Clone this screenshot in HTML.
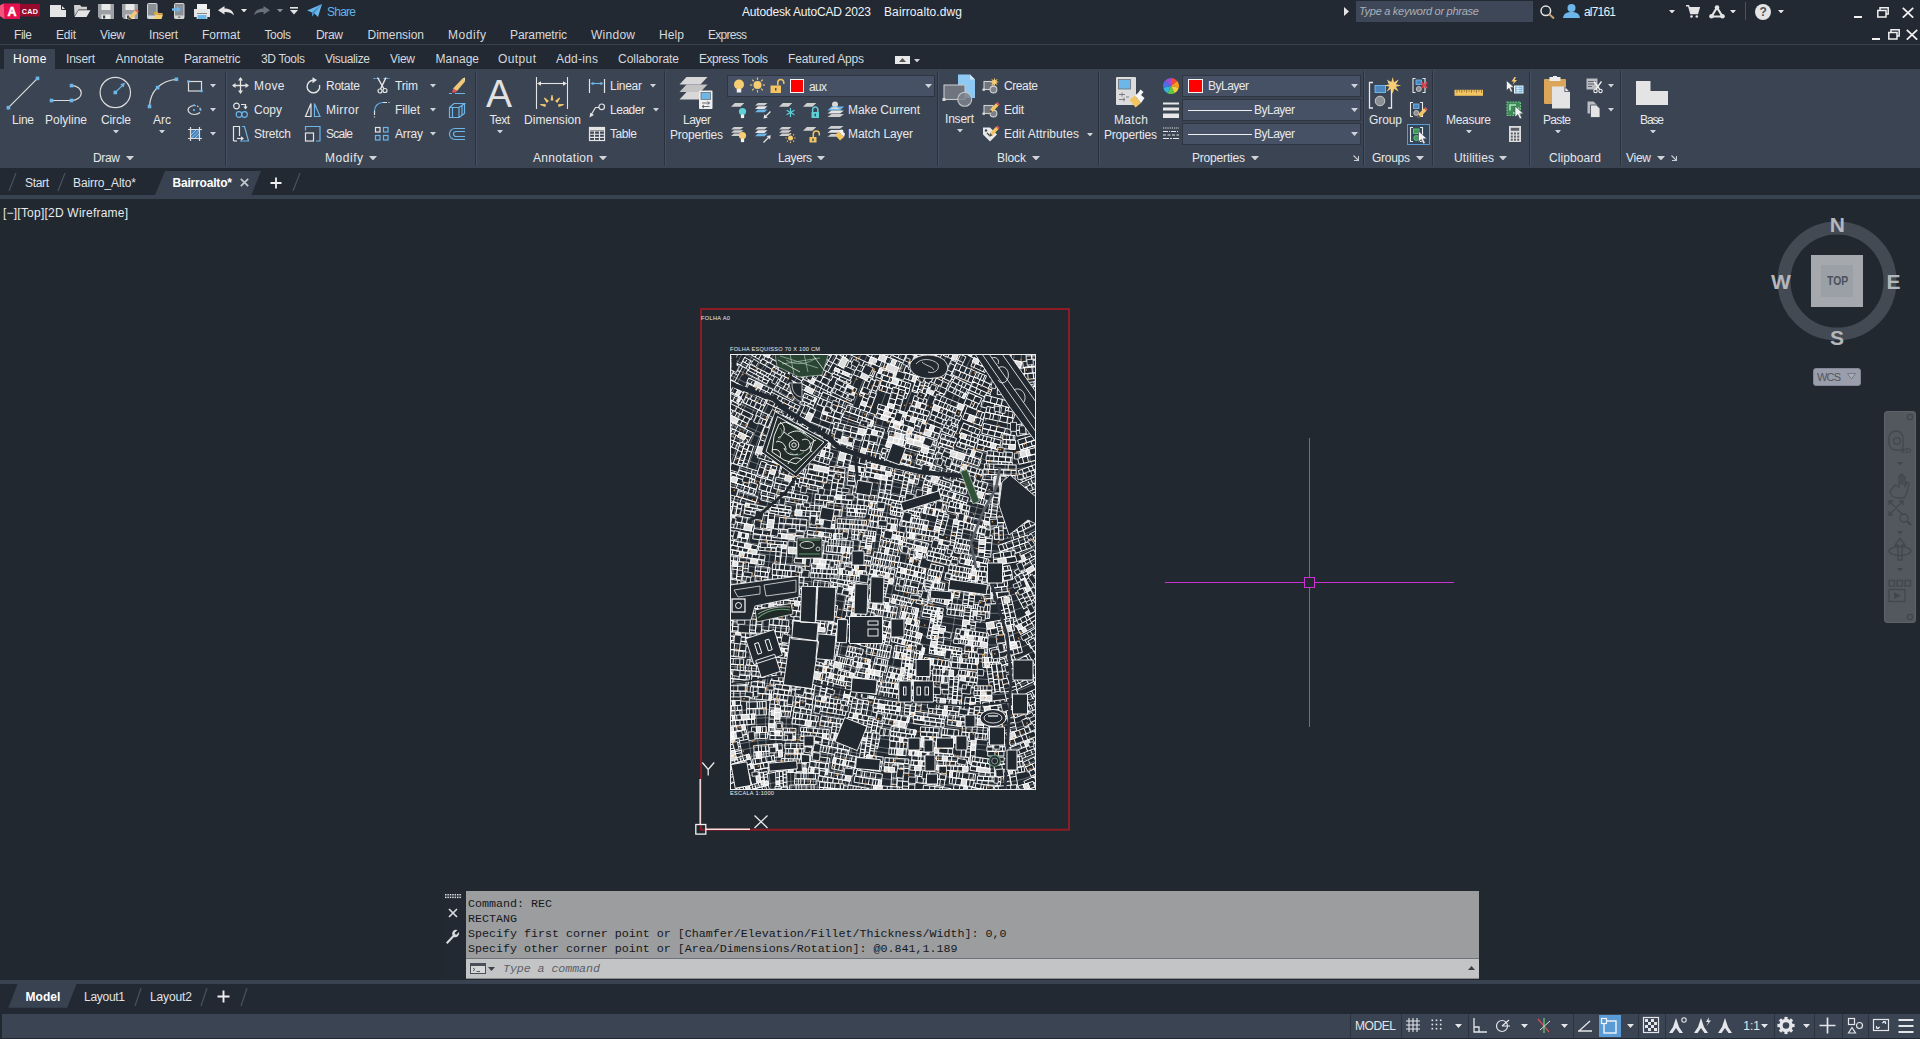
<!DOCTYPE html>
<html><head><meta charset="utf-8"><title>Autodesk AutoCAD 2023 - Bairroalto.dwg</title>
<style>
html,body{margin:0;padding:0;}
body{width:1920px;height:1039px;overflow:hidden;background:#212830;position:relative;font-family:"Liberation Sans",sans-serif;}
.a{position:absolute;display:block;}
.t{position:absolute;white-space:nowrap;display:block;}
</style></head><body>
<div class="a" style="left:0px;top:0px;width:1920px;height:69px;background:#222933;"></div>
<div class="a" style="left:0px;top:44px;width:1920px;height:1px;background:#3a414c;"></div>
<div class="a" style="left:0px;top:69px;width:1920px;height:99px;background:#3b4453;"></div>
<div class="a" style="left:4px;top:49px;width:51px;height:21px;background:#3b4453;"></div>
<div class="a" style="left:0px;top:168px;width:1920px;height:27px;background:#222933;"></div>
<div class="a" style="left:0px;top:195px;width:1920px;height:4px;background:#394250;"></div>
<span class="t" style="left:327.00px;top:4.84px;font:normal 400 12px/14px 'Liberation Sans',sans-serif;color:#5fb4e8;letter-spacing:-0.755px;">Share</span>
<span class="t" style="left:742.00px;top:5.34px;font:normal 400 12px/14px 'Liberation Sans',sans-serif;color:#f0f1f2;letter-spacing:-0.188px;">Autodesk AutoCAD 2023</span>
<span class="t" style="left:884.00px;top:5.34px;font:normal 400 12px/14px 'Liberation Sans',sans-serif;color:#f0f1f2;letter-spacing:0.100px;">Bairroalto.dwg</span>
<div class="a" style="left:1356px;top:1px;width:177px;height:21px;background:#3e4758;"></div>
<span class="t" style="left:1359.00px;top:4.69px;font:italic 400 11px/13px 'Liberation Sans',sans-serif;color:#aab0b8;letter-spacing:-0.285px;">Type a keyword or phrase</span>
<span class="t" style="left:1584.00px;top:4.84px;font:normal 400 12px/14px 'Liberation Sans',sans-serif;color:#f0f1f2;letter-spacing:-0.807px;">al7161</span>
<span class="t" style="left:14.00px;top:27.64px;font:normal 400 12px/14px 'Liberation Sans',sans-serif;color:#d6d9dd;letter-spacing:-0.445px;">File</span>
<span class="t" style="left:56.00px;top:27.64px;font:normal 400 12px/14px 'Liberation Sans',sans-serif;color:#d6d9dd;letter-spacing:-0.226px;">Edit</span>
<span class="t" style="left:100.00px;top:27.64px;font:normal 400 12px/14px 'Liberation Sans',sans-serif;color:#d6d9dd;letter-spacing:-0.264px;">View</span>
<span class="t" style="left:149.00px;top:27.64px;font:normal 400 12px/14px 'Liberation Sans',sans-serif;color:#d6d9dd;letter-spacing:-0.202px;">Insert</span>
<span class="t" style="left:202.00px;top:27.64px;font:normal 400 12px/14px 'Liberation Sans',sans-serif;color:#d6d9dd;letter-spacing:-0.001px;">Format</span>
<span class="t" style="left:264.50px;top:27.64px;font:normal 400 12px/14px 'Liberation Sans',sans-serif;color:#d6d9dd;letter-spacing:-0.378px;">Tools</span>
<span class="t" style="left:316.00px;top:27.64px;font:normal 400 12px/14px 'Liberation Sans',sans-serif;color:#d6d9dd;letter-spacing:-0.334px;">Draw</span>
<span class="t" style="left:367.50px;top:27.64px;font:normal 400 12px/14px 'Liberation Sans',sans-serif;color:#d6d9dd;letter-spacing:-0.024px;">Dimension</span>
<span class="t" style="left:448.00px;top:27.64px;font:normal 400 12px/14px 'Liberation Sans',sans-serif;color:#d6d9dd;letter-spacing:0.531px;">Modify</span>
<span class="t" style="left:510.00px;top:27.64px;font:normal 400 12px/14px 'Liberation Sans',sans-serif;color:#d6d9dd;letter-spacing:-0.113px;">Parametric</span>
<span class="t" style="left:591.00px;top:27.64px;font:normal 400 12px/14px 'Liberation Sans',sans-serif;color:#d6d9dd;letter-spacing:0.264px;">Window</span>
<span class="t" style="left:659.00px;top:27.64px;font:normal 400 12px/14px 'Liberation Sans',sans-serif;color:#d6d9dd;letter-spacing:0.107px;">Help</span>
<span class="t" style="left:708.00px;top:27.64px;font:normal 400 12px/14px 'Liberation Sans',sans-serif;color:#d6d9dd;letter-spacing:-0.725px;">Express</span>
<span class="t" style="left:13.00px;top:52.04px;font:normal 400 12px/14px 'Liberation Sans',sans-serif;color:#ffffff;letter-spacing:0.497px;">Home</span>
<span class="t" style="left:66.00px;top:52.04px;font:normal 400 12px/14px 'Liberation Sans',sans-serif;color:#d6d9dd;letter-spacing:-0.202px;">Insert</span>
<span class="t" style="left:115.50px;top:52.04px;font:normal 400 12px/14px 'Liberation Sans',sans-serif;color:#d6d9dd;letter-spacing:0.066px;">Annotate</span>
<span class="t" style="left:184.00px;top:52.04px;font:normal 400 12px/14px 'Liberation Sans',sans-serif;color:#d6d9dd;letter-spacing:-0.168px;">Parametric</span>
<span class="t" style="left:261.00px;top:52.04px;font:normal 400 12px/14px 'Liberation Sans',sans-serif;color:#d6d9dd;letter-spacing:-0.353px;">3D Tools</span>
<span class="t" style="left:325.00px;top:52.04px;font:normal 400 12px/14px 'Liberation Sans',sans-serif;color:#d6d9dd;letter-spacing:-0.351px;">Visualize</span>
<span class="t" style="left:390.00px;top:52.04px;font:normal 400 12px/14px 'Liberation Sans',sans-serif;color:#d6d9dd;letter-spacing:-0.264px;">View</span>
<span class="t" style="left:435.50px;top:52.04px;font:normal 400 12px/14px 'Liberation Sans',sans-serif;color:#d6d9dd;letter-spacing:0.027px;">Manage</span>
<span class="t" style="left:498.00px;top:52.04px;font:normal 400 12px/14px 'Liberation Sans',sans-serif;color:#d6d9dd;letter-spacing:0.395px;">Output</span>
<span class="t" style="left:556.00px;top:52.04px;font:normal 400 12px/14px 'Liberation Sans',sans-serif;color:#d6d9dd;letter-spacing:0.219px;">Add-ins</span>
<span class="t" style="left:618.00px;top:52.04px;font:normal 400 12px/14px 'Liberation Sans',sans-serif;color:#d6d9dd;letter-spacing:-0.037px;">Collaborate</span>
<span class="t" style="left:699.00px;top:52.04px;font:normal 400 12px/14px 'Liberation Sans',sans-serif;color:#d6d9dd;letter-spacing:-0.457px;">Express Tools</span>
<span class="t" style="left:788.00px;top:52.04px;font:normal 400 12px/14px 'Liberation Sans',sans-serif;color:#d6d9dd;letter-spacing:-0.171px;">Featured Apps</span>
<div class="a" style="left:895px;top:56px;width:15px;height:8px;background:#e8e8e8;"></div>
<svg class="a" style="left:899px;top:58px;" width="7" height="4" viewBox="0 0 7 4"><path d="M0 4H7L3.5 0Z" fill="#555"/></svg>
<svg class="a" style="left:913.5px;top:58.75px;" width="6" height="3.5" viewBox="0 0 6 3.5"><path d="M0 0H6 L3 3.5 Z" fill="#d0d3d7"/></svg>
<div class="a" style="left:225px;top:71px;width:1px;height:95px;background:#2a313c;"></div>
<div class="a" style="left:226px;top:71px;width:1px;height:95px;background:#465062;"></div>
<div class="a" style="left:475px;top:71px;width:1px;height:95px;background:#2a313c;"></div>
<div class="a" style="left:476px;top:71px;width:1px;height:95px;background:#465062;"></div>
<div class="a" style="left:664px;top:71px;width:1px;height:95px;background:#2a313c;"></div>
<div class="a" style="left:665px;top:71px;width:1px;height:95px;background:#465062;"></div>
<div class="a" style="left:937px;top:71px;width:1px;height:95px;background:#2a313c;"></div>
<div class="a" style="left:938px;top:71px;width:1px;height:95px;background:#465062;"></div>
<div class="a" style="left:1098px;top:71px;width:1px;height:95px;background:#2a313c;"></div>
<div class="a" style="left:1099px;top:71px;width:1px;height:95px;background:#465062;"></div>
<div class="a" style="left:1363px;top:71px;width:1px;height:95px;background:#2a313c;"></div>
<div class="a" style="left:1364px;top:71px;width:1px;height:95px;background:#465062;"></div>
<div class="a" style="left:1432px;top:71px;width:1px;height:95px;background:#2a313c;"></div>
<div class="a" style="left:1433px;top:71px;width:1px;height:95px;background:#465062;"></div>
<div class="a" style="left:1529px;top:71px;width:1px;height:95px;background:#2a313c;"></div>
<div class="a" style="left:1530px;top:71px;width:1px;height:95px;background:#465062;"></div>
<div class="a" style="left:1620px;top:71px;width:1px;height:95px;background:#2a313c;"></div>
<div class="a" style="left:1621px;top:71px;width:1px;height:95px;background:#465062;"></div>
<span class="t" style="left:12.00px;top:112.64px;font:normal 400 12px/14px 'Liberation Sans',sans-serif;color:#e6e8ea;letter-spacing:-0.229px;">Line</span>
<span class="t" style="left:45.00px;top:112.64px;font:normal 400 12px/14px 'Liberation Sans',sans-serif;color:#e6e8ea;letter-spacing:-0.003px;">Polyline</span>
<span class="t" style="left:101.00px;top:112.64px;font:normal 400 12px/14px 'Liberation Sans',sans-serif;color:#e6e8ea;letter-spacing:-0.134px;">Circle</span>
<span class="t" style="left:153.00px;top:112.64px;font:normal 400 12px/14px 'Liberation Sans',sans-serif;color:#e6e8ea;letter-spacing:0.000px;">Arc</span>
<svg class="a" style="left:112.5px;top:129.75px;" width="6" height="3.5" viewBox="0 0 6 3.5"><path d="M0 0H6 L3 3.5 Z" fill="#d0d3d7"/></svg>
<svg class="a" style="left:158.5px;top:129.75px;" width="6" height="3.5" viewBox="0 0 6 3.5"><path d="M0 0H6 L3 3.5 Z" fill="#d0d3d7"/></svg>
<span class="t" style="left:93.00px;top:150.84px;font:normal 400 12px/14px 'Liberation Sans',sans-serif;color:#e6e8ea;letter-spacing:-0.334px;">Draw</span>
<svg class="a" style="left:126px;top:155.75px;" width="8" height="4.5" viewBox="0 0 8 4.5"><path d="M0 0H8 L4 4.5 Z" fill="#d0d3d7"/></svg>
<svg class="a" style="left:209.5px;top:84.25px;" width="6" height="3.5" viewBox="0 0 6 3.5"><path d="M0 0H6 L3 3.5 Z" fill="#d0d3d7"/></svg>
<svg class="a" style="left:209.5px;top:108.25px;" width="6" height="3.5" viewBox="0 0 6 3.5"><path d="M0 0H6 L3 3.5 Z" fill="#d0d3d7"/></svg>
<svg class="a" style="left:209.5px;top:132.25px;" width="6" height="3.5" viewBox="0 0 6 3.5"><path d="M0 0H6 L3 3.5 Z" fill="#d0d3d7"/></svg>
<span class="t" style="left:254.00px;top:78.84px;font:normal 400 12px/14px 'Liberation Sans',sans-serif;color:#e6e8ea;letter-spacing:0.385px;">Move</span>
<span class="t" style="left:254.00px;top:102.84px;font:normal 400 12px/14px 'Liberation Sans',sans-serif;color:#e6e8ea;letter-spacing:-0.005px;">Copy</span>
<span class="t" style="left:254.00px;top:126.84px;font:normal 400 12px/14px 'Liberation Sans',sans-serif;color:#e6e8ea;letter-spacing:-0.169px;">Stretch</span>
<span class="t" style="left:326.00px;top:78.84px;font:normal 400 12px/14px 'Liberation Sans',sans-serif;color:#e6e8ea;letter-spacing:-0.271px;">Rotate</span>
<span class="t" style="left:326.00px;top:102.84px;font:normal 400 12px/14px 'Liberation Sans',sans-serif;color:#e6e8ea;letter-spacing:0.335px;">Mirror</span>
<span class="t" style="left:326.00px;top:126.84px;font:normal 400 12px/14px 'Liberation Sans',sans-serif;color:#e6e8ea;letter-spacing:-0.754px;">Scale</span>
<span class="t" style="left:395.00px;top:78.84px;font:normal 400 12px/14px 'Liberation Sans',sans-serif;color:#e6e8ea;letter-spacing:-0.181px;">Trim</span>
<span class="t" style="left:395.00px;top:102.84px;font:normal 400 12px/14px 'Liberation Sans',sans-serif;color:#e6e8ea;letter-spacing:-0.067px;">Fillet</span>
<span class="t" style="left:395.00px;top:126.84px;font:normal 400 12px/14px 'Liberation Sans',sans-serif;color:#e6e8ea;letter-spacing:-0.167px;">Array</span>
<svg class="a" style="left:429.5px;top:84.25px;" width="6" height="3.5" viewBox="0 0 6 3.5"><path d="M0 0H6 L3 3.5 Z" fill="#d0d3d7"/></svg>
<svg class="a" style="left:429.5px;top:108.25px;" width="6" height="3.5" viewBox="0 0 6 3.5"><path d="M0 0H6 L3 3.5 Z" fill="#d0d3d7"/></svg>
<svg class="a" style="left:429.5px;top:132.25px;" width="6" height="3.5" viewBox="0 0 6 3.5"><path d="M0 0H6 L3 3.5 Z" fill="#d0d3d7"/></svg>
<span class="t" style="left:325.00px;top:150.84px;font:normal 400 12px/14px 'Liberation Sans',sans-serif;color:#e6e8ea;letter-spacing:0.531px;">Modify</span>
<svg class="a" style="left:369px;top:155.75px;" width="8" height="4.5" viewBox="0 0 8 4.5"><path d="M0 0H8 L4 4.5 Z" fill="#d0d3d7"/></svg>
<span class="t" style="left:489.50px;top:112.64px;font:normal 400 12px/14px 'Liberation Sans',sans-serif;color:#e6e8ea;letter-spacing:-0.503px;">Text</span>
<svg class="a" style="left:496.5px;top:129.75px;" width="6" height="3.5" viewBox="0 0 6 3.5"><path d="M0 0H6 L3 3.5 Z" fill="#d0d3d7"/></svg>
<span class="t" style="left:524.00px;top:112.64px;font:normal 400 12px/14px 'Liberation Sans',sans-serif;color:#e6e8ea;letter-spacing:0.039px;">Dimension</span>
<span class="t" style="left:610.00px;top:78.84px;font:normal 400 12px/14px 'Liberation Sans',sans-serif;color:#e6e8ea;letter-spacing:-0.271px;">Linear</span>
<svg class="a" style="left:649.5px;top:84.25px;" width="6" height="3.5" viewBox="0 0 6 3.5"><path d="M0 0H6 L3 3.5 Z" fill="#d0d3d7"/></svg>
<span class="t" style="left:610.00px;top:102.84px;font:normal 400 12px/14px 'Liberation Sans',sans-serif;color:#e6e8ea;letter-spacing:-0.473px;">Leader</span>
<svg class="a" style="left:652.5px;top:108.25px;" width="6" height="3.5" viewBox="0 0 6 3.5"><path d="M0 0H6 L3 3.5 Z" fill="#d0d3d7"/></svg>
<span class="t" style="left:610.00px;top:126.84px;font:normal 400 12px/14px 'Liberation Sans',sans-serif;color:#e6e8ea;letter-spacing:-0.422px;">Table</span>
<span class="t" style="left:533.00px;top:150.84px;font:normal 400 12px/14px 'Liberation Sans',sans-serif;color:#e6e8ea;letter-spacing:0.291px;">Annotation</span>
<svg class="a" style="left:599px;top:155.75px;" width="8" height="4.5" viewBox="0 0 8 4.5"><path d="M0 0H8 L4 4.5 Z" fill="#d0d3d7"/></svg>
<span class="t" style="left:683.00px;top:112.64px;font:normal 400 12px/14px 'Liberation Sans',sans-serif;color:#e6e8ea;letter-spacing:-0.504px;">Layer</span>
<span class="t" style="left:670.00px;top:127.64px;font:normal 400 12px/14px 'Liberation Sans',sans-serif;color:#e6e8ea;letter-spacing:-0.188px;">Properties</span>
<span class="t" style="left:848.00px;top:102.84px;font:normal 400 12px/14px 'Liberation Sans',sans-serif;color:#e6e8ea;letter-spacing:-0.063px;">Make Current</span>
<span class="t" style="left:848.00px;top:126.84px;font:normal 400 12px/14px 'Liberation Sans',sans-serif;color:#e6e8ea;letter-spacing:-0.103px;">Match Layer</span>
<span class="t" style="left:778.00px;top:150.84px;font:normal 400 12px/14px 'Liberation Sans',sans-serif;color:#e6e8ea;letter-spacing:-0.404px;">Layers</span>
<svg class="a" style="left:817px;top:155.75px;" width="8" height="4.5" viewBox="0 0 8 4.5"><path d="M0 0H8 L4 4.5 Z" fill="#d0d3d7"/></svg>
<span class="t" style="left:945.00px;top:111.84px;font:normal 400 12px/14px 'Liberation Sans',sans-serif;color:#e6e8ea;letter-spacing:-0.202px;">Insert</span>
<svg class="a" style="left:956.5px;top:129.25px;" width="6" height="3.5" viewBox="0 0 6 3.5"><path d="M0 0H6 L3 3.5 Z" fill="#d0d3d7"/></svg>
<span class="t" style="left:1004.00px;top:78.84px;font:normal 400 12px/14px 'Liberation Sans',sans-serif;color:#e6e8ea;letter-spacing:-0.404px;">Create</span>
<span class="t" style="left:1004.00px;top:102.84px;font:normal 400 12px/14px 'Liberation Sans',sans-serif;color:#e6e8ea;letter-spacing:-0.226px;">Edit</span>
<span class="t" style="left:1004.00px;top:126.84px;font:normal 400 12px/14px 'Liberation Sans',sans-serif;color:#e6e8ea;letter-spacing:0.069px;">Edit Attributes</span>
<svg class="a" style="left:1086.5px;top:132.75px;" width="6" height="3.5" viewBox="0 0 6 3.5"><path d="M0 0H6 L3 3.5 Z" fill="#d0d3d7"/></svg>
<span class="t" style="left:997.00px;top:150.84px;font:normal 400 12px/14px 'Liberation Sans',sans-serif;color:#e6e8ea;letter-spacing:-0.086px;">Block</span>
<svg class="a" style="left:1032px;top:155.75px;" width="8" height="4.5" viewBox="0 0 8 4.5"><path d="M0 0H8 L4 4.5 Z" fill="#d0d3d7"/></svg>
<span class="t" style="left:1114.00px;top:112.64px;font:normal 400 12px/14px 'Liberation Sans',sans-serif;color:#e6e8ea;letter-spacing:0.331px;">Match</span>
<span class="t" style="left:1104.00px;top:127.64px;font:normal 400 12px/14px 'Liberation Sans',sans-serif;color:#e6e8ea;letter-spacing:-0.188px;">Properties</span>
<span class="t" style="left:1192.00px;top:150.84px;font:normal 400 12px/14px 'Liberation Sans',sans-serif;color:#e6e8ea;letter-spacing:-0.188px;">Properties</span>
<svg class="a" style="left:1251px;top:155.75px;" width="8" height="4.5" viewBox="0 0 8 4.5"><path d="M0 0H8 L4 4.5 Z" fill="#d0d3d7"/></svg>
<span class="t" style="left:1369.00px;top:112.64px;font:normal 400 12px/14px 'Liberation Sans',sans-serif;color:#e6e8ea;letter-spacing:-0.088px;">Group</span>
<span class="t" style="left:1372.00px;top:150.84px;font:normal 400 12px/14px 'Liberation Sans',sans-serif;color:#e6e8ea;letter-spacing:-0.270px;">Groups</span>
<svg class="a" style="left:1416px;top:155.75px;" width="8" height="4.5" viewBox="0 0 8 4.5"><path d="M0 0H8 L4 4.5 Z" fill="#d0d3d7"/></svg>
<span class="t" style="left:1446.00px;top:112.64px;font:normal 400 12px/14px 'Liberation Sans',sans-serif;color:#e6e8ea;letter-spacing:-0.281px;">Measure</span>
<svg class="a" style="left:1465.5px;top:129.75px;" width="6" height="3.5" viewBox="0 0 6 3.5"><path d="M0 0H6 L3 3.5 Z" fill="#d0d3d7"/></svg>
<span class="t" style="left:1454.00px;top:150.84px;font:normal 400 12px/14px 'Liberation Sans',sans-serif;color:#e6e8ea;letter-spacing:0.166px;">Utilities</span>
<svg class="a" style="left:1499px;top:155.75px;" width="8" height="4.5" viewBox="0 0 8 4.5"><path d="M0 0H8 L4 4.5 Z" fill="#d0d3d7"/></svg>
<span class="t" style="left:1543.00px;top:112.64px;font:normal 400 12px/14px 'Liberation Sans',sans-serif;color:#e6e8ea;letter-spacing:-0.671px;">Paste</span>
<svg class="a" style="left:1554.5px;top:129.75px;" width="6" height="3.5" viewBox="0 0 6 3.5"><path d="M0 0H6 L3 3.5 Z" fill="#d0d3d7"/></svg>
<span class="t" style="left:1549.00px;top:150.84px;font:normal 400 12px/14px 'Liberation Sans',sans-serif;color:#e6e8ea;letter-spacing:0.080px;">Clipboard</span>
<span class="t" style="left:1640.00px;top:112.64px;font:normal 400 12px/14px 'Liberation Sans',sans-serif;color:#e6e8ea;letter-spacing:-1.117px;">Base</span>
<svg class="a" style="left:1649.5px;top:129.75px;" width="6" height="3.5" viewBox="0 0 6 3.5"><path d="M0 0H6 L3 3.5 Z" fill="#d0d3d7"/></svg>
<span class="t" style="left:1626.00px;top:150.84px;font:normal 400 12px/14px 'Liberation Sans',sans-serif;color:#e6e8ea;letter-spacing:-0.264px;">View</span>
<svg class="a" style="left:1657px;top:155.75px;" width="8" height="4.5" viewBox="0 0 8 4.5"><path d="M0 0H8 L4 4.5 Z" fill="#d0d3d7"/></svg>
<svg class="a" style="left:1353px;top:155px;" width="6" height="6" viewBox="0 0 6 6"><path d="M5.5 1V5.5H1M0.5 0.5L5.5 5.5" stroke="#c8ccd2" stroke-width="1.1" fill="none"/></svg>
<svg class="a" style="left:1671px;top:155px;" width="6" height="6" viewBox="0 0 6 6"><path d="M5.5 1V5.5H1M0.5 0.5L5.5 5.5" stroke="#c8ccd2" stroke-width="1.1" fill="none"/></svg>
<div class="a" style="left:727px;top:75px;width:208px;height:22px;background:#475166;box-sizing:border-box;border:1px solid #2e3541;"></div>
<span class="t" style="left:809.00px;top:79.84px;font:normal 400 12px/14px 'Liberation Sans',sans-serif;color:#e6e8ea;letter-spacing:-0.674px;">aux</span>
<svg class="a" style="left:925px;top:84px;" width="7" height="4" viewBox="0 0 7 4"><path d="M0 0H7 L3.5 4 Z" fill="#d0d3d7"/></svg>
<div class="a" style="left:790px;top:79px;width:14px;height:14px;background:#ff0000;box-sizing:border-box;border:1px solid #f6f6f6;"></div>
<div class="a" style="left:1182px;top:75px;width:179px;height:22px;background:#475166;box-sizing:border-box;border:1px solid #2e3541;"></div>
<svg class="a" style="left:1351px;top:84px;" width="7" height="4" viewBox="0 0 7 4"><path d="M0 0H7 L3.5 4 Z" fill="#d0d3d7"/></svg>
<div class="a" style="left:1182px;top:99px;width:179px;height:22px;background:#475166;box-sizing:border-box;border:1px solid #2e3541;"></div>
<svg class="a" style="left:1351px;top:108px;" width="7" height="4" viewBox="0 0 7 4"><path d="M0 0H7 L3.5 4 Z" fill="#d0d3d7"/></svg>
<div class="a" style="left:1182px;top:123px;width:179px;height:22px;background:#475166;box-sizing:border-box;border:1px solid #2e3541;"></div>
<svg class="a" style="left:1351px;top:132px;" width="7" height="4" viewBox="0 0 7 4"><path d="M0 0H7 L3.5 4 Z" fill="#d0d3d7"/></svg>
<div class="a" style="left:1188px;top:79px;width:15px;height:14px;background:#ff0000;box-sizing:border-box;border:1px solid #f6f6f6;"></div>
<span class="t" style="left:1208.00px;top:78.84px;font:normal 400 12px/14px 'Liberation Sans',sans-serif;color:#e6e8ea;letter-spacing:-0.504px;">ByLayer</span>
<div class="a" style="left:1188px;top:109.5px;width:64px;height:1px;background:#f0f0f0;"></div>
<span class="t" style="left:1254.00px;top:102.84px;font:normal 400 12px/14px 'Liberation Sans',sans-serif;color:#e6e8ea;letter-spacing:-0.504px;">ByLayer</span>
<div class="a" style="left:1188px;top:133.5px;width:64px;height:1px;background:#f0f0f0;"></div>
<span class="t" style="left:1254.00px;top:126.84px;font:normal 400 12px/14px 'Liberation Sans',sans-serif;color:#e6e8ea;letter-spacing:-0.504px;">ByLayer</span>
<svg class="a" style="left:8px;top:173px;" width="9" height="18" viewBox="0 0 9 18"><path d="M8 0L1 18" stroke="#4a5260" stroke-width="1.2"/></svg>
<svg class="a" style="left:57px;top:173px;" width="9" height="18" viewBox="0 0 9 18"><path d="M8 0L1 18" stroke="#4a5260" stroke-width="1.2"/></svg>
<svg class="a" style="left:154px;top:171px;" width="108" height="24" viewBox="0 0 108 24"><path d="M11 0H107L97.500 24H1Z" fill="#394250"/></svg>
<svg class="a" style="left:292px;top:173px;" width="9" height="18" viewBox="0 0 9 18"><path d="M8 0L1 18" stroke="#4a5260" stroke-width="1.2"/></svg>
<span class="t" style="left:25.00px;top:175.84px;font:normal 400 12px/14px 'Liberation Sans',sans-serif;color:#e0e2e5;letter-spacing:-0.335px;">Start</span>
<span class="t" style="left:73.00px;top:175.84px;font:normal 400 12px/14px 'Liberation Sans',sans-serif;color:#e0e2e5;letter-spacing:-0.094px;">Bairro_Alto*</span>
<span class="t" style="left:172.50px;top:175.64px;font:normal 700 12px/14px 'Liberation Sans',sans-serif;color:#ffffff;letter-spacing:-0.185px;">Bairroalto*</span>
<svg class="a" style="left:240px;top:178px;" width="9" height="9" viewBox="0 0 9 9"><path d="M0.8 0.8L8.2 8.2M8.2 0.8L0.8 8.2" stroke="#c4c8ce" stroke-width="1.7"/></svg>
<svg class="a" style="left:270px;top:177px;" width="12" height="12" viewBox="0 0 12 12"><path d="M6 0.5V11.5M0.5 6H11.5" stroke="#f0f0f0" stroke-width="1.8"/></svg>
<svg class="a" style="left:0px;top:2px;" width="42" height="19" viewBox="0 0 42 19"><path d="M0 3.500L3.600 1.500H20V17H4.500L0 14Z" fill="#e51050"/><path d="M0 3.500L3.600 1.500L4.500 17L0 14Z" fill="#f0557c"/><path d="M20 2H40V14.500H20Z" fill="#960a2c"/><text x="7.400" y="13.700" font-family="Liberation Sans" font-weight="700" font-size="12.500" fill="#fff" stroke="#fff" stroke-width=".5">A</text><text x="21.800" y="11.800" font-family="Liberation Sans" font-weight="700" font-size="7.200" fill="#fff" letter-spacing="0.300">CAD</text></svg>
<svg class="a" style="left:50px;top:5px;" width="16" height="12" viewBox="0 0 16 12"><path d="M0 0H11L16 5V12H0Z" fill="#e4e4e4"/><path d="M11.500 0V4.500H16" fill="none" stroke="#222933" stroke-width="1"/></svg>
<svg class="a" style="left:74px;top:5px;" width="17" height="12" viewBox="0 0 17 12"><path d="M0 0H6L7.500 1.800H13V4.500H4.500L0.500 11Z" fill="#cfcfcf"/><path d="M4.500 5.300H16.500L12.500 12H0.500Z" fill="#e4e4e4"/></svg>
<svg class="a" style="left:98px;top:3.5px;" width="16" height="15.5" viewBox="0 0 16 15.5"><path d="M0 0H16V15.500H2.500L0 13Z" fill="#9da0a5"/><rect x="3.500" y="0" width="9" height="6" fill="#e9e9e9"/><rect x="3.500" y="10.500" width="9" height="5" fill="#e9e9e9"/><rect x="5" y="11.500" width="2.200" height="3" fill="#3a3f48"/></svg>
<svg class="a" style="left:122px;top:3.5px;" width="16" height="15.5" viewBox="0 0 16 15.5"><path d="M0 0H16V15.500H2.500L0 13Z" fill="#9da0a5"/><rect x="3.500" y="0" width="9" height="6" fill="#e9e9e9"/><rect x="3.500" y="10.500" width="9" height="5" fill="#e9e9e9"/><rect x="5" y="11.500" width="2.200" height="3" fill="#3a3f48"/></svg>
<svg class="a" style="left:127px;top:9px;" width="12" height="11" viewBox="0 0 13 12"><path d="M2 8.500L8.500 1.500L11.500 4.200L5 11L1 12Z" fill="#f0c878"/><path d="M8.500 1.500L10 0L13 2.700L11.500 4.200Z" fill="#e8636b"/><path d="M2 8.500L1 12L5 11Z" fill="#444"/></svg>
<svg class="a" style="left:147px;top:3px;" width="16" height="17" viewBox="0 0 16 17"><rect x="0.500" y="0.500" width="9.500" height="15" rx="1" fill="#8a8f96" stroke="#d6d6d6" stroke-width="1"/><rect x="0.500" y="12.500" width="9.500" height="3" fill="#d6d6d6"/><path d="M7 9H10.500L11.500 10H15.500V11.500H7Z" fill="#e0a93f"/><path d="M8.500 11.500H16L14.500 16H7Z" fill="#f6cf73"/></svg>
<svg class="a" style="left:172px;top:3px;" width="13" height="17" viewBox="0 0 13 17"><rect x="2.500" y="0.500" width="9.500" height="15" rx="1" fill="#8a8f96" stroke="#d6d6d6" stroke-width="1"/><rect x="2.500" y="12.500" width="9.500" height="3" fill="#d6d6d6"/><rect x="6" y="13.600" width="2.500" height="1" fill="#555"/><path d="M0 5.200H5V3L9 6.500L5 10V7.800H0Z" fill="#6cb6ea"/></svg>
<svg class="a" style="left:194px;top:3.5px;" width="16" height="15.5" viewBox="0 0 16 15.5"><rect x="3" y="0" width="10" height="5" fill="#f1f1f1"/><path d="M0 5H16V13H13V9.500H3V13H0Z" fill="#e6e6e6"/><rect x="3.200" y="10.500" width="9.600" height="5" fill="#6cb6ea" stroke="#e6e6e6" stroke-width="1"/></svg>
<svg class="a" style="left:218px;top:5.5px;" width="16" height="10" viewBox="0 0 16 10"><path d="M0 4.200L6.500 0V2.600C12 2.600 15.500 5 15.800 9.500C13.500 6.800 10.500 6 6.500 6.100V8.600Z" fill="#e4e4e4"/></svg>
<svg class="a" style="left:240.5px;top:8.75px;" width="6" height="3.5" viewBox="0 0 6 3.5"><path d="M0 0H6 L3 3.5 Z" fill="#e4e4e4"/></svg>
<svg class="a" style="left:254px;top:5.5px;" width="16" height="10" viewBox="0 0 16 10"><path d="M16 4.200L9.500 0V2.600C4 2.600 0.500 5 0.200 9.500C2.500 6.800 5.500 6 9.500 6.100V8.600Z" fill="#69707b"/></svg>
<svg class="a" style="left:276.5px;top:8.75px;" width="6" height="3.5" viewBox="0 0 6 3.5"><path d="M0 0H6 L3 3.5 Z" fill="#8a9099"/></svg>
<svg class="a" style="left:290px;top:7px;" width="8" height="7.5" viewBox="0 0 8 7.5"><rect x="0" y="0" width="8" height="1.600" fill="#e4e4e4"/><path d="M0 3H8L4 7.500Z" fill="#e4e4e4"/></svg>
<svg class="a" style="left:307px;top:4px;" width="15" height="14" viewBox="0 0 15 14"><path d="M0 6.500L15 0L11 13L7.200 9.300L5.300 12.500L4.800 8.200Z" fill="#6cb6ea"/><path d="M15 0L4.800 8.200L5.300 12.500L7.200 9.300Z" fill="#3d8fca"/></svg>
<svg class="a" style="left:1344px;top:7px;" width="5" height="9" viewBox="0 0 5 9"><path d="M0 0L5 4.500L0 9Z" fill="#e4e4e4"/></svg>
<svg class="a" style="left:1540px;top:5px;" width="15" height="14" viewBox="0 0 15 14"><circle cx="5.800" cy="5.800" r="4.800" fill="none" stroke="#e4e4e4" stroke-width="1.500"/><path d="M9.300 9.300L14 13.500" stroke="#c9a36b" stroke-width="2"/></svg>
<svg class="a" style="left:1562.5px;top:4px;" width="17" height="14" viewBox="0 0 17 14"><circle cx="8.500" cy="4" r="4" fill="#6cb6ea"/><path d="M0 14C0.500 9.500 4 8 8.500 8C13 8 16.500 9.500 17 14Z" fill="#6cb6ea"/></svg>
<svg class="a" style="left:1668.5px;top:9.75px;" width="6" height="3.5" viewBox="0 0 6 3.5"><path d="M0 0H6 L3 3.5 Z" fill="#e4e4e4"/></svg>
<svg class="a" style="left:1686px;top:5px;" width="14" height="13" viewBox="0 0 14 13"><path d="M0 0.800H2.600L4.800 8.500H11.500L13.200 2.800H3.300" fill="none" stroke="#e4e4e4" stroke-width="1.400"/><path d="M3.600 3H13L11.500 8H5Z" fill="#e4e4e4"/><circle cx="5.500" cy="11.500" r="1.300" fill="#e4e4e4"/><circle cx="10.800" cy="11.500" r="1.300" fill="#e4e4e4"/></svg>
<svg class="a" style="left:1708.5px;top:4.5px;" width="16" height="14" viewBox="0 0 16 14"><path d="M8 2.500L2.500 11.500H13.500Z" fill="none" stroke="#e4e4e4" stroke-width="2.200" stroke-linejoin="round"/><circle cx="8" cy="2.600" r="2.300" fill="#e4e4e4"/><circle cx="2.500" cy="11.300" r="2.300" fill="#e4e4e4"/><circle cx="13.500" cy="11.300" r="2.300" fill="#e4e4e4"/></svg>
<svg class="a" style="left:1729.5px;top:9.75px;" width="6" height="3.5" viewBox="0 0 6 3.5"><path d="M0 0H6 L3 3.5 Z" fill="#e4e4e4"/></svg>
<div class="a" style="left:1745px;top:2px;width:1px;height:18px;background:#4a5260;"></div>
<svg class="a" style="left:1755px;top:3.5px;" width="16" height="16" viewBox="0 0 16 16"><circle cx="8" cy="8" r="8" fill="#e4e4e4"/><text x="4.600" y="12.300" font-family="Liberation Sans, sans-serif" font-weight="700" font-size="12" fill="#4a4f58">?</text></svg>
<svg class="a" style="left:1778px;top:9.75px;" width="6" height="3.5" viewBox="0 0 6 3.5"><path d="M0 0H6 L3 3.5 Z" fill="#e4e4e4"/></svg>
<div class="a" style="left:1854px;top:16px;width:8px;height:1.6px;background:#f0f0f0;"></div>
<svg class="a" style="left:1877px;top:7px;" width="12" height="11" viewBox="0 0 12 11"><path d="M3 3V0.800H11.200V7H9" fill="none" stroke="#f0f0f0" stroke-width="1.500"/><rect x="0.800" y="3.500" width="8.200" height="6.500" fill="none" stroke="#f0f0f0" stroke-width="1.500"/></svg>
<svg class="a" style="left:1902px;top:6.5px;" width="12" height="11.5" viewBox="0 0 12 11.5"><path d="M0.800 0.800L11.200 10.700M11.200 0.800L0.800 10.700" stroke="#f0f0f0" stroke-width="1.700"/></svg>
<div class="a" style="left:1872px;top:38px;width:8px;height:1.6px;background:#f0f0f0;"></div>
<svg class="a" style="left:1888px;top:29px;" width="12" height="11" viewBox="0 0 12 11"><path d="M3 3V0.800H11.200V7H9" fill="none" stroke="#f0f0f0" stroke-width="1.500"/><rect x="0.800" y="3.500" width="8.200" height="6.500" fill="none" stroke="#f0f0f0" stroke-width="1.500"/></svg>
<svg class="a" style="left:1906px;top:28.5px;" width="12" height="11.5" viewBox="0 0 12 11.5"><path d="M0.800 0.800L11.200 10.700M11.200 0.800L0.800 10.700" stroke="#f0f0f0" stroke-width="1.700"/></svg>
<svg class="a" style="left:0px;top:70px;" width="48" height="48" viewBox="0 0 48 48"><path d="M8.400 37.700L37.500 8.400" stroke="#dcdcdc" stroke-width="1.200"/><rect x="6.6" y="35.9" width="3.6" height="3.6" fill="#6cb6ea"/><rect x="35.7" y="6.6" width="3.6" height="3.6" fill="#6cb6ea"/></svg>
<svg class="a" style="left:44px;top:70px;" width="48" height="48" viewBox="0 0 48 48"><path d="M7.500 30.500H27.500M27.500 30.500A9.800 7.450 0 0 0 27.500 15.600" fill="none" stroke="#dcdcdc" stroke-width="1.200"/><rect x="5.7" y="28.7" width="3.6" height="3.6" fill="#6cb6ea"/><rect x="25.7" y="28.7" width="3.6" height="3.6" fill="#6cb6ea"/><rect x="25.7" y="13.8" width="3.6" height="3.6" fill="#6cb6ea"/></svg>
<svg class="a" style="left:92px;top:70px;" width="48" height="48" viewBox="0 0 48 48"><circle cx="23.300" cy="22.500" r="15.200" fill="none" stroke="#dcdcdc" stroke-width="1.200"/><path d="M23.300 22.500L31 14.800" stroke="#6cb6ea" stroke-width="1.200"/><path d="M33 12.800L28.300 14.300L31.500 17.500Z" fill="#6cb6ea"/><rect x="21.5" y="20.7" width="3.6" height="3.6" fill="#6cb6ea"/></svg>
<svg class="a" style="left:140px;top:70px;" width="48" height="48" viewBox="0 0 48 48"><path d="M9.500 36.500C10 22 20 10.500 36.400 9.300" fill="none" stroke="#dcdcdc" stroke-width="1.200"/><rect x="7.7" y="34.7" width="3.6" height="3.6" fill="#6cb6ea"/><rect x="15.8" y="15.8" width="3.6" height="3.6" fill="#6cb6ea"/><rect x="34.6" y="7.5" width="3.6" height="3.6" fill="#6cb6ea"/></svg>
<svg class="a" style="left:186px;top:78px;" width="18" height="16" viewBox="0 0 18 16"><rect x="2.500" y="3.500" width="13" height="9.500" fill="none" stroke="#dcdcdc" stroke-width="1.200"/><rect x="1.3" y="2.3" width="2.4" height="2.4" fill="#6cb6ea"/><rect x="14.3" y="11.8" width="2.4" height="2.4" fill="#6cb6ea"/></svg>
<svg class="a" style="left:186px;top:102px;" width="18" height="16" viewBox="0 0 18 16"><path d="M8 3.500A6.500 4.500 0 1 0 14 10.500" fill="none" stroke="#dcdcdc" stroke-width="1.200"/><path d="M8 3.500A6.500 4.500 0 0 1 14.500 8" fill="none" stroke="#dcdcdc" stroke-width="1.200" stroke-dasharray="1.500 1.500"/><rect x="7.1" y="7.1" width="1.8" height="1.8" fill="#6cb6ea"/><rect x="7.1" y="2.3" width="1.8" height="1.8" fill="#6cb6ea"/><rect x="13.6" y="7.1" width="1.8" height="1.8" fill="#6cb6ea"/></svg>
<svg class="a" style="left:186px;top:126px;" width="18" height="16" viewBox="0 0 18 16"><rect x="4.500" y="3.500" width="9" height="9" fill="#4a80b4"/><path d="M5 9L10 4M5 12.500L13.500 4M8.500 12.500L13.500 7.500" stroke="#8cc4f0" stroke-width="1"/><path d="M4.500 1V15M13.500 1V15M2 3.500H16M2 12.500H16" stroke="#dcdcdc" stroke-width="1.200"/></svg>
<svg class="a" style="left:232px;top:77px;" width="17" height="17" viewBox="0 0 17 17"><path d="M8.500 1.500V15.500M1.500 8.500H15.500" stroke="#e4e4e4" stroke-width="1.300"/><path d="M8.500 0L11 3.500H6ZM8.500 17L11 13.500H6ZM0 8.500L3.500 6V11ZM17 8.500L13.500 6V11Z" fill="#e4e4e4"/></svg>
<svg class="a" style="left:232px;top:101px;" width="18" height="18" viewBox="0 0 18 18"><circle cx="4.500" cy="5" r="2.800" fill="none" stroke="#e4e4e4" stroke-width="1.200"/><path d="M9 3.500H13.500V6" fill="none" stroke="#e4e4e4" stroke-width="1.200"/><path d="M13.500 8.500L11.300 5.500H15.700Z" fill="#e4e4e4"/><circle cx="7" cy="13.500" r="2.800" fill="none" stroke="#6cb6ea" stroke-width="1.200"/><circle cx="12.500" cy="13.500" r="2.800" fill="none" stroke="#6cb6ea" stroke-width="1.200"/></svg>
<svg class="a" style="left:232px;top:125px;" width="18" height="18" viewBox="0 0 18 18"><path d="M1.500 16V1.500H7.500V11" fill="none" stroke="#e4e4e4" stroke-width="1.200"/><path d="M1.500 16H5" stroke="#e4e4e4" stroke-width="1.200"/><path d="M10 1.500H12.500L16.500 16H8" fill="none" stroke="#6cb6ea" stroke-width="1.200"/><path d="M5 13.500H10" stroke="#e4e4e4" stroke-width="1.200"/><path d="M12 13.500L9 11.300V15.700Z" fill="#e4e4e4"/></svg>
<svg class="a" style="left:304px;top:77px;" width="18" height="18" viewBox="0 0 18 18"><path d="M9.500 3.200A6.300 6.300 0 1 0 15.500 8" fill="none" stroke="#e4e4e4" stroke-width="1.400"/><path d="M8.500 0.200L13 3L8.500 6.200Z" fill="#e4e4e4"/></svg>
<svg class="a" style="left:304px;top:101px;" width="18" height="18" viewBox="0 0 18 18"><path d="M7 2.500V15.500H1.500Z" fill="none" stroke="#e4e4e4" stroke-width="1.200"/><path d="M10.500 2.500V15.500H16Z" fill="none" stroke="#6cb6ea" stroke-width="1.200"/></svg>
<svg class="a" style="left:304px;top:125px;" width="18" height="18" viewBox="0 0 18 18"><rect x="1.500" y="8" width="8" height="8" fill="none" stroke="#e4e4e4" stroke-width="1.200"/><path d="M1.500 5.500V1.500H16V16H12" fill="none" stroke="#6cb6ea" stroke-width="1.200"/></svg>
<svg class="a" style="left:373px;top:77px;" width="18" height="18" viewBox="0 0 18 18"><path d="M0.500 1.500H7M10.500 1.500H17" stroke="#6cb6ea" stroke-width="1.100" stroke-dasharray="2 1"/><path d="M4.500 0.500L11 12M13 0.500L7.500 12" stroke="#e4e4e4" stroke-width="1.500"/><circle cx="7" cy="14" r="2" fill="none" stroke="#e4e4e4" stroke-width="1.200"/><circle cx="12" cy="13.500" r="2" fill="none" stroke="#e4e4e4" stroke-width="1.200"/></svg>
<svg class="a" style="left:373px;top:101px;" width="18" height="18" viewBox="0 0 18 18"><path d="M1.500 10C1.500 5 5 1.500 10 1.500" fill="none" stroke="#6cb6ea" stroke-width="1.200"/><path d="M10 1.500H16.500M1.500 10V16.500" stroke="#e4e4e4" stroke-width="1.200" stroke-dasharray="4 1.500"/></svg>
<svg class="a" style="left:374px;top:126px;" width="16" height="16" viewBox="0 0 16 16"><rect x="1.500" y="1.500" width="4.500" height="4.500" fill="none" stroke="#e4e4e4" stroke-width="1.200"/><rect x="9.5" y="1.5" width="4.500" height="4.500" fill="none" stroke="#6cb6ea" stroke-width="1.200"/><rect x="1.5" y="9.5" width="4.500" height="4.500" fill="none" stroke="#6cb6ea" stroke-width="1.200"/><rect x="9.5" y="9.5" width="4.500" height="4.500" fill="none" stroke="#6cb6ea" stroke-width="1.200"/></svg>
<svg class="a" style="left:448px;top:77px;" width="18" height="18" viewBox="0 0 18 18"><path d="M5 11.500L14.500 1.500L17 4.500L9 14Z" fill="#f2c878"/><path d="M5 11.500L9 14L7.500 15.500H4Z" fill="#e8525a"/><path d="M14.500 1.500L17 0.500V4.500Z" fill="#f7e2b0"/><path d="M1 16.500H4M7 16.500H17" stroke="#6cb6ea" stroke-width="1.100"/></svg>
<svg class="a" style="left:448px;top:101px;" width="18" height="18" viewBox="0 0 18 18"><path d="M1.500 6.500H11V16.500H1.500ZM1.500 6.500L6 2.500H16.500L11 6.500M16.500 2.500V12.500L11 16.500M4.500 6.500V16.500M14 4.500V14.500" fill="none" stroke="#6cb6ea" stroke-width="1.200"/></svg>
<svg class="a" style="left:448px;top:126px;" width="18" height="16" viewBox="0 0 18 16"><path d="M17 2.500H7A5.500 5.500 0 0 0 7 13.500H17" fill="none" stroke="#6cb6ea" stroke-width="1.200"/><path d="M17 5.500H8A2.500 2.500 0 0 0 8 10.500H17" fill="none" stroke="#6cb6ea" stroke-width="1.200"/></svg>
<span class="t" style="left:486.00px;top:69.99px;font:normal 400 39px/47px 'Liberation Sans',sans-serif;color:#e2e2e2;">A</span>
<svg class="a" style="left:530px;top:74px;" width="44" height="38" viewBox="0 0 44 38"><path d="M6.500 3V35M37.500 3V35" stroke="#e4e4e4" stroke-width="1.100"/><path d="M9 9.500H35" stroke="#e4e4e4" stroke-width="1.100"/><path d="M7 9.500L11 7.300V11.700ZM37 9.500L33 7.300V11.700Z" fill="#e4e4e4"/><path d="M-1.400 -6.500L1.400 -6.500L0.500 -12L-0.500 -12Z" fill="#f6cd72" transform="translate(22,33) rotate(-78)"/><path d="M-1.400 -6.500L1.400 -6.500L0.500 -12L-0.500 -12Z" fill="#f6cd72" transform="translate(22,33) rotate(-40)"/><path d="M-1.400 -6.500L1.400 -6.500L0.500 -12L-0.500 -12Z" fill="#f6cd72" transform="translate(22,33) rotate(0)"/><path d="M-1.400 -6.500L1.400 -6.500L0.500 -12L-0.500 -12Z" fill="#f6cd72" transform="translate(22,33) rotate(40)"/><path d="M-1.400 -6.500L1.400 -6.500L0.500 -12L-0.500 -12Z" fill="#f6cd72" transform="translate(22,33) rotate(78)"/></svg>
<svg class="a" style="left:588px;top:78px;" width="18" height="16" viewBox="0 0 18 16"><path d="M1.500 1V15M16.500 1V15" stroke="#e4e4e4" stroke-width="1.200"/><path d="M3.500 5.500H14.500" stroke="#6cb6ea" stroke-width="1.200"/><path d="M2.500 5.500L5.500 3.800V7.200ZM15.500 5.500L12.500 3.800V7.200Z" fill="#6cb6ea"/></svg>
<svg class="a" style="left:588px;top:102px;" width="18" height="16" viewBox="0 0 18 16"><circle cx="13.700" cy="4.800" r="2.800" fill="none" stroke="#e4e4e4" stroke-width="1.200"/><path d="M11 5.500H7.500L3 13" fill="none" stroke="#e4e4e4" stroke-width="1.200"/><path d="M1.500 15.500L2.300 10.800L6 13Z" fill="#e4e4e4"/></svg>
<svg class="a" style="left:588px;top:126px;" width="18" height="16" viewBox="0 0 18 16"><rect x="1.500" y="1.500" width="15" height="13" fill="none" stroke="#e4e4e4" stroke-width="1.200"/><path d="M1.500 5H16.500M1.500 8.200H16.500M1.500 11.400H16.500M6.500 5V14.500M11.500 5V14.500" stroke="#e4e4e4" stroke-width="1.100"/><rect x="1.500" y="1.500" width="15" height="2.500" fill="#e4e4e4"/></svg>
<svg class="a" style="left:679px;top:76px;" width="35" height="34" viewBox="0 0 35 34"><path d="M7.5 1H28.5L21.5 8.5H0.5Z" fill="#d8d8d8"/><path d="M7.5 8.5H28.5L21.5 16H0.5Z" fill="#c4c4c4"/><path d="M7.5 16H28.5L21.5 23.5H0.5Z" fill="#d8d8d8"/><rect x="20" y="14.500" width="13.500" height="18.500" rx="1" fill="#eeeeee"/><rect x="22" y="16.500" width="9.500" height="7" fill="#6cb6ea" stroke="#6a7078" stroke-width="0.800"/><path d="M23 27H30.500M28.500 25.500L30.500 27L28.500 28.500M30.500 30.500H23M25 29L23 30.500L25 32" fill="none" stroke="#555b64" stroke-width="0.900"/></svg>
<svg class="a" style="left:730px;top:76px;" width="60" height="20" viewBox="0 0 60 20"><circle cx="9" cy="8.5" r="5" fill="#f6cd72"/><rect x="6.75" y="12.9" width="4.5" height="3.600" fill="#f0f0f0"/><circle cx="27.5" cy="9" r="4" fill="#f6cd72"/><path d="M32.7 9L35 9" stroke="#f6cd72" stroke-width="1.100"/><path d="M31.177 12.677L32.8033 14.3033" stroke="#f6cd72" stroke-width="1.100"/><path d="M27.5 14.2L27.5 16.5" stroke="#f6cd72" stroke-width="1.100"/><path d="M23.823 12.677L22.1967 14.3033" stroke="#f6cd72" stroke-width="1.100"/><path d="M22.3 9L20 9" stroke="#f6cd72" stroke-width="1.100"/><path d="M23.823 5.32304L22.1967 3.6967" stroke="#f6cd72" stroke-width="1.100"/><path d="M27.5 3.8L27.5 1.5" stroke="#f6cd72" stroke-width="1.100"/><path d="M31.177 5.32304L32.8033 3.6967" stroke="#f6cd72" stroke-width="1.100"/><path d="M47.8 9.5V6.5A3 3 0 0 1 53.8 6.5V8" fill="none" stroke="#f2c462" stroke-width="1.500"/><rect x="40.5" y="9.5" width="10.5" height="7.5" fill="#f2c462"/><rect x="45.05" y="11.95" width="1.400" height="2.600" fill="#3b4453"/></svg>
<svg class="a" style="left:730px;top:102px;" width="19" height="18" viewBox="0 0 19 18"><path d="M4.8 1H14.3L10.5 4.8H1Z" fill="#cfcfcf"/><circle cx="12.5" cy="9.5" r="3.6" fill="#5fd0d8"/><rect x="10.88" y="12.5" width="3.24" height="3.600" fill="#f0f0f0"/></svg>
<svg class="a" style="left:754px;top:102px;" width="19" height="18" viewBox="0 0 19 18"><path d="M4 1H13.5L10.5 3.6H1Z" fill="#cfcfcf"/><path d="M4 4.3H13.5L10.5 6.9H1Z" fill="#e4e4e4"/><path d="M4 7.6H13.5L10.5 10.2H1Z" fill="#6cb6ea"/><path d="M16.500 9.500L10.500 15.500" stroke="#e4e4e4" stroke-width="1.300"/><path d="M9.500 16.500L10.300 12.300L13.700 15.700Z" fill="#e4e4e4"/></svg>
<svg class="a" style="left:778px;top:102px;" width="19" height="18" viewBox="0 0 19 18"><path d="M4.8 1H14.3L10.5 4.8H1Z" fill="#cfcfcf"/><g stroke="#5fd0d8" stroke-width="1.200"><path d="M12.500 6V15M8.600 8.250L16.400 12.750M8.600 12.750L16.400 8.250"/></g></svg>
<svg class="a" style="left:802px;top:102px;" width="19" height="18" viewBox="0 0 19 18"><path d="M4.8 1H14.3L10.5 4.8H1Z" fill="#cfcfcf"/><path d="M10.65 10V7.5A2.600 2.600 0 0 1 15.85 7.5V10" fill="none" stroke="#5fd0d8" stroke-width="1.500"/><rect x="9.5" y="10" width="7.5" height="6" fill="#5fd0d8"/><rect x="12.55" y="11.7" width="1.400" height="2.600" fill="#3b4453"/></svg>
<svg class="a" style="left:827px;top:101px;" width="18" height="18" viewBox="0 0 18 18"><circle cx="8" cy="3.500" r="3" fill="#d8d8d8"/><path d="M4.5 5.5H17L13 9.5H0.5Z" fill="#6cb6ea"/><path d="M4.5 9.5H17L13 12.5H0.5Z" fill="#e4e4e4"/><path d="M4.5 13H17L13 16H0.5Z" fill="#cfcfcf"/><path d="M3.500 8C4.500 5.800 11.500 5.800 12.500 8Z" fill="#d8d8d8"/></svg>
<svg class="a" style="left:730px;top:126px;" width="19" height="18" viewBox="0 0 19 18"><path d="M4 1H13.5L10.5 3.4H1Z" fill="#cfcfcf"/><path d="M4 4.3H13.5L10.5 6.7H1Z" fill="#cfcfcf"/><path d="M4 7.6H13.5L10.5 10H1Z" fill="#cfcfcf"/><circle cx="12.5" cy="9.5" r="3.6" fill="#f6cd72"/><rect x="10.88" y="12.5" width="3.24" height="3.600" fill="#f0f0f0"/></svg>
<svg class="a" style="left:754px;top:126px;" width="19" height="18" viewBox="0 0 19 18"><path d="M4 1H13.5L10.5 3.6H1Z" fill="#cfcfcf"/><path d="M4 4.3H13.5L10.5 6.9H1Z" fill="#e4e4e4"/><path d="M4 7.6H13.5L10.5 10.2H1Z" fill="#6cb6ea"/><path d="M9.500 16.500L15.500 10.500" stroke="#e4e4e4" stroke-width="1.300"/><path d="M16.800 9.200L16 13.400L12.600 10Z" fill="#e4e4e4"/></svg>
<svg class="a" style="left:778px;top:126px;" width="19" height="18" viewBox="0 0 19 18"><path d="M4 1H13.5L10.5 3.4H1Z" fill="#cfcfcf"/><path d="M4 4.3H13.5L10.5 6.7H1Z" fill="#cfcfcf"/><path d="M4 7.6H13.5L10.5 10H1Z" fill="#cfcfcf"/><circle cx="12.5" cy="12" r="2.5" fill="#f6cd72"/><path d="M16.2 12L17.5 12" stroke="#f6cd72" stroke-width="1.100"/><path d="M15.1163 14.6163L16.0355 15.5355" stroke="#f6cd72" stroke-width="1.100"/><path d="M12.5 15.7L12.5 17" stroke="#f6cd72" stroke-width="1.100"/><path d="M9.8837 14.6163L8.96447 15.5355" stroke="#f6cd72" stroke-width="1.100"/><path d="M8.8 12L7.5 12" stroke="#f6cd72" stroke-width="1.100"/><path d="M9.8837 9.3837L8.96447 8.46447" stroke="#f6cd72" stroke-width="1.100"/><path d="M12.5 8.3L12.5 7" stroke="#f6cd72" stroke-width="1.100"/><path d="M15.1163 9.3837L16.0355 8.46447" stroke="#f6cd72" stroke-width="1.100"/></svg>
<svg class="a" style="left:802px;top:126px;" width="19" height="18" viewBox="0 0 19 18"><path d="M4.8 1H14.3L10.5 4.8H1Z" fill="#cfcfcf"/><path d="M11.3 11V8A3 3 0 0 1 17.3 8V9.5" fill="none" stroke="#f2c462" stroke-width="1.500"/><rect x="7.5" y="11" width="7" height="5.5" fill="#f2c462"/><rect x="10.3" y="12.45" width="1.400" height="2.600" fill="#3b4453"/></svg>
<svg class="a" style="left:827px;top:125px;" width="18" height="18" viewBox="0 0 18 18"><path d="M4 1H16.5L13 3.8H0.5Z" fill="#cfcfcf"/><path d="M4 5H16.5L13 7.8H0.5Z" fill="#e4e4e4"/><path d="M4 9H16.5L13 11.8H0.5Z" fill="#cfcfcf"/><path d="M8 10L12 6.500L17 12L13 15.500Z" fill="#f2c462"/><path d="M12 6.500L14 4.500L16 5L16.500 7.500L18 8.500L17 12Z" fill="#f4f4f4"/></svg>
<svg class="a" style="left:942px;top:73px;" width="36" height="36" viewBox="0 0 36 36"><path d="M16 1.500H28L33 6.500V25H16Z" fill="#8ec8f4"/><path d="M28 1.500V6.500H33Z" fill="#cfe7fa"/><rect x="2" y="12" width="21" height="14.500" fill="#6f757f" stroke="#c6c8cc" stroke-width="1.100"/><circle cx="22.700" cy="26.300" r="7" fill="#7c828c" fill-opacity="0.850" stroke="#c6c8cc" stroke-width="1.100"/><rect x="0.500" y="25" width="3" height="3" fill="#d8d8d8"/></svg>
<svg class="a" style="left:982px;top:77px;" width="18" height="18" viewBox="0 0 18 18"><rect x="2" y="4.500" width="9" height="8" fill="#6f757f" stroke="#d0d0d0" stroke-width="1.100"/><rect x="0.500" y="11.500" width="2.400" height="2.400" fill="#d8d8d8"/><circle cx="11.500" cy="12.500" r="3.400" fill="#7c828c" stroke="#d0d0d0" stroke-width="1.100"/><path d="M12.50 0.40L13.27 3.15L15.75 1.75L14.35 4.23L17.10 5.00L14.35 5.77L15.75 8.25L13.27 6.85L12.50 9.60L11.73 6.85L9.25 8.25L10.65 5.77L7.90 5.00L10.65 4.23L9.25 1.75L11.73 3.15Z" fill="#f6cd72"/></svg>
<svg class="a" style="left:982px;top:101px;" width="18" height="18" viewBox="0 0 18 18"><rect x="2" y="4.500" width="9" height="8" fill="#6f757f" stroke="#d0d0d0" stroke-width="1.100"/><rect x="0.500" y="11.500" width="2.400" height="2.400" fill="#d8d8d8"/><circle cx="11.500" cy="12.500" r="3.400" fill="#7c828c" stroke="#d0d0d0" stroke-width="1.100"/><g transform="translate(8,1.500)"><path d="M0 7L6 0.800L8.500 3.200L2.500 9.500L-0.500 10.200Z" fill="#f2c462"/><path d="M6 0.800L7.300 -0.500L9.800 1.900L8.500 3.200Z" fill="#e8525a"/><path d="M0 7L-0.500 10.200L2.500 9.500Z" fill="#4a4a4a"/></g></svg>
<svg class="a" style="left:982px;top:125px;" width="18" height="18" viewBox="0 0 18 18"><path d="M1 2.500H8L15 9.500L8 16.500L1 9.500Z" fill="#e8e8e8"/><circle cx="4" cy="5.500" r="1.200" fill="#3b4453"/><path d="M5 8L8 11L11 8" fill="none" stroke="#3b4453" stroke-width="1.200"/><g transform="translate(8,1)"><path d="M0 7L6 0.800L8.500 3.200L2.500 9.500L-0.500 10.200Z" fill="#f2c462"/><path d="M6 0.800L7.300 -0.500L9.800 1.900L8.500 3.200Z" fill="#e8525a"/><path d="M0 7L-0.500 10.200L2.500 9.500Z" fill="#4a4a4a"/></g></svg>
<svg class="a" style="left:1115px;top:76px;" width="33" height="34" viewBox="0 0 33 34"><rect x="1" y="1" width="20" height="28" rx="1" fill="#dcdcdc"/><rect x="3.500" y="3.500" width="12" height="9.500" fill="#6cb6ea" stroke="#6a7078" stroke-width="0.800"/><path d="M4 18.500H10M4 23.500H10M7 16.500V20.500M9 21.500V25.500M11 21H14" stroke="#7a7f87" stroke-width="1"/><path d="M14.500 22L20 17.500L26 25L20.500 29.500Z" fill="#f2c462" transform="translate(0,2)"/><path d="M20 19.500L23 17L25.500 13.500L28.500 16L26 19L29.500 22L26 27Z" fill="#f6f6f6"/></svg>
<svg class="a" style="left:1163px;top:78px;" width="16" height="16" viewBox="0 0 16 16"><path d="M8 8L8.00 0.00A8 8 0 0 1 14.25 3.01Z" fill="#f4483c"/><path d="M8 8L14.25 3.01A8 8 0 0 1 15.80 9.78Z" fill="#f59a23"/><path d="M8 8L15.80 9.78A8 8 0 0 1 11.47 15.21Z" fill="#f7d038"/><path d="M8 8L11.47 15.21A8 8 0 0 1 4.53 15.21Z" fill="#5bc94c"/><path d="M8 8L4.53 15.21A8 8 0 0 1 0.20 9.78Z" fill="#34b6d8"/><path d="M8 8L0.20 9.78A8 8 0 0 1 1.75 3.01Z" fill="#4a6fe8"/><path d="M8 8L1.75 3.01A8 8 0 0 1 8.00 0.00Z" fill="#9a4fd8"/></svg>
<svg class="a" style="left:1163px;top:102px;" width="16" height="16" viewBox="0 0 16 16"><rect x="0" y="0.500" width="16" height="2" fill="#e8e8e8"/><rect x="0" y="5.500" width="16" height="3" fill="#e8e8e8"/><rect x="0" y="11.500" width="16" height="4.500" fill="#e8e8e8"/></svg>
<svg class="a" style="left:1163px;top:127px;" width="16" height="14" viewBox="0 0 16 14"><path d="M0 1H16" stroke="#e8e8e8" stroke-width="1.200" stroke-dasharray="1.200 1"/><path d="M0 4.500H16" stroke="#e8e8e8" stroke-width="1.200" stroke-dasharray="5 1 1 1"/><path d="M0 8H16" stroke="#e8e8e8" stroke-width="1.200" stroke-dasharray="3 1.500"/><path d="M0 11.500H16" stroke="#e8e8e8" stroke-width="1.200" stroke-dasharray="6 1 2 1"/></svg>
<svg class="a" style="left:1368px;top:76px;" width="36" height="34" viewBox="0 0 36 34"><path d="M5 6.500H1.500V32H5M20 6.500H23.500V32H20" fill="none" stroke="#e8e8e8" stroke-width="1.300" transform="translate(0,0)"/><rect x="7" y="9.500" width="10.500" height="7" fill="#4d86bd" stroke="#6cb6ea" stroke-width="1"/><circle cx="12" cy="25" r="4.800" fill="#8a8f96" stroke="#c8c8c8" stroke-width="1"/><path d="M24.70 1.00L26.04 6.27L30.71 3.49L27.93 8.16L33.20 9.50L27.93 10.84L30.71 15.51L26.04 12.73L24.70 18.00L23.36 12.73L18.69 15.51L21.47 10.84L16.20 9.50L21.47 8.16L18.69 3.49L23.36 6.27Z" fill="#f6cd72"/></svg>
<svg class="a" style="left:1410px;top:77px;" width="19" height="18" viewBox="0 0 19 18"><g transform="translate(1.500,0)"><path d="M4 1.500H1.500V15.500H4M11 1.500H13.500V15.500H11" fill="none" stroke="#e8e8e8" stroke-width="1.100"/><rect x="4.500" y="3" width="5.500" height="4.500" fill="#4d86bd" stroke="#6cb6ea" stroke-width="0.900"/><circle cx="7.300" cy="12" r="2.500" fill="#8a8f96" stroke="#c8c8c8" stroke-width="0.900"/></g><path d="M11.500 5.500L17 11M17 5.500L11.500 11" stroke="#e8404c" stroke-width="1.800"/></svg>
<svg class="a" style="left:1409px;top:101px;" width="20" height="18" viewBox="0 0 20 18"><path d="M4 1.500H1.500V15.500H4M11 1.500H13.500V15.500H11" fill="none" stroke="#e8e8e8" stroke-width="1.100"/><rect x="4.500" y="3" width="5.500" height="4.500" fill="#4d86bd" stroke="#6cb6ea" stroke-width="0.900"/><circle cx="7.300" cy="12" r="2.500" fill="#8a8f96" stroke="#c8c8c8" stroke-width="0.900"/><g transform="translate(9,6.500)"><path d="M0 7L6 0.800L8.500 3.200L2.500 9.500L-0.500 10.200Z" fill="#f2c462"/><path d="M6 0.800L7.300 -0.500L9.800 1.900L8.500 3.200Z" fill="#e8525a"/><path d="M0 7L-0.500 10.200L2.500 9.500Z" fill="#4a4a4a"/></g></svg>
<div class="a" style="left:1406.5px;top:123.5px;width:23px;height:21.5px;background:#33475c;box-sizing:border-box;border:1px solid #5b9bd5;"></div>
<svg class="a" style="left:1409px;top:126px;" width="20" height="18" viewBox="0 0 20 18"><path d="M4 1.500H1.500V15.500H4M11 1.500H13.500V15.500H11" fill="none" stroke="#e8e8e8" stroke-width="1.100"/><rect x="4.500" y="3" width="5.500" height="4.500" fill="#3f9a58" stroke="#5fc878" stroke-width="0.900"/><circle cx="7.300" cy="12" r="2.500" fill="#3f9a58" stroke="#5fc878" stroke-width="0.900"/><g transform="translate(9.500,5)"><path d="M0 0V11L2.800 8.500L4.800 13L6.800 12L4.800 7.800H8.500Z" fill="#f4f4f4" stroke="#3b4453" stroke-width="0.600"/></g></svg>
<svg class="a" style="left:1454px;top:89px;" width="30" height="8" viewBox="0 0 30 8"><rect x="0.500" y="0.800" width="28.500" height="6" fill="#f2c462"/><rect x="2.5" y="0.800" width="0.800" height="3" fill="#8a6a2a"/><rect x="4.95" y="0.800" width="0.800" height="2" fill="#8a6a2a"/><rect x="7.4" y="0.800" width="0.800" height="3" fill="#8a6a2a"/><rect x="9.85" y="0.800" width="0.800" height="2" fill="#8a6a2a"/><rect x="12.3" y="0.800" width="0.800" height="3" fill="#8a6a2a"/><rect x="14.75" y="0.800" width="0.800" height="2" fill="#8a6a2a"/><rect x="17.2" y="0.800" width="0.800" height="3" fill="#8a6a2a"/><rect x="19.65" y="0.800" width="0.800" height="2" fill="#8a6a2a"/><rect x="22.1" y="0.800" width="0.800" height="3" fill="#8a6a2a"/><rect x="24.55" y="0.800" width="0.800" height="2" fill="#8a6a2a"/><rect x="27" y="0.800" width="0.800" height="3" fill="#8a6a2a"/></svg>
<svg class="a" style="left:1506px;top:77px;" width="18" height="18" viewBox="0 0 18 18"><path d="M0.500 3.500v10l2.500 -2.300l1.800 4l1.800 -1l-1.800 -3.800h3.400Z" fill="#f4f4f4" stroke="#3b4453" stroke-width="0.600"/><path d="M8.500 0L5.500 4.500H8L6.500 8L11 3H8.500L10 0Z" fill="#f6cd72"/><rect x="8.500" y="9" width="8.500" height="7" fill="#6cb6ea" stroke="#f4f4f4" stroke-width="1"/><path d="M10 11.300H15.500M10 13.600H15.500M12 9V16" stroke="#f4f4f4" stroke-width="0.800"/></svg>
<svg class="a" style="left:1506px;top:101px;" width="18" height="18" viewBox="0 0 18 18"><rect x="1" y="1" width="13.500" height="13.500" fill="#3f8a58" stroke="#6fd488" stroke-width="1.100" stroke-dasharray="1.600 1.200"/><path d="M4 9.500V4H10M7 12H12.500V6.500" fill="none" stroke="#a8e8b8" stroke-width="1.600"/><g transform="translate(9,5)"><path d="M0 0V11L2.800 8.500L4.800 13L6.800 12L4.800 7.800H8.500Z" fill="#f4f4f4" stroke="#3b4453" stroke-width="0.600"/></g></svg>
<svg class="a" style="left:1509px;top:126px;" width="12" height="16" viewBox="0 0 12 16"><rect x="0" y="0" width="12" height="16" fill="#dcdcdc"/><rect x="1.800" y="1.800" width="8.400" height="3" fill="#5a5f68"/><rect x="1.8" y="6.5" width="2" height="2" fill="#5a5f68"/><rect x="1.8" y="9.6" width="2" height="2" fill="#5a5f68"/><rect x="1.8" y="12.7" width="2" height="2" fill="#5a5f68"/><rect x="5" y="6.5" width="2" height="2" fill="#5a5f68"/><rect x="5" y="9.6" width="2" height="2" fill="#5a5f68"/><rect x="5" y="12.7" width="2" height="2" fill="#5a5f68"/><rect x="8.2" y="6.5" width="2" height="2" fill="#5a5f68"/><rect x="8.2" y="9.6" width="2" height="2" fill="#5a5f68"/><rect x="8.2" y="12.7" width="2" height="2" fill="#5a5f68"/></svg>
<svg class="a" style="left:1543px;top:76px;" width="28" height="34" viewBox="0 0 28 34"><rect x="1" y="3" width="22" height="25" rx="1" fill="#dca65a"/><rect x="6.500" y="1" width="11" height="4" fill="#ececec"/><rect x="10" y="0" width="4" height="2.500" fill="#ececec"/><path d="M9 10.500H21.500L27 16V32.500H9Z" fill="#e4e4e4"/><path d="M21.500 10.500V16H27Z" fill="#3b4453"/><path d="M22.300 11.800V15.200H25.700Z" fill="#f8f8f8"/></svg>
<svg class="a" style="left:1586px;top:78px;" width="18" height="16" viewBox="0 0 18 16"><rect x="0.500" y="0.500" width="11" height="11" fill="#b9bcc0"/><path d="M2 3.500H10M2 6H8M2 8.500H6" stroke="#5a5f68" stroke-width="0.900"/><path d="M8 3.500L13.500 11M15.500 3.500L10 11" stroke="#f0f0f0" stroke-width="1.300"/><circle cx="9.500" cy="13" r="1.700" fill="none" stroke="#f0f0f0" stroke-width="1.100"/><circle cx="14.500" cy="13" r="1.700" fill="none" stroke="#f0f0f0" stroke-width="1.100"/></svg>
<svg class="a" style="left:1607.5px;top:84.25px;" width="6" height="3.5" viewBox="0 0 6 3.5"><path d="M0 0H6 L3 3.5 Z" fill="#d0d3d7"/></svg>
<svg class="a" style="left:1587px;top:101px;" width="14" height="17" viewBox="0 0 14 17"><path d="M0.500 0.500H6.500L9.500 3.500V12.500H0.500Z" fill="#b9bcc0"/><path d="M3.500 4H9.500L13 7.500V16.500H3.500Z" fill="#e4e4e4" stroke="#3b4453" stroke-width="0.800"/></svg>
<svg class="a" style="left:1607.5px;top:108.25px;" width="6" height="3.5" viewBox="0 0 6 3.5"><path d="M0 0H6 L3 3.5 Z" fill="#d0d3d7"/></svg>
<svg class="a" style="left:1636px;top:81px;" width="32" height="24" viewBox="0 0 32 24"><path d="M0 0H14.500V10H32V24H0Z" fill="#e4e4e4"/></svg>
<span class="t" style="left:3.00px;top:205.84px;font:normal 400 12px/14px 'Liberation Sans',sans-serif;color:#e8eaec;letter-spacing:0.221px;">[−][Top][2D Wireframe]</span>
<svg class="a" style="left:698px;top:306px;" width="374" height="527" viewBox="0 0 374 527"><rect x="3" y="3" width="368" height="520.700" fill="none" stroke="#8e1c26" stroke-width="2"/></svg>
<span class="t" style="left:701.00px;top:315.36px;font:normal 400 5.6px/7px 'Liberation Sans',sans-serif;color:#ececec;letter-spacing:0.363px;">FOLHA A0</span>
<span class="t" style="left:730.00px;top:346.36px;font:normal 400 5.6px/7px 'Liberation Sans',sans-serif;color:#ececec;letter-spacing:0.264px;">FOLHA ESQUISSO 70 X 100 CM</span>
<span class="t" style="left:730.00px;top:790.46px;font:normal 400 5.6px/7px 'Liberation Sans',sans-serif;color:#ececec;letter-spacing:0.294px;">ESCALA 1:1000</span>
<svg class="a" style="left:730px;top:354px;" width="306" height="436" viewBox="0 0 306 436"><defs><clipPath id="mc"><rect x="0" y="0" width="306" height="436"/></clipPath></defs><g clip-path="url(#mc)"><rect width="306" height="436" fill="#212830"/><g fill="#212830" stroke="#ffffff" stroke-width=".9"><path transform="translate(2.1 -.9)rotate(117.3)" d="M-12.9-5.5 h26.3v3.6h-26.3zm3.7 0v3.6m3.9-3.6v3.6m8.4-3.6v3.6M-13.1-1.8 h26.4v3.6h-26.4zm3.8 0v3.6m4.2-3.6v3.6m5.2-3.6v3.6m3.5-3.6v3.6m5.5-3.6v3.6M-12.5 1.8 h25.6v3.6h-25.6zm6.4 0v3.6m7.2-3.6v3.6m3.8-3.6v3.6m4-3.6v3.6"/><path transform="translate(30.4 -.7)rotate(31.1)" d="M-9.4-6.1 h18.6v6.1h-18.6zm3.5 0v6.1m8.7-6.1v6.1M-9.4 0 h19.3v6.1h-19.3zm6.9 0v6.1m3.9-6.1v6.1"/><path transform="translate(58.8 .4)rotate(30.6)" d="M-14.4-5.2 h30v5.2h-30zm4.2 0v5.2m5.9-5.2v5.2m3.2-5.2v5.2m6.3-5.2v5.2m6-5.2v5.2M-14.5 0 h29.2v5.2h-29.2zm5.4 0v5.2m12-5.2v5.2m4.3-5.2v5.2"/><path transform="translate(84.1 .4)rotate(122.2)" d="M-10.1-5 h20.5v5h-20.5zm7.9 0v5m10.5-5v5M-10.4 0 h21v5h-21zm8.4 0v5"/><path transform="translate(115.4 -2)rotate(118.6)" d="M-14.5-6 h29.6v6h-29.6zm4.4 0v6m7.9-6v6m7.3-6v6M-15.2 0 h30.5v6h-30.5zm7 0v6m8.4-6v6m5.2-6v6m4.3-6v6"/><path transform="translate(146.5 -.4)rotate(28.8)" d="M-14.7-6 h28.5v6h-28.5zm5 0v6m5.4-6v6m7.2-6v6m4-6v6m4-6v6M-14.8 0 h29.8v6h-29.8zm8.5 0v6m8.3-6v6m7.7-6v6"/><path transform="translate(174.3 .6)rotate(23.5)" d="M-10.6-5.6 h20.4v5.6h-20.4zm5.1 0v5.6m2.8-5.6v5.6m2.8-5.6v5.6m5-5.6v5.6M-10 0 h21v5.6h-21zm5.4 0v5.6m6.4-5.6v5.6m6.4-5.6v5.6"/><path transform="translate(200.6 -1.1)rotate(26.7)" d="M-11.1-6.2 h21.8v6.2h-21.8zm7.2 0v6.2m3.3-6.2v6.2m7-6.2v6.2M-10.4 0 h21v6.2h-21zm3.4 0v6.2m3.8-6.2v6.2m5.1-6.2v6.2m3.5-6.2v6.2"/><path transform="translate(221.8 -1.3)rotate(22)" d="M-7.1-5.7 h12.8v5.7h-12.8zm6.5 0v5.7M-6.8 0 h13.8v5.7h-13.8zm4.8 0v5.7m4-5.7v5.7"/><path transform="translate(243.6 -2.8)rotate(29.1)" d="M-12.6-6.1 h26.4v4h-26.4zm6.8 0v4m5.4-4v4m3.4-4v4m3.3-4v4m3.7-4v4M-13.6-2 h27v4h-27zm2.8 0v4m6.2-4v4m5-4v4m6.6-4v4M-12.9 2 h25.3v4h-25.3zm4.4 0v4m5.8-4v4m3-4v4m6.3-4v4m3.2-4v4"/><path transform="translate(269.9 -1.3)rotate(13.4)" d="M-11.2-6.4 h21.4v6.4h-21.4zm4.6 0v6.4m4.9-6.4v6.4m4-6.4v6.4M-11.5 0 h23.1v6.4h-23.1zm4.5 0v6.4m5.7-6.4v6.4m6.6-6.4v6.4m4.6-6.4v6.4"/><path transform="translate(301.5 -.1)rotate(87.4)" d="M-14.7-5.5 h29.4v5.5h-29.4zm7.2 0v5.5m6.5-5.5v5.5m3.1-5.5v5.5m3.5-5.5v5.5m6.2-5.5v5.5M-14.8 0 h30v5.5h-30zm5.7 0v5.5m6.7-5.5v5.5m4.3-5.5v5.5m6.8-5.5v5.5"/><path transform="translate(1.4 11.5)rotate(26.4)" d="M-8.1-4.3 h15.5v2.8h-15.5zm7 0v2.8m6-2.8v2.8M-7-1.4 h14.1v2.8h-14.1zm3.3 0v2.8m8.5-2.8v2.8M-7.6 1.4 h15.9v2.8h-15.9zm6.1 0v2.8m7.7-2.8v2.8"/><path transform="translate(18.4 10.5)rotate(28.8)" d="M-6.8-4.5 h12.8v4.5h-12.8zm3.2 0v4.5m3.9-4.5v4.5M-6.7 0 h12.4v4.5h-12.4zm6.4 0v4.5"/><path transform="translate(41 9.6)rotate(29.2)" d="M-8.4-4.6 h17v4.6h-17zm7.7 0v4.6M-9.8 0 h18.5v4.6h-18.5zm5.7 0v4.6m8.6-4.6v4.6"/><path transform="translate(66.9 9.6)rotate(31.8)" d="M-14.1-5.3 h28.3v5.3h-28.3zm4.3 0v5.3m4.4-5.3v5.3m5.7-5.3v5.3m3.7-5.3v5.3m4.5-5.3v5.3M-13.8 0 h27.4v5.3h-27.4zm5.3 0v5.3m4.7-5.3v5.3m6-5.3v5.3m4.4-5.3v5.3m5.4-5.3v5.3"/><path transform="translate(96.2 10.5)rotate(119.7)" d="M-12.9-5 h25.7v5h-25.7zm8.5 0v5m4-5v5m8.4-5v5M-14 0 h27v5h-27zm4.5 0v5m4.9-5v5m6.7-5v5m3.6-5v5m5.3-5v5"/><path transform="translate(126.7 10.5)rotate(24.8)" d="M-13-6.2 h26.4v6.2h-26.4zm5.9 0v6.2m4.6-6.2v6.2m8-6.2v6.2m5.5-6.2v6.2M-13.1 0 h25.1v6.2h-25.1zm4.9 0v6.2m4.4-6.2v6.2m8.4-6.2v6.2m4.4-6.2v6.2"/><path transform="translate(156 8.8)rotate(21.5)" d="M-15.6-6 h30.9v6h-30.9zm7.2 0v6m7.2-6v6m5.9-6v6m4.3-6v6m4.1-6v6M-16.2 0 h31.7v6h-31.7zm6.7 0v6m5-6v6m3.7-6v6m2.9-6v6m11.5-6v6"/><path transform="translate(191.9 9.7)rotate(25.7)" d="M-15.5-4.8 h31.1v4.8h-31.1zm2.8 0v4.8m5.8-4.8v4.8m3.9-4.8v4.8m7.3-4.8v4.8m4.8-4.8v4.8m3.6-4.8v4.8M-15.5 0 h31v4.8h-31zm4.5 0v4.8m3.7-4.8v4.8m5.5-4.8v4.8m4.3-4.8v4.8m7.4-4.8v4.8m3.2-4.8v4.8"/><path transform="translate(225.1 12)rotate(115.3)" d="M-12.9-5.9 h26.1v5.9h-26.1zm6.3 0v5.9m3.9-5.9v5.9m5.5-5.9v5.9m7.5-5.9v5.9M-13.6 0 h26.6v5.9h-26.6zm6.6 0v5.9m2.9-5.9v5.9m3.7-5.9v5.9m7.2-5.9v5.9"/><path transform="translate(249.3 11)rotate(24.9)" d="M-7.7-4.5 h14.8v4.5h-14.8zm5.8 0v4.5m4.3-4.5v4.5M-7.2 0 h15.2v4.5h-15.2zm3.2 0v4.5m10.4-4.5v4.5"/><path transform="translate(274.6 10.8)rotate(10.4)" d="M-16-6 h32.2v6h-32.2zm6.7 0v6m7.6-6v6m5.1-6v6m6.8-6v6M-15.6 0 h31.6v6h-31.6zm5.6 0v6m5.6-6v6m5.5-6v6m4-6v6m8-6v6"/><path transform="translate(308.2 11.7)rotate(-7)" d="M-15-5.9 h29.9v5.9h-29.9zm5 0v5.9m3.6-5.9v5.9m13.6-5.9v5.9M-15.1 0 h29.4v5.9h-29.4zm5.8 0v5.9m5.1-5.9v5.9m6.3-5.9v5.9m3.1-5.9v5.9m4.2-5.9v5.9"/><path transform="translate(2.6 19.4)rotate(118)" d="M-10.7-5.7 h22v5.7h-22zm6 0v5.7m3.9-5.7v5.7m7.2-5.7v5.7M-10 0 h21.2v5.7h-21.2zm7.5 0v5.7m5.1-5.7v5.7"/><path transform="translate(28.6 20.1)rotate(27.7)" d="M-11.7-4.9 h23.5v3.3h-23.5zm8.3 0v3.3m4.1-3.3v3.3m6.1-3.3v3.3M-10.7-1.6 h22.6v3.3h-22.6zm8.7 0v3.3m7.6-3.3v3.3M-11.4 1.6 h23.1v3.3h-23.1zm13.1 0v3.3m4.6-3.3v3.3"/><path transform="translate(46.6 21.7)rotate(29.1)" d="M-7-6.1 h13.4v4h-13.4zm6 0v4m3.8-4v4M-6.4-2 h13v4h-13zm3.9 0v4m7.2-4v4M-6.9 2 h14.3v4h-14.3zm6.7 0v4"/><path transform="translate(68.2 19.4)rotate(29.7)" d="M-8.3-4.8 h17.8v3.2h-17.8zm6.2 0v3.2m4.3-3.2v3.2M-9-1.6 h18.1v3.2h-18.1zm3.5 0v3.2m12.8-3.2v3.2M-8.8 1.6 h18v3.2h-18zm3.8 0v3.2m5-3.2v3.2"/><path transform="translate(90.8 21.4)rotate(26.5)" d="M-10-6.2 h21.4v6.2h-21.4zm4.6 0v6.2m8.4-6.2v6.2M-10 0 h20.4v6.2h-20.4zm7 0v6.2m5.8-6.2v6.2"/><path transform="translate(112.6 21.8)rotate(23.3)" d="M-9.9-4.6 h18.6v3h-18.6zm5.1 0v3m3.4-3v3m7-3v3M-8.8-1.5 h17.6v3h-17.6zm3.6 0v3M-9.9 1.5 h19.9v3h-19.9zm7.9 0v3m7.7-3v3"/><path transform="translate(135 19.3)rotate(22.7)" d="M-9.7-5.7 h18.5v5.7h-18.5zm6 0v5.7m3.4-5.7v5.7m7.4-5.7v5.7M-10.1 0 h19v5.7h-19zm7.4 0v5.7m7.4-5.7v5.7"/><path transform="translate(158.2 22.6)rotate(20.6)" d="M-10.9-4.8 h22.1v4.8h-22.1zm3.3 0v4.8m6.5-4.8v4.8m5.7-4.8v4.8m4.6-4.8v4.8M-11.6 0 h22.1v4.8h-22.1zm5.1 0v4.8m3.9-4.8v4.8m6.3-4.8v4.8m4.4-4.8v4.8"/><path transform="translate(184.2 21.6)rotate(19.4)" d="M-11.1-6 h22v6h-22zm6.1 0v6m3.5-6v6m5.2-6v6m3.6-6v6M-10.8 0 h20.7v6h-20.7zm6.5 0v6m3.7-6v6m3.7-6v6m4.6-6v6"/><path transform="translate(208.8 22.2)rotate(24.9)" d="M-12.4-5.4 h25.1v5.4h-25.1zm6.2 0v5.4m6.1-5.4v5.4m5.8-5.4v5.4M-11.9 0 h23.8v5.4h-23.8zm5.7 0v5.4m4.9-5.4v5.4m6-5.4v5.4"/><path transform="translate(239.4 21.4)rotate(23.1)" d="M-16.6-6.2 h32.5v6.2h-32.5zm5.3 0v6.2m5.8-6.2v6.2m4.7-6.2v6.2m6-6.2v6.2m3.3-6.2v6.2m3-6.2v6.2m2.8-6.2v6.2M-16.4 0 h32v6.2h-32zm7.2 0v6.2m6.6-6.2v6.2m3.4-6.2v6.2m5.8-6.2v6.2m3.8-6.2v6.2"/><path transform="translate(269.6 19.8)rotate(15.9)" d="M-9.4-6 h18.9v6h-18.9zm5.2 0v6m6.7-6v6m4.5-6v6M-8.6 0 h17.2v6h-17.2zm3.3 0v6m7-6v6"/><path transform="translate(295.1 19.7)rotate(-5.1)" d="M-13.3-5.8 h25.5v5.8h-25.5zm7 0v5.8m6.1-5.8v5.8m7.6-5.8v5.8M-12.4 0 h25.3v5.8h-25.3zm7.5 0v5.8m4.2-5.8v5.8m3.3-5.8v5.8m5.5-5.8v5.8"/><path transform="translate(324.5 22.6)rotate(-7.6)" d="M-11.7-6.2 h23.3v4.1h-23.3zm3.1 0v4.1m7.7-4.1v4.1m5.6-4.1v4.1m3.1-4.1v4.1M-11.9-2.1 h23.8v4.1h-23.8zm6.9 0v4.1m5.1-4.1v4.1m4.5-4.1v4.1m5.6-4.1v4.1M-12.1 2.1 h24.3v4.1h-24.3zm4.5 0v4.1m12.6-4.1v4.1"/><path transform="translate(1.8 35.5)rotate(28.7)" d="M-12.1-8 h24.2v5.3h-24.2zm6.5 0v5.3m6.9-5.3v5.3m3.7-5.3v5.3M-12.5-2.7 h24.4v5.3h-24.4zm7.5 0v5.3m4.9-5.3v5.3m5.6-5.3v5.3m3.5-5.3v5.3M-11.7 2.7 h24.1v5.3h-24.1zm3.3 0v5.3m8.4-5.3v5.3m9.8-5.3v5.3"/><path transform="translate(28.2 36.2)rotate(25.3)" d="M-13.8-7 h26.6v4.7h-26.6zm4.5 0v4.7m3.5-4.7v4.7m7.9-4.7v4.7m6.7-4.7v4.7M-12.8-2.3 h26.6v4.7h-26.6zm3.3 0v4.7m3.6-4.7v4.7m4.1-4.7v4.7m3.5-4.7v4.7m5.6-4.7v4.7M-12.9 2.3 h26.1v4.7h-26.1zm5.3 0v4.7m7.5-4.7v4.7m3.5-4.7v4.7m7.7-4.7v4.7"/><path transform="translate(57.2 33.8)rotate(29.1)" d="M-10.1-8.6 h20.9v5.7h-20.9zm3.2 0v5.7m6.4-5.7v5.7m3.4-5.7v5.7M-10-2.9 h20.1v5.7h-20.1zm7 0v5.7m3.7-5.7v5.7m4.3-5.7v5.7M-10.6 2.9 h21.6v5.7h-21.6zm4.6 0v5.7m10.3-5.7v5.7"/><path transform="translate(86 34.2)rotate(26.7)" d="M-15.6-7.1 h30.4v4.8h-30.4zm5.2 0v4.8m6-4.8v4.8m8.7-4.8v4.8m6.7-4.8v4.8M-15.8-2.4 h31.6v4.8h-31.6zm8.6 0v4.8m6.3-4.8v4.8m5.5-4.8v4.8m7.7-4.8v4.8M-15.7 2.4 h31.5v4.8h-31.5zm6.3 0v4.8m8.4-4.8v4.8m6.5-4.8v4.8m8.5-4.8v4.8"/><path transform="translate(114.1 36.2)rotate(26.2)" d="M-11.1-6.8 h22.1v4.6h-22.1zm8.2 0v4.6m3.4-4.6v4.6m6.8-4.6v4.6M-10.5-2.3 h21.5v4.6h-21.5zm6.4 0v4.6m5-4.6v4.6m5.8-4.6v4.6M-10.4 2.3 h21.6v4.6h-21.6zm3.4 0v4.6m8.3-4.6v4.6m4-4.6v4.6"/><path transform="translate(139.8 34.2)rotate(112.1)" d="M-10.3-7.2 h19.6v4.8h-19.6zm6.2 0v4.8m4.7-4.8v4.8m4.7-4.8v4.8M-9-2.4 h19.3v4.8h-19.3zm15.4 0v4.8M-10 2.4 h20v4.8h-20zm4.3 0v4.8m8.7-4.8v4.8m4.8-4.8v4.8"/><path transform="translate(164.9 32.9)rotate(17.4)" d="M-14.8-7.8 h29.2v5.2h-29.2zm7.1 0v5.2m3.4-5.2v5.2m6.1-5.2v5.2m3.2-5.2v5.2m4.1-5.2v5.2M-14.8-2.6 h29.7v5.2h-29.7zm6.2 0v5.2m3-5.2v5.2m6.7-5.2v5.2m2.8-5.2v5.2m6.9-5.2v5.2M-14.5 2.6 h28.7v5.2h-28.7zm2.8 0v5.2m5.2-5.2v5.2m6.6-5.2v5.2m6.1-5.2v5.2m3-5.2v5.2"/><path transform="translate(191.1 33.2)rotate(108.8)" d="M-6-7.3 h13.1v4.8h-13.1zm3.2 0v4.8m2.8-4.8v4.8m5.2-4.8v4.8M-7-2.4 h13.5v4.8h-13.5zm5.1 0v4.8m4.7-4.8v4.8M-6.1 2.4 h13v4.8h-13zm6.7 0v4.8m4.7-4.8v4.8"/><path transform="translate(207.5 34.1)rotate(24.5)" d="M-8.2-8.6 h16.3v5.7h-16.3zm3 0v5.7m7.2-5.7v5.7M-9.3-2.9 h18.1v5.7h-18.1zm9.3 0v5.7M-8.5 2.9 h16.6v5.7h-16.6zm7 0v5.7m5.8-5.7v5.7"/><path transform="translate(229.2 34)rotate(26.2)" d="M-8.5-7.4 h17.9v4.9h-17.9zm5.6 0v4.9m4-4.9v4.9m3.5-4.9v4.9M-9.1-2.5 h18.5v4.9h-18.5zm5.3 0v4.9m5.5-4.9v4.9m6.1-4.9v4.9M-9.1 2.5 h18.3v4.9h-18.3zm5.2 0v4.9m2.8-4.9v4.9m3.9-4.9v4.9m4.1-4.9v4.9"/><path transform="translate(251.5 33.9)rotate(24.2)" d="M-11.1-7 h21v4.7h-21zm6.3 0v4.7m4.4-4.7v4.7m6.8-4.7v4.7M-10.7-2.3 h20.9v4.7h-20.9zm6.1 0v4.7m12.4-4.7v4.7M-10.5 2.3 h21.3v4.7h-21.3zm6.5 0v4.7m4.6-4.7v4.7m6.2-4.7v4.7"/><path transform="translate(282.3 34.1)rotate(2.6)" d="M-14.6-7.1 h29.3v4.7h-29.3zm3.4 0v4.7m7.3-4.7v4.7m4-4.7v4.7m5.4-4.7v4.7m5.5-4.7v4.7M-14.7-2.4 h29.2v4.7h-29.2zm5 0v4.7m4.8-4.7v4.7m10.2-4.7v4.7m5-4.7v4.7M-14.8 2.4 h29.4v4.7h-29.4zm8.1 0v4.7m7.2-4.7v4.7m8-4.7v4.7m3.5-4.7v4.7"/><path transform="translate(307.6 34.4)rotate(-7.9)" d="M-7.6-7.1 h15.3v4.8h-15.3zm4.8 0v4.8m3.2-4.8v4.8m4.5-4.8v4.8M-7.6-2.4 h15.8v4.8h-15.8zm5.5 0v4.8m6.3-4.8v4.8M-8.3 2.4 h15.8v4.8h-15.8zm6.3 0v4.8m5.7-4.8v4.8"/><path transform="translate(2.6 47)rotate(27.9)" d="M-8.1-5.8 h16.7v5.8h-16.7zm8.1 0v5.8m5.6-5.8v5.8M-8.2 0 h15.6v5.8h-15.6zm7.7 0v5.8"/><path transform="translate(25 47.5)rotate(25.4)" d="M-10.5-6 h21.2v6h-21.2zm5.2 0v6m4.8-6v6m6.1-6v6m3.6-6v6M-10.5 0 h21v6h-21zm3.4 0v6m4-6v6m4.7-6v6m5.6-6v6"/><path transform="translate(52.7 50.4)rotate(26)" d="M-15.5-6 h31.7v4h-31.7zm8.1 0v4m4.5-4v4m8-4v4m6.2-4v4M-16.1-2 h32.1v4h-32.1zm3.7 0v4m5-4v4m6.3-4v4m8.7-4v4m4.4-4v4M-15.4 2 h30.7v4h-30.7zm7.9 0v4m3.4-4v4m5.1-4v4m7-4v4m5.1-4v4"/><path transform="translate(78.6 47.3)rotate(22.9)" d="M-6.9-5.8 h13.4v3.9h-13.4zm4.2 0v3.9m7.1-3.9v3.9M-6.2-1.9 h12.4v3.9h-12.4zm8.6 0v3.9M-7.2 1.9 h13.5v3.9h-13.5zm4.3 0v3.9m3.7-3.9v3.9"/><path transform="translate(104.8 50.3)rotate(22.9)" d="M-15.8-6.7 h32.2v6.7h-32.2zm7 0v6.7m8.3-6.7v6.7m3.4-6.7v6.7m4.6-6.7v6.7m6.7-6.7v6.7M-16.2 0 h32.2v6.7h-32.2zm3.9 0v6.7m4.5-6.7v6.7m5.6-6.7v6.7m4.8-6.7v6.7m6.3-6.7v6.7"/><path transform="translate(136.7 49.7)rotate(111.2)" d="M-12.7-5.6 h25.6v5.6h-25.6zm4.7 0v5.6m10.2-5.6v5.6m5.8-5.6v5.6M-11.9 0 h24.7v5.6h-24.7zm7.1 0v5.6m3.8-5.6v5.6m4.2-5.6v5.6"/><path transform="translate(165.5 47.6)rotate(106.5)" d="M-13.1-6.6 h26.3v6.6h-26.3zm5.8 0v6.6m3.6-6.6v6.6m6.3-6.6v6.6m6.7-6.6v6.6M-13.2 0 h26.6v6.6h-26.6zm5.4 0v6.6m6.1-6.6v6.6m5.1-6.6v6.6m4.2-6.6v6.6"/><path transform="translate(189.2 48.4)rotate(17.5)" d="M-6.6-5.1 h13.3v5.1h-13.3zm4.8 0v5.1m5.2-5.1v5.1M-6.5 0 h14.2v5.1h-14.2zm4.2 0v5.1m4.4-5.1v5.1"/><path transform="translate(218.4 50.5)rotate(22.3)" d="M-14.7-5.2 h29.9v5.2h-29.9zm5.5 0v5.2m5.8-5.2v5.2m12.5-5.2v5.2M-14.7 0 h29.8v5.2h-29.8zm5.5 0v5.2m5.4-5.2v5.2m3.6-5.2v5.2m3.3-5.2v5.2m3.2-5.2v5.2m5.1-5.2v5.2"/><path transform="translate(242.3 46.9)rotate(23.7)" d="M-6.7-6.2 h14.3v6.2h-14.3zm7.5 0v6.2M-6.4 0 h13.3v6.2h-13.3zm6.4 0v6.2m3-6.2v6.2"/><path transform="translate(265.8 50.2)rotate(15)" d="M-12.8-6.2 h26.6v6.2h-26.6zm6.8 0v6.2m6.5-6.2v6.2m4.9-6.2v6.2M-13.9 0 h27.2v6.2h-27.2zm12.8 0v6.2m6.4-6.2v6.2m5.3-6.2v6.2"/><path transform="translate(291.8 47.8)rotate(-2.3)" d="M-8-5.4 h15.9v5.4h-15.9zm7.1 0v5.4m4.7-5.4v5.4M-8.6 0 h16.2v5.4h-16.2zm6.5 0v5.4m3.8-5.4v5.4"/><path transform="translate(312.4 49)rotate(77.3)" d="M-8.3-5.8 h16.9v5.8h-16.9zm8.6 0v5.8M-7.7 0 h16.8v5.8h-16.8zm3.7 0v5.8m4.4-5.8v5.8m5.9-5.8v5.8"/><path transform="translate(8.2 62)rotate(26.5)" d="M-12.3-7.8 h25.2v5.2h-25.2zm7.4 0v5.2m6.7-5.2v5.2M-12.9-2.6 h24.7v5.2h-24.7zm5.8 0v5.2m4.5-5.2v5.2m3.2-5.2v5.2m5.6-5.2v5.2M-12.9 2.6 h25.1v5.2h-25.1zm6.2 0v5.2m8.3-5.2v5.2m4.2-5.2v5.2"/><path transform="translate(32.4 64.5)rotate(23.4)" d="M-7.3-5.9 h13.9v5.9h-13.9zm4.4 0v5.9m6.5-5.9v5.9M-6.8 0 h14.3v5.9h-14.3zm7.7 0v5.9m3.9-5.9v5.9"/><path transform="translate(52.5 63.5)rotate(23.5)" d="M-9.6-6.6 h19.8v4.4h-19.8zm6.6 0v4.4m6.5-4.4v4.4m3.3-4.4v4.4M-9.2-2.2 h19v4.4h-19zm3.7 0v4.4m13.4-4.4v4.4M-9.4 2.2 h18.7v4.4h-18.7zm6.5 0v4.4m4.6-4.4v4.4"/><path transform="translate(75.9 63)rotate(115)" d="M-10.5-5.9 h20.9v5.9h-20.9zm5.2 0v5.9m13.2-5.9v5.9M-10.7 0 h22v5.9h-22zm8.4 0v5.9m4.2-5.9v5.9m7.3-5.9v5.9"/><path transform="translate(101.7 62.7)rotate(18.8)" d="M-10.3-6.1 h19.8v6.1h-19.8zm5.4 0v6.1m6.3-6.1v6.1M-10.1 0 h20.1v6.1h-20.1zm5.6 0v6.1m7.4-6.1v6.1"/><path transform="translate(129.3 62)rotate(19.4)" d="M-14.9-6.5 h29.2v6.5h-29.2zm4.1 0v6.5m5.7-6.5v6.5m4.3-6.5v6.5m7.5-6.5v6.5M-15.6 0 h31.1v6.5h-31.1zm15.4 0v6.5m4-6.5v6.5m4.1-6.5v6.5m5.1-6.5v6.5"/><path transform="translate(160.7 61)rotate(17.2)" d="M-14.8-6.8 h29.7v4.5h-29.7zm7.5 0v4.5m3.3-4.5v4.5m4.8-4.5v4.5m3.5-4.5v4.5m3.3-4.5v4.5M-13.5-2.3 h27.1v4.5h-27.1zm6.2 0v4.5m7.2-4.5v4.5m5.2-4.5v4.5M-13.9 2.3 h28v4.5h-28zm5.4 0v4.5m6.9-4.5v4.5m4.3-4.5v4.5m4.6-4.5v4.5m3.4-4.5v4.5"/><path transform="translate(187.3 61.7)rotate(16)" d="M-9.4-7.5 h20.1v5h-20.1zm6 0v5m5.4-5v5m2.8-5v5M-10.4-2.5 h20.2v5h-20.2zm6.3 0v5m4.6-5v5m6-5v5M-10.4 2.5 h19.8v5h-19.8zm5 0v5m5-5v5m7.2-5v5"/><path transform="translate(215.3 63.5)rotate(22.5)" d="M-15.2-7.6 h29.8v5.1h-29.8zm6.7 0v5.1m3.5-5.1v5.1m4.4-5.1v5.1m8.8-5.1v5.1M-14.5-2.5 h28.5v5.1h-28.5zm6.4 0v5.1m4.5-5.1v5.1m4.5-5.1v5.1m2.8-5.1v5.1m3-5.1v5.1m4.1-5.1v5.1M-13.9 2.5 h28.8v5.1h-28.8zm4.8 0v5.1m8.1-5.1v5.1m4.5-5.1v5.1m4.7-5.1v5.1m4.4-5.1v5.1"/><path transform="translate(244.3 62.2)rotate(20.7)" d="M-10-6.7 h19.4v6.7h-19.4zm11.4 0v6.7m4.9-6.7v6.7M-10.1 0 h20.1v6.7h-20.1zm5.2 0v6.7m6.3-6.7v6.7m6-6.7v6.7"/><path transform="translate(269.6 61.2)rotate(12.3)" d="M-14.1-6 h28.6v6h-28.6zm3.3 0v6m6-6v6m7.4-6v6m10.1-6v6M-14.8 0 h28.7v6h-28.7zm5.8 0v6m3.2-6v6m7.1-6v6m7.2-6v6"/><path transform="translate(299.7 61.7)rotate(-8.5)" d="M-9.9-6 h19.9v6h-19.9zm5.9 0v6m7.1-6v6M-9.3 0 h19.2v6h-19.2zm13.5 0v6"/><path transform="translate(322.6 64.6)rotate(-12.6)" d="M-12-6.9 h23.9v4.6h-23.9zm4.5 0v4.6m3.7-4.6v4.6m6.3-4.6v4.6m7.8-4.6v4.6M-12.7-2.3 h25.6v4.6h-25.6zm11.8 0v4.6m4.5-4.6v4.6m4.6-4.6v4.6M-12.7 2.3 h24.5v4.6h-24.5zm8 0v4.6m4.9-4.6v4.6"/><path transform="translate(8.3 77.5)rotate(26.2)" d="M-14.8-5.4 h28.9v5.4h-28.9zm5.9 0v5.4m5.9-5.4v5.4m11.1-5.4v5.4M-14.9 0 h28.8v5.4h-28.8zm3.4 0v5.4m5.1-5.4v5.4m3.5-5.4v5.4m4.6-5.4v5.4m7.5-5.4v5.4"/><path transform="translate(40.1 73.9)rotate(113.3)" d="M-12.1-5.6 h24.5v3.8h-24.5zm5.3 0v3.8m4.1-3.8v3.8m7.8-3.8v3.8M-12.8-1.9 h25v3.8h-25zm11.1 0v3.8m4.1-3.8v3.8m5.2-3.8v3.8M-11.6 1.9 h23.9v3.8h-23.9zm14.6 0v3.8m5.9-3.8v3.8"/><path transform="translate(62.7 75.4)rotate(21.6)" d="M-8.8-6.1 h18.1v4.1h-18.1zm6.5 0v4.1m3.5-4.1v4.1M-8.6-2 h17v4.1h-17zm5.1 0v4.1M-9 2 h18.1v4.1h-18.1zm3.7 0v4.1m6.9-4.1v4.1m4-4.1v4.1"/><path transform="translate(88.2 76.9)rotate(21.2)" d="M-10.9-5.6 h21.4v5.6h-21.4zm13.5 0v5.6m5.1-5.6v5.6M-10.6 0 h20.9v5.6h-20.9zm8.2 0v5.6m7.6-5.6v5.6"/><path transform="translate(118.3 77.6)rotate(13.9)" d="M-15.4-5.9 h31.6v5.9h-31.6zm4.3 0v5.9m5.9-5.9v5.9m7.1-5.9v5.9m7.6-5.9v5.9M-15.6 0 h31v5.9h-31zm5.1 0v5.9m13.6-5.9v5.9m5.9-5.9v5.9"/><path transform="translate(145.2 77.2)rotate(16.1)" d="M-8.1-4.5 h16.6v4.5h-16.6zm6.8 0v4.5M-8.9 0 h17.6v4.5h-17.6zm8.5 0v4.5"/><path transform="translate(169.9 75.8)rotate(19.1)" d="M-11.2-6 h23.2v6h-23.2zm3.6 0v6m6.6-6v6m3.2-6v6m5.2-6v6M-11.1 0 h22.4v6h-22.4zm7.3 0v6m5.8-6v6m6-6v6"/><path transform="translate(197.2 75.6)rotate(19.7)" d="M-13.8-5.8 h27.1v5.8h-27.1zm3.4 0v5.8m3.4-5.8v5.8m3-5.8v5.8m5.8-5.8v5.8m4.1-5.8v5.8M-12.8 0 h26.1v5.8h-26.1zm7.3 0v5.8m4.1-5.8v5.8m6.7-5.8v5.8m3.4-5.8v5.8"/><path transform="translate(219.4 75.3)rotate(23.1)" d="M-6.1-4.7 h13.4v4.7h-13.4zm4.3 0v4.7m4-4.7v4.7M-6.2 0 h13v4.7h-13zm6.7 0v4.7m4.2-4.7v4.7"/><path transform="translate(239.4 77.4)rotate(22.1)" d="M-8.6-5.6 h18.3v5.6h-18.3zm6.7 0v5.6m7.2-5.6v5.6M-8.7 0 h17.9v5.6h-17.9zm11.9 0v5.6"/><path transform="translate(266.4 77.5)rotate(12.9)" d="M-14.2-5.1 h28.7v5.1h-28.7zm7.4 0v5.1m6.4-5.1v5.1m8.5-5.1v5.1M-13.9 0 h28v5.1h-28zm5.9 0v5.1m7-5.1v5.1m6.4-5.1v5.1"/><path transform="translate(298.7 74.3)rotate(-10.7)" d="M-13.4-5.6 h26v5.6h-26zm7.2 0v5.6m7.4-5.6v5.6m8-5.6v5.6M-13 0 h26.5v5.6h-26.5zm6.2 0v5.6m3.3-5.6v5.6m12.8-5.6v5.6"/><path transform="translate(323.3 74.7)rotate(-12.9)" d="M-9.5-6 h19.8v6h-19.8zm12.5 0v6M-9.2 0 h18.7v6h-18.7zm5 0v6m4.1-6v6m7.1-6v6"/><path transform="translate(5.3 87.7)rotate(21.6)" d="M-10.8-6.5 h21.7v6.5h-21.7zm4.3 0v6.5m4.7-6.5v6.5m8.6-6.5v6.5M-11.5 0 h22.7v6.5h-22.7zm3.3 0v6.5m6.7-6.5v6.5m4.1-6.5v6.5"/><path transform="translate(35.9 88.7)rotate(108.9)" d="M-15.3-6.4 h29.8v6.4h-29.8zm8.2 0v6.4m7.7-6.4v6.4m6.3-6.4v6.4M-14.9 0 h29.5v6.4h-29.5zm8.6 0v6.4m5.3-6.4v6.4m7.1-6.4v6.4m6.4-6.4v6.4"/><path transform="translate(68.1 87.2)rotate(17.9)" d="M-15.2-7.9 h30.1v5.3h-30.1zm4.3 0v5.3m9.5-5.3v5.3m3.9-5.3v5.3m6.4-5.3v5.3M-15.8-2.6 h31v5.3h-31zm5.4 0v5.3m4.5-5.3v5.3m5.8-5.3v5.3m11.7-5.3v5.3M-14.7 2.6 h29.4v5.3h-29.4zm6.7 0v5.3m3.7-5.3v5.3m6.1-5.3v5.3m8.3-5.3v5.3"/><path transform="translate(92.5 90)rotate(13.8)" d="M-8.3-7.5 h15.6v5h-15.6zm4.1 0v5m7.5-5v5M-7.3-2.5 h15.1v5h-15.1zm6.6 0v5m6.5-5v5M-7.4 2.5 h15.9v5h-15.9zm7.8 0v5m3.9-5v5"/><path transform="translate(113.8 89.8)rotate(16.7)" d="M-10.1-6.3 h19.5v6.3h-19.5zm4 0v6.3m13.4-6.3v6.3M-9.7 0 h19.6v6.3h-19.6zm5.4 0v6.3m8.2-6.3v6.3"/><path transform="translate(141.5 88.7)rotate(106.4)" d="M-13.1-8 h25.9v5.3h-25.9zm4.6 0v5.3m9-5.3v5.3m8.6-5.3v5.3M-12.7-2.7 h26.1v5.3h-26.1zm4.6 0v5.3m4.5-5.3v5.3m5-5.3v5.3m8.1-5.3v5.3M-12.9 2.7 h26.1v5.3h-26.1zm6.2 0v5.3m6.1-5.3v5.3m8.4-5.3v5.3"/><path transform="translate(166.8 87)rotate(13.7)" d="M-9.6-8.1 h18.8v5.4h-18.8zm6 0v5.4m6.3-5.4v5.4m2.9-5.4v5.4M-9-2.7 h17.9v5.4h-17.9zm5.6 0v5.4m5.5-5.4v5.4m4.5-5.4v5.4M-9.5 2.7 h18.2v5.4h-18.2zm6.5 0v5.4m4.7-5.4v5.4"/><path transform="translate(191 90.2)rotate(15.2)" d="M-14.3-7.7 h29.2v5.2h-29.2zm2.8 0v5.2m3.5-5.2v5.2m5.9-5.2v5.2m3.2-5.2v5.2m5.8-5.2v5.2m5.5-5.2v5.2M-14.2-2.6 h29.4v5.2h-29.4zm6.5 0v5.2m9.4-5.2v5.2m6.5-5.2v5.2M-15 2.6 h29.7v5.2h-29.7zm4.5 0v5.2m12.4-5.2v5.2m6.7-5.2v5.2"/><path transform="translate(217 88.8)rotate(17.4)" d="M-7.8-7 h15.6v4.7h-15.6zm4.5 0v4.7M-6.8-2.3 h13.9v4.7h-13.9zm6.9 0v4.7m3.3-4.7v4.7M-7.6 2.3 h15.4v4.7h-15.4zm4 0v4.7"/><path transform="translate(237.2 88.4)rotate(18.8)" d="M-8.8-7.1 h17.8v4.7h-17.8zm5.9 0v4.7m5-4.7v4.7m3.9-4.7v4.7M-7.6-2.4 h15.6v4.7h-15.6zm6.8 0v4.7m3.6-4.7v4.7M-9 2.4 h17.4v4.7h-17.4zm3.4 0v4.7m5.5-4.7v4.7"/><path transform="translate(259.1 90.7)rotate(15.2)" d="M-11.4-7.4 h22v4.9h-22zm3.7 0v4.9m3.8-4.9v4.9m4.7-4.9v4.9m2.9-4.9v4.9M-11.4-2.5 h22.5v4.9h-22.5zm5.4 0v4.9m3.9-4.9v4.9m3.5-4.9v4.9m5.5-4.9v4.9M-11.1 2.5 h22.2v4.9h-22.2zm7 0v4.9m7.3-4.9v4.9"/><path transform="translate(278.6 88.1)rotate(4.3)" d="M-6.4-7 h12.3v4.6h-12.3zm7.1 0v4.6m3.6-4.6v4.6M-5.7-2.3 h12.6v4.6h-12.6zm3.4 0v4.6m3.9-4.6v4.6M-6.2 2.3 h13.2v4.6h-13.2zm6.8 0v4.6"/><path transform="translate(302.7 89.5)rotate(-17.3)" d="M-13.4-7.7 h26.6v5.1h-26.6zm7.9 0v5.1m7.9-5.1v5.1m6.7-5.1v5.1M-13.5-2.6 h26.8v5.1h-26.8zm3.2 0v5.1m9.2-5.1v5.1m7.8-5.1v5.1M-13.1 2.6 h26.8v5.1h-26.8zm6.4 0v5.1m7.9-5.1v5.1m6.3-5.1v5.1"/><path transform="translate(12.5 103.6)rotate(108.5)" d="M-14.4-6.9 h29.5v4.6h-29.5zm6.4 0v4.6m12.6-4.6v4.6m4.7-4.6v4.6M-14-2.3 h29.3v4.6h-29.3zm5 0v4.6m5.5-4.6v4.6m6.3-4.6v4.6m3.7-4.6v4.6m4.6-4.6v4.6M-14.1 2.3 h28.8v4.6h-28.8zm3.5 0v4.6m5.3-4.6v4.6m7.6-4.6v4.6m6.4-4.6v4.6"/><path transform="translate(41.9 101.8)rotate(17)" d="M-13.3-6 h26.5v6h-26.5zm5.5 0v6m3.4-6v6m4.8-6v6m6.6-6v6M-13.4 0 h26.7v6h-26.7zm7.4 0v6m8.5-6v6m4.9-6v6"/><path transform="translate(67.1 104.7)rotate(15.8)" d="M-7.7-6 h15.7v6h-15.7zm7.1 0v6m6.8-6v6M-8.2 0 h16.2v6h-16.2zm5.8 0v6m5.2-6v6"/><path transform="translate(89 101.4)rotate(17.5)" d="M-12.4-6.1 h25.4v6.1h-25.4zm3.6 0v6.1m10.1-6.1v6.1m3.7-6.1v6.1m4.8-6.1v6.1M-12.6 0 h24.7v6.1h-24.7zm4.1 0v6.1m5.5-6.1v6.1m4.5-6.1v6.1m4.6-6.1v6.1"/><path transform="translate(115 104.1)rotate(104)" d="M-9.7-6.2 h18.4v6.2h-18.4zm5.1 0v6.2m5.8-6.2v6.2M-8.8 0 h18.1v6.2h-18.1zm4.2 0v6.2m7.9-6.2v6.2"/><path transform="translate(139.2 104.5)rotate(11)" d="M-9.7-6.6 h19.8v6.6h-19.8zm4.4 0v6.6m6.7-6.6v6.6m4.5-6.6v6.6M-9.1 0 h18.9v6.6h-18.9zm6.8 0v6.6m3.9-6.6v6.6"/><path transform="translate(165.8 105)rotate(15.2)" d="M-15.7-7.1 h30.2v4.7h-30.2zm5.4 0v4.7m6.5-4.7v4.7m3.8-4.7v4.7m3.2-4.7v4.7m6.5-4.7v4.7m3.1-4.7v4.7M-14.4-2.4 h29.7v4.7h-29.7zm5.8 0v4.7m7-4.7v4.7m6.9-4.7v4.7m5.5-4.7v4.7M-14.8 2.4 h30.3v4.7h-30.3zm4.5 0v4.7m6.1-4.7v4.7m2.9-4.7v4.7m6.2-4.7v4.7m5.2-4.7v4.7"/><path transform="translate(195.7 105.2)rotate(16.1)" d="M-7.8-7.2 h16.7v4.8h-16.7zm4.2 0v4.8m3.6-4.8v4.8m5.9-4.8v4.8M-8.9-2.4 h16.7v4.8h-16.7zm5.4 0v4.8m4.5-4.8v4.8m2.9-4.8v4.8M-7.8 2.4 h16.1v4.8h-16.1zm3.4 0v4.8m4.8-4.8v4.8m4.1-4.8v4.8"/><path transform="translate(220.3 102.2)rotate(17.4)" d="M-12.8-6.2 h26.7v6.2h-26.7zm5.5 0v6.2m6.1-6.2v6.2m6.7-6.2v6.2M-14.1 0 h27v6.2h-27zm6 0v6.2m5.8-6.2v6.2m6.4-6.2v6.2m3.5-6.2v6.2"/><path transform="translate(243.3 103.3)rotate(18.3)" d="M-8.2-6.7 h15.7v6.7h-15.7zm5 0v6.7m3.4-6.7v6.7M-8.4 0 h16.7v6.7h-16.7zm4.4 0v6.7m3.5-6.7v6.7m2.8-6.7v6.7m4.4-6.7v6.7"/><path transform="translate(269.2 105)rotate(4.2)" d="M-12.4-7.5 h25.2v5h-25.2zm6.4 0v5m5.8-5v5m3.6-5v5m3.1-5v5M-13.1-2.5 h25.9v5h-25.9zm7.7 0v5m4.7-5v5m7-5v5m5-5v5M-12.4 2.5 h25.8v5h-25.8zm11.7 0v5m3.3-5v5m7.5-5v5"/><path transform="translate(298.8 101.6)rotate(-13.6)" d="M-11.2-6.2 h23.2v6.2h-23.2zm3.4 0v6.2m6-6.2v6.2m3.3-6.2v6.2m6.6-6.2v6.2M-11.5 0 h22.6v6.2h-22.6zm4.8 0v6.2m5-6.2v6.2m8-6.2v6.2"/><path transform="translate(324.8 103.4)rotate(71.4)" d="M-13.5-6.7 h27.2v6.7h-27.2zm7.5 0v6.7m5-6.7v6.7m7.7-6.7v6.7m3.9-6.7v6.7M-13.6 0 h28v6.7h-28zm7.1 0v6.7m5.9-6.7v6.7m7.9-6.7v6.7"/><path transform="translate(12.2 119.5)rotate(17)" d="M-14.3-6.9 h29.3v4.6h-29.3zm7.9 0v4.6m14.9-4.6v4.6M-14.4-2.3 h28.2v4.6h-28.2zm6.4 0v4.6m3.7-4.6v4.6m8.5-4.6v4.6m5.6-4.6v4.6M-14.5 2.3 h28.6v4.6h-28.6zm4.4 0v4.6m5.2-4.6v4.6m8.7-4.6v4.6m7.6-4.6v4.6"/><path transform="translate(36.8 117.3)rotate(107.9)" d="M-7.4-8.3 h14.5v5.6h-14.5zm3.9 0v5.6m4.6-5.6v5.6M-6.8-2.8 h15v5.6h-15zm5.7 0v5.6m7.2-5.6v5.6M-8 2.8 h15.9v5.6h-15.9zm5.9 0v5.6m8.3-5.6v5.6"/><path transform="translate(61.6 119.8)rotate(14.8)" d="M-12.5-8.1 h25.4v5.4h-25.4zm8.2 0v5.4m7.3-5.4v5.4m7.7-5.4v5.4M-12.5-2.7 h25.4v5.4h-25.4zm3.9 0v5.4m4.7-5.4v5.4m7.4-5.4v5.4M-11.7 2.7 h24.6v5.4h-24.6zm6.4 0v5.4m6.2-5.4v5.4m4.3-5.4v5.4"/><path transform="translate(87.7 119.3)rotate(12.1)" d="M-10.1-7.7 h19.8v5.1h-19.8zm4.8 0v5.1M-9.8-2.6 h20.1v5.1h-20.1zm10.8 0v5.1m6.9-5.1v5.1M-10.6 2.6 h21.2v5.1h-21.2zm5.5 0v5.1m11.4-5.1v5.1"/><path transform="translate(106 120.1)rotate(8.4)" d="M-7.7-6.9 h16v4.6h-16zm5 0v4.6M-7.6-2.3 h16.4v4.6h-16.4zm7.3 0v4.6m5.2-4.6v4.6M-8 2.3 h16.8v4.6h-16.8zm7.2 0v4.6"/><path transform="translate(126.1 120)rotate(8.6)" d="M-7.7-7.5 h15.5v5h-15.5zm11.1 0v5M-8.1-2.5 h15.4v5h-15.4zm8.1 0v5m5.3-5v5M-7.8 2.5 h15.6v5h-15.6zm8.3 0v5"/><path transform="translate(148.8 118)rotate(11.8)" d="M-13.3-6.9 h26.3v4.6h-26.3zm5 0v4.6m5.6-4.6v4.6m3.9-4.6v4.6m4.1-4.6v4.6m6-4.6v4.6M-13.2-2.3 h25.7v4.6h-25.7zm5.6 0v4.6m14.7-4.6v4.6M-12.5 2.3 h24.5v4.6h-24.5zm5 0v4.6m4.4-4.6v4.6m5.6-4.6v4.6m6.2-4.6v4.6"/><path transform="translate(177.5 120)rotate(12.7)" d="M-13-8 h26.5v5.3h-26.5zm5 0v5.3m6.1-5.3v5.3m3-5.3v5.3m3.3-5.3v5.3m5.5-5.3v5.3M-13.3-2.7 h25.5v5.3h-25.5zm8.7 0v5.3m6.2-5.3v5.3m3.5-5.3v5.3m3.3-5.3v5.3M-12.4 2.7 h24.6v5.3h-24.6zm4.3 0v5.3m6.9-5.3v5.3m5.8-5.3v5.3m3.7-5.3v5.3"/><path transform="translate(202 118.8)rotate(16.4)" d="M-8.9-7.7 h17.4v5.1h-17.4zm4.1 0v5.1m6.5-5.1v5.1M-8.8-2.6 h17.4v5.1h-17.4zm6.1 0v5.1m6.2-5.1v5.1M-8.1 2.6 h16.2v5.1h-16.2zm3.7 0v5.1m5.9-5.1v5.1"/><path transform="translate(222.3 118.9)rotate(18.9)" d="M-7-8 h13.8v5.3h-13.8zm3.3 0v5.3m5.1-5.3v5.3M-6.1-2.7 h12.1v5.3h-12.1zm4.8 0v5.3M-6.9 2.7 h12.8v5.3h-12.8zm6.8 0v5.3"/><path transform="translate(240.4 120.4)rotate(18.1)" d="M-10.4-7.6 h21.1v5h-21.1zm4.6 0v5m4.5-5v5m6-5v5m2.8-5v5M-9.4-2.5 h19.8v5h-19.8zm5.5 0v5m2.9-5v5m5.6-5v5m3.8-5v5M-9.3 2.5 h19.7v5h-19.7zm6.8 0v5m8.2-5v5"/><path transform="translate(269.8 118.3)rotate(2.4)" d="M-15.6-7.9 h31.7v5.3h-31.7zm5 0v5.3m4.3-5.3v5.3m14.5-5.3v5.3M-16.7-2.6 h33.1v5.3h-33.1zm5.2 0v5.3m6.6-5.3v5.3m3.8-5.3v5.3m4.9-5.3v5.3m7.5-5.3v5.3M-16.7 2.6 h32.2v5.3h-32.2zm8.8 0v5.3m5.7-5.3v5.3m7.3-5.3v5.3m7.9-5.3v5.3"/><path transform="translate(300.1 119.9)rotate(-20.4)" d="M-10-7.1 h21v4.7h-21zm4.1 0v4.7m6.4-4.7v4.7m4-4.7v4.7M-10.9-2.4 h21v4.7h-21zm3.9 0v4.7m5.8-4.7v4.7m6.1-4.7v4.7M-9.9 2.4 h20.1v4.7h-20.1zm4.1 0v4.7m5.9-4.7v4.7m5.3-4.7v4.7"/><path transform="translate(330.8 119.7)rotate(-24.4)" d="M-15.6-6.7 h31.9v6.7h-31.9zm7.5 0v6.7m6.5-6.7v6.7m4-6.7v6.7m3.1-6.7v6.7m3.3-6.7v6.7m3.8-6.7v6.7M-14.9 0 h30.5v6.7h-30.5zm7.1 0v6.7m7.1-6.7v6.7m3.4-6.7v6.7m6.1-6.7v6.7"/><path transform="translate(12.9 131.3)rotate(17.6)" d="M-13-5.3 h26.9v5.3h-26.9zm6 0v5.3m7.3-5.3v5.3m5.2-5.3v5.3M-13.7 0 h27.9v5.3h-27.9zm8.3 0v5.3m7.5-5.3v5.3m5.1-5.3v5.3m4.7-5.3v5.3"/><path transform="translate(36.2 131.3)rotate(16.5)" d="M-6.8-6 h12.7v6h-12.7zm4.8 0v6M-6 0 h11.6v6h-11.6zm7.6 0v6"/><path transform="translate(54.8 131)rotate(13.2)" d="M-10.2-5.8 h20.3v5.8h-20.3zm14 0v5.8M-10 0 h20.1v5.8h-20.1zm4.4 0v5.8m7.2-5.8v5.8m6.8-5.8v5.8"/><path transform="translate(81.3 130.7)rotate(12.6)" d="M-12.4-4.9 h24.5v4.9h-24.5zm3.7 0v4.9m4.8-4.9v4.9m7.5-4.9v4.9M-12.3 0 h23.8v4.9h-23.8zm7.5 0v4.9m3.4-4.9v4.9m8.3-4.9v4.9"/><path transform="translate(107.2 133.6)rotate(98.9)" d="M-10.8-5.7 h21.1v5.7h-21.1zm6.3 0v5.7m4.5-5.7v5.7m3.6-5.7v5.7M-10.4 0 h20.5v5.7h-20.5zm5.8 0v5.7m7.1-5.7v5.7"/><path transform="translate(129.7 132.7)rotate(98.6)" d="M-10.2-6.2 h21.2v6.2h-21.2zm6.2 0v6.2m13-6.2v6.2M-11.1 0 h22v6.2h-22zm6 0v6.2m6.1-6.2v6.2m5.3-6.2v6.2"/><path transform="translate(156 131.4)rotate(99)" d="M-10.6-5.7 h20.9v5.7h-20.9zm5.1 0v5.7m4.2-5.7v5.7m5.6-5.7v5.7M-9.6 0 h20v5.7h-20zm4.4 0v5.7m10.3-5.7v5.7"/><path transform="translate(177.7 130.9)rotate(101.7)" d="M-11-5 h22.5v5h-22.5zm5.3 0v5m3.1-5v5m9-5v5M-11.6 0 h23.2v5h-23.2zm4.8 0v5m3.3-5v5m3.9-5v5m3.3-5v5m2.5-5v5"/><path transform="translate(206.7 131.9)rotate(18.3)" d="M-12.9-6.8 h25.6v4.5h-25.6zm5.8 0v4.5m4.5-4.5v4.5m4.7-4.5v4.5m2.5-4.5v4.5m3.2-4.5v4.5M-13.2-2.3 h27.2v4.5h-27.2zm4 0v4.5m2.4-4.5v4.5m3.7-4.5v4.5m4.8-4.5v4.5m3.7-4.5v4.5m2.9-4.5v4.5M-12.9 2.3 h26.8v4.5h-26.8zm5 0v4.5m5.4-4.5v4.5m5.2-4.5v4.5m3.6-4.5v4.5m5.4-4.5v4.5"/><path transform="translate(229.9 133.1)rotate(15.3)" d="M-7.6-5.5 h15.2v5.5h-15.2zm6.7 0v5.5m6.6-5.5v5.5M-7.7 0 h15.3v5.5h-15.3zm4.1 0v5.5m4.4-5.5v5.5m3.3-5.5v5.5"/><path transform="translate(249.5 133.5)rotate(18.2)" d="M-6.4-6.5 h13.2v6.5h-13.2zm3.7 0v6.5m4.4-6.5v6.5M-6.4 0 h13.1v6.5h-13.1zm5.7 0v6.5m3.5-6.5v6.5"/><path transform="translate(270 133.3)rotate(90.6)" d="M-11.1-6.1 h21.5v6.1h-21.5zm7.5 0v6.1m5.5-6.1v6.1M-10.5 0 h21.7v6.1h-21.7zm8 0v6.1m9.5-6.1v6.1"/><path transform="translate(299.3 131.2)rotate(-22.7)" d="M-14-5.6 h28.4v5.6h-28.4zm6.1 0v5.6m8.4-5.6v5.6m3.3-5.6v5.6m6.5-5.6v5.6M-14.2 0 h28.6v5.6h-28.6zm11.1 0v5.6m4.9-5.6v5.6m3.5-5.6v5.6"/><path transform="translate(11.4 143.8)rotate(17.1)" d="M-14.9-5.9 h30.1v5.9h-30.1zm4.8 0v5.9m5-5.9v5.9m6.3-5.9v5.9M-15 0 h29.7v5.9h-29.7zm8.5 0v5.9m6.7-5.9v5.9"/><path transform="translate(37.9 142.9)rotate(13.3)" d="M-7.3-4.6 h13.8v4.6h-13.8zm6.1 0v4.6M-6.2 0 h13.4v4.6h-13.4zm6 0v4.6"/><path transform="translate(62.1 143.8)rotate(9.9)" d="M-15.8-4.5 h31.3v4.5h-31.3zm14.9 0v4.5m4-4.5v4.5m7.1-4.5v4.5M-15.1 0 h30.2v4.5h-30.2zm4.4 0v4.5m8-4.5v4.5m13.9-4.5v4.5"/><path transform="translate(94.1 146.4)rotate(6.6)" d="M-9.4-5.5 h19.3v5.5h-19.3zm4.6 0v5.5m7.9-5.5v5.5M-9.1 0 h18.2v5.5h-18.2zm8.8 0v5.5m7.4-5.5v5.5"/><path transform="translate(113.5 145.7)rotate(5.4)" d="M-7.6-4.3 h14.9v4.3h-14.9zm5.4 0v4.3m5.1-4.3v4.3M-7.6 0 h16v4.3h-16zm5.3 0v4.3m7.3-4.3v4.3"/><path transform="translate(137.4 146.5)rotate(8.6)" d="M-10.4-5.9 h21.1v5.9h-21.1zm6 0v5.9m5.6-5.9v5.9m5.3-5.9v5.9M-9.7 0 h19.1v5.9h-19.1zm6.8 0v5.9m4.8-5.9v5.9"/><path transform="translate(164.5 146.4)rotate(12.1)" d="M-16.6-5 h32v5h-32zm5.3 0v5m3-5v5m3.8-5v5m9-5v5m3-5v5m4.4-5v5M-16.5 0 h32.4v5h-32.4zm4.4 0v5m3.8-5v5m2.9-5v5m4.3-5v5m3.4-5v5m5.9-5v5m2.4-5v5"/><path transform="translate(196.3 144.9)rotate(101.5)" d="M-10.8-5.5 h20.9v5.5h-20.9zm5.3 0v5.5m4.3-5.5v5.5m2.4-5.5v5.5m5-5.5v5.5M-11.1 0 h21.3v5.5h-21.3zm3.9 0v5.5m5.3-5.5v5.5m3.7-5.5v5.5m5.9-5.5v5.5"/><path transform="translate(223 144.5)rotate(17.9)" d="M-15.1-5.6 h29.5v5.6h-29.5zm3.3 0v5.6m5.1-5.6v5.6m5.9-5.6v5.6m2.2-5.6v5.6m4.3-5.6v5.6m3.4-5.6v5.6M-15.4 0 h29.7v5.6h-29.7zm3 0v5.6m3.2-5.6v5.6m4.6-5.6v5.6m4.7-5.6v5.6m4.5-5.6v5.6m3.4-5.6v5.6m3.5-5.6v5.6"/><path transform="translate(249.7 143.7)rotate(15.7)" d="M-8.1-5.9 h15.4v5.9h-15.4zm4.8 0v5.9m5.8-5.9v5.9M-7.8 0 h15v5.9h-15zm2.3 0v5.9m2.3-5.9v5.9m5.4-5.9v5.9m2.7-5.9v5.9"/><path transform="translate(276.8 144.1)rotate(-2.9)" d="M-14.2-5.3 h28.8v5.3h-28.8zm7.5 0v5.3m7.7-5.3v5.3m6.6-5.3v5.3M-13.7 0 h28.2v5.3h-28.2zm6.2 0v5.3m3.9-5.3v5.3m7.9-5.3v5.3m5.7-5.3v5.3"/><path transform="translate(302.1 144.6)rotate(-22)" d="M-8.7-4.9 h16.4v4.9h-16.4zm7.5 0v4.9M-8 0 h16.1v4.9h-16.1zm10.9 0v4.9m3.5-4.9v4.9"/><path transform="translate(321.7 144.3)rotate(-24.5)" d="M-6.6-5.8 h14v5.8h-14zm9.9 0v5.8M-6 0 h12v5.8h-12zm3.4 0v5.8"/><path transform="translate(4.3 155.7)rotate(100.5)" d="M-6.2-6.8 h13.2v4.5h-13.2zm4 0v4.5m6.4-4.5v4.5M-7.2-2.3 h13v4.5h-13zm3.8 0v4.5M-6.6 2.3 h13.1v4.5h-13.1zm4 0v4.5m3.9-4.5v4.5"/><path transform="translate(26.5 156.6)rotate(11.2)" d="M-12.2-5.3 h24.4v3.5h-24.4zm3.9 0v3.5m8.3-3.5v3.5m7-3.5v3.5M-11.9-1.8 h23.7v3.5h-23.7zm7.5 0v3.5m7.7-3.5v3.5m3.8-3.5v3.5M-11.5 1.8 h23.5v3.5h-23.5zm6.3 0v3.5m6.8-3.5v3.5m7.4-3.5v3.5"/><path transform="translate(50.5 156.3)rotate(8.1)" d="M-9.5-5 h19.6v3.3h-19.6zm5.7 0v3.3m8.1-3.3v3.3M-10.1-1.7 h20.7v3.3h-20.7zm8.1 0v3.3m4.6-3.3v3.3m5.8-3.3v3.3M-10.4 1.7 h20.2v3.3h-20.2zm8.6 0v3.3m7.2-3.3v3.3"/><path transform="translate(80.6 157)rotate(4.4)" d="M-14.5-5.7 h29.3v5.7h-29.3zm3.9 0v5.7m6.3-5.7v5.7m7.7-5.7v5.7m5-5.7v5.7M-15.3 0 h30.3v5.7h-30.3zm6.7 0v5.7m3.9-5.7v5.7m4.9-5.7v5.7m6-5.7v5.7m4.7-5.7v5.7"/><path transform="translate(104.3 155.4)rotate(5.7)" d="M-8.2-6.3 h16.5v6.3h-16.5zm7.5 0v6.3M-8.1 0 h16v6.3h-16zm5.3 0v6.3m8.1-6.3v6.3"/><path transform="translate(126.6 156.8)rotate(4.5)" d="M-10-5.7 h20v3.8h-20zm4.3 0v3.8m2.5-3.8v3.8m2.8-3.8v3.8m3.9-3.8v3.8m3.8-3.8v3.8M-9.5-1.9 h19.2v3.8h-19.2zm2.5 0v3.8m5-3.8v3.8m2.5-3.8v3.8m3.7-3.8v3.8M-9.2 1.9 h18v3.8h-18zm3.7 0v3.8m4.7-3.8v3.8m1.9-3.8v3.8m2.3-3.8v3.8m2.5-3.8v3.8"/><path transform="translate(146.3 155.5)rotate(9.2)" d="M-6.8-5.9 h14.2v5.9h-14.2zm1.9 0v5.9m2.7-5.9v5.9m4.1-5.9v5.9M-7.1 0 h14v5.9h-14zm3 0v5.9m2.7-5.9v5.9m3-5.9v5.9m3.4-5.9v5.9"/><path transform="translate(175.2 157.6)rotate(11.9)" d="M-15.3-6 h30.8v4h-30.8zm4.4 0v4m6.1-4v4m4.2-4v4m2.7-4v4m3.9-4v4m2.2-4v4m4.2-4v4M-15.1-2 h29.7v4h-29.7zm3 0v4m3.4-4v4m4.5-4v4m2-4v4m1.9-4v4m3.4-4v4m6.2-4v4m2.1-4v4M-14.2 2 h29.8v4h-29.8zm1.8 0v4m2.2-4v4m2.2-4v4m4-4v4m2.6-4v4m3.8-4v4m3.2-4v4m4.4-4v4m3.5-4v4"/><path transform="translate(204.9 155.2)rotate(13.1)" d="M-10.4-6.5 h21.3v6.5h-21.3zm1.9 0v6.5m3.5-6.5v6.5m5.6-6.5v6.5m4.3-6.5v6.5m2.7-6.5v6.5M-10.7 0 h22.4v6.5h-22.4zm2.1 0v6.5m3-6.5v6.5m4.7-6.5v6.5m1.8-6.5v6.5m3.4-6.5v6.5m3.5-6.5v6.5"/><path transform="translate(228.7 154.7)rotate(14.5)" d="M-10.3-5.2 h20.7v5.2h-20.7zm4.2 0v5.2m2.6-5.2v5.2m3.8-5.2v5.2m2.8-5.2v5.2m4.3-5.2v5.2M-10.2 0 h20.9v5.2h-20.9zm7.7 0v5.2m4-5.2v5.2m2.1-5.2v5.2m3.4-5.2v5.2m1.8-5.2v5.2"/><path transform="translate(261.5 155.6)rotate(96.9)" d="M-16.1-5.7 h32v5.7h-32zm3.5 0v5.7m6.7-5.7v5.7m2-5.7v5.7m4-5.7v5.7m4.2-5.7v5.7m4.7-5.7v5.7m2.6-5.7v5.7M-15.9 0 h31.5v5.7h-31.5zm4.3 0v5.7m1.8-5.7v5.7m2.2-5.7v5.7m2.3-5.7v5.7m5.5-5.7v5.7m3.9-5.7v5.7m4.2-5.7v5.7m4.1-5.7v5.7"/><path transform="translate(288.3 158.5)rotate(71.1)" d="M-9-6.2 h17.7v4.1h-17.7zm8 0v4.1m5.4-4.1v4.1M-9.1-2.1 h18.3v4.1h-18.3zm6.2 0v4.1m3.5-4.1v4.1m4.9-4.1v4.1M-8.3 2.1 h16.8v4.1h-16.8zm5.1 0v4.1m5.8-4.1v4.1"/><path transform="translate(313.3 157.3)rotate(-24.7)" d="M-13.4-6.7 h26.5v6.7h-26.5zm4 0v6.7m3.3-6.7v6.7m6.8-6.7v6.7M-14.3 0 h28.1v6.7h-28.1zm3.1 0v6.7m4-6.7v6.7m7.9-6.7v6.7m5.7-6.7v6.7m3-6.7v6.7"/><path transform="translate(10.2 168.7)rotate(10.1)" d="M-13.4-6.3 h27.1v6.3h-27.1zm7 0v6.3m7.8-6.3v6.3m4.9-6.3v6.3M-14.3 0 h29v6.3h-29zm8.6 0v6.3m3.2-6.3v6.3m7.2-6.3v6.3m7.6-6.3v6.3"/><path transform="translate(37.7 167.1)rotate(97.2)" d="M-8.2-6.3 h16.3v6.3h-16.3zm6.4 0v6.3m8.3-6.3v6.3M-8.8 0 h16.7v6.3h-16.7zm3.5 0v6.3m8.7-6.3v6.3"/><path transform="translate(62.9 170.2)rotate(4.6)" d="M-13.8-5.8 h27.4v5.8h-27.4zm6.5 0v5.8m7-5.8v5.8m7.2-5.8v5.8M-14.1 0 h27.7v5.8h-27.7zm5.4 0v5.8m8-5.8v5.8m4.1-5.8v5.8m3.5-5.8v5.8"/><path transform="translate(92.7 168.1)rotate(2.2)" d="M-12.7-5.9 h25.2v3.9h-25.2zm6.8 0v3.9m10.6-3.9v3.9m5.3-3.9v3.9M-12.2-2 h24.5v3.9h-24.5zm9 0v3.9m7.3-3.9v3.9m4.5-3.9v3.9M-12.7 2 h24.8v3.9h-24.8zm11.3 0v3.9m6.6-3.9v3.9"/><path transform="translate(122.2 170.3)rotate(3.7)" d="M-15.1-4.7 h29.2v4.7h-29.2zm4.2 0v4.7m4.6-4.7v4.7m3.8-4.7v4.7m2.1-4.7v4.7m2.2-4.7v4.7m3.7-4.7v4.7m4-4.7v4.7m2.3-4.7v4.7M-14.4 0 h29.6v4.7h-29.6zm2.4 0v4.7m3.3-4.7v4.7m6.5-4.7v4.7m2.5-4.7v4.7m2.8-4.7v4.7m3-4.7v4.7m4.8-4.7v4.7"/><path transform="translate(153.2 168.9)rotate(8.7)" d="M-13.5-5.9 h27.4v5.9h-27.4zm3.1 0v5.9m4.8-5.9v5.9m2.6-5.9v5.9m4.6-5.9v5.9m1.8-5.9v5.9m4.9-5.9v5.9m2-5.9v5.9M-14 0 h28.4v5.9h-28.4zm1.8 0v5.9m2.6-5.9v5.9m4-5.9v5.9m1.8-5.9v5.9m2.9-5.9v5.9m4.7-5.9v5.9m4.7-5.9v5.9m4.3-5.9v5.9"/><path transform="translate(183.8 169.2)rotate(10.4)" d="M-13.1-5.1 h27.2v5.1h-27.2zm2.6 0v5.1m2.1-5.1v5.1m2-5.1v5.1m3.9-5.1v5.1m4.5-5.1v5.1m3.2-5.1v5.1m2.5-5.1v5.1m1.9-5.1v5.1M-13.7 0 h27.5v5.1h-27.5zm2.1 0v5.1m4-5.1v5.1m4.4-5.1v5.1m1.9-5.1v5.1m2.5-5.1v5.1m3.5-5.1v5.1m2.2-5.1v5.1m2.7-5.1v5.1"/><path transform="translate(211.2 169.6)rotate(105.4)" d="M-10.2-5.3 h21v5.3h-21zm2.1 0v5.3m4.1-5.3v5.3m8.6-5.3v5.3m2-5.3v5.3M-11.2 0 h22.6v5.3h-22.6zm3.6 0v5.3m4.7-5.3v5.3m1.9-5.3v5.3m2.1-5.3v5.3m2.8-5.3v5.3m3.8-5.3v5.3"/><path transform="translate(240.9 169.8)rotate(14)" d="M-15.5-6.3 h30.8v6.3h-30.8zm2.2 0v6.3m7.9-6.3v6.3m4.7-6.3v6.3m7.9-6.3v6.3m4.5-6.3v6.3m1.8-6.3v6.3M-15.3 0 h30v6.3h-30zm3.6 0v6.3m4.2-6.3v6.3m4.7-6.3v6.3m3.5-6.3v6.3m3.1-6.3v6.3m3.7-6.3v6.3m2.7-6.3v6.3m1.8-6.3v6.3"/><path transform="translate(269.1 168.7)rotate(-3.1)" d="M-9.4-5.9 h18.9v5.9h-18.9zm7.3 0v5.9m7.6-5.9v5.9M-9.4 0 h18.6v5.9h-18.6zm6.5 0v5.9m7-5.9v5.9m3.5-5.9v5.9"/><path transform="translate(296.4 168.5)rotate(-25.4)" d="M-11.8-5.3 h24.4v5.3h-24.4zm4.8 0v5.3m5.6-5.3v5.3m12.4-5.3v5.3M-11.8 0 h24.3v5.3h-24.3zm5.3 0v5.3m3.2-5.3v5.3m5.8-5.3v5.3m7.7-5.3v5.3"/><path transform="translate(319.6 170.1)rotate(61.1)" d="M-9-4.5 h18.5v4.5h-18.5zm13.4 0v4.5M-9.7 0 h20.1v4.5h-20.1zm6.3 0v4.5"/><path transform="translate(5 182.6)rotate(10.4)" d="M-13-5.2 h26v5.2h-26zm5.7 0v5.2m7.1-5.2v5.2m5.9-5.2v5.2m4.7-5.2v5.2M-13.3 0 h26v5.2h-26zm13.5 0v5.2m6.6-5.2v5.2"/><path transform="translate(32.4 180.9)rotate(7.7)" d="M-9.3-5.2 h19.3v5.2h-19.3zm9.2 0v5.2m8.2-5.2v5.2M-9.1 0 h18.3v5.2h-18.3zm7.3 0v5.2m6.2-5.2v5.2"/><path transform="translate(58.9 180.6)rotate(5.9)" d="M-14.7-4.4 h29.7v4.4h-29.7zm5.9 0v4.4m6.9-4.4v4.4m8.2-4.4v4.4M-15.6 0 h30.6v4.4h-30.6zm8.5 0v4.4m4.7-4.4v4.4m7.8-4.4v4.4"/><path transform="translate(89.1 182.1)rotate(7.4)" d="M-12.1-4.3 h24.2v4.3h-24.2zm6.5 0v4.3m5.2-4.3v4.3m4.3-4.3v4.3m6.3-4.3v4.3M-11.9 0 h23.6v4.3h-23.6zm7.1 0v4.3m7.6-4.3v4.3m4.2-4.3v4.3"/><path transform="translate(111.4 179.9)rotate(3.4)" d="M-6.3-5 h13.1v5h-13.1zm3.7 0v5m4.7-5v5m3.2-5v5M-7.5 0 h13.7v5h-13.7zm2.2 0v5m3.7-5v5m3-5v5m3-5v5"/><path transform="translate(133.6 181.5)rotate(5)" d="M-12-5 h23.9v5h-23.9zm2.7 0v5m3.8-5v5m2.6-5v5m3.9-5v5m3.6-5v5m2.3-5v5m2.8-5v5M-11.5 0 h23.1v5h-23.1zm2.5 0v5m3.1-5v5m5.6-5v5m4.6-5v5m2-5v5m2.9-5v5"/><path transform="translate(162.4 182.5)rotate(12.8)" d="M-11.9-5.9 h22.5v3.9h-22.5zm4.4 0v3.9m3.1-3.9v3.9m3.4-3.9v3.9m4.4-3.9v3.9m2.7-3.9v3.9M-11.3-2 h22.9v3.9h-22.9zm2 0v3.9m4.2-3.9v3.9m2.7-3.9v3.9m6.6-3.9v3.9m3.9-3.9v3.9M-11.3 2 h22.7v3.9h-22.7zm5.9 0v3.9m3.5-3.9v3.9m2.3-3.9v3.9m2.9-3.9v3.9m4.3-3.9v3.9m2.3-3.9v3.9"/><path transform="translate(192.7 180.7)rotate(9.7)" d="M-16.8-5.2 h32.5v5.2h-32.5zm3.2 0v5.2m2-5.2v5.2m3.9-5.2v5.2m3.6-5.2v5.2m2.7-5.2v5.2m4.5-5.2v5.2m3.6-5.2v5.2m4.7-5.2v5.2M-15.7 0 h31.9v5.2h-31.9zm3 0v5.2m3.4-5.2v5.2m1.8-5.2v5.2m7.8-5.2v5.2m2.4-5.2v5.2m3.8-5.2v5.2m3.4-5.2v5.2m3.4-5.2v5.2"/><path transform="translate(226.7 180)rotate(100.3)" d="M-13.3-5.3 h27.6v5.3h-27.6zm4 0v5.3m4.4-5.3v5.3m3.3-5.3v5.3m2.7-5.3v5.3m3-5.3v5.3m3.9-5.3v5.3M-14.2 0 h28v5.3h-28zm4.7 0v5.3m2.4-5.3v5.3m6-5.3v5.3m3.3-5.3v5.3m4.5-5.3v5.3"/><path transform="translate(251.6 179.9)rotate(11.6)" d="M-7.6-6.1 h15.2v6.1h-15.2zm3.9 0v6.1m3-6.1v6.1m4.4-6.1v6.1M-7.3 0 h14.5v6.1h-14.5zm3.4 0v6.1m4.3-6.1v6.1m4.3-6.1v6.1"/><path transform="translate(268.8 179.3)rotate(87.7)" d="M-7.2-4.5 h13.9v4.5h-13.9zm4.7 0v4.5M-6 0 h12v4.5h-12zm5.9 0v4.5"/><path transform="translate(288.7 180.9)rotate(71.9)" d="M-9.3-5.9 h19.2v5.9h-19.2zm6.5 0v5.9m6-5.9v5.9M-9.4 0 h18.6v5.9h-18.6zm4.7 0v5.9m12.3-5.9v5.9"/><path transform="translate(310 180.1)rotate(-27.7)" d="M-9.3-4.8 h17.2v4.8h-17.2zm11.2 0v4.8M-8 0 h16.3v4.8h-16.3zm3.3 0v4.8m4.5-4.8v4.8"/><path transform="translate(11.2 195.4)rotate(11.6)" d="M-15-6.9 h30.4v4.6h-30.4zm5.9 0v4.6m4.6-4.6v4.6m7-4.6v4.6m6.3-4.6v4.6M-15.3-2.3 h31.2v4.6h-31.2zm4.6 0v4.6m7.6-4.6v4.6m4.6-4.6v4.6m5.7-4.6v4.6M-15.6 2.3 h31.5v4.6h-31.5zm7.7 0v4.6m6.9-4.6v4.6m4.9-4.6v4.6m7.8-4.6v4.6"/><path transform="translate(42.5 192)rotate(4.7)" d="M-13.7-5.4 h27.9v3.6h-27.9zm8.1 0v3.6m7.6-3.6v3.6m8.7-3.6v3.6M-13.9-1.8 h27.7v3.6h-27.7zm4.9 0v3.6m7-3.6v3.6m7.2-3.6v3.6m3.8-3.6v3.6M-13.7 1.8 h27.7v3.6h-27.7zm6.5 0v3.6m6.2-3.6v3.6m4.7-3.6v3.6m3.8-3.6v3.6m3.9-3.6v3.6"/><path transform="translate(65.2 193.5)rotate(2.2)" d="M-7.4-6.3 h14.9v6.3h-14.9zm9 0v6.3m3.8-6.3v6.3M-6.7 0 h13.9v6.3h-13.9z"/><path transform="translate(87 194.5)rotate(92.5)" d="M-8.2-6.7 h16.4v4.5h-16.4zm4.5 0v4.5m8-4.5v4.5M-8-2.2 h16.5v4.5h-16.5zm6.4 0v4.5m6.1-4.5v4.5M-7.9 2.2 h16v4.5h-16zm4.3 0v4.5m6.4-4.5v4.5"/><path transform="translate(110.2 192.5)rotate(5.2)" d="M-12.3-6.4 h25v6.4h-25zm2.9 0v6.4m2.2-6.4v6.4m2.9-6.4v6.4m2.7-6.4v6.4m3-6.4v6.4m4-6.4v6.4m4.1-6.4v6.4M-13.5 0 h26.6v6.4h-26.6zm2.2 0v6.4m2.5-6.4v6.4m1.8-6.4v6.4m4.4-6.4v6.4m3.9-6.4v6.4m3.7-6.4v6.4m2.6-6.4v6.4m2.2-6.4v6.4"/><path transform="translate(135.7 191.6)rotate(98.9)" d="M-7.4-5.8 h15v5.8h-15zm2.6 0v5.8m2.2-5.8v5.8m2.1-5.8v5.8m4.2-5.8v5.8m2.1-5.8v5.8M-8.5 0 h16v5.8h-16zm3.9 0v5.8m1.9-5.8v5.8m4.1-5.8v5.8m4.2-5.8v5.8"/><path transform="translate(158.7 194.1)rotate(13.4)" d="M-9.9-6.4 h20.4v6.4h-20.4zm3.4 0v6.4m3-6.4v6.4m4-6.4v6.4m4.3-6.4v6.4m4-6.4v6.4M-9.6 0 h19.7v6.4h-19.7zm2.1 0v6.4m4.5-6.4v6.4m3.5-6.4v6.4m4.8-6.4v6.4"/><path transform="translate(184.7 193.4)rotate(14.2)" d="M-13.5-7.2 h26v4.8h-26zm1.8 0v4.8m2-4.8v4.8m7.9-4.8v4.8m7.5-4.8v4.8m4.6-4.8v4.8M-12.6-2.4 h24.9v4.8h-24.9zm3.5 0v4.8m6.8-4.8v4.8m1.8-4.8v4.8m2.1-4.8v4.8m6-4.8v4.8M-12.9 2.4 h26.1v4.8h-26.1zm8.6 0v4.8m2-4.8v4.8m7.4-4.8v4.8m2.8-4.8v4.8m3.6-4.8v4.8"/><path transform="translate(212.9 193.1)rotate(12.9)" d="M-10.1-7 h20.7v4.7h-20.7zm3.9 0v4.7m1.8-4.7v4.7m2.8-4.7v4.7m8-4.7v4.7M-9.8-2.3 h20.3v4.7h-20.3zm7.9 0v4.7m3.7-4.7v4.7m2-4.7v4.7m3.8-4.7v4.7M-9.8 2.3 h20v4.7h-20zm3.1 0v4.7m3.9-4.7v4.7m2.3-4.7v4.7m4.4-4.7v4.7m4.5-4.7v4.7"/><path transform="translate(233.2 192.8)rotate(11.6)" d="M-5.9-7.4 h12.8v4.9h-12.8zm4.7 0v4.9m3.5-4.9v4.9M-6.5-2.5 h12.9v4.9h-12.9zm3.4 0v4.9m1.9-4.9v4.9m2.9-4.9v4.9m1.9-4.9v4.9M-7.4 2.5 h13.8v4.9h-13.8zm3.5 0v4.9m1.8-4.9v4.9m2.8-4.9v4.9"/><path transform="translate(255.2 191.9)rotate(94.9)" d="M-10.6-6.4 h21.2v6.4h-21.2zm3 0v6.4m4-6.4v6.4m8-6.4v6.4m3.2-6.4v6.4M-10.6 0 h22.6v6.4h-22.6zm2.5 0v6.4m2.1-6.4v6.4m4.7-6.4v6.4m3.2-6.4v6.4m2.5-6.4v6.4m2.2-6.4v6.4"/><path transform="translate(285 192.5)rotate(-19.6)" d="M-15.6-6.6 h31.6v6.6h-31.6zm4.6 0v6.6m3.2-6.6v6.6m6.8-6.6v6.6m6.4-6.6v6.6m6-6.6v6.6M-16.7 0 h32.1v6.6h-32.1zm7.8 0v6.6m6.1-6.6v6.6m7.4-6.6v6.6m5.3-6.6v6.6"/><path transform="translate(320.3 193.2)rotate(-31.1)" d="M-13.2-6.1 h27.2v6.1h-27.2zm6.6 0v6.1m6.5-6.1v6.1m8.1-6.1v6.1M-13.1 0 h26.9v6.1h-26.9zm4.4 0v6.1m5.7-6.1v6.1m6.2-6.1v6.1m5-6.1v6.1"/><path transform="translate(1.1 206.8)rotate(6.5)" d="M-6.1-5 h12.5v5h-12.5zm8.4 0v5M-6 0 h12.2v5h-12.2zm8.5 0v5"/><path transform="translate(22.4 204.6)rotate(7.9)" d="M-11.3-4.8 h23.5v4.8h-23.5zm6.1 0v4.8m4.7-4.8v4.8m6.8-4.8v4.8M-12.6 0 h24.7v4.8h-24.7zm11.4 0v4.8m6.4-4.8v4.8m4.5-4.8v4.8"/><path transform="translate(50.5 206.2)rotate(96.1)" d="M-12.7-5.3 h25.2v5.3h-25.2zm5.1 0v5.3m12.2-5.3v5.3m5.6-5.3v5.3M-12.9 0 h26.7v5.3h-26.7zm4.7 0v5.3m4.8-5.3v5.3m8.4-5.3v5.3m4.4-5.3v5.3"/><path transform="translate(71.6 204.5)rotate(2.8)" d="M-5.8-4.7 h11.6v4.7h-11.6zm5.5 0v4.7M-7.1 0 h14.1v4.7h-14.1zm8.2 0v4.7m3.6-4.7v4.7"/><path transform="translate(96.9 205.7)rotate(5.2)" d="M-13.8-5.6 h27.8v5.6h-27.8zm8.7 0v5.6m4.9-5.6v5.6m5.8-5.6v5.6m5.5-5.6v5.6M-13 0 h25.8v5.6h-25.8zm6.1 0v5.6m6.1-5.6v5.6m8.7-5.6v5.6m3.3-5.6v5.6"/><path transform="translate(127 205.1)rotate(8.9)" d="M-14.6-5 h28.8v5h-28.8zm4 0v5m2.9-5v5m4.5-5v5m2.9-5v5m6.5-5v5M-14.5 0 h28.3v5h-28.3zm4 0v5m5.5-5v5m4.4-5v5m3.3-5v5m3.2-5v5m3.7-5v5m2.3-5v5"/><path transform="translate(156.5 206.3)rotate(11.3)" d="M-13.8-6 h26.2v6h-26.2zm3.4 0v6m4.5-6v6m2.9-6v6m2.9-6v6m2.8-6v6m1.9-6v6m3.5-6v6M-13 0 h26.5v6h-26.5zm2.5 0v6m3.1-6v6m1.8-6v6m2.3-6v6m2.6-6v6m4-6v6m1.9-6v6m3.5-6v6"/><path transform="translate(185.2 206.8)rotate(103.5)" d="M-10.2-5.3 h20v5.3h-20zm2.2 0v5.3m4.5-5.3v5.3m2.6-5.3v5.3m2.3-5.3v5.3m3.7-5.3v5.3M-10 0 h20.9v5.3h-20.9zm1.9 0v5.3m4.6-5.3v5.3m5.4-5.3v5.3m2.8-5.3v5.3m4-5.3v5.3"/><path transform="translate(211.6 204.8)rotate(13.8)" d="M-14.8-4.7 h29.8v4.7h-29.8zm2.8 0v4.7m3.2-4.7v4.7m7.4-4.7v4.7m2.3-4.7v4.7m2.4-4.7v4.7m2.8-4.7v4.7m4.2-4.7v4.7m2.4-4.7v4.7M-14.1 0 h29v4.7h-29zm5.8 0v4.7m3.3-4.7v4.7m4-4.7v4.7m6.4-4.7v4.7m4-4.7v4.7m2-4.7v4.7"/><path transform="translate(244.2 207.1)rotate(12.7)" d="M-14.2-5.1 h27.9v5.1h-27.9zm3.9 0v5.1m3.3-5.1v5.1m1.8-5.1v5.1m2.2-5.1v5.1m4-5.1v5.1m8.2-5.1v5.1m2.3-5.1v5.1M-14.1 0 h28.3v5.1h-28.3zm5.7 0v5.1m4.6-5.1v5.1m2.2-5.1v5.1m3.2-5.1v5.1m4.4-5.1v5.1"/><path transform="translate(274.9 203.8)rotate(-8.8)" d="M-11.2-5.8 h22.2v5.8h-22.2zm7.3 0v5.8m3.1-5.8v5.8m7.7-5.8v5.8M-11.7 0 h23v5.8h-23zm4.5 0v5.8m8-5.8v5.8"/><path transform="translate(298.5 204.9)rotate(-26.2)" d="M-9.3-5.9 h18.1v5.9h-18.1zm6.7 0v5.9m6.5-5.9v5.9M-9.7 0 h18.2v5.9h-18.2zm5.1 0v5.9m5.2-5.9v5.9m6.1-5.9v5.9"/><path transform="translate(324.1 206.5)rotate(-30.2)" d="M-12.5-4.3 h25.8v4.3h-25.8zm3.8 0v4.3m7.8-4.3v4.3m5.6-4.3v4.3M-12.1 0 h24.2v4.3h-24.2zm6.8 0v4.3m4.1-4.3v4.3m6.3-4.3v4.3"/><path transform="translate(9.6 220.4)rotate(94.8)" d="M-12.8-8.1 h24.7v5.4h-24.7zm6.3 0v5.4m7.8-5.4v5.4m6.8-5.4v5.4M-12.5-2.7 h24.5v5.4h-24.5zm4.7 0v5.4m3.6-5.4v5.4m6.4-5.4v5.4m3.4-5.4v5.4m3.8-5.4v5.4M-11.8 2.7 h24v5.4h-24zm4.1 0v5.4m3.1-5.4v5.4m9-5.4v5.4"/><path transform="translate(32.1 220.1)rotate(7.4)" d="M-7.4-7.4 h14.5v4.9h-14.5zm5.4 0v4.9m7-4.9v4.9M-7.3-2.5 h13.5v4.9h-13.5zm5.6 0v4.9m4.9-4.9v4.9M-6.4 2.5 h12.8v4.9h-12.8zm6.3 0v4.9"/><path transform="translate(58.7 219.6)rotate(4.8)" d="M-16.8-8.5 h32.9v5.6h-32.9zm3.4 0v5.6m3.8-5.6v5.6m4.9-5.6v5.6m5.8-5.6v5.6m5.3-5.6v5.6m3.4-5.6v5.6M-16.4-2.8 h32.7v5.6h-32.7zm4.4 0v5.6m5.6-5.6v5.6m2.8-5.6v5.6m2.4-5.6v5.6m3.7-5.6v5.6m8.6-5.6v5.6m2.3-5.6v5.6M-15.9 2.8 h31.6v5.6h-31.6zm5.4 0v5.6m3.7-5.6v5.6m3.3-5.6v5.6m9.7-5.6v5.6m4.7-5.6v5.6"/><path transform="translate(94.2 217.2)rotate(3.4)" d="M-12.9-7.2 h26.4v4.8h-26.4zm5.5 0v4.8m8.1-4.8v4.8m3.3-4.8v4.8m3.2-4.8v4.8m4.9-4.8v4.8M-13-2.4 h26.4v4.8h-26.4zm2.4 0v4.8m3.1-4.8v4.8m3.6-4.8v4.8m2.4-4.8v4.8m4.3-4.8v4.8m4.6-4.8v4.8m2.4-4.8v4.8M-13.7 2.4 h26.8v4.8h-26.8zm4.4 0v4.8m3.5-4.8v4.8m4-4.8v4.8m4.6-4.8v4.8m3.3-4.8v4.8m4.9-4.8v4.8"/><path transform="translate(122.9 218.6)rotate(6.1)" d="M-13.5-8.3 h26.3v5.5h-26.3zm4.2 0v5.5m1.8-5.5v5.5m1.9-5.5v5.5m3.5-5.5v5.5m3.2-5.5v5.5m3.8-5.5v5.5M-13.8-2.8 h27.4v5.5h-27.4zm3.3 0v5.5m3.5-5.5v5.5m2.8-5.5v5.5m4.1-5.5v5.5m2.8-5.5v5.5m2.9-5.5v5.5m3.7-5.5v5.5M-13.4 2.8 h27v5.5h-27zm3.4 0v5.5m4.6-5.5v5.5m2.8-5.5v5.5m4.4-5.5v5.5m2.3-5.5v5.5m4.5-5.5v5.5m3.5-5.5v5.5"/><path transform="translate(151.3 220.1)rotate(12.4)" d="M-12-7.4 h24.4v4.9h-24.4zm2.7 0v4.9m3.8-4.9v4.9m2.9-4.9v4.9m3.8-4.9v4.9m1.9-4.9v4.9m3.6-4.9v4.9m1.8-4.9v4.9M-11.8-2.5 h24.4v4.9h-24.4zm3.8 0v4.9m3.2-4.9v4.9m3.7-4.9v4.9m1.9-4.9v4.9m3.5-4.9v4.9m3.7-4.9v4.9M-12.9 2.5 h26v4.9h-26zm4.2 0v4.9m4.2-4.9v4.9m3.5-4.9v4.9m3.6-4.9v4.9m3.4-4.9v4.9m3.2-4.9v4.9"/><path transform="translate(181 218.8)rotate(14)" d="M-14.6-7.4 h28.2v5h-28.2zm2.3 0v5m7.1-5v5m4-5v5m3.9-5v5m3.9-5v5m3.1-5v5m2.2-5v5M-13.8-2.5 h28.1v5h-28.1zm3.1 0v5m4-5v5m1.9-5v5m3.9-5v5m4.2-5v5m3.3-5v5m3.9-5v5M-14.1 2.5 h28.6v5h-28.6zm4.7 0v5m4.8-5v5m3.3-5v5m4.2-5v5m2.4-5v5m2.5-5v5m3-5v5"/><path transform="translate(205.1 219.8)rotate(12.9)" d="M-6.2-8.8 h13.1v5.8h-13.1zm5.4 0v5.8m4-5.8v5.8M-7.1-2.9 h13.7v5.8h-13.7zm2.5 0v5.8m3.1-5.8v5.8m3.1-5.8v5.8m3.4-5.8v5.8M-6.4 2.9 h12.6v5.8h-12.6zm3.5 0v5.8m2.2-5.8v5.8m1.8-5.8v5.8m3.2-5.8v5.8"/><path transform="translate(228.8 220.2)rotate(10.6)" d="M-10.9-7.6 h22.3v5.1h-22.3zm3.9 0v5.1m3.3-5.1v5.1m3.5-5.1v5.1m4.8-5.1v5.1m2.1-5.1v5.1m2.5-5.1v5.1M-10.9-2.5 h22.9v5.1h-22.9zm4.3 0v5.1m2.7-5.1v5.1m4.1-5.1v5.1m3.7-5.1v5.1m4-5.1v5.1m2.2-5.1v5.1M-10.6 2.5 h21.9v5.1h-21.9zm4.6 0v5.1m4-5.1v5.1m3.9-5.1v5.1m2.4-5.1v5.1m3.1-5.1v5.1"/><path transform="translate(249.1 219.7)rotate(6.4)" d="M-7.4-7.6 h15.4v5.1h-15.4zm3.2 0v5.1m4.4-5.1v5.1m4.6-5.1v5.1M-7.2-2.5 h14.4v5.1h-14.4zm4.5 0v5.1m2.2-5.1v5.1m2.9-5.1v5.1M-7.3 2.5 h15.4v5.1h-15.4zm4.2 0v5.1m3.1-5.1v5.1m3.9-5.1v5.1"/><path transform="translate(271.1 220.3)rotate(-10.1)" d="M-10.5-7.1 h20.7v4.7h-20.7zm3.1 0v4.7m7.2-4.7v4.7m3.5-4.7v4.7m4.4-4.7v4.7M-10.1-2.4 h20.9v4.7h-20.9zm7.6 0v4.7m5.8-4.7v4.7M-10 2.4 h20.7v4.7h-20.7zm3.6 0v4.7m3.5-4.7v4.7m4.4-4.7v4.7m7.7-4.7v4.7"/><path transform="translate(298.3 217)rotate(-31.6)" d="M-12.2-7.1 h24.4v4.7h-24.4zm6.2 0v4.7m12.5-4.7v4.7M-12.2-2.4 h24.6v4.7h-24.6zm3.8 0v4.7m7-4.7v4.7m7.8-4.7v4.7M-12.7 2.4 h25.7v4.7h-25.7zm6.7 0v4.7m5.9-4.7v4.7m6.9-4.7v4.7m3.3-4.7v4.7"/><path transform="translate(320.2 218.2)rotate(-31.6)" d="M-7-8.5 h13.5v5.7h-13.5zm5.9 0v5.7m4.3-5.7v5.7M-7.3-2.8 h13.9v5.7h-13.9zm4.7 0v5.7m5.4-5.7v5.7M-6.8 2.8 h13v5.7h-13zm4.6 0v5.7"/><path transform="translate(14.7 232.8)rotate(8.1)" d="M-15.4-5.5 h31.1v5.5h-31.1zm7.4 0v5.5m3.7-5.5v5.5m4.2-5.5v5.5m5.7-5.5v5.5m3.4-5.5v5.5M-15.9 0 h31.9v5.5h-31.9zm7.3 0v5.5m7.7-5.5v5.5m4.2-5.5v5.5m4.4-5.5v5.5"/><path transform="translate(39.6 231.8)rotate(5)" d="M-6-6.1 h11.9v6.1h-11.9zm6.9 0v6.1M-6.1 0 h13.2v6.1h-13.2zm4 0v6.1"/><path transform="translate(63.1 233.8)rotate(5.8)" d="M-14.3-5.7 h28.6v5.7h-28.6zm5.7 0v5.7m6.5-5.7v5.7m4.8-5.7v5.7m7.2-5.7v5.7M-15.2 0 h30.4v5.7h-30.4zm7.7 0v5.7m4.8-5.7v5.7m5.4-5.7v5.7m3.8-5.7v5.7"/><path transform="translate(91.1 233.5)rotate(7.6)" d="M-8-6.6 h15.3v6.6h-15.3zm4.2 0v6.6m7.1-6.6v6.6M-8.1 0 h15.6v6.6h-15.6zm5 0v6.6m7.7-6.6v6.6"/><path transform="translate(115.5 232.8)rotate(11.4)" d="M-15.9-5.9 h31.5v3.9h-31.5zm6.5 0v3.9m7.6-3.9v3.9m3-3.9v3.9m3.8-3.9v3.9m3.7-3.9v3.9m3.4-3.9v3.9M-15-2 h29.5v3.9h-29.5zm2.7 0v3.9m4.2-3.9v3.9m2.3-3.9v3.9m3.1-3.9v3.9m6.3-3.9v3.9m3.9-3.9v3.9m1.9-3.9v3.9m3-3.9v3.9M-14.6 2 h29.4v3.9h-29.4zm3.1 0v3.9m3.7-3.9v3.9m2-3.9v3.9m4.1-3.9v3.9m5.3-3.9v3.9m4.5-3.9v3.9m2.6-3.9v3.9m1.8-3.9v3.9"/><path transform="translate(150.8 235.2)rotate(103.1)" d="M-13.6-5.7 h27.4v5.7h-27.4zm2 0v5.7m2.7-5.7v5.7m2.2-5.7v5.7m4.5-5.7v5.7m2.9-5.7v5.7m2.8-5.7v5.7m4.8-5.7v5.7m3.8-5.7v5.7M-13.6 0 h26.8v5.7h-26.8zm2.3 0v5.7m2.1-5.7v5.7m4.3-5.7v5.7m3.8-5.7v5.7m2.1-5.7v5.7m2.8-5.7v5.7m2.5-5.7v5.7m4.6-5.7v5.7"/><path transform="translate(177.4 231.8)rotate(11.5)" d="M-11-6.4 h22v6.4h-22zm5.1 0v6.4m4.1-6.4v6.4m4.3-6.4v6.4M-11.1 0 h21.8v6.4h-21.8zm7.2 0v6.4m2-6.4v6.4m2.9-6.4v6.4m3.7-6.4v6.4m2.3-6.4v6.4"/><path transform="translate(203.3 234)rotate(11)" d="M-10.2-6.7 h20.8v6.7h-20.8zm3.3 0v6.7m3.7-6.7v6.7m2.9-6.7v6.7m4.1-6.7v6.7m1.9-6.7v6.7m2.6-6.7v6.7M-10.6 0 h21.4v6.7h-21.4zm4.7 0v6.7m4.5-6.7v6.7m3.7-6.7v6.7m4.4-6.7v6.7m2.4-6.7v6.7"/><path transform="translate(224.7 234.5)rotate(99.6)" d="M-7.6-5.8 h16.2v5.8h-16.2zm3 0v5.8m3.2-5.8v5.8m2.2-5.8v5.8m2.1-5.8v5.8m3.6-5.8v5.8M-9 0 h17.8v5.8h-17.8zm3.6 0v5.8m4.7-5.8v5.8m3.4-5.8v5.8m2.9-5.8v5.8"/><path transform="translate(245.5 233.8)rotate(10)" d="M-9.3-6.1 h17.8v6.1h-17.8zm4.3 0v6.1m3.9-6.1v6.1m2.8-6.1v6.1m4.4-6.1v6.1M-9.1 0 h17.6v6.1h-17.6zm4.5 0v6.1m2.1-6.1v6.1m3.8-6.1v6.1m3.5-6.1v6.1"/><path transform="translate(268.9 233.3)rotate(-7.2)" d="M-8.8-5.5 h17.8v5.5h-17.8zm7.5 0v5.5m7.1-5.5v5.5M-8.8 0 h16.8v5.5h-16.8zm11.3 0v5.5"/><path transform="translate(296.9 233.1)rotate(63.8)" d="M-14.6-6.7 h29.3v4.4h-29.3zm3.3 0v4.4m4.1-4.4v4.4m10.2-4.4v4.4m7.8-4.4v4.4M-14.8-2.2 h29.1v4.4h-29.1zm5.6 0v4.4m6.2-4.4v4.4m7.3-4.4v4.4m6.1-4.4v4.4M-14.6 2.2 h29.5v4.4h-29.5zm10.7 0v4.4m3-4.4v4.4m5.8-4.4v4.4m4.3-4.4v4.4"/><path transform="translate(322.8 233.8)rotate(62.1)" d="M-9.6-6.5 h19.7v6.5h-19.7zm6.7 0v6.5m9.5-6.5v6.5M-9.5 0 h20v6.5h-20zm7.7 0v6.5m5.2-6.5v6.5m3.4-6.5v6.5"/><path transform="translate(5.6 245.8)rotate(95.1)" d="M-13.6-6 h27.3v6h-27.3zm5.6 0v6m4.7-6v6m4.8-6v6m4.2-6v6m5-6v6M-13.4 0 h28v6h-28zm7.4 0v6m3.6-6v6m4.3-6v6m4.1-6v6m3.6-6v6"/><path transform="translate(32.8 247.3)rotate(2.7)" d="M-8.1-5.1 h17.6v5.1h-17.6zm6 0v5.1m3.5-5.1v5.1M-8.5 0 h18v5.1h-18zm7.3 0v5.1m3.5-5.1v5.1m5.4-5.1v5.1"/><path transform="translate(59.3 246.5)rotate(5.9)" d="M-14.8-4.8 h30.5v4.8h-30.5zm4.7 0v4.8m9.5-4.8v4.8m4.9-4.8v4.8m3.5-4.8v4.8M-15.4 0 h30v4.8h-30zm2.9 0v4.8m3.7-4.8v4.8m3.2-4.8v4.8m6.7-4.8v4.8m4.6-4.8v4.8m4.6-4.8v4.8"/><path transform="translate(89.8 244.1)rotate(4.3)" d="M-13.1-4.5 h25.1v4.5h-25.1zm3.6 0v4.5m5.1-4.5v4.5m6.9-4.5v4.5m6.3-4.5v4.5M-12.2 0 h25v4.5h-25zm3.1 0v4.5m5.6-4.5v4.5m6-4.5v4.5m6.5-4.5v4.5"/><path transform="translate(121.3 244.2)rotate(101.2)" d="M-14.1-5.1 h27.9v5.1h-27.9zm3.7 0v5.1m4.5-5.1v5.1m3.6-5.1v5.1m4-5.1v5.1m1.8-5.1v5.1m2.9-5.1v5.1m4.3-5.1v5.1M-14.4 0 h27.8v5.1h-27.8zm3 0v5.1m2.2-5.1v5.1m3-5.1v5.1m2.4-5.1v5.1m3-5.1v5.1m4.4-5.1v5.1m3.3-5.1v5.1m4.7-5.1v5.1"/><path transform="translate(149.3 247.4)rotate(10.9)" d="M-10.5-5.4 h20.4v5.4h-20.4zm4.5 0v5.4m4.3-5.4v5.4m2.3-5.4v5.4M-10.6 0 h20.2v5.4h-20.2zm2.3 0v5.4m2.8-5.4v5.4m3.5-5.4v5.4m2-5.4v5.4m4.7-5.4v5.4m1.8-5.4v5.4"/><path transform="translate(172.4 247.1)rotate(14)" d="M-10.7-4.3 h21.2v4.3h-21.2zm1.9 0v4.3m2.6-4.3v4.3m4.2-4.3v4.3m3.6-4.3v4.3m4.6-4.3v4.3m2-4.3v4.3M-10.8 0 h20.4v4.3h-20.4zm4.1 0v4.3m4.5-4.3v4.3m2.4-4.3v4.3m1.9-4.3v4.3m2.3-4.3v4.3"/><path transform="translate(192.9 243.8)rotate(103)" d="M-6-5.7 h11.7v5.7h-11.7zm4.7 0v5.7m4.2-5.7v5.7M-6.1 0 h12.8v5.7h-12.8zm3 0v5.7m2.2-5.7v5.7m4.1-5.7v5.7"/><path transform="translate(212.8 244.6)rotate(13)" d="M-10.2-5 h19.7v5h-19.7zm5.4 0v5m3.7-5v5m4.4-5v5m4.3-5v5M-10.4 0 h20.3v5h-20.3zm2.6 0v5m2.6-5v5m2.3-5v5m2-5v5m3.2-5v5m4.4-5v5"/><path transform="translate(238.8 244.8)rotate(96.7)" d="M-13.9-5.5 h27.6v5.5h-27.6zm3.4 0v5.5m3.3-5.5v5.5m3-5.5v5.5m3.4-5.5v5.5m2.8-5.5v5.5m4.8-5.5v5.5m3.1-5.5v5.5M-13.5 0 h27.3v5.5h-27.3zm2.3 0v5.5m4.7-5.5v5.5m3.1-5.5v5.5m4.5-5.5v5.5m4-5.5v5.5m3.2-5.5v5.5m3.1-5.5v5.5"/><path transform="translate(267 244)rotate(-4.3)" d="M-13-5.5 h25.5v5.5h-25.5zm7.2 0v5.5m6.2-5.5v5.5M-12.7 0 h24.9v5.5h-24.9zm6.5 0v5.5m4.4-5.5v5.5m8.4-5.5v5.5"/><path transform="translate(294 244.3)rotate(62)" d="M-8.6-5.2 h17v5.2h-17zm4.1 0v5.2m5-5.2v5.2m3.8-5.2v5.2M-8.7 0 h17.8v5.2h-17.8zm7.7 0v5.2m4.3-5.2v5.2"/><path transform="translate(313.7 244.7)rotate(-31.4)" d="M-9.5-4.9 h17.9v4.9h-17.9zm5.2 0v4.9m4.3-4.9v4.9m6.7-4.9v4.9M-9.2 0 h18.5v4.9h-18.5zm7.5 0v4.9m5.2-4.9v4.9m4-4.9v4.9"/><path transform="translate(-2.4 258.8)rotate(7.5)" d="M-6.8-7.2 h14.3v4.8h-14.3zm3.2 0v4.8m4.5-4.8v4.8M-6.7-2.4 h13.4v4.8h-13.4zm6.4 0v4.8M-7 2.4 h13.4v4.8h-13.4zm9.1 0v4.8"/><path transform="translate(17 255.8)rotate(7.9)" d="M-10.7-7.5 h20.8v5h-20.8zm6.3 0v5m3.6-5v5m4.3-5v5M-10.7-2.5 h21.9v5h-21.9zm3.8 0v5m3.9-5v5m3.9-5v5m4-5v5m4.2-5v5M-10.5 2.5 h21.9v5h-21.9zm5.2 0v5m4.4-5v5m8-5v5"/><path transform="translate(43.4 257.3)rotate(6.2)" d="M-12-7 h24.5v4.7h-24.5zm7 0v4.7m4.7-4.7v4.7m3.7-4.7v4.7m7-4.7v4.7M-12.3-2.3 h24v4.7h-24zm5.2 0v4.7m7.1-4.7v4.7m7.1-4.7v4.7M-11.7 2.3 h24.5v4.7h-24.5zm7.7 0v4.7m4.2-4.7v4.7m4.6-4.7v4.7"/><path transform="translate(72.4 257.7)rotate(8.7)" d="M-11.3-6.5 h22.2v6.5h-22.2zm6.8 0v6.5m6.3-6.5v6.5m6.9-6.5v6.5M-10.9 0 h22.6v6.5h-22.6zm5.2 0v6.5m11.5-6.5v6.5m3.6-6.5v6.5"/><path transform="translate(96 256.6)rotate(7)" d="M-10.5-6.3 h21.4v6.3h-21.4zm4.2 0v6.3m7.4-6.3v6.3m3.3-6.3v6.3M-11.1 0 h21.8v6.3h-21.8zm3.6 0v6.3m5.3-6.3v6.3m7.3-6.3v6.3"/><path transform="translate(124 257.8)rotate(98.5)" d="M-13.3-7.1 h26.2v4.7h-26.2zm3.7 0v4.7m3.8-4.7v4.7m3-4.7v4.7m3.8-4.7v4.7m4.7-4.7v4.7m4.3-4.7v4.7M-12.1-2.4 h24.2v4.7h-24.2zm4.1 0v4.7m3.5-4.7v4.7m2.8-4.7v4.7m3.1-4.7v4.7m2.9-4.7v4.7m3.1-4.7v4.7M-12.3 2.4 h25.6v4.7h-25.6zm2 0v4.7m4-4.7v4.7m1.9-4.7v4.7m4.1-4.7v4.7m7.5-4.7v4.7m3.8-4.7v4.7"/><path transform="translate(152.2 256.6)rotate(10.2)" d="M-14-5.9 h28.5v5.9h-28.5zm3.8 0v5.9m3.8-5.9v5.9m4.3-5.9v5.9m3.8-5.9v5.9m2.4-5.9v5.9m3.3-5.9v5.9m3.1-5.9v5.9M-14.6 0 h29.1v5.9h-29.1zm4.4 0v5.9m2.3-5.9v5.9m4.4-5.9v5.9m2.1-5.9v5.9m2.9-5.9v5.9m4.6-5.9v5.9m3-5.9v5.9m1.8-5.9v5.9"/><path transform="translate(179.1 259.2)rotate(13.2)" d="M-8.4-6.6 h16.7v6.6h-16.7zm3.1 0v6.6m2.6-6.6v6.6m4.7-6.6v6.6m1.8-6.6v6.6m1.8-6.6v6.6M-8.4 0 h16.8v6.6h-16.8zm2.1 0v6.6m3.4-6.6v6.6m3.3-6.6v6.6m3.9-6.6v6.6m2.4-6.6v6.6"/><path transform="translate(202.3 258.4)rotate(9.4)" d="M-9.1-5.6 h19.4v3.7h-19.4zm3.1 0v3.7m3.3-3.7v3.7m3.2-3.7v3.7m3.9-3.7v3.7m2.7-3.7v3.7M-9.3-1.9 h19.5v3.7h-19.5zm4.6 0v3.7m3.7-3.7v3.7m4.5-3.7v3.7m2.7-3.7v3.7M-9.6 1.9 h19.6v3.7h-19.6zm8.4 0v3.7m6.7-3.7v3.7m2.1-3.7v3.7"/><path transform="translate(228.7 256.3)rotate(7)" d="M-12-5.6 h24.1v5.6h-24.1zm4.1 0v5.6m3.4-5.6v5.6m2.4-5.6v5.6m2.9-5.6v5.6m2.8-5.6v5.6m1.9-5.6v5.6m2.7-5.6v5.6m2.4-5.6v5.6M-11.3 0 h23.8v5.6h-23.8zm3.8 0v5.6m4.2-5.6v5.6m4.8-5.6v5.6m2-5.6v5.6m3.5-5.6v5.6m3.5-5.6v5.6"/><path transform="translate(251.4 257.4)rotate(4.1)" d="M-8.1-6.6 h16.5v6.6h-16.5zm1.9 0v6.6m2.1-6.6v6.6m2.8-6.6v6.6m3.5-6.6v6.6m3.6-6.6v6.6M-8.1 0 h16.6v6.6h-16.6zm3.7 0v6.6m4.1-6.6v6.6m4.6-6.6v6.6m2.6-6.6v6.6"/><path transform="translate(276.6 256)rotate(77)" d="M-13.3-7.3 h27v4.9h-27zm4.3 0v4.9m4.7-4.9v4.9m7.6-4.9v4.9m5.8-4.9v4.9M-13.9-2.4 h28.2v4.9h-28.2zm7.9 0v4.9m4.7-4.9v4.9m4.6-4.9v4.9m3.5-4.9v4.9m5.5-4.9v4.9M-13.7 2.4 h28v4.9h-28zm13 0v4.9m3.1-4.9v4.9m7.3-4.9v4.9"/><path transform="translate(307 258.3)rotate(-30.8)" d="M-10-5.8 h20.1v3.9h-20.1zm3.9 0v3.9m4.5-3.9v3.9m5.7-3.9v3.9m4.1-3.9v3.9M-10.7-1.9 h20.1v3.9h-20.1zm11.7 0v3.9m3.5-3.9v3.9M-10.8 1.9 h20.9v3.9h-20.9zm8.9 0v3.9m6.3-3.9v3.9"/><path transform="translate(2.8 269.8)rotate(93.9)" d="M-9.1-5.5 h18.6v5.5h-18.6zm7 0v5.5m4.7-5.5v5.5m4.3-5.5v5.5M-9.1 0 h18.7v5.5h-18.7zm4.6 0v5.5m5.8-5.5v5.5"/><path transform="translate(26.1 269)rotate(94.6)" d="M-8.9-5.9 h18.9v5.9h-18.9zm5.8 0v5.9m4.3-5.9v5.9M-9.3 0 h19.3v5.9h-19.3zm5.7 0v5.9m5.9-5.9v5.9m5.1-5.9v5.9"/><path transform="translate(49 271.6)rotate(5.2)" d="M-9.9-6.1 h19.4v6.1h-19.4zm3.8 0v6.1m6-6.1v6.1m2.9-6.1v6.1M-9.9 0 h20.2v6.1h-20.2zm6.8 0v6.1m5.3-6.1v6.1m5.5-6.1v6.1"/><path transform="translate(78.8 270.1)rotate(6.9)" d="M-15.5-5.9 h31.4v3.9h-31.4zm8.3 0v3.9m13.1-3.9v3.9m5.6-3.9v3.9M-16.6-2 h32.3v3.9h-32.3zm4 0v3.9m6.8-3.9v3.9m5.7-3.9v3.9m7.2-3.9v3.9m4.4-3.9v3.9M-15.9 2 h32.6v3.9h-32.6zm6.5 0v3.9m7.9-3.9v3.9m3.9-3.9v3.9m7.7-3.9v3.9"/><path transform="translate(107.7 269.7)rotate(11.9)" d="M-9.6-6.2 h19.5v6.2h-19.5zm4.4 0v6.2m12.2-6.2v6.2M-9.3 0 h18.6v6.2h-18.6zm3.8 0v6.2"/><path transform="translate(128.4 269.3)rotate(14.1)" d="M-7-6 h13.6v4h-13.6zm1.9 0v4m2.9-4v4m3.4-4v4M-6.8-2 h14.1v4h-14.1zm3.2 0v4m3.1-4v4m4-4v4m2-4v4M-6.6 2 h13.9v4h-13.9zm1.9 0v4m4.4-4v4m4.1-4v4"/><path transform="translate(153.9 272)rotate(13.3)" d="M-15.6-5.6 h32.2v5.6h-32.2zm4.5 0v5.6m3.4-5.6v5.6m2.1-5.6v5.6m4.3-5.6v5.6m5.9-5.6v5.6m3.5-5.6v5.6m6.8-5.6v5.6M-16.6 0 h32.7v5.6h-32.7zm3 0v5.6m2-5.6v5.6m3.4-5.6v5.6m2.2-5.6v5.6m2.1-5.6v5.6m7-5.6v5.6m2-5.6v5.6m3.4-5.6v5.6m4.4-5.6v5.6"/><path transform="translate(182.4 271.1)rotate(14.5)" d="M-7-5.9 h13.2v5.9h-13.2zm4.8 0v5.9m4.3-5.9v5.9m2.2-5.9v5.9M-5.8 0 h12.7v5.9h-12.7zm4.8 0v5.9m2.5-5.9v5.9m3.2-5.9v5.9"/><path transform="translate(204.8 272.3)rotate(101.7)" d="M-13.9-5.5 h27v3.7h-27zm4.1 0v3.7m4.6-3.7v3.7m3.1-3.7v3.7m4.3-3.7v3.7m3.5-3.7v3.7m3.4-3.7v3.7M-13.9-1.8 h27v3.7h-27zm4.2 0v3.7m3.1-3.7v3.7m2.7-3.7v3.7m2.7-3.7v3.7m1.8-3.7v3.7m3.7-3.7v3.7M-13.9 1.8 h27v3.7h-27zm2.7 0v3.7m1.8-3.7v3.7m2.5-3.7v3.7m2.4-3.7v3.7m1.9-3.7v3.7m4.6-3.7v3.7m3.5-3.7v3.7m4.6-3.7v3.7"/><path transform="translate(239.2 269.3)rotate(97.5)" d="M-15.2-6.5 h30.7v6.5h-30.7zm2.2 0v6.5m5.8-6.5v6.5m3-6.5v6.5m2.6-6.5v6.5m3.3-6.5v6.5m3.3-6.5v6.5m3.5-6.5v6.5m4-6.5v6.5M-15.3 0 h30.2v6.5h-30.2zm4.7 0v6.5m3.6-6.5v6.5m4.4-6.5v6.5m6.2-6.5v6.5m2.4-6.5v6.5m2-6.5v6.5m2.3-6.5v6.5"/><path transform="translate(270.4 272.7)rotate(-10.7)" d="M-13.3-6.4 h27.4v6.4h-27.4zm7.3 0v6.4m5.5-6.4v6.4m6.7-6.4v6.4m4.4-6.4v6.4M-14 0 h27.2v6.4h-27.2zm3.5 0v6.4m14.3-6.4v6.4m6.7-6.4v6.4"/><path transform="translate(294 270.6)rotate(-27.7)" d="M-8.3-7 h15.9v4.7h-15.9zm3.7 0v4.7m4-4.7v4.7m5.3-4.7v4.7M-7.5-2.3 h15.1v4.7h-15.1zm4.9 0v4.7m5.8-4.7v4.7M-7.6 2.3 h15.5v4.7h-15.5zm3.3 0v4.7m3.7-4.7v4.7"/><path transform="translate(321.8 270.1)rotate(-28.5)" d="M-14.1-5.8 h27.8v5.8h-27.8zm7.5 0v5.8m6.7-5.8v5.8m3-5.8v5.8m5.4-5.8v5.8M-13.9 0 h27.2v5.8h-27.2zm5.4 0v5.8m9.9-5.8v5.8m3.9-5.8v5.8"/><path transform="translate(11.7 285.1)rotate(4.6)" d="M-15.6-6.5 h30.3v4.4h-30.3zm3.1 0v4.4m6.2-4.4v4.4m4.9-4.4v4.4m4.9-4.4v4.4m4.5-4.4v4.4M-14.7-2.2 h30.3v4.4h-30.3zm6.2 0v4.4m6.8-4.4v4.4m5.3-4.4v4.4m8.7-4.4v4.4M-14.5 2.2 h29.8v4.4h-29.8zm4.4 0v4.4m6.8-4.4v4.4m7-4.4v4.4m6.1-4.4v4.4"/><path transform="translate(44 283)rotate(6.7)" d="M-13.3-5.7 h26.1v5.7h-26.1zm3.5 0v5.7m6.6-5.7v5.7m3.8-5.7v5.7m5.6-5.7v5.7m4-5.7v5.7M-13.4 0 h26.4v5.7h-26.4zm6.9 0v5.7m5.4-5.7v5.7m4.8-5.7v5.7m5.5-5.7v5.7"/><path transform="translate(70.7 282.7)rotate(97.6)" d="M-11.7-6.2 h24.5v6.2h-24.5zm3.7 0v6.2m3.6-6.2v6.2m5.5-6.2v6.2m3.4-6.2v6.2m2.9-6.2v6.2M-11.8 0 h24.7v6.2h-24.7zm5.3 0v6.2m5.7-6.2v6.2m7.5-6.2v6.2m3.1-6.2v6.2"/><path transform="translate(102.8 284)rotate(102.1)" d="M-14.1-7 h27.4v4.7h-27.4zm6.7 0v4.7m5.8-4.7v4.7m4-4.7v4.7m7.4-4.7v4.7M-13.9-2.3 h27.6v4.7h-27.6zm4.9 0v4.7m4.4-4.7v4.7m10.3-4.7v4.7m2.9-4.7v4.7M-13.7 2.3 h28v4.7h-28zm6.9 0v4.7m6.1-4.7v4.7m3.8-4.7v4.7m3.1-4.7v4.7m3.3-4.7v4.7"/><path transform="translate(132.1 285)rotate(15.6)" d="M-12.6-6.1 h25.3v6.1h-25.3zm2.5 0v6.1m7.4-6.1v6.1m3.7-6.1v6.1m4.4-6.1v6.1m2.7-6.1v6.1M-12.3 0 h25.1v6.1h-25.1zm2.5 0v6.1m2.2-6.1v6.1m2.7-6.1v6.1m3.3-6.1v6.1m4-6.1v6.1m4.5-6.1v6.1"/><path transform="translate(153 285.4)rotate(101.1)" d="M-6.8-6.8 h13.6v4.5h-13.6zm4.4 0v4.5m3.9-4.5v4.5M-7.2-2.3 h14.1v4.5h-14.1zm2.7 0v4.5m2.1-4.5v4.5m2.5-4.5v4.5m2.8-4.5v4.5M-6 2.3 h13.2v4.5h-13.2zm3 0v4.5m2.4-4.5v4.5m4.2-4.5v4.5"/><path transform="translate(176.8 283.6)rotate(14.5)" d="M-14.1-7.6 h28.1v5.1h-28.1zm2.8 0v5.1m3.8-5.1v5.1m2.3-5.1v5.1m4-5.1v5.1m3.7-5.1v5.1m1.8-5.1v5.1m4.1-5.1v5.1M-14.8-2.5 h28.6v5.1h-28.6zm2.3 0v5.1m3.9-5.1v5.1m5-5.1v5.1m2.9-5.1v5.1m3.3-5.1v5.1m2.1-5.1v5.1m5-5.1v5.1m1.9-5.1v5.1M-14.1 2.5 h28.8v5.1h-28.8zm2.9 0v5.1m3.1-5.1v5.1m4.6-5.1v5.1m2.9-5.1v5.1m2.5-5.1v5.1m4.3-5.1v5.1m4.2-5.1v5.1m2.4-5.1v5.1"/><path transform="translate(207.7 284.8)rotate(98.2)" d="M-13.2-6.1 h27.3v6.1h-27.3zm2.3 0v6.1m4.8-6.1v6.1m4.2-6.1v6.1m4.7-6.1v6.1m3.8-6.1v6.1m4.3-6.1v6.1M-13.2 0 h26v6.1h-26zm4.1 0v6.1m2.2-6.1v6.1m1.9-6.1v6.1m2.3-6.1v6.1m3.9-6.1v6.1m2-6.1v6.1m4.6-6.1v6.1m2.9-6.1v6.1"/><path transform="translate(241.6 284.1)rotate(8.6)" d="M-16.5-7.1 h32.5v4.7h-32.5zm4.1 0v4.7m2-4.7v4.7m2.7-4.7v4.7m3.9-4.7v4.7m3.8-4.7v4.7m3.2-4.7v4.7m3.9-4.7v4.7m3.6-4.7v4.7m3.6-4.7v4.7M-16.7-2.4 h33.1v4.7h-33.1zm1.9 0v4.7m4.3-4.7v4.7m3.5-4.7v4.7m6.4-4.7v4.7m4.1-4.7v4.7m3.4-4.7v4.7m3.6-4.7v4.7m2.4-4.7v4.7M-17 2.4 h33.6v4.7h-33.6zm6.7 0v4.7m2.6-4.7v4.7m2.2-4.7v4.7m2.7-4.7v4.7m4.6-4.7v4.7m2.9-4.7v4.7m1.9-4.7v4.7m2.8-4.7v4.7"/><path transform="translate(276.5 283.2)rotate(77.1)" d="M-15.4-7 h29.9v4.7h-29.9zm7.3 0v4.7m7.8-4.7v4.7m6.1-4.7v4.7m3.7-4.7v4.7m3.4-4.7v4.7M-14.9-2.3 h30v4.7h-30zm3.9 0v4.7m7.5-4.7v4.7m7.6-4.7v4.7m6.8-4.7v4.7M-15.2 2.3 h29.9v4.7h-29.9zm3.2 0v4.7m4.5-4.7v4.7m4.5-4.7v4.7m4.1-4.7v4.7m5.8-4.7v4.7"/><path transform="translate(305.3 283)rotate(-31)" d="M-10.6-7.6 h20.6v5.1h-20.6zm5 0v5.1m4.3-5.1v5.1m6.9-5.1v5.1M-10.5-2.5 h21.2v5.1h-21.2zm7.1 0v5.1m7.1-5.1v5.1M-9.5 2.5 h20.3v5.1h-20.3zm3.8 0v5.1m8.9-5.1v5.1m3.3-5.1v5.1"/><path transform="translate(4.2 295.8)rotate(6.3)" d="M-12-6.7 h23.4v6.7h-23.4zm7.3 0v6.7m4.5-6.7v6.7m5.5-6.7v6.7M-11.8 0 h23.7v6.7h-23.7zm3.8 0v6.7m3-6.7v6.7m5.2-6.7v6.7m4.9-6.7v6.7"/><path transform="translate(30.5 296.5)rotate(7.2)" d="M-9.9-5.1 h19.9v5.1h-19.9zm7.7 0v5.1m6.8-5.1v5.1m3.5-5.1v5.1M-9.1 0 h18v5.1h-18zm5.2 0v5.1m2.9-5.1v5.1m7.4-5.1v5.1"/><path transform="translate(53.6 296.3)rotate(6.5)" d="M-13.1-5.3 h26.1v3.5h-26.1zm3.5 0v3.5m7.5-3.5v3.5m6.3-3.5v3.5m4.6-3.5v3.5M-14.1-1.8 h27.4v3.5h-27.4zm3 0v3.5m7.6-3.5v3.5m4.2-3.5v3.5m4.4-3.5v3.5m4.7-3.5v3.5M-13.9 1.8 h27.2v3.5h-27.2zm5.7 0v3.5m5.4-3.5v3.5m6.2-3.5v3.5m3.2-3.5v3.5m3.6-3.5v3.5"/><path transform="translate(76.8 297.9)rotate(8.8)" d="M-5.9-6.5 h11.9v6.5h-11.9zM-7.2 0 h13.7v6.5h-13.7zm9.6 0v6.5"/><path transform="translate(101 298.2)rotate(100.8)" d="M-13-6.6 h26.1v4.4h-26.1zm5.8 0v4.4m5.4-4.4v4.4m3.2-4.4v4.4m4.8-4.4v4.4M-13.2-2.2 h25.9v4.4h-25.9zm5.8 0v4.4m2.9-4.4v4.4m6.6-4.4v4.4m4.7-4.4v4.4m4.4-4.4v4.4M-12.8 2.2 h26.2v4.4h-26.2zm4.7 0v4.4m5-4.4v4.4m10.5-4.4v4.4"/><path transform="translate(124.6 298.8)rotate(13)" d="M-7.9-5.3 h15.7v5.3h-15.7zm2.4 0v5.3m2.6-5.3v5.3m3-5.3v5.3M-7.9 0 h14.9v5.3h-14.9zm3.2 0v5.3m3.2-5.3v5.3m3.7-5.3v5.3"/><path transform="translate(148.2 295.7)rotate(11.6)" d="M-11.5-6.5 h24v6.5h-24zm2.8 0v6.5m3.3-6.5v6.5m2.9-6.5v6.5m4.4-6.5v6.5m2.5-6.5v6.5m3.8-6.5v6.5M-11.2 0 h23.8v6.5h-23.8zm4.8 0v6.5m1.9-6.5v6.5m4.3-6.5v6.5m2.5-6.5v6.5m2.4-6.5v6.5m2.7-6.5v6.5m2.1-6.5v6.5"/><path transform="translate(170.4 298.5)rotate(8.9)" d="M-6.4-6.3 h12.2v6.3h-12.2zm2 0v6.3m4.2-6.3v6.3m3.1-6.3v6.3M-6.6 0 h12.7v6.3h-12.7zm2.6 0v6.3m2.8-6.3v6.3m2.7-6.3v6.3"/><path transform="translate(185.4 298.9)rotate(12.3)" d="M-8.1-6.6 h16.3v6.6h-16.3zm3 0v6.6m5.6-6.6v6.6m3.4-6.6v6.6m2.7-6.6v6.6M-8.2 0 h15.7v6.6h-15.7zm3.1 0v6.6m2-6.6v6.6m4.7-6.6v6.6m2.8-6.6v6.6"/><path transform="translate(215.9 296.9)rotate(9)" d="M-16.3-5.1 h31.8v3.4h-31.8zm3.4 0v3.4m3.4-3.4v3.4m4.6-3.4v3.4m4-3.4v3.4m3.9-3.4v3.4m3.8-3.4v3.4m2.2-3.4v3.4m3.6-3.4v3.4M-16.4-1.7 h32.3v3.4h-32.3zm4.6 0v3.4m2.7-3.4v3.4m3.3-3.4v3.4m2-3.4v3.4m3.6-3.4v3.4m2.2-3.4v3.4m1.8-3.4v3.4m3-3.4v3.4m4.1-3.4v3.4M-16.2 1.7 h31.6v3.4h-31.6zm2 0v3.4m3.4-3.4v3.4m2.7-3.4v3.4m4.5-3.4v3.4m2.2-3.4v3.4m3.3-3.4v3.4m3.3-3.4v3.4m2.7-3.4v3.4m3.2-3.4v3.4"/><path transform="translate(245.8 298.1)rotate(3.8)" d="M-11.1-5.8 h22.7v5.8h-22.7zm6.7 0v5.8m1.9-5.8v5.8m7.7-5.8v5.8m2.7-5.8v5.8m2.2-5.8v5.8M-11 0 h22.5v5.8h-22.5zm4.6 0v5.8m2.4-5.8v5.8m3.1-5.8v5.8m3.8-5.8v5.8m4.4-5.8v5.8m1.8-5.8v5.8"/><path transform="translate(276 296.5)rotate(-14.2)" d="M-16-5.8 h31.4v5.8h-31.4zm7.7 0v5.8m7.6-5.8v5.8m5.5-5.8v5.8m7.1-5.8v5.8M-15.5 0 h30.9v5.8h-30.9zm7.7 0v5.8m9.6-5.8v5.8m5.1-5.8v5.8m4.6-5.8v5.8"/><path transform="translate(310.3 295.5)rotate(59.9)" d="M-12.9-6.5 h26.7v6.5h-26.7zm3.8 0v6.5m4.8-6.5v6.5m5.6-6.5v6.5m7.9-6.5v6.5M-13.5 0 h26.7v6.5h-26.7zm7.2 0v6.5m5.3-6.5v6.5m5.5-6.5v6.5m3.8-6.5v6.5"/><path transform="translate(2 310.3)rotate(2.3)" d="M-10.9-5.8 h22.4v5.8h-22.4zm12 0v5.8m6.6-5.8v5.8M-12.2 0 h24.1v5.8h-24.1zm4.4 0v5.8m5-5.8v5.8m8.2-5.8v5.8m3-5.8v5.8"/><path transform="translate(27.6 312)rotate(5.2)" d="M-11-5.5 h21.9v5.5h-21.9zm2.9 0v5.5m5.4-5.5v5.5m3.6-5.5v5.5m7.1-5.5v5.5M-11.9 0 h23v5.5h-23zm6.1 0v5.5m4.8-5.5v5.5m6.6-5.5v5.5"/><path transform="translate(57.1 309.6)rotate(9)" d="M-14-4.9 h27.8v4.9h-27.8zm7.1 0v4.9m11.5-4.9v4.9m5.5-4.9v4.9M-14.4 0 h29v4.9h-29zm5.1 0v4.9m3.7-4.9v4.9m7.8-4.9v4.9m5.8-4.9v4.9"/><path transform="translate(86.1 311)rotate(9.6)" d="M-13.1-6.4 h25.7v6.4h-25.7zm5.5 0v6.4m10.4-6.4v6.4m4.9-6.4v6.4M-11.9 0 h24.2v6.4h-24.2zm6.5 0v6.4m12.9-6.4v6.4m3-6.4v6.4"/><path transform="translate(113.1 309.6)rotate(12.9)" d="M-8.7-6 h17.8v6h-17.8zm5 0v6m2.6-6v6m2.2-6v6m2-6v6m3.6-6v6M-8.8 0 h17.4v6h-17.4zm7.7 0v6m2.1-6v6"/><path transform="translate(131.5 309)rotate(11.8)" d="M-8.4-5.2 h16.6v5.2h-16.6zm4.7 0v5.2m2.7-5.2v5.2m4.6-5.2v5.2m1.9-5.2v5.2M-7.8 0 h17v5.2h-17zm4.1 0v5.2m4.6-5.2v5.2m6.7-5.2v5.2"/><path transform="translate(150.5 311.1)rotate(11.3)" d="M-6.7-6.2 h13.2v6.2h-13.2zm2.5 0v6.2m4.5-6.2v6.2m2-6.2v6.2m2.1-6.2v6.2M-7.1 0 h14.1v6.2h-14.1zm7.9 0v6.2m4.4-6.2v6.2"/><path transform="translate(177.3 310)rotate(97.9)" d="M-13.7-5.6 h28.1v3.7h-28.1zm7.4 0v3.7m2.4-3.7v3.7m3.3-3.7v3.7m4.7-3.7v3.7m2.6-3.7v3.7m2-3.7v3.7m4-3.7v3.7M-14-1.9 h28.4v3.7h-28.4zm4.6 0v3.7m2.5-3.7v3.7m2.8-3.7v3.7m3.7-3.7v3.7m2.7-3.7v3.7m3.6-3.7v3.7m2.9-3.7v3.7m2.4-3.7v3.7M-13.8 1.9 h27.1v3.7h-27.1zm3.8 0v3.7m5.7-3.7v3.7m4-3.7v3.7m4.7-3.7v3.7m6.3-3.7v3.7"/><path transform="translate(207 311.4)rotate(8.2)" d="M-13.4-6.1 h26.4v6.1h-26.4zm4.3 0v6.1m1.8-6.1v6.1m3.1-6.1v6.1m4.5-6.1v6.1m4-6.1v6.1m3.7-6.1v6.1m3.4-6.1v6.1M-13.2 0 h26.8v6.1h-26.8zm2.3 0v6.1m4.4-6.1v6.1m3.7-6.1v6.1m5.6-6.1v6.1m3.5-6.1v6.1m2-6.1v6.1m1.8-6.1v6.1"/><path transform="translate(234.7 309.1)rotate(5.1)" d="M-12.9-5.6 h26.2v5.6h-26.2zm5.4 0v5.6m1.8-5.6v5.6m3.3-5.6v5.6m3.4-5.6v5.6m3.7-5.6v5.6m2.8-5.6v5.6m3.1-5.6v5.6M-13 0 h25.9v5.6h-25.9zm6.2 0v5.6m2.2-5.6v5.6m7.7-5.6v5.6m4-5.6v5.6"/><path transform="translate(260.6 308.3)rotate(-1.7)" d="M-8.3-4.9 h17.2v4.9h-17.2zm2.2 0v4.9m4.1-4.9v4.9m2.8-4.9v4.9m2.2-4.9v4.9m3.8-4.9v4.9M-7.9 0 h15.6v4.9h-15.6zm2.1 0v4.9m2.6-4.9v4.9m1.9-4.9v4.9m3.3-4.9v4.9m3.7-4.9v4.9"/><path transform="translate(278.5 309.4)rotate(-17.7)" d="M-7.9-6.1 h15.5v6.1h-15.5zm5.5 0v6.1m7.2-6.1v6.1M-8 0 h15.7v6.1h-15.7zm6.5 0v6.1m5.1-6.1v6.1"/><path transform="translate(296 308.6)rotate(-28.6)" d="M-6.7-6.3 h12.9v6.3h-12.9zm10.1 0v6.3M-7.1 0 h13.5v6.3h-13.5zm4.9 0v6.3m5.2-6.3v6.3"/><path transform="translate(314.3 311.1)rotate(63)" d="M-9.5-5.7 h19.7v5.7h-19.7zm4.8 0v5.7m8-5.7v5.7M-10.2 0 h20.6v5.7h-20.6zm6.1 0v5.7m8-5.7v5.7m5-5.7v5.7"/><path transform="translate(4.1 322.6)rotate(5.8)" d="M-15.9-6.8 h31.4v4.5h-31.4zm6.3 0v4.5m6.7-4.5v4.5m6.2-4.5v4.5m7.3-4.5v4.5M-15.6-2.3 h30.9v4.5h-30.9zm6.9 0v4.5m6.9-4.5v4.5m6.8-4.5v4.5m7.2-4.5v4.5M-14.6 2.3 h29.5v4.5h-29.5zm6.4 0v4.5m7.4-4.5v4.5m13.3-4.5v4.5"/><path transform="translate(28.7 325.2)rotate(7)" d="M-7.6-7.3 h13.9v4.9h-13.9zm4.3 0v4.9m5.2-4.9v4.9M-7.1-2.4 h13.4v4.9h-13.4zm6.5 0v4.9m5-4.9v4.9M-6.9 2.4 h13.2v4.9h-13.2zm6.4 0v4.9m5.1-4.9v4.9"/><path transform="translate(54.7 325.6)rotate(7.9)" d="M-13.7-7.1 h27.5v4.7h-27.5zm4.4 0v4.7m5.1-4.7v4.7m7.7-4.7v4.7m4.4-4.7v4.7M-12.9-2.4 h27.2v4.7h-27.2zm6.8 0v4.7m4.4-4.7v4.7m5.7-4.7v4.7m5.6-4.7v4.7m3-4.7v4.7M-13.9 2.4 h28.2v4.7h-28.2zm3.6 0v4.7m6.3-4.7v4.7m10.1-4.7v4.7m4.6-4.7v4.7"/><path transform="translate(81.9 324.2)rotate(12.3)" d="M-10.2-6.5 h20.1v6.5h-20.1zm6 0v6.5m4.6-6.5v6.5m7.3-6.5v6.5M-9.6 0 h20.1v6.5h-20.1zm6.8 0v6.5m4.6-6.5v6.5"/><path transform="translate(110.2 323.8)rotate(12.9)" d="M-15.1-7.2 h29.3v4.8h-29.3zm4.7 0v4.8m3.5-4.8v4.8m2.4-4.8v4.8m4-4.8v4.8m3.9-4.8v4.8m1.8-4.8v4.8m3.3-4.8v4.8m3.8-4.8v4.8M-14.2-2.4 h27.9v4.8h-27.9zm2.9 0v4.8m4.2-4.8v4.8m4.7-4.8v4.8m2.4-4.8v4.8m3.9-4.8v4.8m8.2-4.8v4.8M-14 2.4 h28.1v4.8h-28.1zm2.5 0v4.8m4.4-4.8v4.8m4.3-4.8v4.8m2.2-4.8v4.8m2.1-4.8v4.8m3.3-4.8v4.8m4.5-4.8v4.8"/><path transform="translate(138.7 322.8)rotate(10.3)" d="M-12.9-7.8 h26.2v5.2h-26.2zm2.1 0v5.2m7.1-5.2v5.2m4.6-5.2v5.2m3.9-5.2v5.2m5.6-5.2v5.2M-13.9-2.6 h27.5v5.2h-27.5zm2.5 0v5.2m8.2-5.2v5.2m3.7-5.2v5.2m2.9-5.2v5.2m2.5-5.2v5.2m5.4-5.2v5.2M-13.8 2.6 h26.5v5.2h-26.5zm4 0v5.2m4.3-5.2v5.2m2.8-5.2v5.2m2.7-5.2v5.2m2.6-5.2v5.2m6.7-5.2v5.2"/><path transform="translate(165.6 322.3)rotate(13.6)" d="M-8-7.8 h16.6v5.2h-16.6zm3.9 0v5.2m3.7-5.2v5.2m4.1-5.2v5.2m2.1-5.2v5.2M-8.4-2.6 h16.5v5.2h-16.5zm3.5 0v5.2m3.8-5.2v5.2m3.8-5.2v5.2m3.7-5.2v5.2M-8.6 2.6 h16.4v5.2h-16.4zm3.1 0v5.2m3.5-5.2v5.2m2.8-5.2v5.2m2-5.2v5.2"/><path transform="translate(188.7 324.2)rotate(7.8)" d="M-10.4-7.8 h21.1v5.2h-21.1zm3.2 0v5.2m2.6-5.2v5.2m1.9-5.2v5.2m3.8-5.2v5.2m2.4-5.2v5.2m4.5-5.2v5.2M-11.1-2.6 h21.5v5.2h-21.5zm1.8 0v5.2m2.4-5.2v5.2m4.1-5.2v5.2m2.4-5.2v5.2m4-5.2v5.2m4.5-5.2v5.2M-10.9 2.6 h21.3v5.2h-21.3zm4 0v5.2m1.9-5.2v5.2m4.3-5.2v5.2m3.8-5.2v5.2m3-5.2v5.2m2.7-5.2v5.2"/><path transform="translate(212.6 321.9)rotate(4.1)" d="M-10.1-6.3 h20.7v6.3h-20.7zm3.5 0v6.3m3.8-6.3v6.3m2.8-6.3v6.3m6.3-6.3v6.3M-9.7 0 h20.4v6.3h-20.4zm3.5 0v6.3m3-6.3v6.3m2.6-6.3v6.3m2.1-6.3v6.3m4-6.3v6.3m3.3-6.3v6.3"/><path transform="translate(237.4 325)rotate(7.8)" d="M-9.6-7.9 h19.4v5.2h-19.4zm2.8 0v5.2m3.8-5.2v5.2m2.2-5.2v5.2m2.3-5.2v5.2m3-5.2v5.2m3.4-5.2v5.2M-10.8-2.6 h20.8v5.2h-20.8zm4.2 0v5.2m4.5-5.2v5.2m4.8-5.2v5.2m4.4-5.2v5.2M-9.8 2.6 h19.9v5.2h-19.9zm2.7 0v5.2m2.6-5.2v5.2m3-5.2v5.2m3.3-5.2v5.2m4.5-5.2v5.2"/><path transform="translate(265.8 324.2)rotate(82.1)" d="M-13.8-7.5 h28.2v5h-28.2zm8.1 0v5m8-5v5m7.8-5v5M-14.2-2.5 h27.7v5h-27.7zm7.9 0v5m7.5-5v5m4.9-5v5M-14.6 2.5 h28.8v5h-28.8zm3.2 0v5m6.4-5v5m4.6-5v5m3.4-5v5"/><path transform="translate(293 324.3)rotate(-25.7)" d="M-10.5-7.5 h21.7v5h-21.7zm8.7 0v5m4.2-5v5M-11.1-2.5 h21.8v5h-21.8zm5.2 0v5m4.3-5v5m7.2-5v5M-11.1 2.5 h21.2v5h-21.2zm6 0v5m7.6-5v5"/><path transform="translate(319.1 323.9)rotate(-28.3)" d="M-14.9-7.3 h29.6v4.8h-29.6zm14.5 0v4.8m5.5-4.8v4.8m4-4.8v4.8m3.4-4.8v4.8M-15.8-2.4 h30.6v4.8h-30.6zm5.3 0v4.8m5.2-4.8v4.8m4.2-4.8v4.8m5.6-4.8v4.8m5.9-4.8v4.8M-15.7 2.4 h31.2v4.8h-31.2zm3.1 0v4.8m4.6-4.8v4.8m8.1-4.8v4.8m6.9-4.8v4.8m4.9-4.8v4.8"/><path transform="translate(5.3 337.1)rotate(.8)" d="M-13.1-5.8 h24.8v5.8h-24.8zm3.1 0v5.8m5-5.8v5.8m7.5-5.8v5.8m7.5-5.8v5.8M-12.5 0 h24.5v5.8h-24.5zm3.9 0v5.8m7.1-5.8v5.8m6.4-5.8v5.8"/><path transform="translate(31 339.5)rotate(4.8)" d="M-11-6 h21.4v6h-21.4zm2.9 0v6m4.9-6v6m7.2-6v6m4.5-6v6M-10.2 0 h20.8v6h-20.8zm4.2 0v6m7.8-6v6m6.6-6v6"/><path transform="translate(52.7 338.3)rotate(8.1)" d="M-8.3-7.2 h16.5v4.8h-16.5zm7.2 0v4.8m7.5-4.8v4.8M-8.7-2.4 h17.2v4.8h-17.2zm3.9 0v4.8m6.6-4.8v4.8m3.9-4.8v4.8M-8.9 2.4 h16.9v4.8h-16.9zm3.8 0v4.8m3-4.8v4.8m3.5-4.8v4.8"/><path transform="translate(75.1 336.4)rotate(9.8)" d="M-9.8-7.1 h18.7v4.7h-18.7zm3.6 0v4.7m7.1-4.7v4.7m5.5-4.7v4.7M-9.6-2.4 h18.6v4.7h-18.6zm7.1 0v4.7m3.2-4.7v4.7m5.5-4.7v4.7M-9.3 2.4 h18.8v4.7h-18.8zm3.8 0v4.7m7.2-4.7v4.7m6.1-4.7v4.7"/><path transform="translate(96.1 336.9)rotate(102.4)" d="M-9.4-5.6 h19.9v5.6h-19.9zm6.9 0v5.6m7.7-5.6v5.6M-9.5 0 h20v5.6h-20zm7.7 0v5.6m2.9-5.6v5.6m4.7-5.6v5.6"/><path transform="translate(120.4 339.2)rotate(102.2)" d="M-10.6-5.9 h21.4v5.9h-21.4zm5.5 0v5.9m2.7-5.9v5.9m5.5-5.9v5.9m4.7-5.9v5.9M-10.7 0 h21.3v5.9h-21.3zm3.9 0v5.9m3.7-5.9v5.9m5.2-5.9v5.9m3.1-5.9v5.9m3.5-5.9v5.9"/><path transform="translate(140.1 336.9)rotate(11.8)" d="M-7.2-7.2 h14.3v4.8h-14.3zm4.6 0v4.8m4.7-4.8v4.8m3.2-4.8v4.8M-7.1-2.4 h14v4.8h-14zm5.2 0v4.8m2.3-4.8v4.8M-7.6 2.4 h14.4v4.8h-14.4zm5.1 0v4.8m3-4.8v4.8m3.9-4.8v4.8"/><path transform="translate(163.4 337)rotate(8.1)" d="M-12.8-7.4 h26v4.9h-26zm4.7 0v4.9m5.4-4.9v4.9m3.5-4.9v4.9m2.6-4.9v4.9m5.5-4.9v4.9M-13.4-2.5 h26.2v4.9h-26.2zm2.9 0v4.9m3.5-4.9v4.9m2.5-4.9v4.9m4.5-4.9v4.9m5.1-4.9v4.9m5.4-4.9v4.9M-13.9 2.5 h26.6v4.9h-26.6zm5.2 0v4.9m4.7-4.9v4.9m3.7-4.9v4.9m4.3-4.9v4.9m2.3-4.9v4.9m3.5-4.9v4.9"/><path transform="translate(193.3 337.3)rotate(5.5)" d="M-13.1-6.2 h24.9v6.2h-24.9zm3.3 0v6.2m3.4-6.2v6.2m6.9-6.2v6.2m2.7-6.2v6.2m4.3-6.2v6.2M-13.1 0 h26v6.2h-26zm2.5 0v6.2m3.5-6.2v6.2m3.2-6.2v6.2m4.9-6.2v6.2m3.9-6.2v6.2m5.1-6.2v6.2"/><path transform="translate(225.2 337.8)rotate(94.5)" d="M-15.6-7 h31.3v4.7h-31.3zm2.7 0v4.7m3.4-4.7v4.7m7.3-4.7v4.7m5.8-4.7v4.7m4.6-4.7v4.7m4.8-4.7v4.7M-14.8-2.3 h30v4.7h-30zm2.2 0v4.7m2.8-4.7v4.7m4.3-4.7v4.7m2.9-4.7v4.7m2.3-4.7v4.7m4-4.7v4.7m4.4-4.7v4.7m5-4.7v4.7M-15 2.3 h30.5v4.7h-30.5zm2.9 0v4.7m7.9-4.7v4.7m6.8-4.7v4.7m4-4.7v4.7m5.8-4.7v4.7"/><path transform="translate(252.8 339.2)rotate(.2)" d="M-8.3-7.4 h17.4v4.9h-17.4zm3.4 0v4.9m2.5-4.9v4.9m2.8-4.9v4.9m3.7-4.9v4.9M-8.9-2.5 h17.9v4.9h-17.9zm3.3 0v4.9m3.3-4.9v4.9m5.5-4.9v4.9M-8.1 2.5 h17.1v4.9h-17.1zm5.5 0v4.9m5.7-4.9v4.9"/><path transform="translate(281 337.9)rotate(77.2)" d="M-14.1-6.2 h28.8v6.2h-28.8zm4.3 0v6.2m5.4-6.2v6.2m6.5-6.2v6.2m6.6-6.2v6.2m4.3-6.2v6.2M-14.3 0 h29.4v6.2h-29.4zm5.4 0v6.2m7.8-6.2v6.2m6.9-6.2v6.2m4.3-6.2v6.2"/><path transform="translate(311.5 338.9)rotate(-26.1)" d="M-14.2-6.1 h28.2v6.1h-28.2zm6.2 0v6.1m5.7-6.1v6.1m4.4-6.1v6.1m4.6-6.1v6.1M-12.9 0 h26.4v6.1h-26.4zm5.1 0v6.1m7.9-6.1v6.1m5.2-6.1v6.1"/><path transform="translate(.7 354.3)rotate(-2.8)" d="M-10.9-7.4 h21v4.9h-21zm4 0v4.9m2-4.9v4.9m4.2-4.9v4.9m2.7-4.9v4.9m2.5-4.9v4.9M-10.2-2.5 h21.3v4.9h-21.3zm4.5 0v4.9m2-4.9v4.9m4.6-4.9v4.9m3.3-4.9v4.9m2.5-4.9v4.9M-10.6 2.5 h21.7v4.9h-21.7zm3.3 0v4.9m5.5-4.9v4.9m2.8-4.9v4.9m3.1-4.9v4.9m4.9-4.9v4.9"/><path transform="translate(26.8 354.4)rotate(-1.9)" d="M-9.9-6.7 h19.5v6.7h-19.5zm2.5 0v6.7m8.2-6.7v6.7m2.3-6.7v6.7m2.6-6.7v6.7M-10.3 0 h19.8v6.7h-19.8zm2.8 0v6.7m3.8-6.7v6.7m2.1-6.7v6.7m3.8-6.7v6.7m4.9-6.7v6.7"/><path transform="translate(50.5 354.2)rotate(5.7)" d="M-11-8 h22.8v5.3h-22.8zm4.5 0v5.3m3.5-5.3v5.3m6.7-5.3v5.3m2.5-5.3v5.3M-10.9-2.7 h21.9v5.3h-21.9zm4.5 0v5.3m3-5.3v5.3m2.6-5.3v5.3m5-5.3v5.3M-10.9 2.7 h21.4v5.3h-21.4zm2.1 0v5.3m3.2-5.3v5.3m5.2-5.3v5.3m2.1-5.3v5.3m3.5-5.3v5.3m3-5.3v5.3"/><path transform="translate(73.3 351.9)rotate(10.7)" d="M-8.6-7.9 h16.9v5.3h-16.9zm4.2 0v5.3m5.7-5.3v5.3M-8-2.6 h17.2v5.3h-17.2zm4.3 0v5.3m3.7-5.3v5.3m5.9-5.3v5.3M-8.6 2.6 h17.7v5.3h-17.7zm6.7 0v5.3m6.1-5.3v5.3"/><path transform="translate(101.1 351.8)rotate(9.8)" d="M-16.6-7.3 h32.4v4.8h-32.4zm6.1 0v4.8m4.5-4.8v4.8m3.7-4.8v4.8m4.1-4.8v4.8m3.7-4.8v4.8m3.1-4.8v4.8m5.5-4.8v4.8M-15.9-2.4 h31.9v4.8h-31.9zm5.1 0v4.8m5.4-4.8v4.8m3.5-4.8v4.8m4.7-4.8v4.8m7.2-4.8v4.8M-16.1 2.4 h31.9v4.8h-31.9zm2.6 0v4.8m5.3-4.8v4.8m5-4.8v4.8m6.3-4.8v4.8m3.1-4.8v4.8m6.2-4.8v4.8"/><path transform="translate(129.2 354.4)rotate(100.7)" d="M-8.9-8.2 h18.1v5.5h-18.1zm3.4 0v5.5m5.5-5.5v5.5m6.5-5.5v5.5M-8.5-2.7 h17.3v5.5h-17.3zm3.9 0v5.5m5.9-5.5v5.5m3.5-5.5v5.5M-9.1 2.7 h19v5.5h-19zm5.2 0v5.5m4.9-5.5v5.5m6-5.5v5.5"/><path transform="translate(156.9 353.3)rotate(7.8)" d="M-13.2-6.7 h26.4v4.5h-26.4zm3.9 0v4.5m9.6-4.5v4.5m4.6-4.5v4.5m3.8-4.5v4.5M-13.9-2.2 h27.3v4.5h-27.3zm4.9 0v4.5m6.6-4.5v4.5m4.7-4.5v4.5m3.1-4.5v4.5m4.8-4.5v4.5M-13.1 2.2 h26.7v4.5h-26.7zm5.4 0v4.5m2.7-4.5v4.5m3.2-4.5v4.5m4.9-4.5v4.5m6.3-4.5v4.5"/><path transform="translate(183.1 352.1)rotate(95.4)" d="M-10.2-8 h20.6v5.4h-20.6zm5.4 0v5.4m3.4-5.4v5.4m6.4-5.4v5.4M-10.3-2.7 h20.9v5.4h-20.9zm4.9 0v5.4m5.5-5.4v5.4m6.2-5.4v5.4m2.5-5.4v5.4M-10.6 2.7 h20.2v5.4h-20.2zm5.8 0v5.4m5-5.4v5.4m2.8-5.4v5.4m3.3-5.4v5.4"/><path transform="translate(214.3 353.1)rotate(8.2)" d="M-15.5-8.3 h31.7v5.5h-31.7zm2.7 0v5.5m4.2-5.5v5.5m3.7-5.5v5.5m5.2-5.5v5.5m3.8-5.5v5.5m3.9-5.5v5.5m3-5.5v5.5m3.6-5.5v5.5M-15-2.8 h30.1v5.5h-30.1zm3.3 0v5.5m6.4-5.5v5.5m5.6-5.5v5.5m2.5-5.5v5.5m5.8-5.5v5.5M-15.1 2.8 h30.4v5.5h-30.4zm4.2 0v5.5m3.9-5.5v5.5m6.1-5.5v5.5m4.6-5.5v5.5m2.6-5.5v5.5m6-5.5v5.5"/><path transform="translate(242 354)rotate(96.7)" d="M-10.2-7.9 h19.7v5.3h-19.7zm3.2 0v5.3m5-5.3v5.3m4-5.3v5.3m4.2-5.3v5.3M-10.7-2.6 h20.9v5.3h-20.9zm5.1 0v5.3m3.1-5.3v5.3m3.2-5.3v5.3m4.1-5.3v5.3m3.7-5.3v5.3M-10 2.6 h19.5v5.3h-19.5zm5.8 0v5.3m10.4-5.3v5.3"/><path transform="translate(265.1 353.9)rotate(-7.7)" d="M-11.7-7.1 h22.5v4.7h-22.5zm6.7 0v4.7m5.3-4.7v4.7m5.5-4.7v4.7M-10.8-2.4 h22.7v4.7h-22.7zm5.8 0v4.7m8-4.7v4.7m4.1-4.7v4.7M-11 2.4 h22.9v4.7h-22.9zm4.1 0v4.7m4.5-4.7v4.7m6.6-4.7v4.7m4.6-4.7v4.7"/><path transform="translate(292.7 351.8)rotate(-23.1)" d="M-11.8-8.1 h23.9v5.4h-23.9zm14.3 0v5.4m4.8-5.4v5.4M-11.4-2.7 h24v5.4h-24zm6 0v5.4m4.2-5.4v5.4m4.3-5.4v5.4m3.5-5.4v5.4M-11.9 2.7 h23.2v5.4h-23.2zm3.5 0v5.4m6.2-5.4v5.4m5.5-5.4v5.4m4.6-5.4v5.4"/><path transform="translate(318.2 351.3)rotate(-26.5)" d="M-8.9-7.8 h17.8v5.2h-17.8zm6.6 0v5.2m7.6-5.2v5.2M-8.4-2.6 h16.4v5.2h-16.4zm4.7 0v5.2m4.8-5.2v5.2m4-5.2v5.2M-9.1 2.6 h18v5.2h-18zm7.4 0v5.2m4.7-5.2v5.2"/><path transform="translate(11 366)rotate(-4.3)" d="M-13.5-5.1 h27.5v5.1h-27.5zm5.1 0v5.1m2.3-5.1v5.1m2.1-5.1v5.1m4.6-5.1v5.1m7.7-5.1v5.1m2.5-5.1v5.1M-13.2 0 h26.7v5.1h-26.7zm4.9 0v5.1m2.7-5.1v5.1m4.4-5.1v5.1m3.8-5.1v5.1m3-5.1v5.1m4.8-5.1v5.1"/><path transform="translate(44.4 366.1)rotate(93)" d="M-15.7-5.4 h31.9v5.4h-31.9zm3.7 0v5.4m4.3-5.4v5.4m6.5-5.4v5.4m3.5-5.4v5.4m2.3-5.4v5.4m2.5-5.4v5.4m5-5.4v5.4M-15.8 0 h30.8v5.4h-30.8zm3.7 0v5.4m3.6-5.4v5.4m7.7-5.4v5.4m4.8-5.4v5.4m3.6-5.4v5.4m2.8-5.4v5.4"/><path transform="translate(74.9 365.9)rotate(9.2)" d="M-12.4-5.7 h25.4v5.7h-25.4zm2.6 0v5.7m3.9-5.7v5.7m2.8-5.7v5.7m5.1-5.7v5.7m3.3-5.7v5.7m5.2-5.7v5.7M-12.4 0 h24.2v5.7h-24.2zm3.4 0v5.7m9.9-5.7v5.7m5.8-5.7v5.7"/><path transform="translate(102.3 368.6)rotate(9.4)" d="M-11.9-4.9 h24.1v4.9h-24.1zm7.2 0v4.9m2.6-4.9v4.9m6-4.9v4.9m3.6-4.9v4.9M-12 0 h24.2v4.9h-24.2zm5 0v4.9m3.2-4.9v4.9m4.2-4.9v4.9m3.8-4.9v4.9m4.4-4.9v4.9"/><path transform="translate(130.6 365.6)rotate(11.1)" d="M-12.5-4.9 h25.6v4.9h-25.6zm4.6 0v4.9m4.2-4.9v4.9m4.9-4.9v4.9m6.2-4.9v4.9M-13 0 h25v4.9h-25zm4.8 0v4.9m6.3-4.9v4.9m5.6-4.9v4.9m6.3-4.9v4.9"/><path transform="translate(162.4 365.6)rotate(10.2)" d="M-16.6-5.6 h33v5.6h-33zm5 0v5.6m3.3-5.6v5.6m2.6-5.6v5.6m3.7-5.6v5.6m6.2-5.6v5.6m4.1-5.6v5.6m6.1-5.6v5.6M-16.1 0 h31.4v5.6h-31.4zm4.9 0v5.6m4.1-5.6v5.6m4.1-5.6v5.6m5-5.6v5.6m5.1-5.6v5.6m6.5-5.6v5.6"/><path transform="translate(199 365.4)rotate(7.6)" d="M-15.2-6.1 h31.1v4.1h-31.1zm9.5 0v4.1m4-4.1v4.1m11.7-4.1v4.1m3.8-4.1v4.1M-15.8-2 h31v4.1h-31zm4.4 0v4.1m3-4.1v4.1m3.2-4.1v4.1m5.4-4.1v4.1m6.3-4.1v4.1m6.2-4.1v4.1M-15.1 2 h30.9v4.1h-30.9zm11.7 0v4.1m4.9-4.1v4.1m6.3-4.1v4.1m4.7-4.1v4.1"/><path transform="translate(230.1 367.4)rotate(7.6)" d="M-12.7-5 h25.1v5h-25.1zm5.2 0v5m2.4-5v5m5.1-5v5m6.5-5v5M-12.5 0 h24.6v5h-24.6zm4.8 0v5m4.9-5v5m4.1-5v5m4.6-5v5"/><path transform="translate(253.9 367)rotate(94.1)" d="M-7-6.5 h15.4v6.5h-15.4zm5.5 0v6.5m3.4-6.5v6.5M-8.1 0 h15.4v6.5h-15.4zm2.9 0v6.5m3.1-6.5v6.5m6.4-6.5v6.5"/><path transform="translate(277.7 365.7)rotate(78)" d="M-13.1-6.5 h25.8v6.5h-25.8zm3.9 0v6.5m7.6-6.5v6.5m5.5-6.5v6.5m4.4-6.5v6.5M-13.9 0 h26.6v6.5h-26.6zm6.5 0v6.5m5.8-6.5v6.5"/><path transform="translate(307.2 365.4)rotate(-25.3)" d="M-11.9-5.5 h24.5v5.5h-24.5zm3.5 0v5.5m7.7-5.5v5.5m3.7-5.5v5.5M-12.3 0 h24.2v5.5h-24.2zm11.5 0v5.5m5-5.5v5.5"/><path transform="translate(2.1 380.6)rotate(-10.7)" d="M-15.2-7.5 h29.5v5h-29.5zm2.1 0v5m4.1-5v5m4.4-5v5m3.8-5v5m3-5v5m3.6-5v5m5.3-5v5M-14-2.5 h28.7v5h-28.7zm4.2 0v5m5.9-5v5m3.5-5v5m1.9-5v5m3.5-5v5m3.6-5v5m4.5-5v5M-14.5 2.5 h29.4v5h-29.4zm3 0v5m5-5v5m3.1-5v5m5.1-5v5m3.5-5v5m5-5v5"/><path transform="translate(29.4 378.7)rotate(-2.3)" d="M-7.7-5.9 h14.8v5.9h-14.8zm4.8 0v5.9m4.1-5.9v5.9m1.9-5.9v5.9M-7.9 0 h15.9v5.9h-15.9zm4.4 0v5.9m3.6-5.9v5.9m5.8-5.9v5.9"/><path transform="translate(53.1 379.9)rotate(2.1)" d="M-13.6-5.9 h26.3v3.9h-26.3zm2.4 0v3.9m4.1-3.9v3.9m3.6-3.9v3.9m3.6-3.9v3.9m4.2-3.9v3.9m2.2-3.9v3.9M-13.1-2 h25.7v3.9h-25.7zm5 0v3.9m4.5-3.9v3.9m2.9-3.9v3.9m2.2-3.9v3.9m4.9-3.9v3.9M-13.1 2 h25.7v3.9h-25.7zm5.3 0v3.9m7.3-3.9v3.9m3.4-3.9v3.9m2.3-3.9v3.9m3.7-3.9v3.9"/><path transform="translate(84.8 381.2)rotate(5.4)" d="M-14.7-6.8 h28.6v4.5h-28.6zm3.1 0v4.5m2.8-4.5v4.5m7.1-4.5v4.5m4.2-4.5v4.5m5-4.5v4.5m4.1-4.5v4.5M-13.7-2.3 h28v4.5h-28zm2.6 0v4.5m6.5-4.5v4.5m6-4.5v4.5m6.3-4.5v4.5m4.1-4.5v4.5M-14.3 2.3 h28.6v4.5h-28.6zm4.3 0v4.5m5.7-4.5v4.5m3-4.5v4.5m5.2-4.5v4.5m3.7-4.5v4.5"/><path transform="translate(114 380.5)rotate(8.7)" d="M-13-6.4 h25.8v6.4h-25.8zm4.5 0v6.4m3.9-6.4v6.4m5.5-6.4v6.4m3.9-6.4v6.4m6.2-6.4v6.4M-12.9 0 h25.8v6.4h-25.8zm3.3 0v6.4m3.7-6.4v6.4m5.9-6.4v6.4m3.4-6.4v6.4m4.9-6.4v6.4"/><path transform="translate(143.1 379.3)rotate(101.3)" d="M-14.7-7.4 h28.7v5h-28.7zm3.4 0v5m3.8-5v5m6.4-5v5m6.1-5v5m4.3-5v5m2.8-5v5M-13.9-2.5 h28.5v5h-28.5zm2.8 0v5m3.1-5v5m5.2-5v5m4.4-5v5m4.1-5v5m4.6-5v5M-14.3 2.5 h28.6v5h-28.6zm2.7 0v5m3.5-5v5m2.8-5v5m6.5-5v5m2.9-5v5m5.7-5v5"/><path transform="translate(172.8 381.3)rotate(9)" d="M-12.8-7.1 h25.3v4.8h-25.3zm3 0v4.8m5.4-4.8v4.8m6.5-4.8v4.8m4.4-4.8v4.8m3.5-4.8v4.8M-12.3-2.4 h24v4.8h-24zm3.2 0v4.8m2.9-4.8v4.8m4.1-4.8v4.8m5.3-4.8v4.8m5.5-4.8v4.8M-12.4 2.4 h24.1v4.8h-24.1zm4.1 0v4.8m5.7-4.8v4.8m3.4-4.8v4.8m5.8-4.8v4.8"/><path transform="translate(199.8 380.5)rotate(3.6)" d="M-9.7-7 h18.7v4.7h-18.7zm4.9 0v4.7m4-4.7v4.7m4.2-4.7v4.7M-9.3-2.3 h17.7v4.7h-17.7zm6.3 0v4.7m6.2-4.7v4.7m3.6-4.7v4.7M-8.3 2.3 h17.9v4.7h-17.9zm2.5 0v4.7m6.2-4.7v4.7m3-4.7v4.7"/><path transform="translate(219.7 381.8)rotate(6.2)" d="M-8.3-6.7 h16.8v6.7h-16.8zm2.8 0v6.7m2.7-6.7v6.7m6.6-6.7v6.7M-8.2 0 h16.5v6.7h-16.5zm10.2 0v6.7m3.9-6.7v6.7"/><path transform="translate(244.6 379)rotate(4.6)" d="M-12.6-6.1 h25.4v6.1h-25.4zm3.6 0v6.1m6.3-6.1v6.1m4.9-6.1v6.1m6-6.1v6.1M-12.7 0 h25.8v6.1h-25.8zm4 0v6.1m3-6.1v6.1m5-6.1v6.1m4.3-6.1v6.1m4.7-6.1v6.1m2.6-6.1v6.1"/><path transform="translate(265.6 379.6)rotate(89.1)" d="M-8.6-6.6 h16.9v6.6h-16.9zm6.6 0v6.6m6.6-6.6v6.6M-7.8 0 h15.8v6.6h-15.8zm9.1 0v6.6m3.5-6.6v6.6"/><path transform="translate(293.1 381.1)rotate(-20.2)" d="M-15-6.1 h30.3v6.1h-30.3zm7.7 0v6.1m5-6.1v6.1m5.5-6.1v6.1m4.9-6.1v6.1M-15.4 0 h30.9v6.1h-30.9zm5.5 0v6.1m8.1-6.1v6.1m4.5-6.1v6.1m9.3-6.1v6.1"/><path transform="translate(321.1 380)rotate(-21.3)" d="M-8.8-7.3 h18.3v4.9h-18.3zm6.1 0v4.9m4.3-4.9v4.9m5.6-4.9v4.9M-9.5-2.4 h18.9v4.9h-18.9zm4.6 0v4.9m3.7-4.9v4.9m6-4.9v4.9M-10 2.4 h19.4v4.9h-19.4zm5.3 0v4.9m6-4.9v4.9"/><path transform="translate(4.2 394.1)rotate(78.7)" d="M-15.2-6.5 h30.4v6.5h-30.4zm6.4 0v6.5m4-6.5v6.5m4.3-6.5v6.5m4.1-6.5v6.5m2.3-6.5v6.5m4.3-6.5v6.5m2.7-6.5v6.5M-15.6 0 h31.4v6.5h-31.4zm3 0v6.5m3.5-6.5v6.5m5-6.5v6.5m4-6.5v6.5m2.3-6.5v6.5m4.8-6.5v6.5m4.7-6.5v6.5"/><path transform="translate(37.9 397.2)rotate(-4)" d="M-13.8-6.6 h28.4v6.6h-28.4zm4.6 0v6.6m2.9-6.6v6.6m4.1-6.6v6.6m3.3-6.6v6.6m4.9-6.6v6.6m4-6.6v6.6M-14.2 0 h28.4v6.6h-28.4zm2.2 0v6.6m2-6.6v6.6m3.6-6.6v6.6m2.1-6.6v6.6m2.3-6.6v6.6m3-6.6v6.6m5-6.6v6.6m4.4-6.6v6.6"/><path transform="translate(69.9 397.3)rotate(.5)" d="M-15.1-7.9 h29.5v5.3h-29.5zm5.8 0v5.3m5.8-5.3v5.3m3.5-5.3v5.3m4.2-5.3v5.3m4.9-5.3v5.3m2.5-5.3v5.3M-14.1-2.6 h28.8v5.3h-28.8zm2.9 0v5.3m5.6-5.3v5.3m3.6-5.3v5.3m3.8-5.3v5.3m5.4-5.3v5.3m5.7-5.3v5.3M-15.1 2.6 h29.2v5.3h-29.2zm10 0v5.3m2.7-5.3v5.3m3.5-5.3v5.3m6.1-5.3v5.3m4-5.3v5.3"/><path transform="translate(103.8 393.5)rotate(11.2)" d="M-16.1-6.7 h32v6.7h-32zm3.6 0v6.7m6.5-6.7v6.7m3.5-6.7v6.7m5.8-6.7v6.7m6.1-6.7v6.7M-15.4 0 h30.9v6.7h-30.9zm5.3 0v6.7m3.2-6.7v6.7m2.8-6.7v6.7m8.2-6.7v6.7m4-6.7v6.7m5.9-6.7v6.7"/><path transform="translate(137.8 394.3)rotate(98.6)" d="M-16.1-6.9 h31.4v4.6h-31.4zm6.1 0v4.6m6-4.6v4.6m3.5-4.6v4.6m2.4-4.6v4.6m4.6-4.6v4.6m2.9-4.6v4.6M-15.7-2.3 h30.5v4.6h-30.5zm5.6 0v4.6m2.8-4.6v4.6m2.5-4.6v4.6m2.8-4.6v4.6m5.9-4.6v4.6m4.7-4.6v4.6M-15.5 2.3 h30.7v4.6h-30.7zm5.7 0v4.6m2.8-4.6v4.6m2.5-4.6v4.6m6.5-4.6v4.6m2.9-4.6v4.6m5.7-4.6v4.6"/><path transform="translate(167.9 394.4)rotate(4)" d="M-8.4-6.7 h17.5v6.7h-17.5zm6.5 0v6.7m3.6-6.7v6.7m3.6-6.7v6.7M-8.7 0 h17.2v6.7h-17.2zm2.7 0v6.7m2.8-6.7v6.7m2.5-6.7v6.7m5.9-6.7v6.7"/><path transform="translate(189.7 395)rotate(7.1)" d="M-9.3-7.2 h19.3v4.8h-19.3zm6.6 0v4.8m5.3-4.8v4.8m3.8-4.8v4.8M-9.8-2.4 h19.8v4.8h-19.8zm3.3 0v4.8m6-4.8v4.8M-10 2.4 h19.6v4.8h-19.6zm2.6 0v4.8m3.3-4.8v4.8m3.2-4.8v4.8m3.1-4.8v4.8m5.8-4.8v4.8"/><path transform="translate(213.8 396.8)rotate(4.5)" d="M-8.9-8 h17.7v5.3h-17.7zm4.1 0v5.3m4.9-5.3v5.3m5.1-5.3v5.3M-9.5-2.7 h18.4v5.3h-18.4zm4.1 0v5.3m9.7-5.3v5.3M-9 2.7 h19.1v5.3h-19.1zm3.8 0v5.3m4.8-5.3v5.3m6.3-5.3v5.3"/><path transform="translate(238.4 396.8)rotate(94.2)" d="M-12.7-7 h26.2v4.7h-26.2zm6.6 0v4.7m5.3-4.7v4.7m5.6-4.7v4.7m7.2-4.7v4.7M-12.8-2.3 h25.1v4.7h-25.1zm3.4 0v4.7m5-4.7v4.7m2.5-4.7v4.7m3.2-4.7v4.7m5.7-4.7v4.7M-12.1 2.3 h24.5v4.7h-24.5zm4.6 0v4.7m5.6-4.7v4.7m11.6-4.7v4.7"/><path transform="translate(265.9 395.1)rotate(-.4)" d="M-8.1-6.9 h16.9v4.6h-16.9zm4.7 0v4.6m3.2-4.6v4.6m6.5-4.6v4.6M-9-2.3 h18.4v4.6h-18.4zm6 0v4.6m3.1-4.6v4.6m6.5-4.6v4.6M-8.2 2.3 h16.2v4.6h-16.2zm7.2 0v4.6m3.5-4.6v4.6"/><path transform="translate(291.9 396.9)rotate(-21.3)" d="M-14.3-7.3 h28.9v4.8h-28.9zm4.7 0v4.8m10.5-4.8v4.8m4.3-4.8v4.8m5.4-4.8v4.8M-14.3-2.4 h29.1v4.8h-29.1zm6.4 0v4.8m5.2-4.8v4.8m7.9-4.8v4.8m7.3-4.8v4.8M-14.4 2.4 h29v4.8h-29zm3.8 0v4.8m6.1-4.8v4.8m5.8-4.8v4.8m7.2-4.8v4.8m4-4.8v4.8"/><path transform="translate(316.2 396.5)rotate(67)" d="M-6.6-7.6 h13.3v5.1h-13.3zm3.7 0v5.1m7.4-5.1v5.1M-8-2.5 h15.1v5.1h-15.1zm6.4 0v5.1m4.7-5.1v5.1M-6.8 2.5 h14v5.1h-14zm4.6 0v5.1m6.6-5.1v5.1"/><path transform="translate(9.5 410.6)rotate(-16.7)" d="M-12.9-7.4 h25.1v4.9h-25.1zm4 0v4.9m5.2-4.9v4.9m3.2-4.9v4.9m2.9-4.9v4.9m2.9-4.9v4.9m3.8-4.9v4.9M-12.6-2.5 h24.8v4.9h-24.8zm3.7 0v4.9m3.3-4.9v4.9m5.4-4.9v4.9m3.2-4.9v4.9m2.9-4.9v4.9M-11.7 2.5 h24v4.9h-24zm5.7 0v4.9m3.3-4.9v4.9m5.5-4.9v4.9m2.5-4.9v4.9m4.9-4.9v4.9"/><path transform="translate(35.3 411.4)rotate(-9.8)" d="M-11.4-8.4 h21.7v5.6h-21.7zm2.4 0v5.6m6.2-5.6v5.6m4.5-5.6v5.6m5.8-5.6v5.6M-11.3-2.8 h21.9v5.6h-21.9zm6.3 0v5.6m3.4-5.6v5.6m4.9-5.6v5.6m2.5-5.6v5.6M-11.4 2.8 h21.7v5.6h-21.7zm4.2 0v5.6m9.2-5.6v5.6"/><path transform="translate(64 411.7)rotate(1.9)" d="M-12.9-6.8 h25.3v4.5h-25.3zm3.3 0v4.5m3.9-4.5v4.5m4.7-4.5v4.5m6.2-4.5v4.5m2.5-4.5v4.5m2.5-4.5v4.5M-13.2-2.3 h25.1v4.5h-25.1zm6.3 0v4.5m5.2-4.5v4.5m11.8-4.5v4.5M-13.3 2.3 h26.1v4.5h-26.1zm2.5 0v4.5m5.2-4.5v4.5m4.7-4.5v4.5m3.7-4.5v4.5m6.2-4.5v4.5"/><path transform="translate(88.9 411.3)rotate(7.5)" d="M-9.1-8.5 h18.9v5.6h-18.9zm4.9 0v5.6m11.7-5.6v5.6M-9.2-2.8 h18.8v5.6h-18.8zm6.3 0v5.6m3.1-5.6v5.6m6.3-5.6v5.6M-9.8 2.8 h19.5v5.6h-19.5zm2.6 0v5.6m2.7-5.6v5.6m5.7-5.6v5.6m6.5-5.6v5.6"/><path transform="translate(117.4 409.4)rotate(12)" d="M-14.2-8.5 h28.5v5.6h-28.5zm6.1 0v5.6m5.6-5.6v5.6m5.8-5.6v5.6m3.8-5.6v5.6m2.4-5.6v5.6M-14.7-2.8 h28.6v5.6h-28.6zm2.7 0v5.6m4.5-5.6v5.6m2.9-5.6v5.6m2.8-5.6v5.6m2.8-5.6v5.6m6.8-5.6v5.6M-14.3 2.8 h28.7v5.6h-28.7zm2.5 0v5.6m4.5-5.6v5.6m4.4-5.6v5.6m3.4-5.6v5.6m4.4-5.6v5.6m3-5.6v5.6m3.3-5.6v5.6"/><path transform="translate(144 409.2)rotate(8.3)" d="M-8.2-7.3 h16.5v4.9h-16.5zm5.4 0v4.9m4.2-4.9v4.9M-7.5-2.4 h15.6v4.9h-15.6zm2.5 0v4.9m6.2-4.9v4.9m4.5-4.9v4.9M-7.6 2.4 h15.6v4.9h-15.6zm6.1 0v4.9m4-4.9v4.9"/><path transform="translate(166.4 411.4)rotate(3.8)" d="M-11.8-7.1 h23.8v4.7h-23.8zm4.3 0v4.7m4.2-4.7v4.7m11.5-4.7v4.7M-12.3-2.4 h25v4.7h-25zm4.6 0v4.7m6.1-4.7v4.7m2.6-4.7v4.7m5.3-4.7v4.7M-11.8 2.4 h24.7v4.7h-24.7zm4.5 0v4.7m5.7-4.7v4.7m5.1-4.7v4.7m3-4.7v4.7"/><path transform="translate(191.1 409.4)rotate(5)" d="M-9.7-7.5 h20.4v5h-20.4zm6.4 0v5m2.6-5v5m3.4-5v5m5.9-5v5M-10.1-2.5 h19.4v5h-19.4zm2.7 0v5m4.7-5v5m3.6-5v5M-10.7 2.5 h21.1v5h-21.1zm4.8 0v5m6.2-5v5m6.2-5v5"/><path transform="translate(222.3 409.6)rotate(2.9)" d="M-16-7 h32v4.7h-32zm5.8 0v4.7m4.9-4.7v4.7m4.4-4.7v4.7m6.2-4.7v4.7m6.2-4.7v4.7M-15.2-2.3 h30.4v4.7h-30.4zm6.3 0v4.7m2.5-4.7v4.7m3.8-4.7v4.7m5.7-4.7v4.7m3.8-4.7v4.7m2.5-4.7v4.7m2.7-4.7v4.7M-15.6 2.3 h31.5v4.7h-31.5zm2.5 0v4.7m2.8-4.7v4.7m4.1-4.7v4.7m5-4.7v4.7m2.6-4.7v4.7m4.4-4.7v4.7m4.9-4.7v4.7"/><path transform="translate(251 410.9)rotate(8.8)" d="M-9.5-7 h18.9v4.7h-18.9zm2.6 0v4.7m5.1-4.7v4.7m2.8-4.7v4.7m5.1-4.7v4.7M-9.4-2.3 h18.4v4.7h-18.4zm5.5 0v4.7m3.5-4.7v4.7m4.8-4.7v4.7M-10 2.3 h19.7v4.7h-19.7zm6.5 0v4.7"/><path transform="translate(278.8 412.1)rotate(-9)" d="M-14-8 h28.3v5.3h-28.3zm5.7 0v5.3m3.3-5.3v5.3m7.1-5.3v5.3m3.5-5.3v5.3m6-5.3v5.3M-14.6-2.7 h28.9v5.3h-28.9zm7.9 0v5.3m6.6-5.3v5.3m6.8-5.3v5.3m4.6-5.3v5.3M-14.9 2.7 h29.8v5.3h-29.8zm9.7 0v5.3m3.7-5.3v5.3m4.2-5.3v5.3m5.6-5.3v5.3m3.7-5.3v5.3"/><path transform="translate(303.3 412.4)rotate(-25.1)" d="M-7.3-8.1 h14.4v5.4h-14.4zm5.5 0v5.4m6.3-5.4v5.4M-7.2-2.7 h13.8v5.4h-13.8zm7 0v5.4m4.6-5.4v5.4M-6.2 2.7 h13.5v5.4h-13.5zm5.8 0v5.4"/><path transform="translate(324.5 411.1)rotate(-23.5)" d="M-10.6-7 h22v4.7h-22zm7 0v4.7m11.8-4.7v4.7M-10.9-2.3 h20.9v4.7h-20.9zm6.3 0v4.7m7.8-4.7v4.7M-10.3 2.3 h20.6v4.7h-20.6zm3.8 0v4.7m3.2-4.7v4.7m5-4.7v4.7"/><path transform="translate(10 427.1)rotate(-14.7)" d="M-10.3-6 h21v6h-21zm6.5 0v6m4.3-6v6m4.5-6v6M-10.3 0 h20.8v6h-20.8zm5.8 0v6m5.4-6v6m5-6v6"/><path transform="translate(32.2 424.5)rotate(82.7)" d="M-6.2-5.6 h13.2v3.8h-13.2zm2.8 0v3.8m2.5-3.8v3.8m4.5-3.8v3.8M-6.1-1.9 h12.7v3.8h-12.7zm4.8 0v3.8m3.7-3.8v3.8M-6.3 1.9 h12.5v3.8h-12.5zm3.1 0v3.8m6.4-3.8v3.8"/><path transform="translate(51.4 426.6)rotate(88)" d="M-9.7-5.5 h19.8v3.7h-19.8zm3.6 0v3.7m3.3-3.7v3.7m4.8-3.7v3.7m3.6-3.7v3.7M-9.1-1.8 h19.4v3.7h-19.4zm4.9 0v3.7m4.4-3.7v3.7m2.5-3.7v3.7m5.7-3.7v3.7M-9.2 1.8 h19.1v3.7h-19.1zm6 0v3.7m3.6-3.7v3.7m3.4-3.7v3.7"/><path transform="translate(75.1 424.9)rotate(1.2)" d="M-10.2-5.6 h20.6v5.6h-20.6zm6 0v5.6m2.7-5.6v5.6m2.5-5.6v5.6M-10.5 0 h21.6v5.6h-21.6zm3.8 0v5.6m2.4-5.6v5.6m3.7-5.6v5.6m6-5.6v5.6"/><path transform="translate(104.1 424.4)rotate(10.1)" d="M-15.3-5.3 h31.6v5.3h-31.6zm5.7 0v5.3m6.3-5.3v5.3m6.4-5.3v5.3m4.6-5.3v5.3m3.2-5.3v5.3M-15.5 0 h31.1v5.3h-31.1zm4.5 0v5.3m4.6-5.3v5.3m5.6-5.3v5.3m5.9-5.3v5.3m3.5-5.3v5.3"/><path transform="translate(138.2 424.2)rotate(9)" d="M-12.5-6.2 h26v6.2h-26zm5.6 0v6.2m2.7-6.2v6.2m5.9-6.2v6.2m5.3-6.2v6.2M-13.4 0 h27.2v6.2h-27.2zm8.2 0v6.2m6.3-6.2v6.2m4.1-6.2v6.2m2.8-6.2v6.2m2.8-6.2v6.2"/><path transform="translate(167.3 423.7)rotate(93.5)" d="M-13.6-5.8 h26.7v5.8h-26.7zm4.7 0v5.8m4.9-5.8v5.8m4.1-5.8v5.8m3.1-5.8v5.8m6-5.8v5.8M-12.7 0 h25.4v5.8h-25.4zm7.1 0v5.8m6.2-5.8v5.8m6.2-5.8v5.8m4.1-5.8v5.8"/><path transform="translate(199.9 423.8)rotate(7.9)" d="M-15.1-6.6 h30.9v6.6h-30.9zm4.6 0v6.6m4.8-6.6v6.6m4.9-6.6v6.6m10.7-6.6v6.6M-14.8 0 h30v6.6h-30zm2.6 0v6.6m6.1-6.6v6.6m2.6-6.6v6.6m3-6.6v6.6m6-6.6v6.6m2.6-6.6v6.6m2.6-6.6v6.6"/><path transform="translate(232.3 424.9)rotate(7.4)" d="M-13.1-6.4 h25.7v6.4h-25.7zm2.7 0v6.4m4.3-6.4v6.4m2.5-6.4v6.4m3.5-6.4v6.4m6.4-6.4v6.4m4.2-6.4v6.4M-12.4 0 h24.3v6.4h-24.3zm2.8 0v6.4m3.5-6.4v6.4m5.6-6.4v6.4m5.1-6.4v6.4m3.5-6.4v6.4"/><path transform="translate(259.4 424.8)rotate(3.6)" d="M-10.8-6.2 h21.6v4.1h-21.6zm6.4 0v4.1m5-4.1v4.1m4.5-4.1v4.1m3.6-4.1v4.1M-11.9-2.1 h23.5v4.1h-23.5zm6 0v4.1m5.2-4.1v4.1m3.4-4.1v4.1m4.5-4.1v4.1M-11.9 2.1 h23.2v4.1h-23.2zm4.7 0v4.1m6.3-4.1v4.1m9-4.1v4.1"/><path transform="translate(280.3 425.4)rotate(80.2)" d="M-8.3-6.3 h17.1v6.3h-17.1zm6.2 0v6.3m8.8-6.3v6.3M-8.2 0 h16.8v6.3h-16.8zm4.1 0v6.3m5.6-6.3v6.3"/><path transform="translate(309.3 426.4)rotate(-25.5)" d="M-14.3-5.8 h29.6v5.8h-29.6zm11.1 0v5.8m7-5.8v5.8m7-5.8v5.8M-14.1 0 h28.7v5.8h-28.7zm3.1 0v5.8m5.7-5.8v5.8m7-5.8v5.8m5.5-5.8v5.8m4.3-5.8v5.8"/><path transform="translate(-1.7 437.7)rotate(-20.8)" d="M-7.8-6.6 h16.9v6.6h-16.9zm3.3 0v6.6m5.1-6.6v6.6M-8.3 0 h17.3v6.6h-17.3zm5.6 0v6.6m6.4-6.6v6.6m3-6.6v6.6"/><path transform="translate(25.1 436.9)rotate(-14.6)" d="M-14.6-6.9 h28.7v4.6h-28.7zm3.9 0v4.6m2.5-4.6v4.6m3.8-4.6v4.6m2.9-4.6v4.6m2.9-4.6v4.6m3.7-4.6v4.6m4.3-4.6v4.6M-15.1-2.3 h29.3v4.6h-29.3zm4.9 0v4.6m4.5-4.6v4.6m3.4-4.6v4.6m3.7-4.6v4.6m6.2-4.6v4.6m3.9-4.6v4.6M-14.3 2.3 h28.5v4.6h-28.5zm2.4 0v4.6m6.2-4.6v4.6m2.7-4.6v4.6m2.7-4.6v4.6m4.9-4.6v4.6m2.5-4.6v4.6"/><path transform="translate(51.5 439.6)rotate(87.4)" d="M-6.4-6.2 h13.1v6.2h-13.1zm2.5 0v6.2m3.3-6.2v6.2m3.9-6.2v6.2M-7.4 0 h14v6.2h-14zm2.5 0v6.2m5.1-6.2v6.2"/><path transform="translate(72.2 437)rotate(-1)" d="M-12.5-6.1 h24.5v6.1h-24.5zm6.4 0v6.1m2.8-6.1v6.1m2.9-6.1v6.1m4.4-6.1v6.1m5-6.1v6.1M-12.3 0 h24.8v6.1h-24.8zm2.8 0v6.1m2.7-6.1v6.1m9.7-6.1v6.1"/><path transform="translate(101 437)rotate(5)" d="M-12-8.1 h24.2v5.4h-24.2zm5.5 0v5.4m2.6-5.4v5.4m3.1-5.4v5.4m4.2-5.4v5.4m5.7-5.4v5.4M-11.8-2.7 h24v5.4h-24zm4 0v5.4m11.5-5.4v5.4m6.4-5.4v5.4M-12.1 2.7 h24.9v5.4h-24.9zm5.2 0v5.4m2.8-5.4v5.4m4.6-5.4v5.4m4.5-5.4v5.4m2.5-5.4v5.4"/><path transform="translate(127.4 439.7)rotate(10.1)" d="M-10.4-7 h21v4.7h-21zm5.1 0v4.7m3-4.7v4.7m5.1-4.7v4.7m6.2-4.7v4.7M-10.7-2.3 h20.4v4.7h-20.4zm9.1 0v4.7m4.3-4.7v4.7m5.2-4.7v4.7M-10.1 2.3 h20.1v4.7h-20.1zm3.6 0v4.7m2.8-4.7v4.7m11.1-4.7v4.7"/><path transform="translate(156.2 439.3)rotate(4.2)" d="M-13.1-7.1 h25.8v4.7h-25.8zm2.5 0v4.7m6.1-4.7v4.7m5.2-4.7v4.7m3.7-4.7v4.7m6.2-4.7v4.7M-12.5-2.4 h24.8v4.7h-24.8zm2.5 0v4.7m3.6-4.7v4.7m5.6-4.7v4.7m3.9-4.7v4.7m3.2-4.7v4.7m4.1-4.7v4.7M-12.9 2.4 h25.8v4.7h-25.8zm2.9 0v4.7m11.3-4.7v4.7m5.7-4.7v4.7m4-4.7v4.7"/><path transform="translate(178.4 436.6)rotate(93.1)" d="M-9-6.2 h17.8v6.2h-17.8zm3 0v6.2m7.8-6.2v6.2m2.5-6.2v6.2M-8.8 0 h17.3v6.2h-17.3zm4.5 0v6.2m2.9-6.2v6.2m5.7-6.2v6.2"/><path transform="translate(206.2 440.4)rotate(7.1)" d="M-13.7-7.6 h27.7v5h-27.7zm6.4 0v5m5-5v5m5.2-5v5m2.6-5v5m6.5-5v5M-14.2-2.5 h28.1v5h-28.1zm2.6 0v5m3.1-5v5m2.9-5v5m4.7-5v5m7-5v5M-13.6 2.5 h27.7v5h-27.7zm3.7 0v5m6.6-5v5m5.8-5v5m3.1-5v5m6.5-5v5"/><path transform="translate(229.5 438.7)rotate(10.1)" d="M-6.7-7.3 h13.6v4.8h-13.6zm5.9 0v4.8m4.3-4.8v4.8M-7-2.4 h14.2v4.8h-14.2zm7.4 0v4.8m4-4.8v4.8M-6.4 2.4 h12.7v4.8h-12.7zm3 0v4.8"/><path transform="translate(251.8 437.5)rotate(9.9)" d="M-9.7-7.1 h20.5v4.7h-20.5zm2.5 0v4.7m5.5-4.7v4.7m2.8-4.7v4.7m3-4.7v4.7M-10.8-2.4 h21v4.7h-21zm9.1 0v4.7m3-4.7v4.7M-10.2 2.4 h19.8v4.7h-19.8zm6.2 0v4.7m5.6-4.7v4.7m4.1-4.7v4.7"/><path transform="translate(276.2 438.5)rotate(-4.9)" d="M-11.1-6.9 h22v4.6h-22zm3.6 0v4.6m7.7-4.6v4.6m4.7-4.6v4.6M-11.7-2.3 h23v4.6h-23zm7.2 0v4.6m4.6-4.6v4.6m6.1-4.6v4.6M-11.5 2.3 h23.4v4.6h-23.4zm5.1 0v4.6m4.1-4.6v4.6m5.1-4.6v4.6m6-4.6v4.6"/><path transform="translate(298.7 438.5)rotate(69.8)" d="M-9.1-7.8 h18v5.2h-18zm6.1 0v5.2m8-5.2v5.2M-9.2-2.6 h18.7v5.2h-18.7zm5.3 0v5.2m7.8-5.2v5.2M-9.6 2.6 h18.4v5.2h-18.4zm8.2 0v5.2m5.1-5.2v5.2"/><path transform="translate(322.9 438.9)rotate(-21.6)" d="M-11.3-6.9 h23.2v4.6h-23.2zm5.6 0v4.6m6-4.6v4.6m4.9-4.6v4.6M-11.8-2.3 h23.5v4.6h-23.5zm10.3 0v4.6m4.6-4.6v4.6M-10.7 2.3 h22.2v4.6h-22.2zm10.7 0v4.6m5.1-4.6v4.6"/></g><path d="M6.1 -4.6l-2.4 4.7l-3.2 -1.7l2.4 -4.7zM-1.8 2.7l-1.9 3.6l-3.2 -1.7l1.9 -3.6zM35.9 -4.5l5.5 3.3l-3.2 5.2l-5.5 -3.3zM50.9 -4.3l10.4 6.1l-2.6 4.5l-10.4 -6.1zM118.2 5.4l-4.8 8.8l-5.3 -2.9l4.8 -8.8zM199.9 -8.4l3 1.5l-2.8 5.5l-3 -1.5zM223.6 -.6l4.7 1.9l-2.1 5.3l-4.7 -1.9zM249.2 -6.6l2.9 1.6l-2 3.5l-2.9 -1.6zM232.7 -11.2l2.5 1.4l-2 3.5l-2.5 -1.4zM240.3 -2.3l2.6 1.5l-2 3.5l-2.6 -1.5zM260.4 -10.1l4.4 1.1l-1.5 6.2l-4.4 -1.1zM269.7 -7.9l3.9 .9l-1.5 6.2l-3.9 -.9zM279.6 1l1.5 .4l-1.5 6.2l-1.5 -.4zM300.8 -14.9l.3 5.7l-5.5 .3l-.3 -5.7zM301.1 -9.2l.3 6.7l-5.5 .3l-.3 -6.7zM55.2 2.4l4.5 2.8l-2.8 4.5l-4.5 -2.8zM77.1 15.9l1.4 .9l-2.8 4.5l-1.4 -.9zM150.4 .1l6.7 2.6l-2.2 5.6l-6.7 -2.6zM162.6 4.9l4 1.6l-2.2 5.6l-4 -1.6zM141 2.8l6.2 2.4l-2.2 5.6l-6.2 -2.4zM157.9 9.5l10.7 4.2l-2.2 5.6l-10.7 -4.2zM182.4 -.2l5.2 2.5l-2.1 4.3l-5.2 -2.5zM177.9 2.9l4 1.9l-2.1 4.3l-4 -1.9zM194.1 10.7l6.7 3.2l-2.1 4.3l-6.7 -3.2zM244.2 3.7l5.3 2.5l-1.9 4.1l-5.3 -2.5zM260 2.1l6.6 1.2l-1.1 5.9l-6.6 -1.2zM285.8 6.8l5.9 1.1l-1.1 5.9l-5.9 -1.1zM279.6 11.7l7.8 1.4l-1.1 5.9l-7.8 -1.4zM7.3 10.6l-3.5 6.7l-5.1 -2.7l3.5 -6.7zM59.7 16.4l3.3 1.9l-1.6 2.8l-3.3 -1.9zM105.3 13.6l4.7 2l-1.2 2.8l-4.7 -2zM113.2 17l6.5 2.8l-1.2 2.8l-6.5 -2.8zM132.5 18.3l6.8 2.8l-2.2 5.3l-6.8 -2.8zM149.7 14.2l3.1 1.1l-1.7 4.5l-3.1 -1.1zM164.2 19.7l4.3 1.6l-1.7 4.5l-4.3 -1.6zM183.6 21.4l3.5 1.2l-2 5.7l-3.5 -1.2zM262.2 11.4l5 1.4l-1.6 5.7l-5 -1.4zM271.2 20.2l6.7 1.9l-1.6 5.7l-6.7 -1.9zM329.7 24l7.1 -.9l.5 4.1l-7.1 .9zM6.7 29l3.3 1.8l-2.6 4.7l-3.3 -1.8zM7.9 35.7l3.1 1.7l-2.6 4.7l-3.1 -1.7zM9.1 42.5l2.3 1.3l-2.6 4.7l-2.3 -1.3zM25.9 27.3l7.1 3.4l-2 4.2l-7.1 -3.4zM80 23.2l5.4 2.7l-2.1 4.3l-5.4 -2.7zM76.5 32.1l7.5 3.8l-2.1 4.3l-7.5 -3.8zM117.6 30.3l6.1 3l-2 4.1l-6.1 -3zM121.2 37.1l3.8 1.9l-2 4.1l-3.8 -1.9zM136.5 36.1l-1.8 4.4l-4.5 -1.8l1.8 -4.4zM163.1 24.1l5.8 1.8l-1.6 5l-5.8 -1.8zM196.3 40.6l-.6 1.8l-4.6 -1.6l.6 -1.8zM198.6 33.2l6.3 2.9l-2.4 5.2l-6.3 -2.9zM234.3 39.3l2.1 1l-2.2 4.4l-2.1 -1zM306.9 27.2l4.5 -.6l.7 4.7l-4.5 .6zM311.5 36.2l3.7 -.5l.7 4.7l-3.7 .5zM84.9 43.6l1.9 .8l-1.5 3.6l-1.9 -.8zM137.1 48.8l-1.5 3.9l-5.3 -2l1.5 -3.9zM164.5 50.9l-1.2 4l-6.3 -1.9l1.2 -4zM186.9 47.7l4.2 1.3l-1.5 4.8l-4.2 -1.3zM228.7 49.1l5.7 2.3l-2 4.8l-5.7 -2.3zM283.5 42.8l7.1 -.3l.2 5.3l-7.1 .3zM295.3 42.3l4 -.2l.2 5.3l-4 .2zM293.4 47.7l6 -.2l.2 5.3l-6 .2zM1.1 61.4l7.4 3.7l-2.3 4.6l-7.4 -3.7zM83.5 60.6l-5.6 12l-5.4 -2.5l5.6 -12zM93.9 53.6l5.1 1.7l-2 5.8l-5.1 -1.7zM141.5 66.3l2.3 .8l-2.1 6.1l-2.3 -.8zM155.8 52.4l3.2 1l-1.3 4.3l-3.2 -1zM169.9 56.8l7 2.2l-1.3 4.3l-7 -2.2zM154.5 56.7l6.9 2.1l-1.3 4.3l-6.9 -2.1zM151.9 60.7l6.6 2l-1.3 4.3l-6.6 -2zM162.5 64l4.4 1.4l-1.3 4.3l-4.4 -1.4zM166.9 65.3l3.3 1l-1.3 4.3l-3.3 -1zM170.2 66.3l3.4 1l-1.3 4.3l-3.4 -1zM181.5 62.6l4.8 1.4l-1.4 4.8l-4.8 -1.4zM193.2 65.9l2.5 .7l-1.4 4.8l-2.5 -.7zM204.2 50.6l6.2 2.6l-2 4.7l-6.2 -2.6zM239.7 60.5l5.9 2.2l-2.4 6.2l-5.9 -2.2zM310.7 69.6l7.8 -1.7l1 4.5l-7.8 1.7zM9.7 78.1l6.8 3.3l-2.4 4.8l-6.8 -3.3zM128.9 74.1l6.6 1.6l-1.4 5.7l-6.6 -1.6zM164.6 67.6l6.2 2.2l-2 5.7l-6.2 -2.2zM178.8 72.5l4.4 1.5l-2 5.7l-4.4 -1.5zM177.4 78.4l3.2 1.1l-2 5.7l-3.2 -1.1zM200.9 70.7l3.9 1.4l-2 5.5l-3.9 -1.4zM195.8 75.1l6.3 2.2l-2 5.5l-6.3 -2.2zM33.9 94.5l-2.1 6.1l-6.1 -2.1l2.1 -6.1zM53.2 85.2l6.4 2.1l-1.6 5l-6.4 -2.1zM98.7 88.9l1.9 .5l-1.2 4.9l-1.9 -.5zM109.8 82l12.8 3.9l-1.8 6.1l-12.8 -3.9zM147.6 77.2l-1.3 4.4l-5.1 -1.5l1.3 -4.4zM136.8 95.3l-1.6 5.3l-5.1 -1.5l1.6 -5.3zM165.2 78.3l6.1 1.5l-1.3 5.3l-6.1 -1.5zM171.3 79.8l2.8 .7l-1.3 5.3l-2.8 -.7zM158.7 82.2l5.4 1.3l-1.3 5.3l-5.4 -1.3zM164.1 83.6l5.3 1.3l-1.3 5.3l-5.3 -1.3zM169.5 84.9l4.3 1.1l-1.3 5.3l-4.3 -1.1zM156.9 87.4l6.3 1.5l-1.3 5.3l-6.3 -1.5zM163.2 88.9l4.6 1.1l-1.3 5.3l-4.6 -1.1zM185.3 80.7l5.7 1.5l-1.3 5l-5.7 -1.5zM191 82.2l3.1 .8l-1.3 5l-3.1 -.8zM194.1 83.1l5.6 1.5l-1.3 5l-5.6 -1.5zM178 84l6.3 1.7l-1.3 5l-6.3 -1.7zM184.2 85.7l9.1 2.5l-1.3 5l-9.1 -2.5zM193.3 88.2l6.3 1.7l-1.3 5l-6.3 -1.7zM192.2 93.2l6.5 1.8l-1.3 5l-6.5 -1.8zM231.2 78.8l5.5 1.9l-1.5 4.5l-5.5 -1.9zM261.1 88.7l5.3 1.4l-1.3 4.7l-5.3 -1.4zM279 90.4l6.4 .5l-.3 4.6l-6.4 -.5zM44.3 102.5l4.7 1.4l-1.8 5.8l-4.7 -1.4zM49 104l5.6 1.7l-1.8 5.8l-5.6 -1.7zM91.9 96l3.5 1.1l-1.8 5.8l-3.5 -1.1zM116.1 99.7l-1.9 7.7l-6 -1.5l1.9 -7.7zM167.6 98.1l3.1 .8l-1.2 4.6l-3.1 -.8zM170.7 98.9l6.3 1.7l-1.2 4.6l-6.3 -1.7zM199.3 108.8l3.7 1.1l-1.3 4.6l-3.7 -1.1zM221 96l6.4 2l-1.8 5.9l-6.4 -2zM227.5 98l7.9 2.5l-1.8 5.9l-7.9 -2.5zM242.3 95.9l3.3 1.1l-2.1 6.3l-3.3 -1.1zM289.8 97.4l5.9 -1.4l1.5 6l-5.9 1.4zM295.6 96l3.2 -.8l1.5 6l-3.2 .8zM45.8 116.6l-1.4 4.3l-5.3 -1.7l1.4 -4.3zM55.8 121.1l6 1.6l-1.4 5.2l-6 -1.6zM84.2 110.7l14.6 3.1l-1.1 5l-14.6 -3.1zM119.6 111.4l11 1.7l-.7 5l-11 -1.7zM142 109.6l5.4 1.1l-.9 4.5l-5.4 -1.1zM151.3 111.5l4 .8l-.9 4.5l-4 -.8zM156.1 117.2l5.3 1.1l-.9 4.5l-5.3 -1.1zM145.3 119.6l5.4 1.1l-.9 4.5l-5.4 -1.1zM180.4 112.4l3.2 .7l-1.2 5.2l-3.2 -.7zM202.7 121.7l6.4 1.9l-1.4 4.9l-6.4 -1.9zM232.9 110l4.4 1.4l-1.6 4.8l-4.4 -1.4zM330.3 112.5l2.8 -1.3l2.8 6.1l-2.8 1.3zM2.1 122.3l5.7 1.8l-1.6 5l-5.7 -1.8zM157.5 121.9l-.7 4.4l-5.7 -.9l.7 -4.4zM183.7 126.4l-.6 3.1l-4.9 -1l.6 -3.1zM270.1 122.8l-.1 8l-6.1 -.1l.1 -8zM306.6 122.1l3.7 -1.6l2.2 5.2l-3.7 1.6zM106.3 140.7l5.4 .5l-.4 4.3l-5.4 -.5zM203.8 135.3l-1.1 5.2l-5.4 -1.1l1.1 -5.2zM201.9 144.8l-.5 2.3l-5.4 -1.1l.5 -2.3zM224.1 139l2.1 .7l-1.7 5.3l-2.1 -.7zM208.4 139.8l2.9 .9l-1.7 5.3l-2.9 -.9zM248.2 137.2l5.6 1.6l-1.6 5.7l-5.6 -1.6zM269.8 139.2l7.7 -.4l.3 5.3l-7.7 .4zM269.3 144.5l3.9 -.2l.3 5.3l-3.9 .2zM15.6 149.1l3.8 .8l-.7 3.4l-3.8 -.8zM65.3 155.9l6.7 .5l-.4 5.7l-6.7 -.5zM124.8 154.7l2.5 .2l-.3 3.8l-2.5 -.2zM140.6 148.6l1.9 .3l-.9 5.9l-1.9 -.3zM149.2 150l5.4 .9l-.9 5.9l-5.4 -.9zM196.3 146.5l1.8 .4l-1.5 6.3l-1.8 -.4zM194.6 152.8l2.1 .5l-1.5 6.3l-2.1 -.5zM204.2 155l1.8 .4l-1.5 6.3l-1.8 -.4zM230.3 149.8l2.7 .7l-1.3 5l-2.7 -.7zM259.9 168.1l-.4 3l-5.6 -.7l.4 -3zM311.1 151l11.2 -5.2l2.8 6.1l-11.2 5.2zM321.9 153.4l3.9 -1.8l2.8 6.1l-3.9 1.8zM-1.9 160.2l6.9 1.2l-1.1 6.2l-6.9 -1.2zM14.8 169.6l7.4 1.3l-1.1 6.2l-7.4 -1.3zM44.2 166.1l-1 8.2l-6.2 -.8l1 -8.2zM80.3 161.7l6.8 .3l-.2 3.9l-6.8 -.3zM97.7 162.4l5.3 .2l-.2 3.9l-5.3 -.2zM89.5 166l7.3 .3l-.2 3.9l-7.3 -.3zM97.9 170.3l6.9 .3l-.2 3.9l-6.9 -.3zM161.6 170.2l4.2 .6l-.9 5.8l-4.2 -.6zM178.4 163.1l3.9 .7l-.9 5l-3.9 -.7zM193.2 170.9l4.2 .8l-.9 5l-4.2 -.8zM210.2 173.4l-1 3.7l-5.1 -1.4l1 -3.7zM229.5 160.5l7.6 1.9l-1.5 6.1l-7.6 -1.9zM292.8 164.4l11.2 -5.3l2.3 4.7l-11.2 5.3zM5.7 177.4l5.8 1.1l-.9 5.1l-5.8 -1.1zM16.1 179.3l2.6 .5l-.9 5.1l-2.6 -.5zM51.8 179.8l4.7 .5l-.5 4.4l-4.7 -.5zM56.5 180.3l7.8 .8l-.5 4.4l-7.8 -.8zM89.2 177.8l4.2 .6l-.6 4.2l-4.2 -.6zM103.9 179.5l2.2 .1l-.3 5l-2.2 -.1zM142.8 182.3l2.3 .2l-.4 5l-2.3 -.2zM159.4 175.7l3.3 .8l-.9 3.8l-3.3 -.8zM160.5 180l6.5 1.5l-.9 3.8l-6.5 -1.5zM167 181.5l3.8 .9l-.9 3.8l-3.8 -.9zM169.4 186.1l2.2 .5l-.9 3.8l-2.2 -.5zM180.1 178.6l3.4 .6l-.9 5.1l-3.4 -.6zM183.5 179.1l1.8 .3l-.9 5.1l-1.8 -.3zM229.3 166.1l-.8 4.6l-5.2 -1l.8 -4.6zM245.3 172.4l3.8 .8l-1.2 5.9l-3.8 -.8zM15.1 189.2l6.2 1.3l-.9 4.5l-6.2 -1.3zM-3.4 190.1l4.5 .9l-.9 4.5l-4.5 -.9zM18.6 194.6l8.6 1.8l-.9 4.5l-8.6 -1.8zM9.8 197.5l4.8 1l-.9 4.5l-4.8 -1zM51.6 190.9l4.8 .4l-.3 3.6l-4.8 -.4zM58.6 193.2l13.9 .5l-.2 6.3l-13.9 -.5zM111.5 192.6l3.7 .3l-.6 6.4l-3.7 -.3zM117.8 193.2l2.2 .2l-.6 6.4l-2.2 -.2zM141.5 192l-.6 4.1l-5.7 -.9l.6 -4.1zM155.7 193.4l3.4 .8l-1.5 6.3l-3.4 -.8zM186.8 191.5l5.9 1.5l-1.2 4.7l-5.9 -1.5zM192.6 192.9l4.5 1.1l-1.2 4.7l-4.5 -1.1zM210.2 185.2l2.8 .6l-1 4.6l-2.8 -.6zM255.7 185.9l-.4 4.7l-6.4 -.5l.4 -4.7zM254.8 196.3l-.2 2.1l-6.4 -.5l.2 -2.1zM305.9 194.8l5.7 -3.4l3.2 5.2l-5.7 3.4zM312.8 197.7l4.9 -2.9l3.2 5.2l-4.9 2.9zM323 191.6l4.3 -2.6l3.2 5.2l-4.3 2.6zM3.6 207l3.6 .4l-.6 5l-3.6 -.4zM21.2 204.4l6.4 .9l-.7 4.7l-6.4 -.9zM72.7 204.5l3.6 .2l-.2 4.7l-3.6 -.2zM84 204.5l6.1 .6l-.5 5.6l-6.1 -.6zM90.1 205.1l6.1 .6l-.5 5.6l-6.1 -.6zM192.2 200.2l-1.1 4.4l-5.1 -1.2l1.1 -4.4zM187.5 197.1l-.4 1.9l-5.1 -1.2l.4 -1.9zM186 203.4l-1.3 5.3l-5.1 -1.2l1.3 -5.3zM236 205.3l4.4 1l-1.1 5l-4.4 -1zM245.7 207.5l4.3 1l-1.1 5l-4.3 -1zM267.7 204.9l7.9 -1.2l.9 5.7l-7.9 1.2zM287.6 203.7l6 -3l2.6 5.3l-6 3zM313.7 212.5l5.9 -3.4l2.1 3.7l-5.9 3.4zM17 229.1l-.3 3.9l-5.4 -.4l.3 -3.9zM87.2 209.6l8 .5l-.3 4.8l-8 -.5zM124.9 210.5l3.8 .4l-.6 5.5l-3.8 -.4zM109.5 214.4l3.2 .3l-.6 5.5l-3.2 -.3zM119 215.4l4.1 .4l-.6 5.5l-4.1 -.4zM126 216.1l2.9 .3l-.6 5.5l-2.9 -.3zM128.9 216.5l3.7 .4l-.6 5.5l-3.7 -.4zM144 216l3.1 .7l-1.1 4.8l-3.1 -.7zM156 218.7l3.6 .8l-1.1 4.8l-3.6 -.8zM142.4 220.7l4.1 .9l-1.1 4.8l-4.1 -.9zM159.9 224.5l3.8 .8l-1.1 4.8l-3.8 -.8zM194.3 214.5l1.6 .4l-1.2 4.8l-1.6 -.4zM171.2 213.8l3.9 1l-1.2 4.8l-3.9 -1zM175.1 214.8l1.8 .5l-1.2 4.8l-1.8 -.5zM184.9 217.3l3.2 .8l-1.2 4.8l-3.2 -.8zM205.5 222.9l3.1 .7l-1.3 5.7l-3.1 -.7zM208.7 223.6l1.8 .4l-1.3 5.7l-1.8 -.4zM239.2 219.6l1.9 .4l-.9 5l-1.9 -.4zM242.6 211.4l3.2 .4l-.6 5l-3.2 -.4zM242.2 216.4l4.5 .5l-.6 5l-4.5 -.5zM245.8 221.9l3.1 .3l-.6 5l-3.1 -.3zM295.9 215.7l6.7 -4.1l2.5 4l-6.7 4.1zM15.3 227.4l5.6 .8l-.8 5.4l-5.6 -.8zM22.4 233.9l8.2 1.2l-.8 5.4l-8.2 -1.2zM37.5 231.6l9.1 .8l-.5 6.1l-9.1 -.8zM65.8 234.1l3.8 .4l-.6 5.7l-3.8 -.4zM88.1 233.1l7.6 1l-.9 6.6l-7.6 -1zM118.7 235.4l4.4 .9l-.8 3.8l-4.4 -.9zM201.5 226.9l2.9 .6l-1.3 6.5l-2.9 -.6zM226.2 225.6l-.6 3.6l-5.7 -1l.6 -3.6zM223.7 240.1l-.5 3.1l-5.7 -1l.5 -3.1zM241 233l2.1 .4l-1.1 6l-2.1 -.4zM294.9 223.9l2.7 5.6l-4 2l-2.7 -5.6zM297.6 229.5l3.2 6.6l-4 2l-3.2 -6.6zM12.8 232.8l-.5 5.6l-6 -.5l.5 -5.6zM6.8 232.4l-.7 7.3l-6 -.5l.7 -7.3zM64.9 247l4.6 .5l-.5 4.8l-4.6 -.5zM85.7 239.3l6.9 .5l-.3 4.5l-6.9 -.5zM129.1 231.3l-.7 3.6l-5 -1l.7 -3.6zM126.8 242.9l-.8 4l-5 -1l.8 -4zM123.5 233.1l-.4 2.1l-5 -1l.4 -2.1zM123.1 235.2l-.6 3l-5 -1l.6 -3zM155.7 248.6l3 .6l-1 5.3l-3 -.6zM161.9 244.5l4 1l-1 4.1l-4 -1zM204 237.4l5.2 1.2l-1.1 4.9l-5.2 -1.2zM221.3 241.4l1.9 .4l-1.1 4.9l-1.9 -.4zM215.1 245.1l4.3 1l-1.1 4.9l-4.3 -1zM245.5 235l-.4 3.3l-5.5 -.6l.4 -3.3zM245.1 238.2l-.4 3l-5.5 -.6l.4 -3zM240.3 231.4l-.3 2.3l-5.5 -.6l.3 -2.3zM260.9 238.9l6.2 -.5l.4 5.5l-6.2 .5zM273.7 243.5l5.5 -.4l.4 5.5l-5.5 .4zM-8.8 255.6l6.3 .8l-.6 4.8l-6.3 -.8zM-.7 261.5l4.2 .6l-.6 4.8l-4.2 -.6zM7.4 246.9l6.2 .9l-.7 4.9l-6.2 -.9zM26.2 254.5l2.2 .3l-.7 4.9l-2.2 -.3zM39.3 249.8l4.6 .5l-.5 4.6l-4.6 -.5zM43.7 254.9l7.1 .8l-.5 4.6l-7.1 -.8zM127.5 250.1l-.5 3.5l-4.7 -.7l.5 -3.5zM126.1 259.4l-.4 2.9l-4.7 -.7l.4 -2.9zM123.5 245.3l-.3 1.9l-4.7 -.7l.3 -1.9zM143.2 249.1l3.8 .7l-1 5.8l-3.8 -.7zM157.2 251.6l3.2 .6l-1 5.8l-3.2 -.6zM186 254l2.7 .6l-1.5 6.4l-2.7 -.6zM173 257.8l3.3 .8l-1.5 6.4l-3.3 -.8zM185.6 260.7l1.7 .4l-1.5 6.4l-1.7 -.4zM207.4 253.6l2.7 .4l-.6 3.7l-2.7 -.4zM206.1 257.2l2.7 .4l-.6 3.7l-2.7 -.4zM207.5 261.1l2.1 .3l-.6 3.7l-2.1 -.3zM209.6 261.5l2.3 .4l-.6 3.7l-2.3 -.4zM243.3 256.8l3.7 .3l-.5 6.6l-3.7 -.3zM295.4 258.4l3.4 -2l2 3.3l-3.4 2zM32.7 260.6l-.5 5.7l-5.9 -.5l.5 -5.7zM86.1 269l4.4 .5l-.5 3.9l-4.4 -.5zM88.5 273.3l6.6 .8l-.5 3.9l-6.6 -.8zM124.9 262.3l2.8 .7l-1 3.8l-2.8 -.7zM159.7 267.6l3.4 .8l-1.3 5.5l-3.4 -.8zM177.1 263.7l4.6 1.2l-1.5 5.7l-4.6 -1.2zM185.9 266l2.1 .6l-1.5 5.7l-2.1 -.6zM208.3 282.3l-.8 3.9l-3.6 -.7l.8 -3.9zM204.4 265.1l-.5 2.4l-3.6 -.7l.5 -2.4zM243.9 282.6l-.4 2.9l-6.4 -.8l.4 -2.9zM239.5 266.6l-.8 6.1l-6.4 -.8l.8 -6.1zM237.8 279.3l-.6 4.8l-6.4 -.8l.6 -4.8zM256.1 268.9l7.2 -1.4l1.2 6.3l-7.2 1.4zM274.1 272l6.5 -1.2l1.2 6.3l-6.5 1.2zM286.3 272l4.4 -2.3l2.2 4.1l-4.4 2.3zM291.3 274.7l3.3 -1.7l2.2 4.1l-3.3 1.7zM309.5 276.7l4.7 -2.6l2.8 5.1l-4.7 2.6zM6 278.1l4.9 .4l-.4 4.3l-4.9 -.4zM30.7 281.4l6.9 .8l-.7 5.7l-6.9 -.8zM76.3 288l-.4 2.9l-6.2 -.8l.4 -2.9zM111.2 278.3l-1.2 5.6l-4.6 -1l1.2 -5.6zM103.3 293l-1.1 4.9l-4.6 -1l1.1 -4.9zM131.2 278.4l3.6 1l-1.6 5.9l-3.6 -1zM122.7 282.3l2.1 .6l-1.6 5.9l-2.1 -.6zM127.4 283.6l3.2 .9l-1.6 5.9l-3.2 -.9zM130.6 284.5l3.8 1.1l-1.6 5.9l-3.8 -1.1zM156.1 281.3l-.4 2.1l-4.4 -.9l.4 -2.1zM155.7 283.4l-.5 2.5l-4.4 -.9l.5 -2.5zM186.8 278.4l5.4 1.4l-1.3 4.9l-5.4 -1.4zM172.8 285.2l2.8 .7l-1.3 4.9l-2.8 -.7zM215.2 274.9l-.7 4.7l-6 -.9l.7 -4.7zM209.5 271.8l-.6 4l-6 -.9l.6 -4zM208.6 278l-.3 1.8l-6 -.9l.3 -1.8zM207.2 288.1l-.7 4.5l-6 -.9l.7 -4.5zM235.1 275.9l3.9 .6l-.7 4.7l-3.9 -.6zM231.6 280.1l3.4 .5l-.7 4.7l-3.4 -.5zM248.8 282.8l3.6 .5l-.7 4.7l-3.6 -.5zM238.6 286l4.6 .7l-.7 4.7l-4.6 -.7zM250.8 287.9l6.9 1.1l-.7 4.7l-6.9 -1.1zM284.6 287.3l.8 3.6l-4.5 1l-.8 -3.6zM279.7 286.8l1.5 6.6l-4.5 1l-1.5 -6.6zM36.8 297.3l2.4 .3l-.6 5l-2.4 -.3zM50.3 294.1l4.1 .5l-.4 3.5l-4.1 -.5zM63.4 295.6l3.6 .4l-.4 3.5l-3.6 -.4zM50.6 297.7l6.1 .7l-.4 3.5l-6.1 -.7zM69.7 296.8l9.5 1.5l-1 6.4l-9.5 -1.5zM104.5 291.4l-.5 2.8l-4.3 -.8l.5 -2.8zM103.9 294.2l-1.2 6.5l-4.3 -.8l1.2 -6.5zM97.4 305.1l-1.1 5.8l-4.3 -.8l1.1 -5.8zM166.4 297.9l2.8 .4l-1 6.2l-2.8 -.4zM178.9 290.7l2.9 .6l-1.4 6.5l-2.9 -.6zM190.6 293.2l2.7 .6l-1.4 6.5l-2.7 -.6zM193.3 293.8l1.5 .3l-1.4 6.5l-1.5 -.3zM189.8 299.9l2.9 .6l-1.4 6.5l-2.9 -.6zM204.5 293.4l2.6 .4l-.5 3.3l-2.6 -.4zM212.3 294.6l3.6 .6l-.5 3.3l-3.6 -.6zM219.9 295.8l3 .5l-.5 3.3l-3 -.5zM204.9 296.8l2.7 .4l-.5 3.3l-2.7 -.4zM207.6 297.3l4.4 .7l-.5 3.3l-4.4 -.7zM212 298l2.2 .3l-.5 3.3l-2.2 -.3zM241.8 292l1.9 .1l-.4 5.8l-1.9 -.1zM279.3 289.7l6.9 -1.7l1.4 5.6l-6.9 1.7zM65.1 310.8l6.5 1l-.8 4.8l-6.5 -1zM93.6 312.2l3 .5l-1.1 6.3l-3 -.5zM104.6 307.6l7.5 1.7l-1.3 5.9l-7.5 -1.7zM137.9 305.1l2.6 .5l-1.1 5.1l-2.6 -.5zM127.9 308.3l4.5 .9l-1.1 5.1l-4.5 -.9zM139 310.6l1.5 .3l-1.1 5.1l-1.5 -.3zM183 310.3l-.6 4.7l-3.7 -.5l.6 -4.7zM181.7 319.5l-.6 4l-3.7 -.5l.6 -4zM180.1 303.4l-.4 2.8l-3.7 -.5l.4 -2.8zM179.2 309.8l-.4 2.7l-3.7 -.5l.4 -2.7zM176.9 299.8l-.8 5.6l-3.7 -.5l.8 -5.6zM174.9 314l-.9 6.2l-3.7 -.5l.9 -6.2zM198.9 304l1.8 .3l-.9 6l-1.8 -.3zM200.7 304.3l3.1 .4l-.9 6l-3.1 -.4zM213.2 312.3l2 .3l-.9 6l-2 -.3zM229.5 303l3.3 .3l-.5 5.6l-3.3 -.3zM245.8 304.5l2.7 .2l-.5 5.6l-2.7 -.2zM254.3 303.6l4.1 -.1l.1 4.9l-4.1 .1zM254.8 308.5l2.6 -.1l.1 4.9l-2.6 .1zM257.4 308.4l1.9 -.1l.1 4.9l-1.9 .1zM312.5 307.4l3.6 7.1l-5 2.6l-3.6 -7.1zM64.6 324.6l3 .4l-.6 4.7l-3 -.4zM83.6 317.9l7.1 1.6l-1.4 6.4l-7.1 -1.6zM120.1 318.7l3.7 .8l-1.1 4.7l-3.7 -.8zM99.8 319l4.1 .9l-1.1 4.7l-4.1 -.9zM110.7 321.5l3.8 .9l-1.1 4.7l-3.8 -.9zM136.5 314.4l4.6 .8l-.9 5.1l-4.6 -.8zM141 315.3l3.9 .7l-.9 5.1l-3.9 -.7zM144.9 316l5.5 1l-.9 5.1l-5.5 -1zM136 319.6l3.6 .7l-.9 5.1l-3.6 -.7zM124.6 322.9l4 .7l-.9 5.1l-4 -.7zM161.4 318.6l3.7 .9l-1.2 5l-3.7 -.9zM168.9 320.4l3.6 .9l-1.2 5l-3.6 -.9zM185.2 315.8l1.9 .3l-.7 5.2l-1.9 -.3zM181.5 325.8l1.9 .3l-.7 5.2l-1.9 -.3zM194.4 327.6l2.7 .4l-.7 5.2l-2.7 -.4zM219.4 316.1l4.3 .3l-.4 6.3l-4.3 -.3zM212 321.9l2.1 .2l-.4 6.3l-2.1 -.2zM237.7 317.1l2.3 .3l-.7 5.2l-2.3 -.3zM231.2 321.5l4.5 .6l-.7 5.2l-4.5 -.6zM291.8 316.5l8 -3.8l2.2 4.5l-8 3.8zM304 329.3l4.6 -2.5l2.3 4.3l-4.6 2.5zM313.3 329.8l7.1 -3.8l2.3 4.3l-7.1 3.8zM39.4 340.2l2.2 .2l-.5 5.9l-2.2 -.2zM119.9 341.3l-.7 3l-5.8 -1.3l.7 -3zM140 339.4l3.8 .8l-1 4.7l-3.8 -.8zM165.2 329.7l2.6 .4l-.7 4.9l-2.6 -.4zM173.3 330.9l4.3 .6l-.7 4.9l-4.3 -.6zM197 331.4l4.3 .4l-.6 6.1l-4.3 -.4zM186.2 336.6l3.2 .3l-.6 6.1l-3.2 -.3zM226.9 346.1l-.4 5l-4.6 -.4l.4 -5zM250.5 336.7l5.5 0l0 4.9l-5.5 0zM250.1 341.7l5.7 0l0 4.9l-5.7 0zM255.9 341.7l5.9 0l0 4.9l-5.9 0zM2.3 346.8l2.5 -.1l.2 4.9l-2.5 .1zM41.4 356l3.2 .3l-.5 5.3l-3.2 -.3zM92 342.9l4.4 .8l-.8 4.8l-4.4 -.8zM148.3 349.9l6.5 .9l-.6 4.4l-6.5 -.9zM167.2 352.5l3.3 .5l-.6 4.4l-3.3 -.5zM185.2 358.7l-.2 2.5l-5.3 -.5l.2 -2.5zM210.6 344.2l5.2 .7l-.8 5.5l-5.2 -.7zM199.9 348.2l3.3 .5l-.8 5.5l-3.3 -.5zM215 350.4l2.5 .4l-.8 5.5l-2.5 -.4zM212.9 355.6l4.6 .7l-.8 5.5l-4.6 -.7zM245.3 348.7l-.4 3.1l-5.2 -.6l.4 -3.1zM254.1 353l5.8 -.8l.6 4.7l-5.8 .8zM258.5 357.2l4.5 -.6l.6 4.7l-4.5 .6zM291.7 355.1l5 -2.1l2.1 4.9l-5 2.1zM2.2 361.6l2.3 -.2l.4 5.1l-2.3 .2zM11.1 360.9l7.7 -.6l.4 5.1l-7.7 .6zM21.3 360.1l3.2 -.2l.4 5.1l-3.2 .2zM50.5 354.4l-.2 4.3l-5.4 -.3l.2 -4.3zM50.2 358.7l-.3 6.5l-5.4 -.3l.3 -6.5zM49.5 373.5l-.3 5l-5.4 -.3l.3 -5zM44.2 370l-.2 3.6l-5.4 -.3l.2 -3.6zM75.8 366l5.7 .9l-.9 5.6l-5.7 -.9zM123.8 359.3l4.2 .8l-.9 4.8l-4.2 -.8zM177.7 362.7l1.9 .3l-1 5.5l-1.9 -.3zM164.4 365.9l5 .9l-1 5.5l-5 -.9zM169.4 366.8l6.4 1.2l-1 5.5l-6.4 -1.2zM191 362.3l3.1 .4l-.5 4l-3.1 -.4zM227.3 367l4.1 .5l-.7 5l-4.1 -.5zM254.1 364.9l-.5 6.4l-6.5 -.5l.5 -6.4zM294.1 365.5l3.2 -1.5l2.3 5l-3.2 1.5zM-.2 373.3l3 -.6l.9 4.9l-3 .6zM11.5 371.1l3.1 -.6l.9 4.9l-3.1 .6zM-2.3 378.8l3.4 -.7l.9 4.9l-3.4 .7zM1.2 378.2l1.9 -.4l.9 4.9l-1.9 .4zM6.5 377.2l3.5 -.7l.9 4.9l-3.5 .7zM-.8 383.7l5 -.9l.9 4.9l-5 .9zM26.3 372.8l4.1 -.2l.2 5.9l-4.1 .2zM45.2 377.6l4.5 .2l-.1 3.9l-4.5 -.2zM52.6 381.8l3.4 .1l-.1 3.9l-3.4 -.1zM62 382.2l3.7 .1l-.1 3.9l-3.7 -.1zM92.7 379.7l4.1 .4l-.4 4.5l-4.1 -.4zM74.7 382.6l5.7 .5l-.4 4.5l-5.7 -.5zM83.4 383.4l5.2 .5l-.4 4.5l-5.2 -.5zM104.6 379l3.7 .6l-1 6.3l-3.7 -.6zM183.7 375.9l2.6 .4l-.7 4.7l-2.6 -.4zM169.9 383.3l3.3 .5l-.7 4.7l-3.3 -.5zM191.4 382.3l2.5 .2l-.3 4.7l-2.5 -.2zM200 382.9l3 .2l-.3 4.7l-3 -.2zM221.7 382l3.9 .4l-.7 6.7l-3.9 -.4zM276.9 380.6l7.3 -2.7l2.1 5.7l-7.3 2.7zM311.4 381.1l4.3 -1.7l1.8 4.5l-4.3 1.7zM7.5 377.9l1.3 6.3l-6.3 1.3l-1.3 -6.3zM1.7 381.8l.7 3.5l-6.3 1.3l-.7 -3.5zM4.6 396.3l.9 4.8l-6.3 1.3l-.9 -4.8zM5.6 401.1l.9 4.6l-6.3 1.3l-.9 -4.6zM43.4 390.2l4 -.3l.5 6.6l-4 .3zM25.9 398l2 -.1l.5 6.6l-2 .1zM27.9 397.9l3.6 -.2l.5 6.6l-3.6 .2zM48.4 396.5l3.6 -.3l.5 6.6l-3.6 .3zM74.2 389.4l4.9 0l0 5.3l-4.9 0zM64.3 394.6l3.6 0l0 5.3l-3.6 0zM70.9 399.9l6.1 .1l0 5.3l-6.1 -.1zM143.3 404.7l-.9 5.8l-4.6 -.7l.9 -5.8zM137 384.3l-.4 2.8l-4.6 -.7l.4 -2.8zM167.2 394.3l5.9 .4l-.5 6.7l-5.9 -.4zM187.8 387.5l5.3 .7l-.6 4.8l-5.3 -.7zM179.4 396.2l2.6 .3l-.6 4.8l-2.6 -.3zM185.3 396.9l3.2 .4l-.6 4.8l-3.2 -.4zM188.5 397.3l3 .4l-.6 4.8l-3 -.4zM197.3 398.4l1.6 .2l-.6 4.8l-1.6 -.2zM204.5 393.4l4 .3l-.4 5.3l-4 -.3zM246.3 384.6l-.5 6.5l-4.6 -.3l.5 -6.5zM245.8 391.1l-.4 5.3l-4.6 -.3l.4 -5.3zM237 384.6l-.3 4.6l-4.6 -.3l.3 -4.6zM236.6 389.1l-.4 5.5l-4.6 -.3l.4 -5.5zM294.1 388.2l5.1 -2l1.8 4.5l-5.1 2zM304.4 394.6l1.9 -.7l1.8 4.5l-1.9 .7zM320.6 387.5l1.4 3.4l-4.7 2l-1.4 -3.4zM315.4 388.2l2.5 5.9l-4.7 2l-2.5 -5.9zM16 401l3.1 -.9l1.4 4.7l-3.1 .9zM20 410.1l2 -.6l1.4 4.7l-2 .6zM58.4 413.8l4.7 .2l-.1 4.5l-4.7 -.2zM73.1 414.3l3.7 .1l-.1 4.5l-3.7 -.1zM81.4 413.2l2.7 .4l-.7 5.6l-2.7 -.4zM96.2 415.1l1.9 .3l-.7 5.6l-1.9 -.3zM103.6 403.6l2.6 .6l-1.2 5.5l-2.6 -.6zM113.6 405.7l2.7 .6l-1.2 5.5l-2.7 -.6zM137 400.8l5.3 .8l-.7 4.8l-5.3 -.8zM154.5 412.9l4.5 .3l-.3 4.7l-4.5 -.3zM159 413.2l5.7 .4l-.3 4.7l-5.7 -.4zM169.8 413.9l3 .2l-.3 4.7l-3 -.2zM188.6 406.7l3.6 .3l-.4 5l-3.6 -.3zM185 411.4l6.2 .5l-.4 5l-6.2 -.5zM212.4 402l4.9 .2l-.2 4.7l-4.9 -.2zM206.6 411.2l2.5 .1l-.2 4.7l-2.5 -.1zM232.9 412.5l5.2 .3l-.2 4.7l-5.2 -.3zM247.1 412.7l13.1 2l-.7 4.6l-13.1 -2zM263.7 406.5l5.7 -.9l.8 5.2l-5.7 .9zM277.8 415l4.2 -.7l.8 5.2l-4.2 .7zM318.4 406.2l10.8 -4.7l1.9 4.3l-10.8 4.7zM319.4 410.8l7.2 -3.1l1.9 4.3l-7.2 3.1zM322.4 414.6l4.6 -2l1.9 4.3l-4.6 2zM38.2 427.3l.4 3.4l-3.7 .5l-.4 -3.4zM34.3 426.6l.5 4.2l-3.7 .5l-.5 -4.2zM29.9 421.6l.8 6.3l-3.7 .5l-.8 -6.3zM49.6 427l.1 3.4l-3.6 .1l-.1 -3.4zM115.8 421.1l5.3 .9l-.9 5.2l-5.3 -.9zM148.7 425.9l3 .5l-1 6.1l-3 -.5zM220.1 416.9l2.7 .3l-.8 6.3l-2.7 -.3zM231.8 424.8l5.1 .7l-.8 6.3l-5.1 -.7zM264.9 418.9l3.6 .2l-.3 4.1l-3.6 -.2zM15.4 432.3l3.7 -1l1.2 4.4l-3.7 1zM11.9 442.7l2.4 -.6l1.2 4.4l-2.4 .6zM57.9 442.6l.2 3.4l-6.2 .3l-.2 -3.4zM143.7 431.2l2.5 .2l-.3 4.7l-2.5 -.2zM146.2 431.4l6.1 .5l-.3 4.7l-6.1 -.5zM143.2 440.7l2.9 .2l-.3 4.7l-2.9 -.2zM196 441.7l6.5 .8l-.6 5l-6.5 -.8zM234.2 432.2l3.3 .6l-.9 4.8l-3.3 -.6zM222.8 440l2.9 .5l-.9 4.8l-2.9 -.5zM247.3 439.1l5.5 1l-.8 4.6l-5.5 -1zM256.9 440.8l3.9 .7l-.8 4.6l-3.9 -.7zM297.9 429l1.8 5l-4.9 1.8l-1.8 -5zM328.6 439.1l5.9 -2.3l1.7 4.3l-5.9 2.3z" fill="#dcdcdc" stroke="#ffffff" stroke-width=".9"/><path d="M-8 -12.1L.1 -8.1L8 -3.9L15.9 .4L23.8 4.8L31.6 9.3L39.4 13.8L47.1 18.4L54.9 22.8L62.8 27.3L70.7 31.6L78.6 35.8L86.7 39.8L94.8 43.6L103.1 47.3L111.4 50.7L119.8 53.9L128.3 57L136.8 59.8L145.4 62.6L154 65.2L162.6 67.8L171.2 70.4L179.8 73L188.4 75.6L197 78.3L205.6 81.1L214.1 84L222.6 87L231.1 90L239.5 93.2L247.9 96.4L256.3 99.6L264.9 102.1L273.8 103.7L282.8 104.1L291.8 103.5L300.6 101.8L309.2 99.1L317.8 96.4M-8 -.9L0 3.2L8 7.4L15.9 11.7L23.8 16L31.6 20.4L39.5 24.8L47.3 29.2L55.2 33.5L63.2 37.7L71.2 41.9L79.3 45.8L87.4 49.6L95.7 53.2L104 56.6L112.4 59.8L120.9 62.8L129.5 65.6L138.1 68.3L146.7 70.8L155.3 73.3L164 75.8L172.6 78.3L181.3 80.7L189.9 83.3L198.5 86L207.1 88.7L215.6 91.6L224.1 94.5L232.6 97.5L241.1 100.6L249.5 103.7L257.9 106.9L266.7 109.1L275.6 110.3L284.6 110.4L293.5 109.4L302.3 107.4L310.8 104.6M-8 7.6L0 11.7L8 15.8L16 20L23.9 24.3L31.8 28.6L39.7 32.9L47.6 37.1L55.6 41.3L63.6 45.4L71.7 49.4L79.9 53.2L88.1 56.8L96.4 60.2L104.8 63.4L113.3 66.4L121.9 69.2L130.5 71.9L139.1 74.4L147.8 76.9L156.4 79.3L165.1 81.6L173.8 84L182.5 86.5L191.1 89L199.7 91.6L208.3 94.3L216.8 97.2L225.4 100.1L233.8 103.1L242.3 106.1L250.8 109.2L259.3 112.1L268.1 114.1L277 115L286 114.9L294.9 113.6L303.6 111.3L312.1 108.4M-8 16.9L.1 20.9L8.1 25L16.1 29.1L24.1 33.3L32 37.5L40 41.7L48 45.8L56 49.9L64.1 53.8L72.3 57.6L80.5 61.2L88.9 64.6L97.3 67.8L105.8 70.8L114.3 73.6L122.9 76.2L131.6 78.7L140.2 81.1L148.9 83.4L157.6 85.7L166.3 88L175 90.3L183.7 92.7L192.4 95.2L201 97.8L209.6 100.5L218.1 103.3L226.7 106.1L235.2 109.1L243.7 112.1L252.1 115.1L260.7 117.8L269.6 119.5L278.5 120.1L287.5 119.7L296.4 118.1L305 115.5L313.5 112.4M-8 26.7L.1 30.6L8.2 34.6L16.2 38.7L24.2 42.8L32.2 46.8L40.3 50.9L48.4 54.9L56.5 58.8L64.7 62.5L72.9 66.1L81.3 69.4L89.7 72.6L98.2 75.6L106.7 78.4L115.3 81L124 83.5L132.7 85.8L141.4 88.1L150.1 90.3L158.9 92.5L167.6 94.7L176.3 96.9L185 99.3L193.6 101.7L202.3 104.3L210.9 106.9L219.4 109.7L228 112.5L236.5 115.4L245 118.3L253.5 121.2L262.2 123.7L271.1 125.1L280.1 125.4L289.1 124.6L297.9 122.7L306.4 119.8L314.8 116.6M-8 38.1L.1 41.9L8.3 45.8L16.3 49.8L24.4 53.7L32.5 57.6L40.6 61.5L48.8 65.3L57 69L65.3 72.5L73.7 75.8L82.1 78.9L90.6 81.9L99.2 84.6L107.8 87.2L116.5 89.6L125.2 91.8L134 94L142.7 96.1L151.5 98.2L160.2 100.3L169 102.4L177.7 104.6L186.4 106.9L195.1 109.3L203.7 111.8L212.3 114.4L220.9 117.1L229.5 119.9L238 122.7L246.6 125.5L255.1 128.3L263.9 130.4L272.8 131.5L281.8 131.5L290.7 130.3L299.4 128.1L307.8 124.9L316.2 121.5M-8 41.3L.2 45.2L8.3 49L16.4 52.9L24.5 56.8L32.6 60.7L40.8 64.6L48.9 68.3L57.2 71.9L65.5 75.3L73.9 78.6L82.4 81.7L90.9 84.5L99.5 87.2L108.1 89.7L116.8 92L125.6 94.2L134.3 96.3L143.1 98.4L151.8 100.4L160.6 102.5L169.3 104.6L178.1 106.8L186.8 109.1L195.5 111.5L204.1 114L212.7 116.6L221.3 119.3L229.9 122L238.4 124.8L247 127.6L255.6 130.3L264.3 132.4L273.3 133.3L282.3 133.2L291.2 132L299.9 129.6L308.2 126.3L316.6 122.9M-8 51.6L.2 55.3L8.4 59.1L16.5 62.9L24.7 66.7L32.9 70.4L41.1 74.1L49.4 77.6L57.7 81L66.1 84.2L74.6 87.2L83.1 90.1L91.7 92.7L100.4 95.1L109.1 97.4L117.8 99.6L126.6 101.6L135.4 103.6L144.2 105.5L153 107.5L161.7 109.5L170.5 111.5L179.3 113.7L188 115.9L196.7 118.3L205.3 120.7L213.9 123.3L222.5 125.9L231.1 128.6L239.7 131.3L248.3 134L256.9 136.6L265.7 138.4L274.7 139L283.7 138.6L292.6 137L301.2 134.4L309.5 130.9L317.8 127.4M-8 61.6L.2 65.2L8.5 68.9L16.7 72.5L24.9 76.2L33.2 79.8L41.5 83.2L49.8 86.6L58.2 89.8L66.7 92.7L75.3 95.6L83.9 98.2L92.6 100.6L101.3 102.8L110 104.9L118.8 106.9L127.6 108.8L136.4 110.6L145.2 112.5L154 114.3L162.8 116.3L171.6 118.3L180.4 120.3L189.1 122.6L197.8 124.9L206.4 127.3L215.1 129.8L223.7 132.4L232.3 135L240.9 137.6L249.6 140.2L258.2 142.7L267.1 144.2L276.1 144.5L285 143.8L293.8 141.9L302.4 139L310.6 135.4M-8 66.8L.3 70.4L8.5 74L16.8 77.6L25 81.1L33.3 84.6L41.7 88L50.1 91.2L58.5 94.3L67 97.2L75.6 99.9L84.3 102.4L93 104.7L101.7 106.8L110.5 108.8L119.3 110.7L128.1 112.5L136.9 114.3L145.8 116.1L154.6 117.9L163.4 119.8L172.1 121.8L180.9 123.8L189.6 126L198.3 128.3L207 130.7L215.7 133.2L224.3 135.8L232.9 138.3L241.5 140.9L250.2 143.4L258.9 145.8L267.8 147.1L276.8 147.4L285.7 146.4L294.5 144.4L302.9 141.4L311.2 137.7M-8 78.7L.3 82.1L8.6 85.6L16.9 89L25.3 92.4L33.7 95.7L42.1 98.8L50.6 101.8L59.1 104.6L67.8 107.2L76.4 109.6L85.2 111.8L93.9 113.9L102.7 115.8L111.5 117.6L120.4 119.3L129.2 121L138.1 122.6L146.9 124.3L155.7 126.1L164.5 127.9L173.3 129.8L182.1 131.8L190.8 134L199.6 136.2L208.2 138.5L216.9 141L225.6 143.4L234.2 145.9L242.9 148.3L251.6 150.7L260.3 152.8L269.3 153.8L278.3 153.6L287.2 152.3L295.9 150L304.2 146.6L312.4 142.8M-8 85.8L.3 89.1L8.7 92.5L17.1 95.8L25.5 99.1L33.9 102.2L42.4 105.2L50.9 108L59.5 110.7L68.2 113.1L76.9 115.4L85.7 117.4L94.5 119.4L103.3 121.1L112.1 122.8L121 124.4L129.8 126L138.7 127.6L147.5 129.2L156.4 130.9L165.2 132.7L174 134.6L182.8 136.6L191.5 138.7L200.3 140.9L209 143.2L217.6 145.6L226.3 148L235 150.4L243.7 152.7L252.4 155L261.2 156.9L270.1 157.7L279.1 157.3L288 155.9L296.6 153.3L304.9 149.8L313 145.9M-8 96.6L.4 99.8L8.8 103L17.2 106.2L25.7 109.2L34.2 112.1L42.8 114.9L51.4 117.5L60.1 119.9L68.8 122.1L77.6 124.1L86.4 125.9L95.2 127.6L104.1 129.2L113 130.7L121.9 132.2L130.7 133.7L139.6 135.2L148.5 136.7L157.3 138.3L166.2 140L175 141.9L183.8 143.8L192.5 145.9L201.3 148.1L210 150.3L218.7 152.6L227.4 154.9L236.1 157.2L244.8 159.4L253.5 161.5L262.4 163.2L271.4 163.6L280.4 163L289.2 161.2L297.7 158.3L305.9 154.6L313.9 150.5M-8 107.3L.5 110.3L8.9 113.4L17.4 116.3L26 119.1L34.6 121.8L43.2 124.3L51.9 126.7L60.6 128.8L69.4 130.8L78.3 132.6L87.1 134.2L96 135.7L104.9 137.1L113.8 138.5L122.7 139.8L131.6 141.2L140.4 142.6L149.3 144L158.2 145.6L167 147.3L175.9 149.1L184.6 151L193.4 153L202.2 155.1L210.9 157.3L219.6 159.5L228.4 161.7L237.1 163.8L245.8 165.9L254.6 167.9L263.5 169.2L272.5 169.4L281.5 168.5L290.2 166.4L298.7 163.3L306.7 159.3L314.7 155.1M-8 115.4L.5 118.3L9 121.2L17.6 124L26.2 126.7L34.8 129.2L43.5 131.5L52.3 133.6L61.1 135.6L69.9 137.4L78.7 139L87.6 140.5L96.5 141.8L105.4 143.1L114.3 144.4L123.2 145.6L132.1 146.9L141 148.2L149.9 149.7L158.8 151.2L167.6 152.8L176.5 154.6L185.3 156.5L194.1 158.4L202.8 160.5L211.6 162.6L220.3 164.7L229.1 166.8L237.8 168.9L246.6 170.9L255.4 172.8L264.3 173.9L273.3 173.9L282.3 172.8L291 170.6L299.4 167.3L307.3 163.1L315.3 158.9M-8 127.3L.6 130L9.2 132.7L17.8 135.2L26.5 137.6L35.2 139.8L44 141.9L52.8 143.7L61.6 145.4L70.5 146.9L79.4 148.3L88.3 149.6L97.2 150.7L106.1 151.9L115.1 153L124 154.1L132.9 155.3L141.8 156.5L150.7 157.9L159.6 159.3L168.5 160.9L177.3 162.6L186.1 164.4L194.9 166.4L203.7 168.3L212.5 170.3L221.2 172.4L230 174.4L238.8 176.4L247.6 178.3L256.4 180.1L265.3 181.1L274.3 180.9L283.2 179.6L291.9 177.2L300.2 173.7L308.1 169.4L316 165M-8 133.5L.6 136.1L9.2 138.6L17.9 141L26.6 143.3L35.4 145.4L44.2 147.3L53 149L61.9 150.5L70.8 151.9L79.7 153.2L88.6 154.3L97.6 155.4L106.5 156.4L115.4 157.5L124.4 158.5L133.3 159.7L142.2 160.9L151.1 162.2L160 163.6L168.9 165.2L177.7 166.9L186.5 168.6L195.3 170.5L204.1 172.5L212.9 174.4L221.7 176.5L230.4 178.5L239.2 180.5L248 182.3L256.8 184.1L265.8 185L274.8 184.8L283.7 183.3L292.3 180.8L300.6 177.3L308.5 172.9L316.3 168.5M-8 141.4L.7 143.9L9.3 146.3L18.1 148.5L26.8 150.6L35.6 152.5L44.5 154.2L53.3 155.7L62.2 157.1L71.1 158.3L80.1 159.4L89 160.4L98 161.4L106.9 162.3L115.9 163.3L124.8 164.3L133.7 165.3L142.7 166.5L151.6 167.8L160.5 169.2L169.3 170.7L178.2 172.3L187 174.1L195.8 176L204.6 177.9L213.4 179.9L222.1 182L230.9 184L239.7 185.9L248.5 187.8L257.3 189.5L266.3 190.3L275.3 189.9L284.2 188.4L292.8 185.8L301 182.2L308.9 177.8L316.7 173.3M-8 151.1L.7 153.4L9.4 155.5L18.2 157.5L27 159.4L35.9 161L44.8 162.5L53.7 163.8L62.6 165L71.5 166L80.5 166.9L89.4 167.8L98.4 168.6L107.4 169.4L116.3 170.3L125.3 171.2L134.2 172.2L143.1 173.4L152.1 174.6L160.9 176.1L169.8 177.6L178.6 179.3L187.4 181.2L196.2 183.1L205 185.1L213.8 187.1L222.6 189.1L231.3 191.1L240.1 193L249 194.8L257.8 196.5L266.8 197.1L275.8 196.6L284.6 195L293.2 192.3L301.4 188.6L309.2 184.1L317 179.6M-8 159.2L.8 161.3L9.5 163.2L18.4 165.1L27.2 166.7L36.1 168.1L45 169.4L53.9 170.6L62.9 171.6L71.8 172.5L80.8 173.3L89.7 174.1L98.7 174.9L107.7 175.7L116.6 176.6L125.6 177.5L134.5 178.6L143.4 179.8L152.3 181.1L161.2 182.6L170.1 184.3L178.9 186L187.7 187.9L196.5 189.9L205.2 191.9L214 193.9L222.8 195.9L231.6 197.8L240.4 199.7L249.2 201.5L258.1 203.1L267 203.6L276 203L284.9 201.3L293.4 198.5L301.6 194.7L309.4 190.2L317.2 185.7M-8 166.8L.8 168.7L9.6 170.5L18.5 172.1L27.3 173.6L36.2 175L45.2 176.2L54.1 177.2L63 178.2L72 179L81 179.8L89.9 180.6L98.9 181.4L107.9 182.3L116.8 183.2L125.8 184.2L134.7 185.3L143.6 186.6L152.5 188L161.4 189.5L170.2 191.2L179 193L187.8 195L196.6 196.9L205.4 199L214.1 201L222.9 203L231.7 204.9L240.5 206.7L249.3 208.4L258.2 209.9L267.2 210.4L276.2 209.7L285 207.9L293.5 205.1L301.7 201.2L309.4 196.7L317.2 192.1M-8 174.9L.8 176.8L9.7 178.5L18.5 180L27.4 181.4L36.3 182.7L45.2 183.8L54.2 184.8L63.1 185.7L72.1 186.6L81.1 187.3L90 188.1L99 188.9L108 189.8L116.9 190.8L125.8 191.8L134.8 193L143.7 194.4L152.5 195.8L161.4 197.5L170.2 199.2L179 201.1L187.8 203L196.6 205.1L205.4 207.1L214.1 209.1L222.9 211L231.7 212.9L240.5 214.7L249.4 216.3L258.3 217.8L267.3 218.2L276.2 217.4L285 215.5L293.5 212.6L301.7 208.7L309.4 204.2L317.2 199.6M-8 184L.8 185.7L9.7 187.4L18.6 188.8L27.5 190.2L36.4 191.3L45.3 192.4L54.3 193.3L63.2 194.2L72.2 195L81.2 195.8L90.1 196.6L99.1 197.4L108 198.3L117 199.4L125.9 200.5L134.8 201.8L143.7 203.2L152.6 204.7L161.4 206.4L170.2 208.3L179 210.2L187.8 212.2L196.6 214.2L205.3 216.2L214.1 218.2L222.9 220.1L231.7 221.9L240.6 223.6L249.4 225.1L258.3 226.5L267.3 226.8L276.3 226L285.1 224.1L293.6 221.1L301.7 217.2L309.4 212.6L317.1 208M-8 193.5L.8 195.1L9.7 196.7L18.6 198.1L27.5 199.3L36.4 200.4L45.4 201.4L54.3 202.3L63.3 203.1L72.3 203.9L81.2 204.7L90.2 205.5L99.2 206.4L108.1 207.4L117 208.4L126 209.7L134.9 211L143.7 212.5L152.6 214.2L161.4 215.9L170.2 217.8L179 219.8L187.8 221.8L196.5 223.8L205.3 225.8L214.1 227.8L222.9 229.6L231.7 231.4L240.6 233L249.5 234.4L258.4 235.7L267.4 236L276.3 235L285.1 233L293.6 230L301.7 226.1L309.4 221.4L317.1 216.8M-8 200.9L.9 202.5L9.7 204L18.6 205.3L27.6 206.5L36.5 207.5L45.4 208.5L54.4 209.3L63.4 210.1L72.3 210.9L81.3 211.7L90.3 212.6L99.2 213.5L108.2 214.5L117.1 215.6L126 216.9L134.9 218.3L143.7 219.9L152.6 221.6L161.4 223.4L170.2 225.4L179 227.4L187.7 229.4L196.5 231.4L205.3 233.4L214.1 235.3L222.9 237.1L231.7 238.8L240.6 240.3L249.5 241.7L258.4 242.9L267.4 243.1L276.4 242.1L285.1 240.1L293.6 237L301.7 233L309.4 228.4L317.1 223.8M-8 208.2L.9 209.7L9.8 211.1L18.7 212.4L27.6 213.5L36.5 214.5L45.5 215.4L54.5 216.2L63.4 217L72.4 217.8L81.4 218.6L90.3 219.5L99.3 220.4L108.2 221.5L117.1 222.7L126 224.1L134.9 225.5L143.7 227.2L152.6 228.9L161.4 230.8L170.2 232.8L178.9 234.8L187.7 236.8L196.5 238.8L205.3 240.8L214.1 242.6L222.9 244.4L231.7 246L240.6 247.5L249.5 248.8L258.4 250L267.4 250.1L276.4 249L285.1 246.9L293.6 243.9L301.7 239.9L309.4 235.2L317.1 230.6M-8 217.8L.9 219.2L9.8 220.5L18.7 221.7L27.6 222.8L36.6 223.7L45.6 224.6L54.5 225.4L63.5 226.1L72.5 226.9L81.4 227.8L90.4 228.7L99.3 229.7L108.2 230.9L117.1 232.2L126 233.6L134.9 235.2L143.7 236.9L152.5 238.7L161.3 240.6L170.1 242.6L178.9 244.7L187.6 246.7L196.4 248.7L205.2 250.6L214 252.3L222.9 254L231.8 255.5L240.6 256.9L249.6 258.2L258.5 259.3L267.5 259.3L276.4 258.2L285.2 256.1L293.6 253L301.7 249L309.4 244.3L317.1 239.7M-8 227.6L.9 229L9.8 230.2L18.7 231.3L27.7 232.3L36.6 233.2L45.6 234L54.6 234.8L63.5 235.6L72.5 236.4L81.5 237.3L90.4 238.3L99.3 239.4L108.3 240.6L117.1 242L126 243.5L134.9 245.2L143.7 246.9L152.5 248.8L161.3 250.8L170 252.8L178.8 254.9L187.6 256.8L196.4 258.8L205.2 260.6L214 262.3L222.9 263.9L231.8 265.4L240.7 266.7L249.6 267.8L258.5 268.8L267.5 268.8L276.5 267.7L285.2 265.5L293.6 262.4L301.7 258.4L309.4 253.7L317.2 249.1M-8 233.9L.9 235.2L9.8 236.4L18.8 237.4L27.7 238.3L36.7 239.2L45.6 240L54.6 240.8L63.6 241.6L72.5 242.4L81.5 243.3L90.4 244.4L99.4 245.5L108.3 246.8L117.1 248.2L126 249.8L134.8 251.5L143.7 253.4L152.4 255.3L161.2 257.3L170 259.3L178.8 261.3L187.5 263.3L196.3 265.2L205.2 267L214 268.7L222.9 270.2L231.8 271.6L240.7 272.8L249.6 273.9L258.6 274.9L267.6 274.8L276.5 273.7L285.2 271.5L293.7 268.3L301.7 264.3L309.4 259.7L317.2 255.1M-8 242.2L.9 243.4L9.8 244.5L18.8 245.5L27.7 246.4L36.7 247.2L45.7 248L54.6 248.8L63.6 249.6L72.6 250.5L81.5 251.5L90.4 252.6L99.4 253.8L108.3 255.2L117.1 256.7L126 258.3L134.8 260.1L143.6 262L152.4 263.9L161.2 266L169.9 268L178.7 270L187.5 271.9L196.3 273.8L205.1 275.5L214 277.1L222.9 278.5L231.8 279.9L240.7 281L249.6 282L258.6 283L267.6 282.9L276.5 281.7L285.2 279.5L293.7 276.4L301.7 272.4L309.5 267.8L317.3 263.2M-8 250.5L.9 251.6L9.9 252.7L18.8 253.6L27.8 254.4L36.7 255.2L45.7 256L54.7 256.8L63.6 257.7L72.6 258.6L81.5 259.6L90.4 260.8L99.4 262.1L108.2 263.5L117.1 265.1L125.9 266.8L134.7 268.7L143.5 270.6L152.3 272.6L161.1 274.6L169.9 276.6L178.6 278.6L187.4 280.5L196.2 282.3L205.1 283.9L214 285.5L222.9 286.8L231.8 288.1L240.7 289.2L249.7 290.1L258.6 291L267.6 290.9L276.5 289.7L285.3 287.5L293.7 284.4L301.8 280.4L309.5 275.9L317.3 271.3M-8 258.7L.9 259.8L9.9 260.8L18.8 261.7L27.8 262.5L36.8 263.3L45.7 264L54.7 264.9L63.6 265.8L72.6 266.7L81.5 267.8L90.4 269.1L99.3 270.4L108.2 271.9L117.1 273.6L125.9 275.4L134.7 277.3L143.5 279.2L152.2 281.3L161 283.3L169.8 285.3L178.6 287.2L187.4 289.1L196.2 290.8L205.1 292.4L213.9 293.8L222.9 295.1L231.8 296.3L240.7 297.3L249.7 298.2L258.6 299.1L267.6 298.9L276.6 297.7L285.3 295.5L293.7 292.4L301.8 288.5L309.6 284L317.4 279.5M-8 268.4L.9 269.5L9.9 270.4L18.9 271.2L27.8 272L36.8 272.8L45.7 273.6L54.7 274.5L63.7 275.4L72.6 276.4L81.5 277.6L90.4 278.9L99.3 280.4L108.2 282L117 283.7L125.8 285.6L134.6 287.5L143.4 289.5L152.1 291.6L160.9 293.6L169.7 295.5L178.5 297.4L187.3 299.2L196.2 300.8L205 302.3L213.9 303.7L222.9 304.9L231.8 306L240.7 306.9L249.7 307.8L258.7 308.6L267.7 308.4L276.6 307.2L285.3 305.1L293.8 302L301.9 298.1L309.7 293.6L317.5 289.2M-8 277.4L.9 278.4L9.9 279.3L18.9 280.1L27.8 280.9L36.8 281.7L45.8 282.5L54.7 283.4L63.7 284.4L72.6 285.5L81.5 286.8L90.4 288.2L99.3 289.7L108.1 291.4L116.9 293.2L125.7 295.1L134.5 297.1L143.3 299.1L152 301.1L160.8 303.1L169.6 305L178.4 306.9L187.3 308.6L196.1 310.1L205 311.5L213.9 312.8L222.8 313.9L231.8 314.9L240.7 315.8L249.7 316.7L258.7 317.5L267.7 317.3L276.6 316.1L285.3 314L293.8 310.9L301.9 307.1L309.8 302.7L317.7 298.3M-8 285.8L1 286.7L9.9 287.5L18.9 288.3L27.8 289.1L36.8 289.9L45.8 290.8L54.7 291.7L63.7 292.8L72.6 294L81.5 295.3L90.4 296.8L99.2 298.4L108 300.1L116.8 302L125.6 303.9L134.4 306L143.2 308L151.9 310L160.7 311.9L169.5 313.8L178.4 315.6L187.2 317.2L196.1 318.7L205 320L213.9 321.2L222.8 322.3L231.8 323.2L240.8 324.1L249.7 324.9L258.7 325.7L267.7 325.5L276.6 324.3L285.4 322.2L293.8 319.3L302 315.5L309.9 311.1L317.8 306.8M-8 295.9L1 296.7L9.9 297.5L18.9 298.3L27.9 299.1L36.8 300L45.8 300.9L54.7 301.9L63.6 303L72.5 304.3L81.4 305.7L90.3 307.3L99.1 309L107.9 310.8L116.7 312.8L125.5 314.8L134.3 316.8L143.1 318.8L151.8 320.8L160.6 322.7L169.4 324.5L178.3 326.2L187.2 327.7L196 329.1L205 330.3L213.9 331.4L222.8 332.4L231.8 333.3L240.8 334.1L249.7 334.9L258.7 335.7L267.7 335.5L276.6 334.4L285.4 332.4L293.9 329.5L302.1 325.7L310 321.5L318 317.3M-8 300.9L1 301.7L9.9 302.5L18.9 303.3L27.9 304.1L36.8 305L45.8 305.9L54.7 307L63.6 308.2L72.5 309.5L81.4 311L90.3 312.6L99.1 314.3L107.9 316.2L116.7 318.1L125.5 320.1L134.2 322.2L143 324.2L151.8 326.1L160.6 328L169.4 329.8L178.3 331.4L187.1 332.9L196 334.2L205 335.4L213.9 336.5L222.8 337.4L231.8 338.3L240.8 339.1L249.7 339.9L258.7 340.7L267.7 340.6L276.6 339.5L285.4 337.5L293.9 334.6L302.1 330.9L310.1 326.7M-8 311.7L1 312.5L9.9 313.3L18.9 314.1L27.9 314.9L36.8 315.9L45.7 316.9L54.7 318L63.6 319.3L72.5 320.7L81.3 322.3L90.2 324L99 325.8L107.8 327.6L116.6 329.6L125.4 331.6L134.1 333.6L142.9 335.6L151.7 337.5L160.5 339.3L169.4 341L178.2 342.5L187.1 343.9L196 345.1L205 346.2L213.9 347.2L222.9 348.1L231.8 348.9L240.8 349.7L249.8 350.5L258.7 351.3L267.7 351.2L276.7 350.2L285.5 348.3L294 345.5L302.3 341.9L310.3 337.7M-8 318.1L1 318.9L9.9 319.7L18.9 320.5L27.9 321.4L36.8 322.3L45.8 323.3L54.7 324.4L63.6 325.6L72.5 327L81.4 328.5L90.2 330.1L99 331.9L107.9 333.7L116.6 335.7L125.4 337.7L134.2 339.7L143 341.6L151.8 343.5L160.6 345.3L169.5 346.9L178.3 348.4L187.2 349.7L196.2 350.9L205.1 351.9L214 352.9L223 353.8L232 354.6L240.9 355.3L249.9 356.1L258.9 357L267.9 356.9L276.8 355.9L285.6 354L294.2 351.2L302.4 347.6L310.4 343.5M-8 326.9L1 327.3L10 327.8L19 328.3L27.9 328.9L36.9 329.6L45.9 330.4L54.8 331.3L63.8 332.5L72.7 333.7L81.6 335.2L90.4 336.8L99.2 338.5L108.1 340.3L116.8 342.2L125.6 344.2L134.4 346.2L143.2 348.1L152 350L160.8 351.7L169.7 353.2L178.6 354.6L187.5 355.9L196.4 357L205.4 358.1L214.3 359L223.3 359.8L232.3 360.6L241.2 361.4L250.2 362.2L259.1 363L268.1 362.9L277.1 362L285.9 360.1L294.5 357.3L302.7 353.8L310.8 349.8M-8 331.7L1 332L10 332.2L19 332.5L28 333L37 333.6L45.9 334.3L54.9 335.2L63.8 336.2L72.7 337.5L81.6 338.9L90.5 340.4L99.3 342.1L108.1 343.9L116.9 345.8L125.7 347.8L134.5 349.8L143.3 351.7L152.1 353.5L161 355.2L169.8 356.7L178.7 358.1L187.6 359.3L196.6 360.4L205.5 361.4L214.5 362.3L223.4 363.1L232.4 363.9L241.4 364.7L250.3 365.5L259.3 366.4L268.3 366.3L277.2 365.3L286 363.4L294.6 360.7L302.9 357.2L311 353.2M-8 339.7L1 339.5L10 339.5L19 339.5L28 339.7L37 340.1L46 340.7L54.9 341.4L63.9 342.4L72.8 343.5L81.7 344.9L90.6 346.4L99.4 348L108.3 349.8L117.1 351.7L125.8 353.7L134.6 355.6L143.4 357.5L152.3 359.3L161.1 360.9L170 362.4L178.9 363.7L187.8 364.9L196.7 365.9L205.7 366.9L214.7 367.7L223.6 368.5L232.6 369.3L241.5 370.1L250.5 371L259.5 371.8L268.5 371.8L277.4 370.8L286.2 369L294.8 366.3L303.1 362.8L311.2 358.8M-8 347.1L1 346.6L10 346.3L19 346.1L28 346.1L37 346.3L46 346.7L54.9 347.3L63.9 348.2L72.8 349.3L81.7 350.5L90.6 352L99.5 353.6L108.3 355.4L117.1 357.2L125.9 359.2L134.7 361.1L143.5 362.9L152.3 364.6L161.2 366.2L170.1 367.6L179 368.9L187.9 370.1L196.9 371.1L205.8 372L214.8 372.8L223.7 373.6L232.7 374.4L241.7 375.2L250.6 376.1L259.6 376.9L268.6 376.9L277.5 376L286.4 374.2L295 371.5L303.3 368.1L311.4 364.2M-8 358.2L.9 357.2L9.9 356.4L18.9 355.8L27.9 355.5L36.9 355.5L45.9 355.7L54.9 356.1L63.8 356.9L72.8 357.8L81.7 359L90.6 360.4L99.5 361.9L108.3 363.6L117.1 365.4L125.9 367.3L134.7 369.2L143.6 371L152.4 372.6L161.3 374.1L170.2 375.5L179.1 376.7L188 377.7L197 378.7L205.9 379.6L214.9 380.4L223.9 381.2L232.8 382L241.8 382.8L250.7 383.7L259.7 384.6L268.7 384.6L277.7 383.8L286.5 382L295.1 379.4L303.4 376L311.6 372.2M-8 368.1L.9 366.8L9.8 365.6L18.8 364.7L27.7 364.1L36.7 363.8L45.7 363.8L54.7 364.1L63.7 364.7L72.7 365.5L81.6 366.6L90.5 367.9L99.4 369.3L108.3 371L117.1 372.7L125.9 374.6L134.7 376.4L143.5 378.1L152.4 379.7L161.3 381.2L170.2 382.4L179.1 383.6L188 384.6L197 385.5L206 386.4L214.9 387.2L223.9 388L232.9 388.8L241.8 389.6L250.8 390.6L259.7 391.5L268.7 391.6L277.7 390.8L286.5 389.1L295.2 386.6L303.5 383.2L311.7 379.4M-8 375.5L.8 373.9L9.7 372.4L18.6 371.2L27.6 370.4L36.6 369.9L45.6 369.8L54.6 370L63.6 370.4L72.6 371.2L81.5 372.2L90.4 373.4L99.3 374.8L108.2 376.4L117 378.1L125.8 380L134.6 381.8L143.5 383.4L152.3 385L161.2 386.3L170.1 387.6L179.1 388.7L188 389.7L197 390.6L205.9 391.4L214.9 392.2L223.9 393L232.8 393.8L241.8 394.7L250.7 395.6L259.7 396.6L268.7 396.8L277.6 396L286.5 394.4L295.1 391.9L303.5 388.6L311.7 384.8M-8 387.8L.7 385.7L9.5 383.7L18.4 382.2L27.3 381L36.3 380.3L45.3 379.9L54.3 379.8L63.3 380.1L72.3 380.7L81.2 381.5L90.1 382.6L99 383.9L107.9 385.4L116.8 387.1L125.6 388.8L134.4 390.6L143.3 392.2L152.2 393.6L161.1 394.9L170 396.1L178.9 397.1L187.9 398.1L196.8 398.9L205.8 399.7L214.8 400.5L223.7 401.3L232.7 402.2L241.7 403.1L250.6 404.1L259.5 405.2L268.5 405.4L277.5 404.7L286.4 403.2L295 400.8L303.4 397.6L311.6 393.9M-8 394.5L.7 392.1L9.4 389.9L18.2 388.2L27.1 386.8L36.1 385.9L45.1 385.4L54.1 385.2L63.1 385.4L72 385.8L81 386.6L90 387.6L98.9 388.9L107.8 390.3L116.6 391.9L125.4 393.6L134.3 395.3L143.1 396.9L152 398.3L160.9 399.5L169.9 400.7L178.8 401.7L187.8 402.6L196.7 403.4L205.7 404.2L214.7 405L223.6 405.8L232.6 406.7L241.5 407.6L250.5 408.7L259.4 409.8L268.4 410.1L277.4 409.5L286.3 408L294.9 405.7L303.4 402.5L311.6 398.8M-8 401.9L.6 399.2L9.2 396.7L18 394.7L26.9 393.2L35.8 392.1L44.8 391.4L53.8 391.1L62.8 391.1L71.8 391.5L80.8 392.1L89.7 393.1L98.6 394.2L107.5 395.6L116.4 397.1L125.2 398.8L134.1 400.5L143 402L151.9 403.3L160.8 404.6L169.7 405.7L178.7 406.6L187.6 407.5L196.6 408.3L205.5 409.1L214.5 409.9L223.5 410.7L232.4 411.6L241.4 412.6L250.3 413.7L259.2 414.9L268.2 415.2L277.2 414.7L286.1 413.3L294.8 411L303.2 407.8L311.4 404.2M-8 411.1L.5 408.1L9 405.3L17.7 403L26.6 401.2L35.5 399.8L44.4 398.9L53.4 398.4L62.4 398.3L71.4 398.5L80.4 399.1L89.3 399.9L98.3 400.9L107.2 402.2L116.1 403.6L124.9 405.3L133.8 406.9L142.7 408.3L151.6 409.6L160.5 410.8L169.4 411.9L178.4 412.8L187.3 413.7L196.3 414.5L205.3 415.3L214.2 416.1L223.2 416.9L232.1 417.8L241.1 418.8L250 420L258.9 421.3L267.9 421.7L276.9 421.2L285.8 419.9L294.5 417.7L303 414.6L311.2 411M-8 420.9L.4 417.6L8.8 414.4L17.4 411.8L26.2 409.8L35 408.2L44 407L52.9 406.3L61.9 406L70.9 406.1L79.9 406.4L88.9 407.1L97.8 408L106.8 409.2L115.7 410.5L124.5 412.1L133.4 413.6L142.3 415L151.2 416.3L160.1 417.4L169.1 418.4L178 419.3L187 420.2L195.9 421L204.9 421.7L213.9 422.6L222.8 423.4L231.8 424.4L240.7 425.5L249.6 426.6L258.5 428L267.5 428.5L276.5 428.2L285.4 426.9L294.2 424.8L302.7 421.8L310.9 418.2M-8 431.5L.4 428.3L8.8 425.1L17.4 422.4L26.1 420.1L34.9 418.2L43.8 416.8L52.7 415.8L61.7 415.3L70.7 415.2L79.7 415.4L88.7 415.9L97.7 416.6L106.6 417.7L115.5 418.9L124.4 420.4L133.3 421.8L142.2 423.2L151.1 424.4L160 425.4L169 426.4L178 427.2L186.9 428L195.9 428.8L204.8 429.6L213.8 430.5L222.8 431.4L231.7 432.4L240.6 433.5L249.5 434.8L258.4 436.2L267.4 436.8L276.4 436.5L285.3 435.4L294.1 433.3L302.6 430.3L310.9 426.8M-8 443.1L.4 439.9L8.9 436.9L17.5 434.3L26.2 432.1L35 430.2L43.9 428.9L52.9 427.9L61.9 427.3L70.9 427L79.9 427.1L88.9 427.5L97.8 428.2L106.8 429.1L115.7 430.3L124.6 431.6L133.5 433L142.4 434.2L151.3 435.3L160.3 436.3L169.3 437.2L178.2 438L187.2 438.8L196.1 439.6L205.1 440.4L214.1 441.3L223 442.3L231.9 443.3L240.9 444.6L249.8 445.9L258.6 447.5M-8 448.6L.4 445.5L8.9 442.5L17.6 439.9L26.3 437.7L35.1 436L44 434.6L53 433.6L61.9 433L70.9 432.8L79.9 432.9L88.9 433.2L97.9 433.9L106.9 434.8L115.8 435.9L124.7 437.2L133.6 438.5L142.5 439.7L151.5 440.7L160.4 441.7L169.4 442.5L178.3 443.3L187.3 444.1L196.3 444.9L205.2 445.7L214.2 446.7L223.1 447.7M-6.7 -8L-10.8 0M5.7 -8L1.5 -.1L-2.8 7.9L-6.9 15.9L-10.9 23.9M16.5 -8L12.1 -.1L7.7 7.7L3.4 15.6L-.7 23.6L-4.8 31.7L-8.7 39.8M21.6 -8L17.1 -.2L12.7 7.7L8.3 15.5L4.1 23.5L0 31.5L-4 39.6L-7.8 47.7L-11.6 55.9M28.1 -8L23.6 -.2L19.1 7.6L14.6 15.4L10.4 23.3L6.2 31.3L2.1 39.3L-1.8 47.4L-5.7 55.6L-9.4 63.8M39.8 -8L35.2 -.3L30.6 7.4L26 15.2L21.6 23.1L17.3 31L13.2 38.9L9.1 47L5.2 55.1L1.4 63.2L-2.3 71.4L-5.9 79.7L-9.4 88M45.9 -8L41.2 -.3L36.5 7.4L31.9 15.1L27.5 22.9L23.1 30.8L18.9 38.8L14.8 46.8L10.8 54.9L7 63L3.2 71.2L-.4 79.4L-3.9 87.7L-7.2 96.1L-10.5 104.5M49.1 -8L44.4 -.3L39.7 7.3L35.1 15.1L30.6 22.9L26.2 30.8L22 38.7L17.9 46.7L13.9 54.8L10 62.9L6.2 71.1L2.6 79.3L-.9 87.6L-4.3 95.9L-7.5 104.3L-10.7 112.8M59.9 -8L55.2 -.4L50.4 7.3L45.8 15L41.2 22.8L36.8 30.6L32.5 38.5L28.3 46.5L24.3 54.5L20.4 62.6L16.6 70.8L12.9 79L9.4 87.3L6 95.6L2.7 104L-.4 112.4L-3.4 120.9L-6.3 129.5L-9 138.1L-11.5 146.7M71.8 -8L67.1 -.4L62.3 7.3L57.6 15L53.1 22.7L48.7 30.6L44.4 38.5L40.2 46.4L36.1 54.5L32.2 62.6L28.4 70.7L24.7 79L21.2 87.2L17.8 95.6L14.6 104L11.5 112.4L8.5 120.9L5.7 129.5L3.1 138.1L.6 146.7L-1.7 155.4L-3.8 164.2L-5.8 173L-7.6 181.8L-9.3 190.6L-11.1 199.4M78.1 -8L73.4 -.4L68.6 7.3L64 15L59.5 22.8L55 30.6L50.8 38.5L46.6 46.5L42.5 54.5L38.6 62.6L34.9 70.8L31.2 79L27.7 87.3L24.4 95.7L21.1 104.1L18.1 112.6L15.2 121.1L12.4 129.6L9.9 138.3L7.5 146.9L5.2 155.7L3.2 164.4L1.3 173.2L-.4 182.1L-2.1 190.9L-3.7 199.8L-5.2 208.6L-6.8 217.5L-8.2 226.4L-9.6 235.3L-10.9 244.2M86 -8L81.2 -.3L76.5 7.3L71.9 15L67.4 22.8L63 30.7L58.8 38.6L54.6 46.6L50.6 54.7L46.8 62.8L43 71L39.5 79.3L36 87.6L32.7 96L29.6 104.4L26.6 112.9L23.8 121.4L21.1 130L18.6 138.7L16.3 147.4L14.2 156.1L12.3 164.9L10.6 173.8L9 182.6L7.5 191.5L6 200.4L4.6 209.2L3.2 218.1L1.9 227.1L.7 236L-.5 244.9L-1.6 253.8L-2.6 262.8L-3.6 271.7L-4.6 280.7L-5.5 289.6L-6.3 298.6L-7.2 307.5L-8 316.5L-8.8 325.5L-9.3 334.4L-9.4 343.4L-9.1 352.4L-8.4 361.4L-7.3 370.3L-5.9 379.2L-4.1 388L-1.9 396.8L.5 405.5L3.2 414L6.1 422.6L9 431.1L11.6 439.7M94.4 -8L89.8 -.3L85.1 7.4L80.5 15.1L76.1 23L71.8 30.9L67.6 38.8L63.5 46.9L59.6 55L55.8 63.1L52.2 71.4L48.7 79.6L45.3 88L42.1 96.4L39.1 104.9L36.2 113.4L33.5 122L31 130.6L28.6 139.3L26.5 148.1L24.5 156.8L22.7 165.7L21.2 174.5L19.8 183.4L18.4 192.3L17.1 201.2L15.9 210.1L14.7 219.1L13.6 228L12.5 236.9L11.5 245.9L10.6 254.8L9.6 263.8L8.8 272.7L7.9 281.7L7.1 290.7L6.3 299.6L5.5 308.6L4.7 317.6L4 326.5L3.4 335.5L3.3 344.5L3.6 353.5L4.2 362.5L5.2 371.4L6.4 380.3L8 389.2L9.8 398L11.8 406.8L14 415.5L16.3 424.2L18.7 432.9L20.9 441.6M103.3 -8L98.7 -.3L94.1 7.5L89.6 15.3L85.2 23.2L81 31.1L76.9 39.1L73 47.2L69.1 55.3L65.4 63.5L61.9 71.8L58.5 80.2L55.3 88.6L52.2 97L49.3 105.5L46.6 114.1L44.1 122.8L41.7 131.4L39.5 140.2L37.5 149L35.8 157.8L34.2 166.6L32.9 175.5L31.6 184.5L30.4 193.4L29.3 202.3L28.3 211.2L27.3 220.2L26.3 229.1L25.4 238.1L24.5 247L23.7 256L22.9 265L22.1 273.9L21.3 282.9L20.5 291.9L19.7 300.8L18.9 309.8L18.1 318.8L17.2 327.7L16.6 336.7L16.4 345.7L16.4 354.7L16.8 363.7L17.4 372.7L18.3 381.6L19.4 390.6L20.8 399.4L22.3 408.3L24.1 417.1L26 425.9L27.8 434.7L29.5 443.6M110.4 -8L105.9 -.2L101.4 7.6L97 15.4L92.7 23.3L88.5 31.3L84.5 39.4L80.7 47.5L76.9 55.7L73.3 64L69.9 72.3L66.6 80.7L63.5 89.1L60.6 97.6L57.8 106.2L55.2 114.8L52.8 123.5L50.6 132.2L48.6 141L46.8 149.8L45.2 158.6L43.8 167.5L42.6 176.4L41.5 185.4L40.4 194.3L39.5 203.3L38.5 212.2L37.6 221.2L36.8 230.1L35.9 239.1L35.1 248L34.3 257L33.5 266L32.8 274.9L32 283.9L31.2 292.9L30.3 301.8L29.4 310.8L28.5 319.7L27.6 328.7L26.9 337.7L26.5 346.7L26.3 355.7L26.4 364.7L26.8 373.6L27.4 382.6L28.2 391.6L29.2 400.5L30.4 409.5L31.8 418.3L33.3 427.2L34.8 436.1L36.2 445M117.4 -8L112.9 -.2L108.5 7.7L104.2 15.6L100 23.5L96 31.6L92.1 39.7L88.3 47.8L84.7 56.1L81.2 64.4L77.9 72.8L74.7 81.2L71.7 89.7L68.9 98.2L66.3 106.8L63.9 115.5L61.6 124.2L59.5 133L57.7 141.8L56 150.6L54.5 159.5L53.3 168.4L52.2 177.3L51.3 186.3L50.3 195.2L49.5 204.2L48.6 213.2L47.8 222.1L47 231.1L46.2 240.1L45.4 249L44.6 258L43.8 266.9L43 275.9L42.2 284.9L41.3 293.8L40.3 302.8L39.4 311.7L38.4 320.7L37.3 329.6L36.5 338.6L35.9 347.6L35.5 356.5L35.4 365.5L35.5 374.5L35.7 383.5L36.2 392.5L36.9 401.5L37.8 410.5L38.9 419.4L40.1 428.3L41.3 437.2L42.4 446.2M126.5 -8L122.2 -.1L117.9 7.8L113.7 15.8L109.6 23.8L105.7 31.9L101.9 40.1L98.3 48.3L94.8 56.6L91.5 65L88.4 73.4L85.4 81.9L82.6 90.4L79.9 99.1L77.5 107.7L75.2 116.4L73.2 125.2L71.3 134L69.6 142.8L68.1 151.7L66.8 160.6L65.7 169.5L64.8 178.5L64 187.5L63.2 196.4L62.4 205.4L61.6 214.4L60.8 223.3L60 232.3L59.2 241.2L58.4 250.2L57.5 259.2L56.7 268.1L55.7 277.1L54.8 286L53.7 295L52.7 303.9L51.5 312.8L50.4 321.8L49.1 330.7L48.1 339.6L47.3 348.6L46.7 357.6L46.2 366.5L45.9 375.5L45.9 384.5L46 393.5L46.3 402.5L46.8 411.5L47.5 420.5L48.4 429.5L49.1 438.4L49.9 447.4M135.9 -8L131.7 0L127.5 7.9L123.5 16L119.6 24.1L115.8 32.2L112.2 40.5L108.7 48.8L105.4 57.2L102.2 65.6L99.3 74.1L96.4 82.6L93.8 91.2L91.3 99.9L89.1 108.6L87 117.3L85.1 126.1L83.4 135L81.8 143.8L80.5 152.7L79.3 161.7L78.4 170.6L77.6 179.6L76.8 188.5L76 197.5L75.2 206.5L74.4 215.4L73.6 224.4L72.7 233.4L71.9 242.3L71 251.3L70 260.2L69 269.2L67.9 278.1L66.8 287L65.6 296L64.4 304.9L63.1 313.8L61.7 322.7L60.3 331.6L59.1 340.5L58 349.4L57.1 358.4L56.4 367.3L55.8 376.3L55.4 385.3L55.2 394.3L55.2 403.3L55.3 412.3L55.6 421.3L56.1 430.3L56.6 439.3M142.2 -8L138.1 0L134 8L130.1 16.1L126.2 24.2L122.6 32.5L119 40.7L115.7 49.1L112.4 57.5L109.4 66L106.5 74.5L103.8 83.1L101.3 91.7L98.9 100.4L96.7 109.1L94.7 117.9L92.9 126.7L91.3 135.6L89.8 144.4L88.6 153.4L87.5 162.3L86.6 171.2L85.8 180.2L85 189.2L84.2 198.1L83.4 207.1L82.5 216.1L81.7 225L80.8 234L79.8 242.9L78.8 251.9L77.8 260.8L76.6 269.7L75.5 278.7L74.2 287.6L72.9 296.5L71.6 305.4L70.2 314.3L68.7 323.1L67.2 332L65.8 340.9L64.6 349.8L63.6 358.8L62.6 367.7L61.9 376.7L61.3 385.7L60.9 394.7L60.6 403.7L60.6 412.7L60.7 421.7L61 430.7L61.3 439.7M149.8 -8L145.8 .1L141.8 8.1L138 16.3L134.3 24.4L130.7 32.7L127.3 41L124 49.4L120.9 57.9L118 66.4L115.2 74.9L112.6 83.6L110.2 92.2L107.9 100.9L105.8 109.7L103.9 118.5L102.2 127.3L100.6 136.2L99.3 145.1L98 154L97 162.9L96.1 171.9L95.3 180.9L94.5 189.8L93.6 198.8L92.7 207.7L91.8 216.7L90.9 225.6L89.9 234.6L88.8 243.5L87.7 252.4L86.5 261.4L85.3 270.3L84 279.2L82.6 288.1L81.2 297L79.7 305.8L78.1 314.7L76.5 323.6L74.9 332.4L73.4 341.3L72.1 350.2L70.8 359.1L69.7 368L68.8 377L68 386L67.3 394.9L66.9 403.9L66.6 412.9L66.5 421.9L66.5 430.9L66.6 439.9M160.9 -8L157 .1L153.2 8.2L149.4 16.4L145.9 24.7L142.4 33L139.2 41.4L136 49.8L133.1 58.3L130.3 66.9L127.6 75.5L125.1 84.1L122.8 92.8L120.7 101.6L118.7 110.4L116.8 119.2L115.2 128L113.7 136.9L112.3 145.8L111.1 154.7L110 163.6L109 172.6L108.2 181.5L107.3 190.5L106.3 199.4L105.3 208.4L104.3 217.3L103.2 226.3L102 235.2L100.8 244.1L99.5 253L98.1 261.9L96.7 270.8L95.2 279.7L93.7 288.5L92.1 297.4L90.4 306.2L88.7 315.1L87 323.9L85.2 332.7L83.6 341.6L82 350.4L80.5 359.3L79.2 368.2L78 377.1L76.9 386.1L76 395L75.3 404L74.7 413L74.3 422L74.1 431L73.9 440M166.8 -8L163 .1L159.2 8.3L155.5 16.5L152 24.8L148.6 33.2L145.4 41.6L142.4 50L139.4 58.5L136.7 67.1L134.1 75.7L131.6 84.4L129.4 93.1L127.2 101.8L125.3 110.6L123.5 119.4L121.8 128.3L120.3 137.1L118.9 146L117.7 155L116.5 163.9L115.5 172.8L114.6 181.8L113.6 190.7L112.6 199.7L111.5 208.6L110.4 217.5L109.2 226.5L107.9 235.4L106.6 244.3L105.2 253.2L103.8 262L102.3 270.9L100.7 279.8L99.1 288.6L97.4 297.5L95.7 306.3L93.9 315.1L92.1 323.9L90.3 332.8L88.6 341.6L86.9 350.4L85.4 359.3L83.9 368.2L82.6 377.1L81.4 386L80.4 394.9L79.5 403.9L78.8 412.9L78.3 421.9L77.9 430.9L77.6 439.9M175.6 -8L171.8 .2L168.1 8.4L164.5 16.6L161 24.9L157.7 33.3L154.6 41.7L151.6 50.2L148.7 58.8L146 67.3L143.4 76L141 84.6L138.8 93.3L136.7 102.1L134.7 110.9L132.9 119.7L131.2 128.5L129.6 137.4L128.2 146.3L126.9 155.2L125.7 164.1L124.6 173L123.6 182L122.5 190.9L121.4 199.8L120.2 208.8L118.9 217.7L117.6 226.6L116.2 235.5L114.7 244.4L113.2 253.2L111.7 262.1L110 270.9L108.4 279.8L106.7 288.6L104.9 297.4L103.1 306.3L101.2 315.1L99.3 323.9L97.4 332.7L95.6 341.5L93.8 350.3L92.2 359.1L90.6 368L89.1 376.9L87.7 385.8L86.5 394.7L85.5 403.6L84.6 412.6L83.9 421.6L83.3 430.5L82.8 439.5M182.3 -8L178.6 .2L174.9 8.4L171.3 16.7L167.9 25L164.7 33.4L161.5 41.8L158.5 50.3L155.7 58.9L153 67.4L150.5 76.1L148 84.7L145.8 93.5L143.7 102.2L141.7 111L139.8 119.8L138.1 128.6L136.5 137.5L135 146.4L133.6 155.2L132.4 164.2L131.2 173.1L130.1 182L128.9 190.9L127.7 199.9L126.4 208.8L125 217.7L123.6 226.5L122.2 235.4L120.6 244.3L119 253.2L117.4 262L115.7 270.8L113.9 279.7L112.1 288.5L110.3 297.3L108.4 306.1L106.5 314.9L104.6 323.7L102.7 332.5L100.8 341.3L98.9 350.1L97.2 358.9L95.5 367.8L93.9 376.6L92.5 385.5L91.1 394.4L90 403.3L88.9 412.3L88.1 421.2L87.4 430.2L86.8 439.2M193.9 -8L190.3 .2L186.6 8.4L183.1 16.7L179.7 25.1L176.4 33.5L173.3 41.9L170.3 50.4L167.5 58.9L164.8 67.5L162.2 76.1L159.8 84.8L157.4 93.5L155.2 102.2L153.2 111L151.2 119.8L149.4 128.6L147.7 137.4L146.1 146.3L144.6 155.1L143.2 164L141.9 172.9L140.6 181.8L139.3 190.7L137.9 199.6L136.5 208.5L135 217.4L133.4 226.3L131.8 235.1L130.1 244L128.4 252.8L126.6 261.6L124.8 270.4L123 279.2L121.1 288L119.2 296.8L117.2 305.6L115.2 314.4L113.3 323.2L111.3 332L109.3 340.7L107.4 349.5L105.5 358.3L103.7 367.1L101.9 376L100.3 384.8L98.8 393.7L97.5 402.6L96.2 411.5L95.2 420.5L94.3 429.4L93.5 438.4L92.7 447.3M200.3 -8L196.6 .2L192.9 8.4L189.4 16.7L186 25.1L182.7 33.4L179.6 41.9L176.6 50.4L173.7 58.9L171 67.5L168.4 76.1L165.9 84.7L163.5 93.4L161.3 102.1L159.2 110.9L157.2 119.6L155.3 128.4L153.5 137.3L151.8 146.1L150.2 155L148.7 163.8L147.3 172.7L146 181.6L144.6 190.5L143.1 199.4L141.6 208.3L140 217.1L138.4 226L136.7 234.8L135 243.7L133.2 252.5L131.4 261.3L129.5 270.1L127.6 278.9L125.7 287.7L123.8 296.5L121.8 305.3L119.8 314L117.8 322.8L115.8 331.6L113.8 340.4L111.8 349.1L109.9 357.9L108 366.7L106.2 375.6L104.5 384.4L102.9 393.2L101.5 402.1L100.1 411L99 420L98 428.9L97 437.9L96.2 446.8M209.2 -8L205.5 .2L201.8 8.4L198.2 16.7L194.8 25L191.5 33.4L188.3 41.8L185.3 50.3L182.4 58.8L179.5 67.3L176.9 75.9L174.3 84.6L171.9 93.2L169.5 101.9L167.3 110.6L165.2 119.4L163.2 128.2L161.3 137L159.5 145.8L157.8 154.6L156.2 163.5L154.7 172.3L153.3 181.2L151.8 190.1L150.2 199L148.6 207.8L146.9 216.7L145.2 225.5L143.4 234.3L141.6 243.1L139.8 251.9L137.9 260.7L136 269.5L134 278.3L132 287.1L130.1 295.9L128.1 304.7L126 313.4L124 322.2L122 331L120 339.7L117.9 348.5L116 357.3L114 366.1L112.2 374.9L110.4 383.7L108.7 392.5L107.1 401.4L105.6 410.3L104.3 419.2L103.1 428.1L102.1 437L101.1 446M220.8 -8L217 .2L213.3 8.4L209.7 16.6L206.1 24.9L202.8 33.2L199.5 41.6L196.3 50L193.3 58.5L190.4 67L187.6 75.6L184.9 84.2L182.3 92.8L179.9 101.5L177.5 110.1L175.3 118.9L173.1 127.6L171.1 136.4L169.1 145.1L167.3 154L165.6 162.8L163.9 171.6L162.3 180.5L160.7 189.3L159 198.2L157.3 207L155.5 215.8L153.7 224.7L151.8 233.5L149.9 242.3L148 251.1L146.1 259.8L144.1 268.6L142.1 277.4L140.1 286.2L138.1 294.9L136 303.7L134 312.5L132 321.2L130 330L128 338.8L126 347.6L124 356.4L122.1 365.1L120.1 373.9L118.2 382.7L116.4 391.5L114.7 400.4L113.1 409.2L111.6 418.1L110.2 427L109 435.9L107.8 444.8M229.2 -8L225.4 .2L221.6 8.3L217.9 16.5L214.3 24.7L210.8 33.1L207.5 41.4L204.2 49.8L201.1 58.2L198.1 66.7L195.2 75.2L192.4 83.8L189.7 92.4L187.2 101L184.7 109.7L182.3 118.4L180.1 127.1L177.9 135.8L175.9 144.6L173.9 153.4L172.1 162.2L170.4 171L168.7 179.8L167 188.7L165.2 197.5L163.4 206.3L161.6 215.1L159.7 223.9L157.8 232.7L155.8 241.5L153.9 250.3L151.9 259.1L149.9 267.9L147.9 276.6L145.9 285.4L143.8 294.2L141.8 302.9L139.8 311.7L137.8 320.5L135.8 329.3L133.8 338L131.8 346.8L129.9 355.6L128 364.4L126.1 373.2L124.3 382L122.5 390.8L120.7 399.7L119 408.5L117.4 417.3L115.9 426.2L114.5 435.1L113.2 444M237.2 -8L233.3 .1L229.4 8.2L225.6 16.4L222 24.6L218.4 32.9L214.9 41.2L211.6 49.5L208.4 57.9L205.3 66.4L202.3 74.9L199.4 83.4L196.6 91.9L193.9 100.5L191.4 109.2L188.9 117.8L186.6 126.5L184.3 135.2L182.2 144L180.1 152.7L178.2 161.5L176.3 170.3L174.6 179.2L172.8 188L171 196.8L169.1 205.6L167.2 214.4L165.3 223.2L163.4 232L161.4 240.8L159.4 249.5L157.4 258.3L155.4 267.1L153.4 275.9L151.3 284.6L149.3 293.4L147.3 302.2L145.3 310.9L143.3 319.7L141.3 328.5L139.4 337.3L137.4 346.1L135.6 354.9L133.7 363.7L131.9 372.5L130.1 381.3L128.4 390.1L126.7 399L125 407.8L123.4 416.7L121.9 425.6L120.4 434.4L119 443.3M247 -8L243 .1L238.9 8.1L235 16.2L231.2 24.4L227.5 32.6L224 40.8L220.5 49.1L217.2 57.5L213.9 65.9L210.8 74.3L207.8 82.8L204.9 91.3L202.1 99.9L199.4 108.5L196.8 117.1L194.4 125.8L192 134.4L189.7 143.1L187.6 151.9L185.5 160.7L183.6 169.4L181.8 178.3L179.9 187.1L178 195.9L176.1 204.7L174.1 213.4L172.2 222.2L170.2 231L168.2 239.8L166.2 248.5L164.1 257.3L162.1 266.1L160.1 274.9L158.1 283.6L156.1 292.4L154.1 301.2L152.1 310L150.1 318.7L148.2 327.5L146.3 336.3L144.4 345.1L142.6 353.9L140.8 362.8L139.1 371.6L137.4 380.4L135.7 389.3L134.1 398.1L132.6 407L131.1 415.9L129.7 424.8L128.4 433.7L127.1 442.6M254.1 -8L250.4 .2L246.3 8.2L242.3 16.3L238.4 24.4L234.6 32.6L230.9 40.8L227.4 49L223.9 57.4L220.6 65.7L217.4 74.1L214.3 82.6L211.3 91.1L208.4 99.6L205.6 108.1L202.9 116.7L200.4 125.4L197.9 134L195.6 142.7L193.3 151.4L191.2 160.2L189.2 168.9L187.3 177.7L185.4 186.5L183.5 195.3L181.5 204.1L179.5 212.9L177.5 221.7L175.5 230.4L173.5 239.2L171.5 248L169.5 256.8L167.4 265.5L165.4 274.3L163.4 283.1L161.4 291.8L159.5 300.6L157.5 309.4L155.6 318.2L153.7 327L151.9 335.8L150.1 344.6L148.3 353.5L146.6 362.3L144.9 371.1L143.3 380L141.7 388.9L140.2 397.7L138.8 406.6L137.4 415.5L136 424.4L134.8 433.3L133.6 442.2M259.8 -8L256.6 .4L253.1 8.7L249.3 16.9L245.3 24.9L241.4 33.1L237.7 41.2L234 49.5L230.5 57.7L227.1 66.1L223.8 74.4L220.6 82.8L217.5 91.3L214.5 99.8L211.6 108.3L208.9 116.9L206.2 125.5L203.7 134.1L201.3 142.8L199 151.5L196.8 160.2L194.8 169L192.8 177.8L190.9 186.6L188.9 195.4L186.9 204.1L184.9 212.9L182.9 221.7L180.9 230.4L178.8 239.2L176.8 248L174.8 256.8L172.8 265.5L170.8 274.3L168.8 283.1L166.9 291.9L165 300.7L163.1 309.5L161.2 318.3L159.4 327.1L157.6 335.9L155.8 344.7L154.1 353.6L152.5 362.4L150.9 371.3L149.4 380.1L147.9 389L146.5 397.9L145.1 406.8L143.8 415.7L142.6 424.6L141.4 433.6L140.3 442.5M271.1 -8L269 .7L266.6 9.4L264 18.1L261.3 26.6L258.4 35.2L255.3 43.6L252 52L248.5 60.3L244.9 68.5L241.4 76.8L238 85.1L234.7 93.5L231.5 101.9L228.5 110.4L225.6 118.9L222.8 127.5L220.1 136.1L217.6 144.7L215.2 153.4L212.9 162.1L210.8 170.8L208.8 179.6L206.7 188.4L204.7 197.1L202.7 205.9L200.7 214.7L198.7 223.5L196.7 232.2L194.7 241L192.7 249.8L190.8 258.6L188.9 267.4L187.1 276.2L185.2 285L183.5 293.8L181.7 302.7L180 311.5L178.4 320.3L176.8 329.2L175.3 338.1L173.8 347L172.4 355.8L171 364.7L169.7 373.6L168.5 382.6L167.3 391.5L166.2 400.4L165.2 409.4L164.2 418.3L163.2 427.3L162.3 436.2L161.4 445.2M280.6 -8L279.4 .9L278 9.8L276.5 18.7L275.1 27.6L273.5 36.4L271.9 45.3L270.3 54.1L268.6 63L266.8 71.8L265 80.6L263.1 89.4L261.1 98.2L259.1 107L257 115.7L254.8 124.5L252.5 133.2L250.2 141.9L247.7 150.5L245.4 159.2L243.3 168L241.3 176.7L239.5 185.5L237.6 194.3L235.8 203.2L234 212L232.3 220.8L230.6 229.7L228.9 238.5L227.4 247.4L225.8 256.2L224.4 265.1L223 274L221.6 282.9L220.3 291.8L219.1 300.7L218 309.7L216.9 318.6L215.8 327.5L214.8 336.5L213.9 345.4L213 354.4L212.1 363.3L211.3 372.3L210.5 381.3L209.7 390.2L208.9 399.2L208.1 408.2L207.3 417.1L206.5 426.1L205.7 435L204.8 444M284.9 -8L284.1 1L283.2 9.9L282.3 18.9L281.4 27.8L280.5 36.8L279.6 45.7L278.8 54.7L278 63.7L277.3 72.6L276.6 81.6L276 90.6L275.6 99.6L275.2 108.6L275 117.6L275 126.6L275.2 135.6L275.6 144.6L276.3 153.5L277.4 162.5L278.8 171.4L280.5 180.2L282.6 188.9L285.1 197.6L287.9 206.2L291 214.6L294.7 222.8L298.7 230.9L303.2 238.7L307.8 246.4L312.4 254.1L317 261.8M291.5 -8L291.4 1L291.2 10L291.1 19L291.2 28L291.3 37L291.6 46L292.1 55L292.8 64L293.8 72.9L295 81.8L296.6 90.7L298.6 99.5L301 108.1L303.8 116.7L306.9 125.1L310.2 133.5L313.8 141.7L317.6 149.9M301.3 -8L302 1L302.7 9.9L303.6 18.9L304.5 27.8L305.7 36.8L306.9 45.7L308.4 54.6L310 63.4L311.9 72.2L314 81L316.3 89.7M310.7 -8L311.4 1L312 10L312.8 18.9L313.8 27.9L314.9 36.8L316.2 45.7L317.8 54.6" fill="none" stroke="#ffffff" stroke-width=".55" stroke-opacity=".6"/><path d="M179 195.4l7.1 1.6l-1 4.3l-7.1 -1.6zM125.2 376.2l4.3 1.2l-2.3 8l-4.3 -1.2zM287.2 121l5.4 -.9l.8 4.7l-5.4 .9zM213.8 96.9l7 2.8l-1.9 4.9l-7 -2.8zM18 378.2l6.1 -.7l.9 8.4l-6.1 .7zM36.2 331.8l7.6 .2l-.1 4.1l-7.6 -.2zM42.1 174.4l6.6 1.3l-1.3 6.8l-6.6 -1.3zM143.5 230.7l7.2 2.1l-2.4 8.4l-7.2 -2.1zM160.6 164.7l4.5 .6l-.6 4.8l-4.5 -.6zM141.1 258.6l4.3 1.3l-1.9 6.3l-4.3 -1.3zM263.8 370.4l8.1 -.8l.6 6.3l-8.1 .8zM21.8 418.4l6 -.9l.6 4l-6 .9zM224 284.9l5 .7l-.6 4.3l-5 -.7zM62.8 231.3l7.4 1.1l-.9 5.8l-7.4 -1.1zM264.1 422.7l4.2 .1l-.1 6.4l-4.2 -.1zM104.6 313.2l4.5 1.4l-1.9 6.2l-4.5 -1.4zM117 33.2l6.2 2.6l-1.9 4.5l-6.2 -2.6zM265.6 415.6l7.5 -.6l.6 7.4l-7.5 .6zM195.4 229.1l5.9 1.3l-1.2 5.6l-5.9 -1.3zM3.1 315.9l7 .9l-.7 5.7l-7 -.9zM221.5 205.2l6.7 .9l-.6 4.4l-6.7 -.9zM246 119.5l7.2 2.7l-2.1 5.6l-7.2 -2.7zM262.1 27.6l4.6 1.1l-1.4 6.1l-4.6 -1.1zM4.5 176.6l4.3 1l-2 8.4l-4.3 -1zM7.2 265.8l7.6 .1l-.1 4.4l-7.6 -.1zM66.1 328.3l4.5 .9l-.9 4.7l-4.5 -.9zM139.7 229.9l4.5 .8l-.8 4.5l-4.5 -.8zM155 176.2l8 1.7l-1.6 7.5l-8 -1.7zM198.1 144.4l6.6 2.2l-1.6 4.9l-6.6 -2.2zM115.5 262l7.6 1l-1 7.5l-7.6 -1zM13.6 122.2l6.4 1.7l-1.4 5.4l-6.4 -1.7zM226.9 55.1l4.7 1.5l-2 6l-4.7 -1.5zM247 260.1l8.5 .9l-.6 5.4l-8.5 -.9zM147.6 359l5.8 1.6l-1.9 6.9l-5.8 -1.6zM133.4 32.9l6.9 2.9l-2.1 4.9l-6.9 -2.9zM298.2 389.2l4.4 -1.6l1.5 4.2l-4.4 1.6zM104.7 119.5l6.4 1.3l-1 5.2l-6.4 -1.3zM66.8 331.8l8.3 1.9l-1.9 7.9l-8.3 -1.9zM73.9 148.5l6.1 .8l-.6 4.3l-6.1 -.8zM46.6 369.5l4.8 -.1l.1 5.2l-4.8 .1zM216.2 218.7l5.4 1.2l-1.5 6.7l-5.4 -1.2zM265 52l6.6 1.1l-.8 5.2l-6.6 -1.1zM281.2 337.1l4.8 -1.9l2.9 7.5l-4.8 1.9zM52.6 110.8l8.3 2.6l-2.5 8.1l-8.3 -2.6zM85.1 382.2l7.1 1.5l-1 4.6l-7.1 -1.5zM124 371.6l4 .7l-1.4 8.6l-4 -.7zM262.6 241.4l4.1 -.3l.5 6l-4.1 .3zM276.1 301.1l4.4 -.8l1.1 5.9l-4.4 .8zM218.6 190.9l5.2 .8l-1.4 8.5l-5.2 -.8zM120.3 199.4l6.9 1.3l-1.5 8.1l-6.9 -1.3zM174.8 344.9l7.7 .6l-.4 5.5l-7.7 -.6zM274.5 312.2l4.9 -1.3l1.8 6.5l-4.9 1.3zM95.4 52l7.3 2.3l-1.6 5.1l-7.3 -2.3zM115.8 140.6l8.3 .5l-.3 5l-8.3 -.5zM286.6 210l4.9 -2.1l3.2 7.5l-4.9 2.1zM115.5 212.2l6.9 1.6l-.9 3.9l-6.9 -1.6zM136.2 257.5l8 1.1l-1 7.2l-8 -1.1zM206.6 146.6l6.5 1.2l-1.4 7.8l-6.5 -1.2zM41.7 90.7l8.4 3.1l-2.4 6.4l-8.4 -3.1zM228 404.3l8.8 1.7l-1 5.1l-8.8 -1.7zM297.6 186.8l3.4 -2.2l4.1 6.3l-3.4 2.2zM13.8 217.7l8.5 1.1l-.6 4.4l-8.5 -1.1zM251.8 231.8l8.7 -.1l.1 8.6l-8.7 .1zM73 311.3l4.7 .9l-1.3 6.4l-4.7 -.9zM25.8 156.2l8.2 1.5l-1.6 8.8l-8.2 -1.5zM26.9 61.4l3.8 2l-3.3 6.6l-3.8 -2zM122.4 266.4l8.8 1.9l-1.1 5.3l-8.8 -1.9zM166.1 98.3l4.8 1.2l-1.9 7.7l-4.8 -1.2zM280.3 142.3l5.8 -.9l1.1 7.5l-5.8 .9zM178.7 422.8l7.4 .5l-.4 6.3l-7.4 -.5zM283 230.6l7 -2.6l1.4 3.7l-7 2.6zM150.4 374.2l5.2 1l-1.3 6.9l-5.2 -1zM232.1 299.6l6.5 .4l-.3 5l-6.5 -.4zM177.6 -.9l6.7 2.6l-2.9 7.6l-6.7 -2.6zM195.5 83l8.2 3.3l-2.8 6.9l-8.2 -3.3zM84.4 13.5l6.3 3.9l-4.5 7.1l-6.3 -3.9zM280.5 68.3l6 .1l-.1 9l-6 -.1zM287.6 165.2l4.6 -1.5l2.4 7.1l-4.6 1.5zM232.5 330.6l8.9 1.1l-1.1 8.6l-8.9 -1.1zM100.1 207l4.4 .4l-.5 6l-4.4 -.4zM107.1 349.2l4.3 .8l-1.1 6l-4.3 -.8zM100.8 292.7l6.7 1.7l-2.1 8.2l-6.7 -1.7zM229.7 385.7l8.7 .4l-.4 7l-8.7 -.4zM68.8 270.4l7 1.5l-1.1 4.9l-7 -1.5zM175.3 3.4l5 1.9l-2.6 6.7l-5 -1.9zM180.8 240.8l8.7 1.2l-.6 4l-8.7 -1.2zM85.1 352.5l5.7 1.3l-1.4 5.9l-5.7 -1.3zM290.2 353l7.6 -3.5l2.8 6.1l-7.6 3.5zM119.2 40.1l5.7 2.2l-1.5 3.8l-5.7 -2.2zM123.7 5.3l6 3.2l-2.7 5.2l-6 -3.2zM264 388.2l5.9 .1l-.1 6.9l-5.9 -.1zM295.7 118.6l5.2 -1.4l1.2 4.7l-5.2 1.4zM156.3 97.2l8.2 1.6l-1.7 8.3l-8.2 -1.6zM174.1 157.6l7.9 2.2l-2.3 8.4l-7.9 -2.2zM79.7 18.4l4.3 2.6l-3.5 5.8l-4.3 -2.6zM154.1 374.6l5.7 .9l-1 6.5l-5.7 -.9zM249.4 246.5l6.2 1.1l-1.1 5.8l-6.2 -1.1zM135.6 10.2l7.6 3.8l-4 8l-7.6 -3.8zM108.2 282.2l4.5 .8l-.8 4.7l-4.5 -.8zM71.8 216l7.5 .6l-.6 6.9l-7.5 -.6zM254.8 150l4.8 .8l-1.3 8.2l-4.8 -.8zM25.6 291.8l4.3 .3l-.6 8l-4.3 -.3zM171.9 326.8l7.2 1l-1.3 8.7l-7.2 -1zM62.1 327.7l8.7 .8l-.6 7.1l-8.7 -.8zM167.6 95.6l6.1 1.3l-1.7 8.3l-6.1 -1.3zM290.8 282.4l6.2 -3.3l2.3 4.3l-6.2 3.3zM266 281.5l8.5 -.9l.8 7.8l-8.5 .9zM93.9 118.4l4.5 1.1l-1 4.5l-4.5 -1.1zM118.8 82.8l5.3 1.3l-1.2 5.1l-5.3 -1.3zM167.5 414.5l6.6 1l-1.3 8.8l-6.6 -1zM170.2 225l4.6 .9l-1.3 6.6l-4.6 -.9zM1.9 163.6l4.2 .8l-1.3 6.3l-4.2 -.8zM39.5 393.3l6.3 -.2l.2 5.6l-6.3 .2zM30.8 188.7l6.7 .4l-.3 4.7l-6.7 -.4zM45.6 367.8l7.2 .3l-.4 8.3l-7.2 -.3zM172.8 192.2l5.6 .9l-1 6.4l-5.6 -.9zM284.6 199.7l4.9 -1.5l2.4 7.9l-4.9 1.5zM54.3 379l8.5 .1l-.1 6.7l-8.5 -.1zM4.8 280.8l6.7 .8l-1 8.4l-6.7 -.8zM261.4 296.2l7.4 -.9l1.1 8.7l-7.4 .9zM296.7 252.3l4.6 -2.5l3.9 7.2l-4.6 2.5zM76 204.2l4.8 .6l-1 7.8l-4.8 -.6zM208.7 104l4.5 1.4l-2 6.4l-4.5 -1.4zM75.3 392.2l7.1 .9l-.8 6l-7.1 -.9zM61.2 328.5l4.6 .8l-1.1 6.8l-4.6 -.8zM114.8 413.9l8.9 1.1l-.9 7.1l-8.9 -1.1zM70.2 346.6l5.8 .8l-.8 5.8l-5.8 -.8zM102.7 50.3l5.3 1.9l-2 5.6l-5.3 -1.9zM11 342.3l8.5 .3l-.2 4.8l-8.5 -.3zM210.5 329.4l8.1 .7l-.5 5.9l-8.1 -.7zM247.7 315.2l6.2 .6l-.6 6.2l-6.2 -.6zM42.4 55.4l6.2 3.2l-3.2 6.2l-6.2 -3.2zM23.4 337.5l4.3 -.2l.3 5.4l-4.3 .2zM52.5 279.7l7.6 1.4l-1.5 8.3l-7.6 -1.4zM267.8 93.2l6.6 .9l-.7 4.8l-6.6 -.9zM74.3 392.4l7.9 1.3l-1.3 7.8l-7.9 -1.3zM84.2 389.3l6.8 1.1l-1.3 8.1l-6.8 -1.1zM167.6 16.8l8.1 2.7l-2.3 6.8l-8.1 -2.7zM148.6 166.4l8.7 .6l-.4 5.5l-8.7 -.6zM297.8 370.9l4.2 -2.4l3.6 6.4l-4.2 2.4zM255.6 175.5l5.1 .8l-1.1 7l-5.1 -.8zM189.1 37.5l6.6 2.9l-2.4 5.3l-6.6 -2.9zM270.8 350l6.9 -1.6l1.8 7.8l-6.9 1.6zM192.7 416.7l4.6 .5l-.8 7.8l-4.6 -.5zM15.5 337.6l7.6 .8l-.5 5.1l-7.6 -.8zM212.4 335.1l6.5 .4l-.3 4.8l-6.5 -.4zM239.7 378.2l5.6 .2l-.3 8.1l-5.6 -.2zM97.7 334.4l7.2 2.1l-1.4 4.6l-7.2 -2.1zM198.2 345.9l8.8 1.1l-1 8.1l-8.8 -1.1zM94 164.7l8.2 1.4l-1.5 8.8l-8.2 -1.4zM186.8 135.4l6.3 1.2l-1.4 7.4l-6.3 -1.2zM190.4 20.3l5 2.4l-2.9 6l-5 -2.4zM253.1 228.7l5 .1l-.2 6.4l-5 -.1zM296.8 5.7l6.2 -.5l.4 5.4l-6.2 .5zM180.7 194.3l4 .8l-1.6 8.7l-4 -.8zM131.9 194.2l5.4 .5l-.5 5.4l-5.4 -.5zM276.1 321.1l5.6 -2.1l3 7.9l-5.6 2.1zM202.4 332.8l8.4 .4l-.4 7.5l-8.4 -.4zM203.1 185.8l5.9 1.5l-2 7.5l-5.9 -1.5zM139.9 80.5l8.3 1.8l-1.4 6.5l-8.3 -1.8zM131.8 285.2l5.2 1.4l-1.6 6.1l-5.2 -1.4zM195.5 226.3l7 2.2l-1.7 5.4l-7 -2.2zM295.3 361.6l6.6 -3.4l2 3.8l-6.6 3.4zM83 398.5l7.1 .9l-.9 7.3l-7.1 -.9zM298.1 223l4.3 -2.8l4.9 7.4l-4.3 2.8zM193 236.5l8.4 2.6l-2.3 7.5l-8.4 -2.6zM236.5 270.4l4.7 .5l-.5 4.8l-4.7 -.5zM106.4 75.5l6.9 2.1l-2.5 8.1l-6.9 -2.1zM228.8 159.2l5.8 1l-1.3 7.1l-5.8 -1zM216.1 295.9l5.6 1l-1.6 8.5l-5.6 -1zM215.9 194.6l6.5 2.1l-2.2 6.8l-6.5 -2.1zM192.6 110.1l7.9 2.2l-1.9 6.7l-7.9 -2.2zM184 204.7l5.7 1.7l-1.9 6.4l-5.7 -1.7zM266.8 403.4l7.3 -.3l.1 4.1l-7.3 .3zM5.8 378.1l5.9 -1.1l1.2 6.2l-5.9 1.1zM229.8 354.7l8.5 1.5l-1 5.4l-8.5 -1.5zM112.6 235.8l6.8 1.2l-.8 4.7l-6.8 -1.2zM90.5 84.8l4.1 .9l-1.5 6.8l-4.1 -.9zM214.1 277.5l7.4 1.6l-1.2 5.5l-7.4 -1.6zM267.6 290.1l5.2 -.9l1.5 8.3l-5.2 .9zM89.2 134l5.6 1.2l-1.4 6.2l-5.6 -1.2zM68.4 213.7l4.6 .4l-.4 4.7l-4.6 -.4zM117.4 127l8.2 .7l-.4 4.1l-8.2 -.7zM23.8 5.2l4.8 3l-2.8 4.5l-4.8 -3zM103.3 46.2l6 2.4l-3.2 8.1l-6 -2.4zM49.9 346.3l4.4 .6l-.7 5.3l-4.4 -.6zM215.9 219.3l5.9 1.2l-.9 4.3l-5.9 -1.2zM131 66.3l7.4 1.9l-1.3 5.1l-7.4 -1.9zM95.1 237.6l6.6 .8l-.9 7.7l-6.6 -.8zM129.4 178.2l4 .4l-.8 8.5l-4 -.4zM229.2 326.5l8.1 1.3l-1.2 7.4l-8.1 -1.3zM86.8 293.5l4.7 1.2l-2.3 8.7l-4.7 -1.2zM127.8 251.4l5.1 1.2l-1.6 6.9l-5.1 -1.2zM18.9 30.1l7.6 3.9l-1.9 3.7l-7.6 -3.9zM216.9 104l5.2 1.6l-2.3 7.5l-5.2 -1.6zM34.4 233.4l5.4 .9l-.8 5.3l-5.4 -.9zM58.2 341.5l5.3 .7l-1.2 8.7l-5.3 -.7zM52.5 380.9l5.2 .5l-.4 5.1l-5.2 -.5zM281.8 19.2l8.6 .5l-.4 6.4l-8.6 -.5zM2.7 388.5l4.4 -1.1l1.9 7.7l-4.4 1.1zM71.4 400.6l8.2 0l0 7.9l-8.2 0zM166.6 57.9l6.4 2.1l-2.6 8.1l-6.4 -2.1zM255.2 139.9l6.5 1.3l-1.1 5.8l-6.5 -1.3zM202.6 130.2l6.2 1.5l-1.8 7.6l-6.2 -1.5zM87.1 302.7l8.3 1.9l-1.1 4.8l-8.3 -1.9zM65.9 5.4l3.6 2.6l-2.8 3.9l-3.6 -2.6zM289.2 72l6.2 -.5l.6 8l-6.2 .5zM270.1 51.8l5.8 .8l-1 7l-5.8 -.8zM80.6 161.9l5.7 .8l-1.1 8.5l-5.7 -.8zM107.9 232.1l5.7 1.2l-1.5 7l-5.7 -1.2zM112 133.9l7.3 .9l-.5 4.1l-7.3 -.9zM65.4 212.9l6 .2l-.2 5.1l-6 -.2zM199 240.3l4.3 .6l-1.1 8.5l-4.3 -.6zM93.2 80.8l6.7 1.5l-1 4.5l-6.7 -1.5zM16.5 222.9l4.3 .6l-.9 6.9l-4.3 -.6zM198.9 236.5l4.6 1l-1.9 8.6l-4.6 -1zM9 297.2l4.3 .3l-.5 5.6l-4.3 -.3zM243.9 261.5l7.8 1.5l-1 5.4l-7.8 -1.5zM113.4 351.3l5.2 .8l-.8 5.5l-5.2 -.8zM247.4 294l7.3 .6l-.5 5.8l-7.3 -.6zM230.8 275.8l4.2 .8l-1.1 5.5l-4.2 -.8zM209.8 420.5l5.9 .6l-.4 4.5l-5.9 -.6zM130 220l8.5 1.3l-1.2 7.7l-8.5 -1.3zM187.2 289.8l5.5 1.3l-1.5 6.4l-5.5 -1.3zM50 143.1l5.7 1l-1.2 7.1l-5.7 -1zM1.6 109.2l8.5 2.7l-2.1 6.6l-8.5 -2.7zM45 22.4l3.6 2l-3.4 6.1l-3.6 -2zM176 139.3l8.4 1.4l-1.2 7.4l-8.4 -1.4zM58.1 174.4l8.1 .2l-.1 4.8l-8.1 -.2zM65.1 182.4l8.1 .9l-.6 5.2l-8.1 -.9zM125.6 271l6.3 1.3l-1 5l-6.3 -1.3zM85 189.6l4.4 .5l-.8 6.9l-4.4 -.5zM296.5 31l6.5 -.7l.7 6.8l-6.5 .7zM3.5 9.4l5.8 3.1l-3.2 6l-5.8 -3.1zM201.6 30.2l4.8 1.7l-1.9 5.5l-4.8 -1.7zM291.7 366.2l7.3 -2.8l2.5 6.7l-7.3 2.8zM240.4 121.4l5.4 2.3l-3.1 7.3l-5.4 -2.3zM208.9 412.3l7.6 .1l-.1 7.3l-7.6 -.1zM287.3 236.5l5.5 -2.6l2.2 4.7l-5.5 2.6zM21.8 298.7l7.4 .8l-1 8.9l-7.4 -.8zM251.8 359l7.4 .5l-.3 4.4l-7.4 -.5zM71.7 131.4l5.6 1.3l-1.5 6.6l-5.6 -1.3zM46.4 297.6l8.6 .6l-.4 5.7l-8.6 -.6zM191.7 69.3l4.6 1.4l-2.6 8.6l-4.6 -1.4zM247.6 226l4 .5l-.8 6.7l-4 -.5zM46.8 56.7l6.6 2.6l-2 4.9l-6.6 -2.6zM226 153.9l4.9 1.1l-.9 4.3l-4.9 -1.1zM147.3 147.9l7.8 .6l-.5 6.3l-7.8 -.6zM.5 132.7l7.8 2l-2 7.8l-7.8 -2zM287.3 228.3l6.7 -2.6l2.7 7l-6.7 2.6zM217.7 65.5l4.5 1.6l-1.9 5.4l-4.5 -1.6zM296.8 182.7l4.4 -2.8l2.7 4.3l-4.4 2.8zM180.9 7.5l5 1.7l-2.6 7.8l-5 -1.7zM259.6 165.5l7.7 -.5l.4 6.7l-7.7 .5zM284.3 99.2l4.6 -.2l.3 5.9l-4.6 .2zM132.6 338.4l5.6 .8l-.8 5.5l-5.6 -.8zM65.9 409.3l6.1 -.3l.4 8.3l-6.1 .3zM199.8 238.9l5 1.1l-1.8 7.8l-5 -1.1zM113.1 177.4l5.3 .9l-1.1 6.3l-5.3 -.9zM196.1 232.1l4.5 .8l-.7 4.2l-4.5 -.8z" fill="#212830" stroke="#ffffff" stroke-width=".8"/><g fill="#d8924a"><rect x="171" y="170.7" width="1.4" height="1.4"/><rect x="244" y="94.9" width="1.4" height="1.4"/><rect x="291.1" y="27.2" width="1.4" height="1.4"/><rect x="203.8" y="207.9" width="1.4" height="1.4"/><rect x="258.6" y="36.7" width="1.4" height="1.4"/><rect x="239.3" y="321.5" width="1.4" height="1.4"/><rect x="163.6" y="328.1" width="1.4" height="1.4"/><rect x="202.1" y="250.1" width="1.4" height="1.4"/><rect x="98.9" y="365.6" width="1.4" height="1.4"/><rect x="77.8" y="237.4" width="1.4" height="1.4"/><rect x="2.5" y="81.5" width="1.4" height="1.4"/><rect x="65.9" y="397.3" width="1.4" height="1.4"/><rect x="45.6" y="343.5" width="1.4" height="1.4"/><rect x="59.3" y="248.1" width="1.4" height="1.4"/><rect x="180.4" y="324.9" width="1.4" height="1.4"/><rect x="266.4" y="32.7" width="1.4" height="1.4"/><rect x="97.1" y="257.7" width="1.4" height="1.4"/><rect x="251.9" y="300.1" width="1.4" height="1.4"/><rect x="289.1" y="200.6" width="1.4" height="1.4"/><rect x="242.9" y="159.6" width="1.4" height="1.4"/><rect x="299.8" y="60" width="1.4" height="1.4"/><rect x="272.2" y="82.3" width="1.4" height="1.4"/><rect x="173.8" y="389.5" width="1.4" height="1.4"/><rect x="227.1" y="401.2" width="1.4" height="1.4"/><rect x="241.4" y="316.3" width="1.4" height="1.4"/><rect x="295.1" y="312.6" width="1.4" height="1.4"/><rect x="240.7" y="13.5" width="1.4" height="1.4"/><rect x="282.7" y="399" width="1.4" height="1.4"/><rect x="125.6" y="38.8" width="1.4" height="1.4"/><rect x="139.7" y="150.4" width="1.4" height="1.4"/><rect x="63.8" y="304.2" width="1.4" height="1.4"/><rect x="186.6" y="264.5" width="1.4" height="1.4"/><rect x="293.6" y="89.8" width="1.4" height="1.4"/><rect x="269.9" y="280.6" width="1.4" height="1.4"/><rect x="80.5" y="425.1" width="1.4" height="1.4"/><rect x="180.1" y="6.9" width="1.4" height="1.4"/><rect x="19.7" y="252.8" width="1.4" height="1.4"/><rect x="297.5" y="23.9" width="1.4" height="1.4"/><rect x="18.8" y="311.4" width="1.4" height="1.4"/><rect x="189.4" y="356" width="1.4" height="1.4"/><rect x="17.5" y="233.3" width="1.4" height="1.4"/><rect x="127.1" y="101.9" width="1.4" height="1.4"/><rect x="277.7" y="385.4" width="1.4" height="1.4"/><rect x="198.9" y="357.1" width="1.4" height="1.4"/><rect x="243.3" y="239.9" width="1.4" height="1.4"/><rect x="290.5" y="27.5" width="1.4" height="1.4"/><rect x="269.9" y="180.6" width="1.4" height="1.4"/><rect x="88.7" y="223.9" width="1.4" height="1.4"/><rect x="271.6" y="280.4" width="1.4" height="1.4"/><rect x="223.1" y="294.5" width="1.4" height="1.4"/><rect x="105.4" y="342.3" width="1.4" height="1.4"/><rect x="180.6" y="61.8" width="1.4" height="1.4"/><rect x="53.4" y="48.4" width="1.4" height="1.4"/><rect x="132.7" y="70" width="1.4" height="1.4"/><rect x="173.9" y="50.6" width="1.4" height="1.4"/><rect x="232" y="375" width="1.4" height="1.4"/><rect x="245.5" y="121.3" width="1.4" height="1.4"/><rect x="210.7" y="155.7" width="1.4" height="1.4"/><rect x="117.3" y="64.2" width="1.4" height="1.4"/><rect x="240.3" y="190.5" width="1.4" height="1.4"/><rect x="61.7" y="122.6" width="1.4" height="1.4"/><rect x="65.4" y="220.1" width="1.4" height="1.4"/><rect x="258.1" y="432.4" width="1.4" height="1.4"/><rect x="157.3" y="67.8" width="1.4" height="1.4"/><rect x="244.6" y="349.6" width="1.4" height="1.4"/><rect x="31.9" y="295.9" width="1.4" height="1.4"/><rect x="184" y="245.7" width="1.4" height="1.4"/><rect x="34.5" y="390.5" width="1.4" height="1.4"/><rect x="159.3" y="223.2" width="1.4" height="1.4"/><rect x="68.1" y="121" width="1.4" height="1.4"/><rect x="180.2" y="108.3" width="1.4" height="1.4"/><rect x="201.9" y="327.7" width="1.4" height="1.4"/><rect x="295.3" y="314.9" width="1.4" height="1.4"/><rect x="150.4" y="326.8" width="1.4" height="1.4"/><rect x="112.6" y="412.5" width="1.4" height="1.4"/><rect x="117.1" y="121" width="1.4" height="1.4"/><rect x="276" y="284.8" width="1.4" height="1.4"/><rect x="48.4" y="138.5" width="1.4" height="1.4"/><rect x="91.6" y="12.6" width="1.4" height="1.4"/><rect x="12.5" y="400.4" width="1.4" height="1.4"/><rect x="182.8" y="60.2" width="1.4" height="1.4"/><rect x="147.9" y="364" width="1.4" height="1.4"/><rect x="52.9" y="117.7" width="1.4" height="1.4"/><rect x="151.2" y="182" width="1.4" height="1.4"/><rect x="301.1" y="162.3" width="1.4" height="1.4"/><rect x="184.5" y="48.8" width="1.4" height="1.4"/><rect x="69.2" y="382.5" width="1.4" height="1.4"/><rect x="73.9" y="4.7" width="1.4" height="1.4"/><rect x="228.6" y="416.9" width="1.4" height="1.4"/><rect x="98.5" y="128.7" width="1.4" height="1.4"/><rect x="152.5" y="219.5" width="1.4" height="1.4"/><rect x="117" y="293.1" width="1.4" height="1.4"/><rect x="249.2" y="3.9" width="1.4" height="1.4"/><rect x="124.4" y="219.9" width="1.4" height="1.4"/><rect x="250.5" y="31.6" width="1.4" height="1.4"/><rect x="293.9" y="144.4" width="1.4" height="1.4"/><rect x="29.6" y="166.5" width="1.4" height="1.4"/><rect x="21.8" y="145.2" width="1.4" height="1.4"/><rect x="10.4" y="142.2" width="1.4" height="1.4"/><rect x="122.1" y="284.5" width="1.4" height="1.4"/><rect x="272.8" y="244.2" width="1.4" height="1.4"/><rect x="248" y="95.1" width="1.4" height="1.4"/><rect x="53" y="357.7" width="1.4" height="1.4"/><rect x="241.9" y="190.7" width="1.4" height="1.4"/><rect x="234.2" y="25.7" width="1.4" height="1.4"/><rect x="257.4" y="117.5" width="1.4" height="1.4"/><rect x="136.6" y="39.8" width="1.4" height="1.4"/><rect x="261.6" y="368.7" width="1.4" height="1.4"/><rect x="23.2" y="264.4" width="1.4" height="1.4"/><rect x="68.6" y="197.1" width="1.4" height="1.4"/><rect x="169.2" y="414.6" width="1.4" height="1.4"/><rect x="139.8" y="51.3" width="1.4" height="1.4"/><rect x="134" y="244.8" width="1.4" height="1.4"/><rect x="4.2" y="401" width="1.4" height="1.4"/><rect x="234.5" y="254.9" width="1.4" height="1.4"/><rect x="86.2" y="171.8" width="1.4" height="1.4"/><rect x="114.2" y="404.2" width="1.4" height="1.4"/><rect x="65.8" y="349" width="1.4" height="1.4"/><rect x="259.8" y="106.3" width="1.4" height="1.4"/><rect x="289.1" y="377.4" width="1.4" height="1.4"/><rect x="198.7" y="389.8" width="1.4" height="1.4"/><rect x="144.7" y="60.6" width="1.4" height="1.4"/><rect x="114.6" y="153.7" width="1.4" height="1.4"/><rect x="286.2" y="239" width="1.4" height="1.4"/><rect x="200.2" y="52.4" width="1.4" height="1.4"/><rect x="115.2" y="369.7" width="1.4" height="1.4"/><rect x="25.4" y="32.5" width="1.4" height="1.4"/><rect x="107.1" y="127.6" width="1.4" height="1.4"/><rect x="160.4" y="408.7" width="1.4" height="1.4"/><rect x="235.2" y="301.6" width="1.4" height="1.4"/><rect x="146.7" y="206" width="1.4" height="1.4"/><rect x="160.3" y="366.3" width="1.4" height="1.4"/><rect x="242" y="147" width="1.4" height="1.4"/><rect x="27.4" y="147.9" width="1.4" height="1.4"/><rect x="136.2" y="428.8" width="1.4" height="1.4"/><rect x="57.6" y="23.1" width="1.4" height="1.4"/><rect x="170.9" y="37.7" width="1.4" height="1.4"/><rect x="178.1" y="119.7" width="1.4" height="1.4"/><rect x="220.7" y="179.1" width="1.4" height="1.4"/><rect x="82.1" y="301.3" width="1.4" height="1.4"/><rect x="100.6" y="165.1" width="1.4" height="1.4"/><rect x="242.1" y="49.5" width="1.4" height="1.4"/><rect x="246.3" y="193.9" width="1.4" height="1.4"/><rect x="269.6" y="94.9" width="1.4" height="1.4"/><rect x="62.5" y="79.7" width="1.4" height="1.4"/><rect x="69.9" y="81.6" width="1.4" height="1.4"/><rect x="167.1" y="348.5" width="1.4" height="1.4"/><rect x="45.9" y="206.9" width="1.4" height="1.4"/><rect x="278.4" y="235.8" width="1.4" height="1.4"/><rect x="276.4" y="328.6" width="1.4" height="1.4"/><rect x="3.7" y="135.7" width="1.4" height="1.4"/><rect x="261.7" y="167" width="1.4" height="1.4"/><rect x="254.7" y="243.2" width="1.4" height="1.4"/><rect x="14.5" y="96.8" width="1.4" height="1.4"/><rect x="40.3" y="196.7" width="1.4" height="1.4"/><rect x="246.6" y="220.5" width="1.4" height="1.4"/><rect x="4.9" y="356" width="1.4" height="1.4"/><rect x="3.9" y="387.3" width="1.4" height="1.4"/><rect x="197.5" y="174.2" width="1.4" height="1.4"/><rect x="107.6" y="121.8" width="1.4" height="1.4"/><rect x="119.7" y="223" width="1.4" height="1.4"/><rect x="298.4" y="106.1" width="1.4" height="1.4"/><rect x="250.9" y="383.3" width="1.4" height="1.4"/><rect x="193.1" y="388.3" width="1.4" height="1.4"/><rect x="190.2" y="377.6" width="1.4" height="1.4"/><rect x="36.9" y="179.2" width="1.4" height="1.4"/><rect x="224.5" y="400.8" width="1.4" height="1.4"/><rect x="63.4" y="268.8" width="1.4" height="1.4"/><rect x="146.2" y="116.9" width="1.4" height="1.4"/><rect x="152.8" y="224.2" width="1.4" height="1.4"/><rect x="29.1" y="304.7" width="1.4" height="1.4"/><rect x="176" y="289.4" width="1.4" height="1.4"/><rect x="72.6" y="12.9" width="1.4" height="1.4"/><rect x="164.6" y="429.9" width="1.4" height="1.4"/><rect x="177.8" y="100.9" width="1.4" height="1.4"/><rect x="202.7" y="16.1" width="1.4" height="1.4"/><rect x="37.3" y="45.1" width="1.4" height="1.4"/><rect x="57.3" y="400.3" width="1.4" height="1.4"/><rect x="178" y="293.6" width="1.4" height="1.4"/><rect x="121.7" y="36.5" width="1.4" height="1.4"/><rect x="194.6" y="140.1" width="1.4" height="1.4"/><rect x="62.9" y="29.7" width="1.4" height="1.4"/><rect x="272.4" y="321" width="1.4" height="1.4"/><rect x="113.2" y="94.7" width="1.4" height="1.4"/><rect x="296.7" y="416.9" width="1.4" height="1.4"/><rect x="166.6" y="177.4" width="1.4" height="1.4"/><rect x="250" y="247.8" width="1.4" height="1.4"/><rect x="105.7" y="420.7" width="1.4" height="1.4"/><rect x="279.5" y="115.1" width="1.4" height="1.4"/><rect x="296.3" y="368.4" width="1.4" height="1.4"/><rect x="299.5" y="414.1" width="1.4" height="1.4"/><rect x="94.6" y="347.1" width="1.4" height="1.4"/><rect x="58.4" y="79.2" width="1.4" height="1.4"/><rect x="78.5" y="131.9" width="1.4" height="1.4"/><rect x="100.8" y="365.6" width="1.4" height="1.4"/><rect x="193.1" y="8.8" width="1.4" height="1.4"/><rect x="249.4" y="72.5" width="1.4" height="1.4"/><rect x="237.9" y="109.7" width="1.4" height="1.4"/><rect x="290.1" y="278" width="1.4" height="1.4"/><rect x="187.6" y="121.5" width="1.4" height="1.4"/><rect x="258.2" y="35.2" width="1.4" height="1.4"/><rect x="250.9" y="243.4" width="1.4" height="1.4"/><rect x="125" y="175.8" width="1.4" height="1.4"/><rect x="9.2" y="213.9" width="1.4" height="1.4"/><rect x="145.3" y="162.1" width="1.4" height="1.4"/><rect x="62.3" y="252.9" width="1.4" height="1.4"/><rect x="138" y="94.8" width="1.4" height="1.4"/><rect x="70.8" y="76.5" width="1.4" height="1.4"/><rect x="9.2" y="310.7" width="1.4" height="1.4"/><rect x="56.9" y="295.1" width="1.4" height="1.4"/><rect x="115.3" y="46.4" width="1.4" height="1.4"/><rect x="67.3" y="313.6" width="1.4" height="1.4"/><rect x="99.7" y="244" width="1.4" height="1.4"/><rect x="27.6" y="411.5" width="1.4" height="1.4"/><rect x="139.5" y="347.9" width="1.4" height="1.4"/><rect x="68.6" y="407.2" width="1.4" height="1.4"/><rect x="72" y="297.3" width="1.4" height="1.4"/><rect x="272.1" y="274.4" width="1.4" height="1.4"/><rect x="34.9" y="376.6" width="1.4" height="1.4"/><rect x="237.8" y="295.1" width="1.4" height="1.4"/><rect x="188.9" y="25.4" width="1.4" height="1.4"/><rect x="92.6" y="145.3" width="1.4" height="1.4"/><rect x="72.2" y="347.9" width="1.4" height="1.4"/><rect x="40.4" y="114.7" width="1.4" height="1.4"/><rect x="54.6" y="76.5" width="1.4" height="1.4"/><rect x="265.2" y="18.4" width="1.4" height="1.4"/><rect x="15.8" y="334" width="1.4" height="1.4"/><rect x="92.2" y="127.8" width="1.4" height="1.4"/><rect x="51.4" y="263.2" width="1.4" height="1.4"/><rect x="35.5" y="186.6" width="1.4" height="1.4"/><rect x="193.7" y="2.4" width="1.4" height="1.4"/><rect x="134.2" y="59.9" width="1.4" height="1.4"/><rect x="13.4" y="344" width="1.4" height="1.4"/><rect x="9.4" y="81.7" width="1.4" height="1.4"/><rect x="289.8" y="22.3" width="1.4" height="1.4"/><rect x="134" y="306.2" width="1.4" height="1.4"/><rect x="172.9" y="419.9" width="1.4" height="1.4"/><rect x="131" y="382.9" width="1.4" height="1.4"/><rect x="80.5" y="168.8" width="1.4" height="1.4"/><rect x="301.5" y="185.2" width="1.4" height="1.4"/><rect x="183.1" y="367.2" width="1.4" height="1.4"/><rect x="265.9" y="397.6" width="1.4" height="1.4"/><rect x="9" y="158.7" width="1.4" height="1.4"/><rect x="284.3" y="160" width="1.4" height="1.4"/><rect x="71" y="108.5" width="1.4" height="1.4"/><rect x="255.7" y="245.7" width="1.4" height="1.4"/><rect x="117.3" y="83.8" width="1.4" height="1.4"/><rect x="82.9" y="109.4" width="1.4" height="1.4"/><rect x="150.1" y="26" width="1.4" height="1.4"/><rect x="163.3" y="259.5" width="1.4" height="1.4"/><rect x="227.5" y="237.3" width="1.4" height="1.4"/><rect x="231" y="75" width="1.4" height="1.4"/><rect x="252.2" y="93.8" width="1.4" height="1.4"/><rect x="105.9" y="262.2" width="1.4" height="1.4"/><rect x="33.7" y="354" width="1.4" height="1.4"/><rect x="246.3" y="311" width="1.4" height="1.4"/><rect x="101.3" y="81" width="1.4" height="1.4"/><rect x="59.8" y="99.4" width="1.4" height="1.4"/><rect x="191.8" y="104.1" width="1.4" height="1.4"/><rect x="172" y="333.5" width="1.4" height="1.4"/><rect x="268.1" y="323.9" width="1.4" height="1.4"/><rect x="100.7" y="315.2" width="1.4" height="1.4"/><rect x="287.9" y="283.5" width="1.4" height="1.4"/><rect x="27.1" y="231.6" width="1.4" height="1.4"/><rect x="144.6" y="8.6" width="1.4" height="1.4"/><rect x="89.4" y="370.2" width="1.4" height="1.4"/><rect x="144.1" y="399.3" width="1.4" height="1.4"/><rect x="258.9" y="206" width="1.4" height="1.4"/><rect x="163.3" y="80.6" width="1.4" height="1.4"/><rect x="198.6" y="64.9" width="1.4" height="1.4"/><rect x="163.6" y="208.7" width="1.4" height="1.4"/><rect x="211.6" y="307" width="1.4" height="1.4"/><rect x="279.7" y="386.9" width="1.4" height="1.4"/><rect x="255" y="65.2" width="1.4" height="1.4"/><rect x="135.7" y="305.2" width="1.4" height="1.4"/><rect x="128.4" y="2.4" width="1.4" height="1.4"/><rect x="179.2" y="48.7" width="1.4" height="1.4"/><rect x="9.2" y="75.3" width="1.4" height="1.4"/><rect x="71" y="97.5" width="1.4" height="1.4"/><rect x="124" y="323.8" width="1.4" height="1.4"/><rect x="184.2" y="174.4" width="1.4" height="1.4"/><rect x="115.8" y="200" width="1.4" height="1.4"/><rect x="105.9" y="384.2" width="1.4" height="1.4"/><rect x="121.5" y="323.9" width="1.4" height="1.4"/><rect x="168.9" y="191.1" width="1.4" height="1.4"/><rect x="179.8" y="338.7" width="1.4" height="1.4"/><rect x="144.7" y="287.7" width="1.4" height="1.4"/><rect x="87.7" y="293.1" width="1.4" height="1.4"/><rect x="71.2" y="124.5" width="1.4" height="1.4"/><rect x="282.9" y="300.9" width="1.4" height="1.4"/><rect x="194.6" y="131.2" width="1.4" height="1.4"/><rect x="174.6" y="130.3" width="1.4" height="1.4"/><rect x="67.8" y="279.1" width="1.4" height="1.4"/><rect x="42.1" y="14.8" width="1.4" height="1.4"/><rect x="201.4" y="155.8" width="1.4" height="1.4"/><rect x="104.6" y="274.3" width="1.4" height="1.4"/><rect x="266.3" y="284.3" width="1.4" height="1.4"/><rect x="39.6" y="330.2" width="1.4" height="1.4"/><rect x="166.3" y="402.8" width="1.4" height="1.4"/><rect x="34" y="154.3" width="1.4" height="1.4"/><rect x="26.8" y="132" width="1.4" height="1.4"/><rect x="140.7" y="194.6" width="1.4" height="1.4"/><rect x="106.4" y="320.6" width="1.4" height="1.4"/><rect x="282.5" y="250.4" width="1.4" height="1.4"/><rect x="140.4" y="347.2" width="1.4" height="1.4"/><rect x="186.8" y="266.5" width="1.4" height="1.4"/><rect x="78.2" y="242.5" width="1.4" height="1.4"/><rect x="210.7" y="55.8" width="1.4" height="1.4"/><rect x="179.2" y="261.8" width="1.4" height="1.4"/><rect x="173.8" y="303.1" width="1.4" height="1.4"/><rect x="281.3" y="410.2" width="1.4" height="1.4"/><rect x="283.8" y="360.4" width="1.4" height="1.4"/><rect x="50.1" y="311.7" width="1.4" height="1.4"/><rect x="218.1" y="229" width="1.4" height="1.4"/><rect x="137.6" y="165.3" width="1.4" height="1.4"/><rect x="115.5" y="176.4" width="1.4" height="1.4"/><rect x="62.9" y="351" width="1.4" height="1.4"/><rect x="177.9" y="420.4" width="1.4" height="1.4"/><rect x="156.4" y="416.9" width="1.4" height="1.4"/><rect x="289.5" y="44.7" width="1.4" height="1.4"/><rect x="161.4" y="273" width="1.4" height="1.4"/><rect x="276.8" y="182.6" width="1.4" height="1.4"/><rect x="231.5" y="110.6" width="1.4" height="1.4"/><rect x="109.1" y="176.5" width="1.4" height="1.4"/><rect x="181.8" y="115.8" width="1.4" height="1.4"/><rect x="51" y="13.5" width="1.4" height="1.4"/><rect x="52.6" y="376.8" width="1.4" height="1.4"/><rect x="258.6" y="134.8" width="1.4" height="1.4"/><rect x="138.5" y="175.7" width="1.4" height="1.4"/><rect x="171.2" y="105" width="1.4" height="1.4"/><rect x="14.3" y="242" width="1.4" height="1.4"/><rect x="291.9" y="359.5" width="1.4" height="1.4"/><rect x="187" y="53.5" width="1.4" height="1.4"/><rect x="127.6" y="215" width="1.4" height="1.4"/><rect x="299.1" y="269.3" width="1.4" height="1.4"/><rect x="216.9" y="205.4" width="1.4" height="1.4"/><rect x="226.1" y="78.9" width="1.4" height="1.4"/><rect x="297.4" y="410.3" width="1.4" height="1.4"/><rect x="204.6" y="178.2" width="1.4" height="1.4"/><rect x="259.1" y="6.2" width="1.4" height="1.4"/><rect x="75" y="267" width="1.4" height="1.4"/><rect x="250.1" y="121.8" width="1.4" height="1.4"/><rect x="211.4" y="393.5" width="1.4" height="1.4"/><rect x="241.4" y="222.2" width="1.4" height="1.4"/><rect x="242.5" y="379.1" width="1.4" height="1.4"/><rect x="140" y="103.5" width="1.4" height="1.4"/><rect x="104.5" y="161" width="1.4" height="1.4"/><rect x="290.2" y="5.2" width="1.4" height="1.4"/><rect x="189.5" y="79.7" width="1.4" height="1.4"/><rect x="53.8" y="163.2" width="1.4" height="1.4"/><rect x="130.5" y="330.3" width="1.4" height="1.4"/><rect x="81.1" y="298.3" width="1.4" height="1.4"/><rect x="16.8" y="151.9" width="1.4" height="1.4"/><rect x="97.8" y="63.7" width="1.4" height="1.4"/><rect x="160.2" y="152.2" width="1.4" height="1.4"/><rect x="88.6" y="121.7" width="1.4" height="1.4"/><rect x="235.4" y="165.5" width="1.4" height="1.4"/><rect x="207.6" y="303.9" width="1.4" height="1.4"/><rect x="247.9" y="358.6" width="1.4" height="1.4"/><rect x="207.8" y="222.8" width="1.4" height="1.4"/><rect x="103.3" y="411.7" width="1.4" height="1.4"/><rect x="26.4" y="46.3" width="1.4" height="1.4"/><rect x="33" y="173.5" width="1.4" height="1.4"/><rect x="269.1" y="405.4" width="1.4" height="1.4"/><rect x="207.8" y="404.5" width="1.4" height="1.4"/><rect x="73" y="239.7" width="1.4" height="1.4"/><rect x="103.4" y="239.4" width="1.4" height="1.4"/><rect x="268.2" y="71.3" width="1.4" height="1.4"/><rect x="156.7" y="35.9" width="1.4" height="1.4"/><rect x="38.1" y="151.2" width="1.4" height="1.4"/><rect x="153.5" y="14.9" width="1.4" height="1.4"/><rect x="253.1" y="7" width="1.4" height="1.4"/><rect x="234" y="129.2" width="1.4" height="1.4"/><rect x="110.4" y="352.3" width="1.4" height="1.4"/><rect x="11.5" y="201.8" width="1.4" height="1.4"/><rect x="48.6" y="322.9" width="1.4" height="1.4"/><rect x="222.5" y="92" width="1.4" height="1.4"/><rect x="242.2" y="67.5" width="1.4" height="1.4"/><rect x="48.1" y="74.7" width="1.4" height="1.4"/><rect x="126.8" y="404.2" width="1.4" height="1.4"/><rect x="86.2" y="191.1" width="1.4" height="1.4"/><rect x="163.3" y="369.2" width="1.4" height="1.4"/><rect x="64" y="146.4" width="1.4" height="1.4"/><rect x="45.5" y="407.6" width="1.4" height="1.4"/><rect x="226.3" y="218.1" width="1.4" height="1.4"/><rect x="109.2" y="254.8" width="1.4" height="1.4"/><rect x="110.5" y="156.1" width="1.4" height="1.4"/><rect x="208.9" y="30.1" width="1.4" height="1.4"/><rect x="32.4" y="78.8" width="1.4" height="1.4"/><rect x="302.5" y="70.2" width="1.4" height="1.4"/><rect x="129.7" y="179.7" width="1.4" height="1.4"/><rect x="143.6" y="298.3" width="1.4" height="1.4"/><rect x="221.6" y="365.6" width="1.4" height="1.4"/><rect x="64.5" y="420.9" width="1.4" height="1.4"/><rect x="196.6" y="303.3" width="1.4" height="1.4"/><rect x="101.3" y="245.2" width="1.4" height="1.4"/><rect x="7.3" y="372.2" width="1.4" height="1.4"/><rect x="115.7" y="284" width="1.4" height="1.4"/><rect x="170.3" y="253.3" width="1.4" height="1.4"/><rect x="82.5" y="308.4" width="1.4" height="1.4"/><rect x="64.1" y="385.9" width="1.4" height="1.4"/><rect x="144.6" y="396.3" width="1.4" height="1.4"/><rect x="12.1" y="19.8" width="1.4" height="1.4"/><rect x="21.4" y="218.7" width="1.4" height="1.4"/><rect x="28.9" y="234.8" width="1.4" height="1.4"/><rect x="43.3" y="46.7" width="1.4" height="1.4"/><rect x="190.5" y="394.6" width="1.4" height="1.4"/><rect x="212.9" y="27.2" width="1.4" height="1.4"/><rect x="163.8" y="405.8" width="1.4" height="1.4"/><rect x="63.4" y="400.5" width="1.4" height="1.4"/><rect x="255.3" y="337" width="1.4" height="1.4"/><rect x="182.7" y="153.4" width="1.4" height="1.4"/><rect x="36.2" y="63.5" width="1.4" height="1.4"/><rect x="21.6" y="386.5" width="1.4" height="1.4"/><rect x="223.9" y="180.4" width="1.4" height="1.4"/><rect x="262.6" y="231.2" width="1.4" height="1.4"/><rect x="208.1" y="23.6" width="1.4" height="1.4"/><rect x="285.4" y="120.1" width="1.4" height="1.4"/><rect x="112.5" y="167.3" width="1.4" height="1.4"/><rect x="142.4" y="288.4" width="1.4" height="1.4"/><rect x="82.6" y="254.5" width="1.4" height="1.4"/><rect x="143.9" y="100.8" width="1.4" height="1.4"/><rect x="246.6" y="56.8" width="1.4" height="1.4"/><rect x="176.7" y="115.3" width="1.4" height="1.4"/><rect x="234.3" y="114.8" width="1.4" height="1.4"/><rect x="198.6" y="185" width="1.4" height="1.4"/><rect x="183.5" y="237.1" width="1.4" height="1.4"/><rect x="136.5" y="317.9" width="1.4" height="1.4"/><rect x="244.1" y="18.3" width="1.4" height="1.4"/><rect x="22.8" y="221.5" width="1.4" height="1.4"/><rect x="230.9" y="319.9" width="1.4" height="1.4"/><rect x="214.6" y="148.4" width="1.4" height="1.4"/><rect x="160.6" y="244.8" width="1.4" height="1.4"/><rect x="32" y="287.5" width="1.4" height="1.4"/><rect x="10.3" y="226.1" width="1.4" height="1.4"/><rect x="135.7" y="211.7" width="1.4" height="1.4"/><rect x="256.9" y="309.3" width="1.4" height="1.4"/><rect x="182.5" y="207.6" width="1.4" height="1.4"/><rect x="206.1" y="282" width="1.4" height="1.4"/><rect x="78.7" y="190.7" width="1.4" height="1.4"/><rect x="51.7" y="405.9" width="1.4" height="1.4"/><rect x="134" y="247.1" width="1.4" height="1.4"/><rect x="267.9" y="187.5" width="1.4" height="1.4"/><rect x="126.1" y="24.5" width="1.4" height="1.4"/><rect x="144" y="159.6" width="1.4" height="1.4"/><rect x="168.7" y="300.1" width="1.4" height="1.4"/><rect x="164.4" y="116.6" width="1.4" height="1.4"/><rect x="265.5" y="320.8" width="1.4" height="1.4"/><rect x="63.7" y="376.4" width="1.4" height="1.4"/><rect x="129.4" y="41.4" width="1.4" height="1.4"/><rect x="175.9" y="238.2" width="1.4" height="1.4"/><rect x="182.9" y="294.8" width="1.4" height="1.4"/><rect x="97" y="392.4" width="1.4" height="1.4"/><rect x="25.9" y="13.4" width="1.4" height="1.4"/><rect x="228" y="58.1" width="1.4" height="1.4"/><rect x="177.7" y="77.5" width="1.4" height="1.4"/><rect x="106.3" y="150.9" width="1.4" height="1.4"/><rect x="158.9" y="60.3" width="1.4" height="1.4"/><rect x="194" y="270.5" width="1.4" height="1.4"/><rect x="79.3" y="429.1" width="1.4" height="1.4"/><rect x="141.8" y="16.2" width="1.4" height="1.4"/><rect x="290.5" y="182" width="1.4" height="1.4"/><rect x="173.8" y="333.7" width="1.4" height="1.4"/><rect x="251.1" y="307.1" width="1.4" height="1.4"/><rect x="278.4" y="404.1" width="1.4" height="1.4"/><rect x="297" y="243.2" width="1.4" height="1.4"/><rect x="98.9" y="149.4" width="1.4" height="1.4"/><rect x="197.2" y="312.4" width="1.4" height="1.4"/><rect x="192.2" y="32" width="1.4" height="1.4"/><rect x="85.8" y="177" width="1.4" height="1.4"/><rect x="228.7" y="258.1" width="1.4" height="1.4"/><rect x="216.7" y="410.4" width="1.4" height="1.4"/><rect x="205.4" y="328.5" width="1.4" height="1.4"/><rect x="86.7" y="314.9" width="1.4" height="1.4"/><rect x="264" y="299.1" width="1.4" height="1.4"/><rect x="89.2" y="402.2" width="1.4" height="1.4"/><rect x="118.3" y="253" width="1.4" height="1.4"/><rect x="112.7" y="202.9" width="1.4" height="1.4"/><rect x="254.7" y="259.3" width="1.4" height="1.4"/><rect x="271.4" y="370" width="1.4" height="1.4"/><rect x="24.3" y="391.2" width="1.4" height="1.4"/><rect x="286" y="97.4" width="1.4" height="1.4"/><rect x="242.9" y="293.8" width="1.4" height="1.4"/><rect x="195.2" y="76.2" width="1.4" height="1.4"/><rect x="268.7" y="161" width="1.4" height="1.4"/><rect x="143.4" y="14.6" width="1.4" height="1.4"/><rect x="59.7" y="410.9" width="1.4" height="1.4"/><rect x="90.4" y="406.6" width="1.4" height="1.4"/><rect x="62.3" y="314.3" width="1.4" height="1.4"/><rect x="135.2" y="290.2" width="1.4" height="1.4"/><rect x="3.9" y="264" width="1.4" height="1.4"/><rect x="146.6" y="128.3" width="1.4" height="1.4"/><rect x="196.2" y="68.6" width="1.4" height="1.4"/><rect x="84.7" y="36.2" width="1.4" height="1.4"/><rect x="197.2" y="50.9" width="1.4" height="1.4"/><rect x="272.3" y="423.9" width="1.4" height="1.4"/><rect x="68.6" y="394.4" width="1.4" height="1.4"/><rect x="5.2" y="294.5" width="1.4" height="1.4"/><rect x="229.6" y="345.4" width="1.4" height="1.4"/><rect x="187.2" y="84.2" width="1.4" height="1.4"/><rect x="248.7" y="332.4" width="1.4" height="1.4"/><rect x="106.2" y="165.3" width="1.4" height="1.4"/><rect x="96.5" y="310.3" width="1.4" height="1.4"/><rect x="29.1" y="340.2" width="1.4" height="1.4"/><rect x="150.7" y="192.1" width="1.4" height="1.4"/><rect x="134" y="168.5" width="1.4" height="1.4"/><rect x="109.4" y="206.4" width="1.4" height="1.4"/><rect x="35.1" y="118.3" width="1.4" height="1.4"/><rect x="167.4" y="196.5" width="1.4" height="1.4"/><rect x="14" y="208.5" width="1.4" height="1.4"/><rect x="140.5" y="143.4" width="1.4" height="1.4"/><rect x="19" y="196.8" width="1.4" height="1.4"/><rect x="267.6" y="94.6" width="1.4" height="1.4"/><rect x="16.4" y="85" width="1.4" height="1.4"/><rect x="133.5" y="251.5" width="1.4" height="1.4"/><rect x="134.5" y="336.2" width="1.4" height="1.4"/><rect x="201.9" y="382.1" width="1.4" height="1.4"/><rect x="298.7" y="382.2" width="1.4" height="1.4"/><rect x="67.5" y="82.7" width="1.4" height="1.4"/><rect x="219.6" y="408.1" width="1.4" height="1.4"/><rect x="258.1" y="330.7" width="1.4" height="1.4"/><rect x="75.3" y="211.1" width="1.4" height="1.4"/><rect x="180.3" y="293.4" width="1.4" height="1.4"/><rect x="182.8" y="290.9" width="1.4" height="1.4"/><rect x="63.1" y="205.5" width="1.4" height="1.4"/><rect x="143" y="44.7" width="1.4" height="1.4"/><rect x="57" y="280.7" width="1.4" height="1.4"/><rect x="139.7" y="197.1" width="1.4" height="1.4"/><rect x="283.2" y="382.8" width="1.4" height="1.4"/><rect x="169.2" y="267" width="1.4" height="1.4"/><rect x="240.5" y="423.5" width="1.4" height="1.4"/><rect x="185.6" y="206.2" width="1.4" height="1.4"/><rect x="28.7" y="326.5" width="1.4" height="1.4"/><rect x="15.9" y="127.9" width="1.4" height="1.4"/><rect x="60.2" y="373.6" width="1.4" height="1.4"/><rect x="191.5" y="249.9" width="1.4" height="1.4"/><rect x="5.3" y="104.8" width="1.4" height="1.4"/><rect x="283.4" y="59.4" width="1.4" height="1.4"/><rect x="116.9" y="122.7" width="1.4" height="1.4"/><rect x="44.3" y="56.6" width="1.4" height="1.4"/><rect x="228.5" y="202.7" width="1.4" height="1.4"/><rect x="87.4" y="346.8" width="1.4" height="1.4"/><rect x="138.2" y="281" width="1.4" height="1.4"/><rect x="45.6" y="5.8" width="1.4" height="1.4"/><rect x="95.1" y="20.4" width="1.4" height="1.4"/><rect x="262.5" y="178.8" width="1.4" height="1.4"/><rect x="37" y="333.3" width="1.4" height="1.4"/><rect x="80.4" y="343" width="1.4" height="1.4"/><rect x="188.3" y="351.9" width="1.4" height="1.4"/><rect x="35.9" y="334.8" width="1.4" height="1.4"/><rect x="63.7" y="408" width="1.4" height="1.4"/><rect x="242.7" y="8.3" width="1.4" height="1.4"/><rect x="79.1" y="396.8" width="1.4" height="1.4"/><rect x="174.3" y="182.9" width="1.4" height="1.4"/><rect x="190.5" y="40.8" width="1.4" height="1.4"/><rect x="155.9" y="188.7" width="1.4" height="1.4"/><rect x="302.9" y="3.8" width="1.4" height="1.4"/><rect x="192.2" y="181.5" width="1.4" height="1.4"/><rect x="121.1" y="229.7" width="1.4" height="1.4"/><rect x="231" y="81.3" width="1.4" height="1.4"/><rect x="200.3" y="250.3" width="1.4" height="1.4"/><rect x="29.4" y="223.9" width="1.4" height="1.4"/><rect x="178.4" y="215.6" width="1.4" height="1.4"/><rect x="63.4" y="180.2" width="1.4" height="1.4"/><rect x="93.6" y="314.8" width="1.4" height="1.4"/><rect x="61" y="53.1" width="1.4" height="1.4"/><rect x="77.5" y="258.9" width="1.4" height="1.4"/><rect x="15.6" y="40.3" width="1.4" height="1.4"/><rect x="107.5" y="115.5" width="1.4" height="1.4"/><rect x="254" y="300.3" width="1.4" height="1.4"/><rect x="178.5" y="195.2" width="1.4" height="1.4"/><rect x="61.2" y="161" width="1.4" height="1.4"/><rect x="289.7" y="377.9" width="1.4" height="1.4"/><rect x="169.4" y="345" width="1.4" height="1.4"/><rect x="168.9" y="314.7" width="1.4" height="1.4"/><rect x="9.3" y="373.1" width="1.4" height="1.4"/><rect x="282.9" y="307.2" width="1.4" height="1.4"/><rect x="251.4" y="256.4" width="1.4" height="1.4"/><rect x="45.9" y="110.1" width="1.4" height="1.4"/><rect x="121.5" y="254.2" width="1.4" height="1.4"/><rect x="125.7" y="4.1" width="1.4" height="1.4"/><rect x="192.2" y="215.6" width="1.4" height="1.4"/><rect x="109.6" y="263" width="1.4" height="1.4"/><rect x="183.5" y="301.6" width="1.4" height="1.4"/><rect x="211.3" y="418.3" width="1.4" height="1.4"/><rect x="240.5" y="375.5" width="1.4" height="1.4"/><rect x="17" y="315.7" width="1.4" height="1.4"/><rect x="81.7" y="377.9" width="1.4" height="1.4"/><rect x="48.5" y="161.1" width="1.4" height="1.4"/><rect x="158.4" y="21.7" width="1.4" height="1.4"/><rect x="208.3" y="394.7" width="1.4" height="1.4"/><rect x="48.7" y="98.9" width="1.4" height="1.4"/><rect x="67.6" y="108.3" width="1.4" height="1.4"/><rect x="170.4" y="13.5" width="1.4" height="1.4"/><rect x="188.9" y="343" width="1.4" height="1.4"/><rect x="89.1" y="283.9" width="1.4" height="1.4"/><rect x="77.1" y="299.3" width="1.4" height="1.4"/><rect x="106" y="51.3" width="1.4" height="1.4"/><rect x="34.7" y="116.6" width="1.4" height="1.4"/><rect x="215.7" y="418.1" width="1.4" height="1.4"/><rect x="10.9" y="346.5" width="1.4" height="1.4"/><rect x="51.1" y="373" width="1.4" height="1.4"/><rect x="144" y="111.4" width="1.4" height="1.4"/><rect x="254.2" y="343" width="1.4" height="1.4"/><rect x="128.7" y="163.3" width="1.4" height="1.4"/><rect x="212.4" y="168.2" width="1.4" height="1.4"/><rect x="286.6" y="410.2" width="1.4" height="1.4"/><rect x="181.5" y="359.7" width="1.4" height="1.4"/><rect x="39.2" y="188" width="1.4" height="1.4"/><rect x="121.2" y="168.2" width="1.4" height="1.4"/><rect x="99.1" y="358.5" width="1.4" height="1.4"/><rect x="61.8" y="42.4" width="1.4" height="1.4"/><rect x="3.1" y="279.9" width="1.4" height="1.4"/><rect x="12.5" y="396.4" width="1.4" height="1.4"/><rect x="184.5" y="100.1" width="1.4" height="1.4"/><rect x="120.3" y="378" width="1.4" height="1.4"/><rect x="43.1" y="233" width="1.4" height="1.4"/><rect x="145.4" y="232.4" width="1.4" height="1.4"/><rect x="257.2" y="111.2" width="1.4" height="1.4"/><rect x="167.4" y="72.3" width="1.4" height="1.4"/><rect x="150" y="35.4" width="1.4" height="1.4"/><rect x="37" y="240.7" width="1.4" height="1.4"/><rect x="223.8" y="240.1" width="1.4" height="1.4"/><rect x="10.7" y="277.8" width="1.4" height="1.4"/><rect x="252.6" y="365.2" width="1.4" height="1.4"/><rect x="15.8" y="326.2" width="1.4" height="1.4"/><rect x="8.6" y="310.6" width="1.4" height="1.4"/><rect x="141.6" y="31.5" width="1.4" height="1.4"/><rect x="104.4" y="111.2" width="1.4" height="1.4"/><rect x="224.6" y="159.5" width="1.4" height="1.4"/><rect x="130.2" y="192.5" width="1.4" height="1.4"/><rect x="2.7" y="2.1" width="1.4" height="1.4"/><rect x="89.7" y="323.6" width="1.4" height="1.4"/><rect x="145" y="67.8" width="1.4" height="1.4"/><rect x="33" y="300.5" width="1.4" height="1.4"/><rect x="154.1" y="12.1" width="1.4" height="1.4"/><rect x="109.2" y="429.4" width="1.4" height="1.4"/><rect x="141.5" y="403.2" width="1.4" height="1.4"/><rect x="295.6" y="15.3" width="1.4" height="1.4"/><rect x="67.9" y="385" width="1.4" height="1.4"/><rect x="15.4" y="69.8" width="1.4" height="1.4"/><rect x="114.7" y="331.3" width="1.4" height="1.4"/><rect x="114.8" y="56.2" width="1.4" height="1.4"/><rect x="177.6" y="203.6" width="1.4" height="1.4"/><rect x="148.5" y="28.2" width="1.4" height="1.4"/><rect x="215.9" y="182.8" width="1.4" height="1.4"/><rect x="45.6" y="346.8" width="1.4" height="1.4"/><rect x="134.3" y="274.8" width="1.4" height="1.4"/><rect x="25.5" y="127.2" width="1.4" height="1.4"/><rect x="173.3" y="252.3" width="1.4" height="1.4"/></g><path d="M0 30L44 45L53 54L99 84L109 94L153 109L190 118L232 122" fill="none" stroke="#212830" stroke-linejoin="round" stroke-linecap="butt" stroke-width="4.600"/><path d="M270 113L266 134L252 160L241 189L246 214" fill="none" stroke="#5a5f66" stroke-width="2.600"/><path d="M258 218L266 245L277 281L281 323L279 365L275 436" fill="none" stroke="#2c323b" stroke-width="2.800"/><path d="M66 123L56 138L27 163L20 166" fill="none" stroke="#212830" stroke-linejoin="round" stroke-linecap="butt" stroke-width="2.800"/><path d="M60 29L63 0" fill="none" stroke="#212830" stroke-linejoin="round" stroke-linecap="butt" stroke-width="2.500"/><path d="M125 100L128 131" fill="none" stroke="#212830" stroke-linejoin="round" stroke-linecap="butt" stroke-width="3"/><path d="M4 0V14" fill="none" stroke="#212830" stroke-linejoin="round" stroke-linecap="butt" stroke-width="5"/><path d="M0 330L50 322L110 335L180 348L240 352L305 346" fill="none" stroke="#212830" stroke-linejoin="round" stroke-linecap="butt" stroke-width="1.600"/><path d="M45 57.500L99 88L66 123L31.500 98Z" fill="#212830" stroke="#ffffff" stroke-width=".8"/><path d="M47.500 62.500L94 88L65 118.500L36 97.500Z" fill="#232e2a" stroke="#ffffff" stroke-width=".9"/><g fill="none" stroke="#ffffff" stroke-width=".9"><circle cx="64" cy="91" r="4.800"/><circle cx="64" cy="91" r="2.200"/><path d="M50 68C56 72 56 80 48 84M56 68C62 72 70 72 76 80M86 86C80 88 78 94 82 98M72 106C68 102 60 104 58 110M42 96C48 94 52 98 50 104M54 78C58 82 62 82 64 86M72 86C76 84 80 86 80 90M49 70L56 68L70 76L84 86L80 98L66 110L54 106L42 98L44 82ZM54 94C56 100 62 102 68 100M74 80C70 76 64 76 58 80M46 88C50 86 56 90 56 96M70 96C74 98 78 96 80 92"/></g><g fill="none" stroke="#7fae90" stroke-width=".7"><path d="M50 74C54 78 52 84 46 88M74 98C70 102 64 102 60 98M60 70C66 74 72 78 78 84"/></g><path d="M45 0H98.500L92 21L69 23L47 12.500Z" fill="#2a4533" stroke="#cfd8cf" stroke-width=".6"/><path d="M50 2L88 14M60 0L64 20M74 0L78 18M52 10L90 4M56 6C66 12 78 10 86 4" stroke="#a8c4b0" stroke-width=".7" fill="none"/><path d="M82 0L94 16M48 6L70 18" stroke="#fff" stroke-width=".7" fill="none"/><path d="M59 29H72V48C64 46 60 38 59 29Z" fill="#212830" stroke="#ffffff" stroke-width=".7"/><path d="M62 30C62 38 66 42 71 43" fill="none" stroke="#ffffff" stroke-width=".7"/><path d="M245 0H279L306 38V88L279 52Z" fill="#212830" stroke="#ffffff" stroke-width=".8"/><g fill="none" stroke="#ffffff" stroke-width=".8"><path d="M252 0L306 78M259 0L306 66M272 0L306 48"/><path d="M268 14C274 10 280 16 278 24C276 30 270 30 268 26M284 36C290 32 298 40 294 48M262 4C266 2 270 6 268 10"/></g><path d="M272 128L280 121L306 143V170L298 166L279 181L269 151Z" fill="#212830" stroke="#ffffff" stroke-width=".8"/><path d="M180 10C184 0 204 -2 214 6C222 14 216 24 204 24C192 26 178 20 180 10Z" fill="#212830" stroke="#ffffff" stroke-width=".8"/><path d="M186 10C190 4 202 4 208 10C210 16 204 20 198 18M192 8C196 12 202 12 204 16" fill="none" stroke="#ffffff" stroke-width=".7"/><path d="M230.500 117.500L237 115.500L249.500 147L243 150Z" fill="#2f5238" stroke="#cfd8cf" stroke-width=".6"/><path d="M0 231L69 222V243L25 252L21 266H0Z" fill="#212830" stroke="#ffffff" stroke-width=".8"/><path d="M4 236L30 232V240L8 243ZM34 231L66 226V238L36 242Z" fill="none" stroke="#ffffff" stroke-width=".7"/><rect x="2" y="245" width="13" height="13" fill="none" stroke="#ffffff" stroke-width="1.200"/><circle cx="8.500" cy="251.500" r="3" fill="none" stroke="#ffffff" stroke-width="1"/><path d="M25 256L61 249.500L63 260L27 268Z" fill="#202a26" stroke="#ffffff" stroke-width=".7"/><path d="M28 264C36 256 50 254 60 256" fill="none" stroke="#5f9a70" stroke-width="1.200"/><path d="M28 260C38 254 50 252 60 253" fill="none" stroke="#ffffff" stroke-width=".6"/><path d="M67 184H92V204H67Z" fill="#222c28" stroke="#ffffff" stroke-width=".7"/><ellipse cx="77" cy="191" rx="7" ry="3.500" fill="none" stroke="#ffffff" stroke-width=".8"/><circle cx="88" cy="195" r="2" fill="none" stroke="#ffffff" stroke-width=".7"/><path d="M69 200H90M69 186H90" stroke="#5f9a70" stroke-width="1"/><ellipse cx="263" cy="364" rx="13" ry="8.500" fill="#212830" stroke="#ffffff" stroke-width="1"/><ellipse cx="263" cy="364" rx="9" ry="5" fill="none" stroke="#ffffff" stroke-width=".8"/><path d="M258 362H268" stroke="#ffffff" stroke-width="1.200"/><circle cx="264.700" cy="407" r="5.500" fill="#212830" stroke="#4f8a60" stroke-width="1.200"/><circle cx="264.700" cy="407" r="3" fill="none" stroke="#cfd8cf" stroke-width=".6"/><path d="M127.7 126.3l14.8 2.6l-2.3 12.8l-14.8 -2.6zM91.6 153l12.8 2.3l-2.1 11.8l-12.8 -2.3zM162.5 89.1l13.2 4.8l-6.2 16.9l-13.2 -4.8zM170.6 148.5l38.3 -11.7l2.6 8.6l-38.3 11.7zM122 197l12 0l0 14l-12 0zM257.5 209l15 0l0 20l-15 0zM71.6 232.2l15 .5l-1.3 36l-15 -.5zM87.9 232.6l18 .9l-1.8 34l-18 -.9zM63.3 266.9l24.9 2.2l-1.6 17.9l-24.9 -2.2zM15.6 284.8l28.5 -9.3l8.3 25.7l-28.5 9.3zM25.7 306.5l19 -6.2l5.6 17.1l-19 6.2zM60 283.2l28.7 4l-6.7 47.5l-28.7 -4zM88.1 279.8l17.9 1.6l-2.2 24.9l-17.9 -1.6zM119.5 262.5l33 0l0 27l-33 0zM107.6 265.3l10 .5l-1.2 23l-10 -.5zM125 229.8l13 .5l-1 30l-13 -.5zM141 222.8l13 .5l-.9 26l-13 -.5zM122.2 323.9l24.9 2.2l-1.2 13.9l-24.9 -2.2zM114.7 363.5l22.3 9l-9.7 24.1l-22.3 -9zM1 410.6l15.8 -2.8l4.2 23.6l-15.8 2.8zM38.7 409.2l27.9 -2.4l.7 8l-27.9 2.4zM74 382l10 0l0 10l-10 0zM126.5 403.5l23.9 2.1l-1 11l-23.9 -2.1zM168.8 327l12.5 0l0 21l-12.5 0zM183.4 327l20 0l0 21l-20 0zM283 306l20 0l0 20l-20 0zM282.5 340l15 0l0 20l-15 0zM277 396l10 0l0 20l-10 0zM259.5 373l15 0l0 18l-15 0zM178 384l12 0l0 12l-12 0zM194 386l9 0l0 12l-9 0zM206.5 384l17 0l0 10l-17 0zM226 382l11 0l0 14l-11 0zM195 401l10 0l0 16l-10 0zM235 361l10 0l0 12l-10 0zM196.5 420l11 0l0 10l-11 0zM161 265l13 0l0 18l-13 0zM186 305.5l14 0l0 17l-14 0zM200.9 236.1l20.9 1.8l-.7 8l-20.9 -1.8zM219.9 225.4l37.6 5.3l-1.4 9.9l-37.6 -5.3z" fill="#212830" stroke="#ffffff" stroke-width=".9"/><g fill="none" stroke="#ffffff" stroke-width=".9"><rect x="26" y="287" width="4" height="11" transform="rotate(-18 34 293)"/><rect x="37" y="287" width="4" height="11" transform="rotate(-18 34 293)"/><rect x="173.500" y="333" width="2.500" height="8"/><rect x="187" y="333" width="3.500" height="8"/><rect x="195" y="333" width="3.500" height="8"/><rect x="138" y="267" width="10" height="4"/><rect x="138" y="275" width="10" height="7"/></g></g><rect x=".5" y=".5" width="305" height="435" fill="none" stroke="#ededed" stroke-width="1"/></svg>
<svg class="a" style="left:690px;top:755px;" width="90" height="85" viewBox="0 0 90 85"><path d="M10.200 69.500V24M15.800 74.300H60" stroke="#f6dede" stroke-width="1.500" fill="none"/><rect x="5.800" y="69.500" width="10" height="9.600" fill="none" stroke="#f0f0f0" stroke-width="1.300"/><path d="M12.300 7.500L18.200 14.500L24.200 7.500M18.200 14.500V20.500" stroke="#ececec" stroke-width="1.300" fill="none"/><path d="M64.500 60.500L77.500 73M77.500 60.500L64.500 73" stroke="#ececec" stroke-width="1.300" fill="none"/></svg>
<div class="a" style="left:1165px;top:581.5px;width:139px;height:1px;background:#c832d2;"></div>
<div class="a" style="left:1315px;top:581.5px;width:139px;height:1px;background:#c832d2;"></div>
<div class="a" style="left:1309px;top:438px;width:1px;height:139px;background:#c832d2;"></div>
<div class="a" style="left:1309px;top:588px;width:1px;height:139px;background:#c832d2;"></div>
<div class="a" style="left:1304px;top:577px;width:11px;height:11px;background:transparent;box-sizing:border-box;border:1px solid #c832d2;"></div>
<svg class="a" style="left:1767px;top:211px;" width="140" height="140" viewBox="0 0 140 140"><circle cx="70" cy="70" r="53" fill="none" stroke="#434a54" stroke-width="13"/><rect x="44" y="44" width="52" height="52" fill="#a5a8ad"/><rect x="54" y="54" width="32" height="32" fill="#9ba0a7"/></svg>
<span class="t" style="left:1829.70px;top:211.92px;font:normal 700 21px/25px 'Liberation Sans',sans-serif;color:#b4b7bc;">N</span>
<span class="t" style="left:1829.90px;top:324.92px;font:normal 700 21px/25px 'Liberation Sans',sans-serif;color:#b4b7bc;">S</span>
<span class="t" style="left:1770.90px;top:268.52px;font:normal 700 21px/25px 'Liberation Sans',sans-serif;color:#b4b7bc;">W</span>
<span class="t" style="left:1886.60px;top:268.52px;font:normal 700 21px/25px 'Liberation Sans',sans-serif;color:#b4b7bc;">E</span>
<span class="t" style="left:1826.70px;top:273.30px;font:normal 700 13px/16px 'Liberation Sans',sans-serif;color:#4c525c;transform:scaleX(.8);transform-origin:0 0;">TOP</span>
<div class="a" style="left:1813px;top:368px;width:48px;height:18px;background:#9a9eaa;border-radius:3px;box-sizing:border-box;border:1px solid #83879a;"></div>
<span class="t" style="left:1817.00px;top:370.69px;font:normal 400 11px/13px 'Liberation Sans',sans-serif;color:#4f5562;letter-spacing:-0.832px;">WCS</span>
<svg class="a" style="left:1847px;top:373px;" width="9" height="7" viewBox="0 0 9 7"><path d="M0.5 0.5H8.5L4.5 6Z" fill="#a9adb8" stroke="#6a6f7c" stroke-width="0.8"/></svg>
<div class="a" style="left:1884px;top:411px;width:32px;height:212px;background:#53585f;border-radius:3px;box-sizing:border-box;border:1px solid #5e636b;"></div>
<svg class="a" style="left:1884px;top:411px;" width="32" height="212" viewBox="0 0 32 212"><g fill="none" stroke="#42474f" stroke-width="1.3"><circle cx="26" cy="6" r="2.6"/><path d="M5 31V27A7 7 0 0 1 19 27V39H12A7 7 0 0 1 5 31Z"/><circle cx="13" cy="30" r="3.4"/><path d="M6 80C7 86 10 87 14 87H20C23 84 24 78 25 72L23 71L21 76V66L19 65V74V64L17 63V74V65L15 64.5V76L11 74Z"/><path d="M5 90L19 104M19 90L5 104M5 94V90H9M15 90H19V94M5 100V104H9"/><circle cx="20" cy="107" r="4"/><path d="M23 110L27 114" stroke-width="2"/><ellipse cx="16" cy="140" rx="11" ry="4.5"/><path d="M14 149V134H11L16 127L21 134H18V149Z"/><rect x="5" y="169.500" width="5.5" height="5.5"/><rect x="13" y="169.500" width="5.5" height="5.5"/><rect x="21" y="169.500" width="5.5" height="5.5"/><rect x="5" y="178.500" width="16" height="12"/><circle cx="26" cy="206" r="2.6"/></g><g fill="#42474f"><path d="M13 51H19L16 54.5Z"/><path d="M13 120H19L16 123.5Z"/><path d="M13 157H19L16 160.500Z"/><path d="M10 181V188L17 184.500Z"/></g><text x="17" y="42" font-family="Liberation Sans, sans-serif" font-weight="700" font-size="8" fill="#42474f">2D</text></svg>
<div class="a" style="left:442px;top:891px;width:24px;height:88px;background:#222933;"></div>
<div class="a" style="left:466px;top:891px;width:1013px;height:67px;background:#9c9d9f;"></div>
<div class="a" style="left:466px;top:958px;width:1013px;height:1px;background:#70737a;"></div>
<div class="a" style="left:466px;top:959px;width:1013px;height:19px;background:#c3c4c6;"></div>
<div class="a" style="left:466px;top:978px;width:1013px;height:1px;background:#8a8c90;"></div>
<svg class="a" style="left:445px;top:894px;" width="17" height="6" viewBox="0 0 17 6"><rect x="0" y="0" width="1.5" height="1.5" fill="#d8dadd"/><rect x="0" y="2.6" width="1.5" height="1.5" fill="#d8dadd"/><rect x="2.4" y="0" width="1.5" height="1.5" fill="#d8dadd"/><rect x="2.4" y="2.6" width="1.5" height="1.5" fill="#d8dadd"/><rect x="4.8" y="0" width="1.5" height="1.5" fill="#d8dadd"/><rect x="4.8" y="2.6" width="1.5" height="1.5" fill="#d8dadd"/><rect x="7.2" y="0" width="1.5" height="1.5" fill="#d8dadd"/><rect x="7.2" y="2.6" width="1.5" height="1.5" fill="#d8dadd"/><rect x="9.6" y="0" width="1.5" height="1.5" fill="#d8dadd"/><rect x="9.6" y="2.6" width="1.5" height="1.5" fill="#d8dadd"/><rect x="12" y="0" width="1.5" height="1.5" fill="#d8dadd"/><rect x="12" y="2.6" width="1.5" height="1.5" fill="#d8dadd"/><rect x="14.4" y="0" width="1.5" height="1.5" fill="#d8dadd"/><rect x="14.4" y="2.6" width="1.5" height="1.5" fill="#d8dadd"/></svg>
<svg class="a" style="left:448px;top:908px;" width="10" height="10" viewBox="0 0 10 10"><path d="M1 1L9 9M9 1L1 9" stroke="#d8dadd" stroke-width="1.7"/></svg>
<svg class="a" style="left:444px;top:928px;" width="16" height="18" viewBox="0 0 16 18"><path d="M2 15.5L8.5 8.5A4 4 0 0 1 13.5 3L10.5 6L12 8L15 5A4 4 0 0 1 10 10L3.5 17Z" fill="#d8dadd" transform="translate(0,-1)"/></svg>
<span class="t" style="left:468.00px;top:896.95px;font:normal 400 11.7px/14px 'Liberation Mono',monospace;color:#15181c;letter-spacing:-0.023px;">Command: REC</span>
<span class="t" style="left:468.00px;top:911.95px;font:normal 400 11.7px/14px 'Liberation Mono',monospace;color:#15181c;letter-spacing:-0.025px;">RECTANG</span>
<span class="t" style="left:468.00px;top:926.95px;font:normal 400 11.7px/14px 'Liberation Mono',monospace;color:#15181c;letter-spacing:-0.021px;">Specify first corner point or [Chamfer/Elevation/Fillet/Thickness/Width]: 0,0</span>
<span class="t" style="left:468.00px;top:941.95px;font:normal 400 11.7px/14px 'Liberation Mono',monospace;color:#15181c;letter-spacing:-0.021px;">Specify other corner point or [Area/Dimensions/Rotation]: @0.841,1.189</span>
<span class="t" style="left:503.00px;top:961.95px;font:italic 400 11.7px/14px 'Liberation Mono',monospace;color:#5c5f65;letter-spacing:-0.100px;">Type a command</span>
<svg class="a" style="left:470px;top:963px;" width="16" height="12" viewBox="0 0 16 12"><rect x="0.5" y="0.5" width="15" height="10" fill="#d6d7d9" stroke="#4b4f57" stroke-width="1"/><rect x="1" y="1" width="14" height="2" fill="#4b4f57"/><path d="M3 5L5 6.5L3 8M6.5 8.5H10" stroke="#4b4f57" stroke-width="0.9" fill="none"/></svg>
<svg class="a" style="left:488px;top:966.5px;" width="7" height="4" viewBox="0 0 7 4"><path d="M0 0H7 L3.5 4 Z" fill="#3d4047"/></svg>
<svg class="a" style="left:1468px;top:966px;" width="7" height="4" viewBox="0 0 7 4"><path d="M0 4H7L3.5 0Z" fill="#3d4047"/></svg>
<div class="a" style="left:0px;top:980px;width:1920px;height:4px;background:#394250;"></div>
<div class="a" style="left:0px;top:984px;width:1920px;height:30px;background:#222933;"></div>
<div class="a" style="left:2px;top:1014px;width:1918px;height:24px;background:#3b4453;"></div>
<div class="a" style="left:0px;top:1038px;width:1920px;height:1px;background:#222933;"></div>
<svg class="a" style="left:8px;top:984px;" width="70" height="24" viewBox="0 0 70 24"><path d="M9.500 0H68.500L59.200 23.800H0.400Z" fill="#394250"/></svg>
<span class="t" style="left:25.50px;top:989.54px;font:normal 700 12px/14px 'Liberation Sans',sans-serif;color:#ffffff;letter-spacing:0.034px;">Model</span>
<span class="t" style="left:84.00px;top:989.84px;font:normal 400 12px/14px 'Liberation Sans',sans-serif;color:#e0e2e5;letter-spacing:-0.284px;">Layout1</span>
<span class="t" style="left:150.00px;top:989.84px;font:normal 400 12px/14px 'Liberation Sans',sans-serif;color:#e0e2e5;letter-spacing:-0.117px;">Layout2</span>
<svg class="a" style="left:134px;top:988px;" width="8" height="18" viewBox="0 0 8 18"><path d="M7 0L1 18" stroke="#4a5260" stroke-width="1.2"/></svg>
<svg class="a" style="left:200px;top:988px;" width="8" height="18" viewBox="0 0 8 18"><path d="M7 0L1 18" stroke="#4a5260" stroke-width="1.2"/></svg>
<svg class="a" style="left:240px;top:988px;" width="8" height="18" viewBox="0 0 8 18"><path d="M7 0L1 18" stroke="#4a5260" stroke-width="1.2"/></svg>
<svg class="a" style="left:217px;top:990px;" width="13" height="13" viewBox="0 0 13 13"><path d="M6.5 0.5V12.5M0.5 6.5H12.5" stroke="#f0f0f0" stroke-width="1.9"/></svg>
<div class="a" style="left:1350px;top:1014px;width:1px;height:24px;background:#2c333e;"></div>
<div class="a" style="left:1401px;top:1014px;width:1px;height:24px;background:#2c333e;"></div>
<div class="a" style="left:1468px;top:1014px;width:1px;height:24px;background:#2c333e;"></div>
<div class="a" style="left:1573px;top:1014px;width:1px;height:24px;background:#2c333e;"></div>
<div class="a" style="left:1638px;top:1014px;width:1px;height:24px;background:#2c333e;"></div>
<div class="a" style="left:1665px;top:1014px;width:1px;height:24px;background:#2c333e;"></div>
<div class="a" style="left:1774px;top:1014px;width:1px;height:24px;background:#2c333e;"></div>
<div class="a" style="left:1814px;top:1014px;width:1px;height:24px;background:#2c333e;"></div>
<div class="a" style="left:1842px;top:1014px;width:1px;height:24px;background:#2c333e;"></div>
<div class="a" style="left:1868px;top:1014px;width:1px;height:24px;background:#2c333e;"></div>
<span class="t" style="left:1355.00px;top:1018.84px;font:normal 400 12px/14px 'Liberation Sans',sans-serif;color:#e4e6e9;letter-spacing:-0.418px;">MODEL</span>
<svg class="a" style="left:1403px;top:1015px;" width="20" height="20" viewBox="0 0 20 20"><g fill="none" stroke="#e4e6e9" stroke-width="1.2"><path d="M6 3V17M10 3V17M14 3V17M3 6H17M3 10H17M3 14H17" stroke-width="1.1"/></g></svg>
<svg class="a" style="left:1427px;top:1015px;" width="20" height="20" viewBox="0 0 20 20"><g fill="none" stroke="#e4e6e9" stroke-width="1.2"><rect x="4.5" y="4.5" width="1.6" height="1.6" fill="#e4e6e9" stroke="none"/><rect x="4.5" y="8.7" width="1.6" height="1.6" fill="#e4e6e9" stroke="none"/><rect x="4.5" y="12.9" width="1.6" height="1.6" fill="#e4e6e9" stroke="none"/><rect x="8.7" y="4.5" width="1.6" height="1.6" fill="#e4e6e9" stroke="none"/><rect x="8.7" y="8.7" width="1.6" height="1.6" fill="#e4e6e9" stroke="none"/><rect x="8.7" y="12.9" width="1.6" height="1.6" fill="#e4e6e9" stroke="none"/><rect x="12.9" y="4.5" width="1.6" height="1.6" fill="#e4e6e9" stroke="none"/><rect x="12.9" y="8.7" width="1.6" height="1.6" fill="#e4e6e9" stroke="none"/><rect x="12.9" y="12.9" width="1.6" height="1.6" fill="#e4e6e9" stroke="none"/></g></svg>
<svg class="a" style="left:1454.5px;top:1024px;" width="7" height="4" viewBox="0 0 7 4"><path d="M0 0H7 L3.5 4 Z" fill="#e4e6e9"/></svg>
<svg class="a" style="left:1470px;top:1015px;" width="20" height="20" viewBox="0 0 20 20"><g fill="none" stroke="#e4e6e9" stroke-width="1.2"><path d="M4 3V17H17M4 12H9V17" stroke-width="1.3"/></g></svg>
<svg class="a" style="left:1493px;top:1015px;" width="20" height="20" viewBox="0 0 20 20"><g fill="none" stroke="#e4e6e9" stroke-width="1.2"><circle cx="9" cy="11" r="5.5"/><path d="M9 11H17M9 11L16 5"/></g></svg>
<svg class="a" style="left:1520.5px;top:1024px;" width="7" height="4" viewBox="0 0 7 4"><path d="M0 0H7 L3.5 4 Z" fill="#e4e6e9"/></svg>
<svg class="a" style="left:1534px;top:1015px;" width="20" height="20" viewBox="0 0 20 20"><path d="M4 4L15 17" stroke="#d84a55" stroke-width="1.3"/><path d="M10 3V18" stroke="#5dc878" stroke-width="1.3"/><path d="M16 6L6 15" stroke="#e4e6e9" stroke-width="1"/></svg>
<svg class="a" style="left:1560.5px;top:1024px;" width="7" height="4" viewBox="0 0 7 4"><path d="M0 0H7 L3.5 4 Z" fill="#e4e6e9"/></svg>
<svg class="a" style="left:1575px;top:1015px;" width="20" height="20" viewBox="0 0 20 20"><g fill="none" stroke="#e4e6e9" stroke-width="1.2"><path d="M3 16H17M4 16L15 6" stroke-width="1.3"/></g></svg>
<div class="a" style="left:1599px;top:1015px;width:22px;height:22px;background:#5b9bd5;"></div>
<svg class="a" style="left:1599px;top:1015px;" width="22" height="22" viewBox="0 0 22 22"><rect x="5" y="6" width="12" height="12" fill="none" stroke="#f2f6fa" stroke-width="1.4"/><rect x="2.5" y="3.5" width="5" height="5" fill="#5b9bd5" stroke="#f2f6fa" stroke-width="1.2"/></svg>
<svg class="a" style="left:1626.5px;top:1024px;" width="7" height="4" viewBox="0 0 7 4"><path d="M0 0H7 L3.5 4 Z" fill="#e4e6e9"/></svg>
<svg class="a" style="left:1642px;top:1016px;" width="18" height="18" viewBox="0 0 18 18"><rect x="1.5" y="1.5" width="15" height="15" fill="none" stroke="#e4e6e9" stroke-width="1.2"/><rect x="3" y="3" width="3" height="3" fill="#e4e6e9"/><rect x="3" y="9" width="3" height="3" fill="#e4e6e9"/><rect x="6" y="6" width="3" height="3" fill="#e4e6e9"/><rect x="6" y="12" width="3" height="3" fill="#e4e6e9"/><rect x="9" y="3" width="3" height="3" fill="#e4e6e9"/><rect x="9" y="9" width="3" height="3" fill="#e4e6e9"/><rect x="12" y="6" width="3" height="3" fill="#e4e6e9"/><rect x="12" y="12" width="3" height="3" fill="#e4e6e9"/></svg>
<svg class="a" style="left:1667px;top:1015px;" width="22" height="20" viewBox="0 0 22 20"><path d="M9 3L12 12L16 18H12.5L9 13L5.5 18H2L6 12Z" fill="#e4e6e9"/><circle cx="17" cy="5" r="2.2" fill="none" stroke="#e4e6e9" stroke-width="1.1"/></svg>
<svg class="a" style="left:1692px;top:1015px;" width="22" height="20" viewBox="0 0 22 20"><path d="M9 3L12 12L16 18H12.5L9 13L5.5 18H2L6 12Z" fill="#e4e6e9"/><path d="M17 2L14 7H16.5L14.5 11L19 5.5H16.5Z" fill="#e4e6e9"/></svg>
<svg class="a" style="left:1716px;top:1015px;" width="22" height="20" viewBox="0 0 22 20"><path d="M9 3L12 12L16 18H12.5L9 13L5.5 18H2L6 12Z" fill="#e4e6e9"/></svg>
<span class="t" style="left:1743.30px;top:1018.84px;font:normal 400 12px/14px 'Liberation Sans',sans-serif;color:#e4e6e9;letter-spacing:0.009px;">1:1</span>
<svg class="a" style="left:1760.5px;top:1024px;" width="7" height="4" viewBox="0 0 7 4"><path d="M0 0H7 L3.5 4 Z" fill="#e4e6e9"/></svg>
<svg class="a" style="left:1776px;top:1015px;" width="20" height="20" viewBox="0 0 20 20"><g transform="translate(10,10.5)"><circle r="5" fill="none" stroke="#e4e6e9" stroke-width="3.4"/><rect x="-1.6" y="-8.6" width="3.2" height="3.4" fill="#e4e6e9" transform="rotate(0)"/><rect x="-1.6" y="-8.6" width="3.2" height="3.4" fill="#e4e6e9" transform="rotate(45)"/><rect x="-1.6" y="-8.6" width="3.2" height="3.4" fill="#e4e6e9" transform="rotate(90)"/><rect x="-1.6" y="-8.6" width="3.2" height="3.4" fill="#e4e6e9" transform="rotate(135)"/><rect x="-1.6" y="-8.6" width="3.2" height="3.4" fill="#e4e6e9" transform="rotate(180)"/><rect x="-1.6" y="-8.6" width="3.2" height="3.4" fill="#e4e6e9" transform="rotate(225)"/><rect x="-1.6" y="-8.6" width="3.2" height="3.4" fill="#e4e6e9" transform="rotate(270)"/><rect x="-1.6" y="-8.6" width="3.2" height="3.4" fill="#e4e6e9" transform="rotate(315)"/></g></svg>
<svg class="a" style="left:1802.5px;top:1024px;" width="7" height="4" viewBox="0 0 7 4"><path d="M0 0H7 L3.5 4 Z" fill="#e4e6e9"/></svg>
<svg class="a" style="left:1819px;top:1017px;" width="17" height="17" viewBox="0 0 17 17"><path d="M8.5 0.5V16.5M0.5 8.5H16.5" stroke="#e4e6e9" stroke-width="1.7"/></svg>
<svg class="a" style="left:1845px;top:1015px;" width="20" height="20" viewBox="0 0 20 20"><g fill="none" stroke="#e4e6e9" stroke-width="1.2"><rect x="3.5" y="3.5" width="6" height="6"/><circle cx="14.5" cy="10.5" r="3"/><path d="M7 12.5L10.5 18H3.5Z"/></g></svg>
<svg class="a" style="left:1871px;top:1015px;" width="20" height="20" viewBox="0 0 20 20"><g fill="none" stroke="#e4e6e9" stroke-width="1.2"><rect x="2.500" y="4.500" width="15" height="11"/><path d="M11 8L14.500 6.500M14.500 6.500H12M14.500 6.500V9M9 12L5.500 13.500M5.500 13.500H8M5.500 13.500V11"/></g></svg>
<svg class="a" style="left:1898px;top:1018px;" width="16" height="16" viewBox="0 0 16 16"><path d="M0.5 2H15.5M0.5 8H15.5M0.5 14H15.5" stroke="#e4e6e9" stroke-width="2"/></svg>
</body></html>
